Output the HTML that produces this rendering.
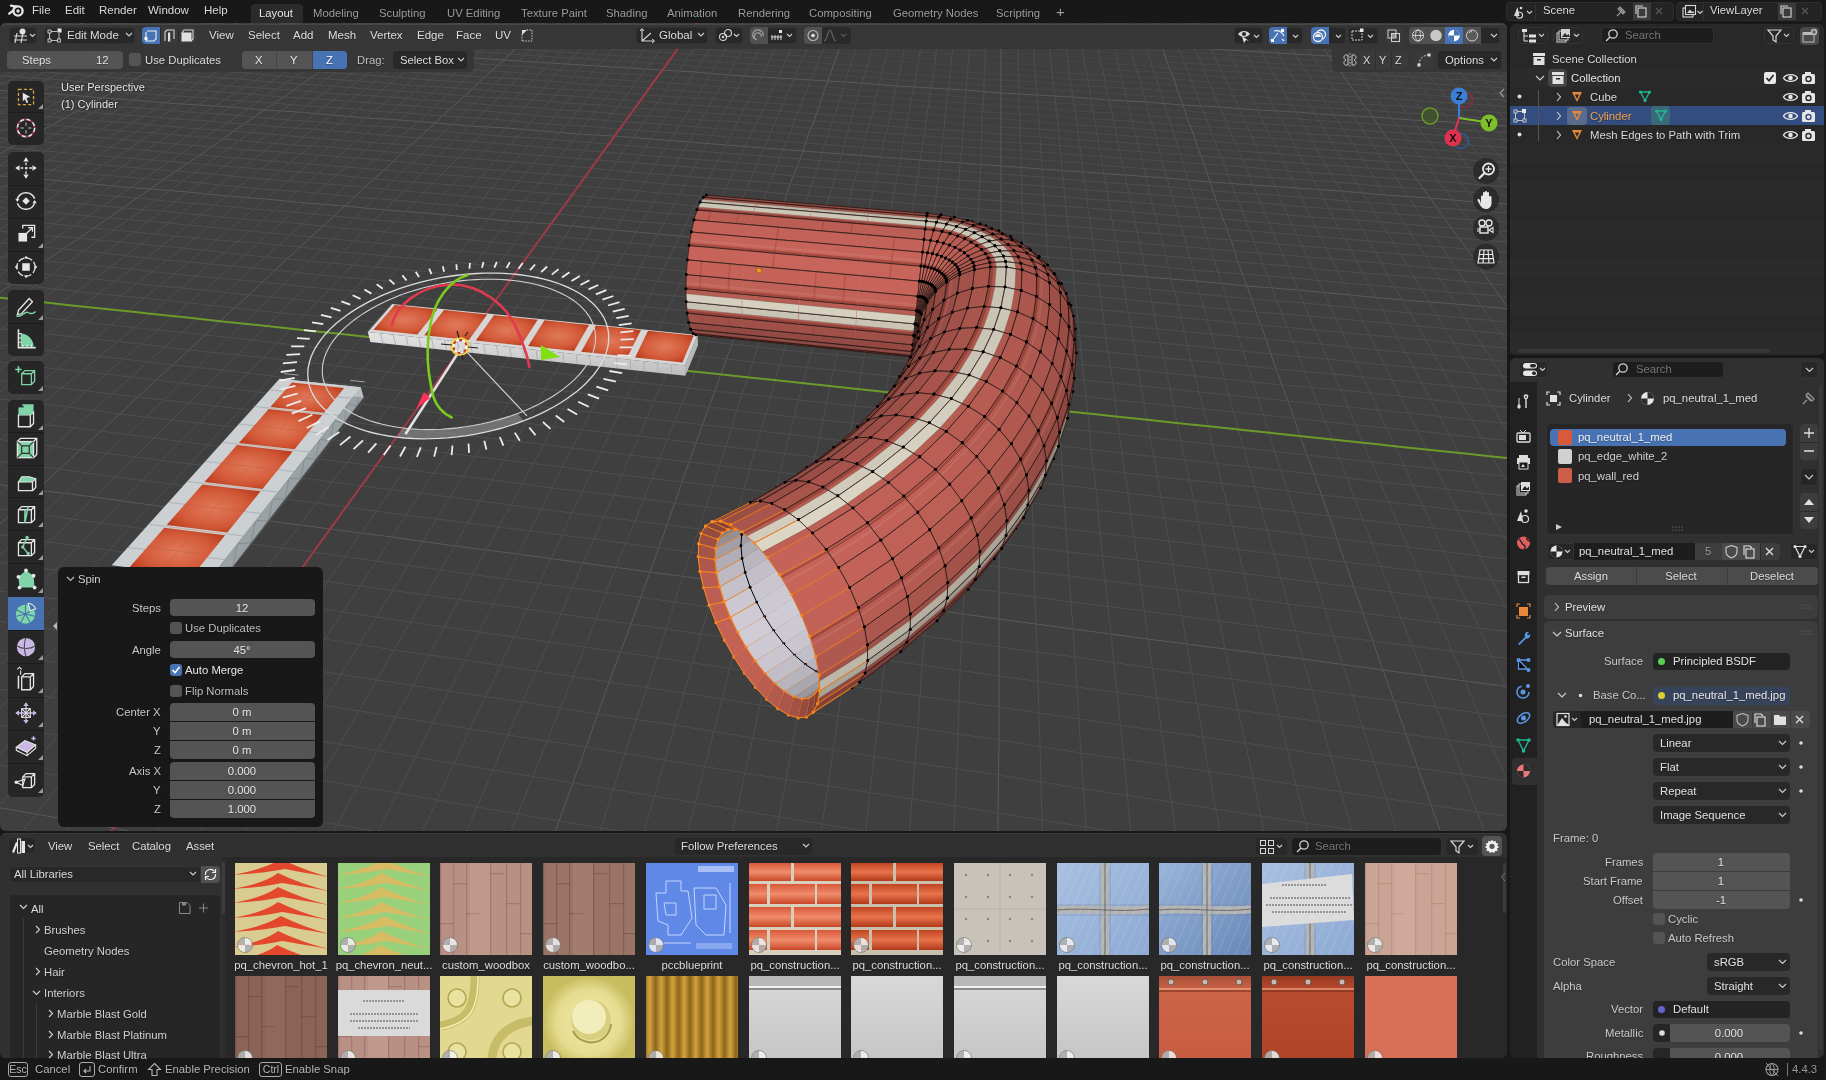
<!DOCTYPE html><html><head><meta charset="utf-8"><style>
html,body{margin:0;padding:0;overflow:hidden;}
body{width:1826px;height:1080px;position:relative;overflow:hidden;background:#181818;font-family:"Liberation Sans",sans-serif;font-size:11px;color:#d6d6d6;}
.r{position:absolute;box-sizing:border-box;}
.t{position:absolute;white-space:nowrap;line-height:14px;-webkit-font-smoothing:antialiased;will-change:transform;text-shadow:0 1px 1px rgba(0,0,0,.3);}
svg{position:absolute;}
.e{stroke:#141010;stroke-width:.8;stroke-opacity:.9;fill:none}
.eo{stroke:#e87a18;stroke-width:.9;fill:none}
.d{stroke:#000;stroke-width:2.9;stroke-linecap:round}
.do{stroke:#ff8a18;stroke-width:2.9;stroke-linecap:round}
</style></head><body>
<div class="r" style="left:0px;top:23px;width:1507px;height:808px;background:#3f3f3f;border-radius:6px;overflow:hidden;"></div>
<div class="r" style="left:0px;top:833px;width:1507px;height:225px;background:#2a2a2a;border-radius:6px;"></div>
<div class="r" style="left:1510px;top:24px;width:314px;height:331px;background:#282828;border-radius:6px;"></div>
<div class="r" style="left:1510px;top:358px;width:314px;height:700px;background:#2b2b2b;border-radius:6px;"></div>
<div class="r" style="left:1510px;top:358px;width:314px;height:24px;background:#303030;border-radius:6px 6px 0 0;"></div>
<div class="r" style="left:1519px;top:361px;width:29px;height:17px;background:#282828;border-radius:4px;border:1px solid #333;"></div>
<svg style="left:1521px;top:361px" width="27" height="17" viewBox="0 0 27 17"><rect x="2" y="2" width="14" height="5.5" rx="2.75" fill="#e6e6e6"/><rect x="9" y="3" width="6" height="3.5" rx="1.75" fill="#282828"/><rect x="2" y="9.5" width="14" height="5.5" rx="2.75" fill="#e6e6e6"/><rect x="11" y="10.5" width="4" height="3.5" rx="1.75" fill="#282828"/><path d="M19 7 l2.5 2.5 l2.5 -2.5" stroke="#cfcfcf" fill="none" stroke-width="1.1"/></svg>
<div class="r" style="left:1612px;top:361px;width:112px;height:17px;background:#1d1d1d;border-radius:4px;border:1px solid #303030;"></div>
<svg style="left:1614px;top:361px" width="16" height="17" viewBox="0 0 16 17"><circle cx="9" cy="7" r="4.2" fill="none" stroke="#cfcfcf" stroke-width="1.3"/><path d="M6 10 L2 14" stroke="#cfcfcf" stroke-width="1.5"/></svg>
<div class="t" style="left:1636px;top:362px;color:#777;font-size:11.3px;">Search</div>
<div class="r" style="left:1800px;top:361px;width:18px;height:17px;background:#282828;border-radius:4px;border:1px solid #333;"></div>
<svg style="left:1805px;top:367px" width="9" height="6"><path d="M1 1 l3.5 3.5 l3.5 -3.5" stroke="#cfcfcf" fill="none" stroke-width="1.1"/></svg>
<div class="r" style="left:1510px;top:382px;width:27px;height:676px;background:#212121;border-radius:0 0 0 6px;"></div>
<div class="r" style="left:1537px;top:382px;width:287px;height:676px;background:#303030;border-radius:0 0 6px 0;"></div>
<div class="r" style="left:1512px;top:758px;width:27px;height:27px;background:#303030;border-radius:4px 0 0 4px;"></div>
<svg style="left:1515px;top:392px" width="17" height="18" viewBox="0 0 17 18"><path d="M4 6 V13 M3 13 h2 v3 h-2 z" stroke="#ddd" fill="#ddd"/><path d="M11 3 C9 3 9 6 11 7 V16 M11 7 C13 6 13 3 11 3 M9.5 3 V5 M12.5 3 V5" stroke="#ddd" fill="none" stroke-width="1.4"/></svg>
<svg style="left:1515px;top:427px" width="17" height="18" viewBox="0 0 17 18"><rect x="2" y="6" width="13" height="9" rx="1" fill="none" stroke="#ddd" stroke-width="1.3"/><rect x="4" y="8" width="7" height="5" fill="#ddd"/><path d="M5 3 L8 6 L11 3" stroke="#ddd" fill="none"/></svg>
<svg style="left:1515px;top:453px" width="17" height="18" viewBox="0 0 17 18"><rect x="2" y="5" width="13" height="6" fill="#ddd"/><rect x="4" y="2" width="9" height="3" fill="#ddd"/><rect x="4" y="9" width="9" height="7" fill="#1d1d1d" stroke="#ddd"/><path d="M6 14 L8 11 L10 14" fill="#ddd"/></svg>
<svg style="left:1515px;top:480px" width="17" height="18" viewBox="0 0 17 18"><rect x="2" y="6" width="9" height="9" fill="none" stroke="#ddd"/><rect x="4" y="4" width="9" height="9" fill="#1d1d1d" stroke="#ddd"/><rect x="6" y="2" width="9" height="9" fill="#ddd"/><path d="M7 10 L10 6 L12 8.5 L14 6.5 V10 Z" fill="#1d1d1d"/></svg>
<svg style="left:1515px;top:507px" width="17" height="18" viewBox="0 0 17 18"><path d="M2 14 L6 4 L8 14 Z" fill="#ddd"/><circle cx="11" cy="4" r="1.8" fill="#ddd"/><circle cx="10" cy="12" r="3.5" fill="none" stroke="#ddd" stroke-width="1.2"/></svg>
<svg style="left:1515px;top:534px" width="17" height="18" viewBox="0 0 17 18"><circle cx="8.5" cy="9" r="6.5" fill="#e06060"/><path d="M4 5 C7 7 6 10 9 11 C11 12 10 14 9 15.5 M12 3.5 C11 5 13 7 15 7" stroke="#1d1d1d" fill="none" stroke-width="1.3"/></svg>
<svg style="left:1515px;top:568px" width="17" height="18" viewBox="0 0 17 18"><rect x="2.5" y="3" width="12" height="3.5" fill="#ddd"/><rect x="3.5" y="6.5" width="10" height="8" fill="none" stroke="#ddd" stroke-width="1.3"/><rect x="6.5" y="8.5" width="4" height="1.5" fill="#ddd"/></svg>
<svg style="left:1515px;top:602px" width="17" height="18" viewBox="0 0 17 18"><rect x="4" y="5" width="9" height="9" fill="#e8883a"/><path d="M2 5 V2 H5 M12 2 H15 V5 M15 13 V16 H12 M5 16 H2 V13" stroke="#e8883a" fill="none" stroke-width="1.2"/></svg>
<svg style="left:1515px;top:629px" width="17" height="18" viewBox="0 0 17 18"><path d="M3 15 L10 8 C9 5 11 2 14 3 L12 5 L13 6.5 L15 5 C16 8 13 10 11 9.5 L4.5 16 Z" fill="#5a98e6"/></svg>
<svg style="left:1515px;top:656px" width="17" height="18" viewBox="0 0 17 18"><circle cx="3.5" cy="4" r="2" fill="#5a98e6"/><circle cx="13.5" cy="4" r="2" fill="#5a98e6"/><circle cx="13.5" cy="14" r="2" fill="#5a98e6"/><path d="M3.5 4 V13 H13.5 M3.5 4 L13.5 14 M3.5 4 H12" stroke="#5a98e6" stroke-width="1.3"/></svg>
<svg style="left:1515px;top:682px" width="17" height="18" viewBox="0 0 17 18"><circle cx="8" cy="10" r="6" fill="none" stroke="#5a98e6" stroke-width="1.5" stroke-dasharray="26 12"/><circle cx="8" cy="10" r="2.5" fill="#5a98e6"/><circle cx="13" cy="4" r="2" fill="#5a98e6"/></svg>
<svg style="left:1515px;top:709px" width="17" height="18" viewBox="0 0 17 18"><ellipse cx="8.5" cy="9" rx="7" ry="4" transform="rotate(-35 8.5 9)" fill="none" stroke="#5a98e6" stroke-width="1.5"/><circle cx="8.5" cy="9" r="2.5" fill="#5a98e6"/></svg>
<svg style="left:1515px;top:736px" width="17" height="18" viewBox="0 0 17 18"><path d="M3 4 H14 L8.5 15 Z" fill="none" stroke="#21b792" stroke-width="1.4"/><circle cx="3" cy="4" r="1.8" fill="#21b792"/><circle cx="14" cy="4" r="1.8" fill="#21b792"/><circle cx="8.5" cy="15" r="1.8" fill="#21b792"/></svg>
<svg style="left:1515px;top:762px" width="17" height="18" viewBox="0 0 17 18"><circle cx="8.5" cy="9" r="6.5" fill="#e87878"/><path d="M8.5 9 V2.5 A6.5 6.5 0 0 1 15 9 Z M8.5 9 H2 A6.5 6.5 0 0 0 8.5 15.5 Z" fill="#2b2b2b"/></svg>
<svg style="left:1546px;top:391px" width="15" height="15" viewBox="0 0 15 15"><rect x="4" y="4" width="7" height="7" fill="#e0e0e0"/><path d="M1 4 V1 H4 M11 1 H14 V4 M14 11 V14 H11 M4 14 H1 V11" stroke="#e0e0e0" fill="none" stroke-width="1.2"/></svg>
<div class="t" style="left:1569px;top:391px;color:#dcdcdc;font-size:11.3px;">Cylinder</div>
<svg style="left:1626px;top:393px" width="8" height="10"><path d="M2 1 l3.5 4 l-3.5 4" stroke="#cfcfcf" fill="none" stroke-width="1.1"/></svg>
<svg style="left:1640px;top:391px" width="15" height="15" viewBox="0 0 15 15"><circle cx="7.5" cy="7.5" r="6.5" fill="#e8e8e8"/><path d="M7.5 7.5 V1 A6.5 6.5 0 0 1 14 7.5 Z M7.5 7.5 H1 A6.5 6.5 0 0 0 7.5 14 Z" fill="#2b2b2b"/></svg>
<div class="t" style="left:1663px;top:391px;color:#dcdcdc;font-size:11.3px;">pq_neutral_1_med</div>
<svg style="left:1801px;top:390px" width="16" height="16" viewBox="0 0 16 16"><path d="M2 14 L6 10 M5 6 L10 11 M7 3 L13 9 L11 11 L5 5 Z" stroke="#999" fill="none" stroke-width="1.2"/></svg>
<div class="r" style="left:1546px;top:423px;width:248px;height:112px;background:#262626;border-radius:5px;border:1px solid #333;"></div>
<div class="r" style="left:1550px;top:429px;width:236px;height:17px;background:#4772b3;border-radius:4px;"></div>
<div class="r" style="left:1558px;top:430px;width:14px;height:15px;background:#d85a3a;border-radius:2px;"></div>
<div class="t" style="left:1578px;top:430px;color:#f0f0f0;font-size:11.3px;">pq_neutral_1_med</div>
<div class="r" style="left:1558px;top:449px;width:14px;height:15px;background:#d0d0d0;border-radius:2px;"></div>
<div class="t" style="left:1578px;top:449px;color:#d0d0d0;font-size:11.3px;">pq_edge_white_2</div>
<div class="r" style="left:1558px;top:468px;width:14px;height:15px;background:#cc5e4a;border-radius:2px;"></div>
<div class="t" style="left:1578px;top:469px;color:#d0d0d0;font-size:11.3px;">pq_wall_red</div>
<svg style="left:1555px;top:523px" width="8" height="8"><path d="M1 1 L7 4 L1 7 Z" fill="#ccc"/></svg>
<svg style="left:1672px;top:526px" width="12" height="5"><path d="M1 1h0M4 1h0M7 1h0M10 1h0M1 4h0M4 4h0M7 4h0M10 4h0" stroke="#888" stroke-width="1.2" stroke-linecap="round"/></svg>
<div class="r" style="left:1800px;top:424px;width:18px;height:36px;background:#3d3d3d;border-radius:4px;"></div>
<div class="r" style="left:1800px;top:442px;width:18px;height:1px;background:#2b2b2b;"></div>
<svg style="left:1800px;top:424px" width="18" height="36"><path d="M9 4 V14 M4 9 H14 M4 27 H14" stroke="#e0e0e0" stroke-width="1.3"/></svg>
<div class="r" style="left:1800px;top:468px;width:18px;height:18px;background:#262626;border-radius:4px;border:1px solid #333;"></div>
<svg style="left:1804px;top:474px" width="10" height="7"><path d="M1 1 l4 4 l4 -4" stroke="#cfcfcf" fill="none" stroke-width="1.1"/></svg>
<div class="r" style="left:1800px;top:493px;width:18px;height:36px;background:#3d3d3d;border-radius:4px;"></div>
<svg style="left:1800px;top:493px" width="18" height="36"><path d="M4 12 L9 6 L14 12 Z M4 24 L9 30 L14 24 Z" fill="#e0e0e0"/></svg>
<div class="r" style="left:1800px;top:511px;width:18px;height:1px;background:#2b2b2b;"></div>
<div class="r" style="left:1547px;top:543px;width:27px;height:17px;background:#262626;border-radius:4px 0 0 4px;border:1px solid #333;"></div>
<svg style="left:1549px;top:544px" width="24" height="15" viewBox="0 0 24 15"><circle cx="7.5" cy="7.5" r="6" fill="#e8e8e8"/><path d="M7.5 7.5 V1.5 A6 6 0 0 1 13.5 7.5 Z M7.5 7.5 H1.5 A6 6 0 0 0 7.5 13.5 Z" fill="#262626"/><path d="M16 6 l2.5 2.5 l2.5 -2.5" stroke="#cfcfcf" fill="none" stroke-width="1.1"/></svg>
<div class="r" style="left:1574px;top:543px;width:121px;height:17px;background:#1d1d1d;"></div>
<div class="t" style="left:1579px;top:544px;color:#e0e0e0;font-size:11.3px;">pq_neutral_1_med</div>
<div class="r" style="left:1695px;top:543px;width:85px;height:17px;background:#3d3d3d;border-radius:0 4px 4px 0;"></div>
<div class="t" style="left:1705px;top:544px;color:#999;font-size:11.3px;">5</div>
<div class="r" style="left:1722px;top:543px;width:1px;height:17px;background:#2b2b2b;"></div>
<div class="r" style="left:1741px;top:543px;width:1px;height:17px;background:#2b2b2b;"></div>
<div class="r" style="left:1760px;top:543px;width:1px;height:17px;background:#2b2b2b;"></div>
<div class="r" style="left:1722px;top:543px;width:38px;height:17px;background:#4a4a4a;"></div>
<svg style="left:1722px;top:543px" width="58" height="17" viewBox="0 0 58 17"><path d="M9.5 2.5 L15 4.5 V9 C15 12 12 14 9.5 15 C7 14 4 12 4 9 V4.5 Z" fill="none" stroke="#cfcfcf" stroke-width="1.1"/><rect x="24" y="6" width="8" height="9" fill="none" stroke="#e0e0e0" stroke-width="1.1"/><path d="M22 12 V3 H28 L30 5" stroke="#e0e0e0" fill="none" stroke-width="1.1"/><path d="M44 5 l7 7 M51 5 l-7 7" stroke="#e0e0e0" stroke-width="1.3"/></svg>
<div class="r" style="left:1790px;top:543px;width:28px;height:17px;background:#262626;border-radius:4px;border:1px solid #333;"></div>
<svg style="left:1792px;top:543px" width="26" height="17" viewBox="0 0 26 17"><path d="M3 3.5 H13 L8 13.5 Z" fill="none" stroke="#e0e0e0" stroke-width="1.2"/><circle cx="3" cy="3.5" r="1.6" fill="#e0e0e0"/><circle cx="13" cy="3.5" r="1.6" fill="#e0e0e0"/><circle cx="8" cy="13.5" r="1.6" fill="#e0e0e0"/><path d="M17 7 l2.5 2.5 l2.5 -2.5" stroke="#cfcfcf" fill="none" stroke-width="1.1"/></svg>
<div class="r" style="left:1546px;top:567px;width:272px;height:18px;background:#4b4b4b;border-radius:4px;"></div>
<div class="r" style="left:1636px;top:567px;width:1px;height:18px;background:#3a3a3a;"></div>
<div class="r" style="left:1727px;top:567px;width:1px;height:18px;background:#3a3a3a;"></div>
<div class="t" style="left:1391px;width:400px;text-align:center;top:569px;color:#dcdcdc;font-size:11.3px;">Assign</div>
<div class="t" style="left:1481px;width:400px;text-align:center;top:569px;color:#dcdcdc;font-size:11.3px;">Select</div>
<div class="t" style="left:1572px;width:400px;text-align:center;top:569px;color:#dcdcdc;font-size:11.3px;">Deselect</div>
<div class="r" style="left:1544px;top:595px;width:274px;height:24px;background:#3d3d3d;border-radius:5px;"></div>
<svg style="left:1553px;top:602px" width="8" height="10"><path d="M2 1 l3.5 4 l-3.5 4" stroke="#cfcfcf" fill="none" stroke-width="1.1"/></svg>
<div class="t" style="left:1565px;top:600px;color:#e0e0e0;font-size:11.3px;">Preview</div>
<svg style="left:1801px;top:604px" width="12" height="6"><path d="M1 1h0M4 1h0M7 1h0M10 1h0M1 4h0M4 4h0M7 4h0M10 4h0" stroke="#777" stroke-width="1.1" stroke-linecap="round"/></svg>
<div class="r" style="left:1544px;top:621px;width:274px;height:437px;background:#3d3d3d;border-radius:5px 5px 0 0;"></div>
<svg style="left:1552px;top:630px" width="10" height="8"><path d="M1 2 l4 4 l4 -4" stroke="#cfcfcf" fill="none" stroke-width="1.1"/></svg>
<div class="t" style="left:1565px;top:626px;color:#e0e0e0;font-size:11.3px;">Surface</div>
<svg style="left:1801px;top:630px" width="12" height="6"><path d="M1 1h0M4 1h0M7 1h0M10 1h0M1 4h0M4 4h0M7 4h0M10 4h0" stroke="#777" stroke-width="1.1" stroke-linecap="round"/></svg>
<div class="t" style="right:183px;top:654px;color:#c8c8c8;font-size:11.3px;">Surface</div>
<div class="r" style="left:1653px;top:653px;width:137px;height:17px;background:#232323;border-radius:4px;"></div>
<svg style="left:1657px;top:657px" width="9" height="9"><circle cx="4.5" cy="4.5" r="3.5" fill="#5ad05a"/></svg>
<div class="t" style="left:1673px;top:654px;color:#e0e0e0;font-size:11.3px;">Principled BSDF</div>
<svg style="left:1557px;top:691px" width="10" height="8"><path d="M1 2 l4 4 l4 -4" stroke="#cfcfcf" fill="none" stroke-width="1.1"/></svg>
<svg style="left:1578px;top:693px" width="5" height="5"><circle cx="2.5" cy="2.5" r="1.8" fill="#ddd"/></svg>
<div class="t" style="left:1593px;top:688px;color:#c8c8c8;font-size:11.3px;">Base Co...</div>
<div class="r" style="left:1653px;top:687px;width:137px;height:18px;background:#37435a;border-radius:4px;"></div>
<svg style="left:1657px;top:691px" width="9" height="9"><circle cx="4.5" cy="4.5" r="3.5" fill="#d8d030"/></svg>
<div class="t" style="left:1673px;top:688px;color:#e6e6e6;font-size:11.3px;">pq_neutral_1_med.jpg</div>
<div class="r" style="left:1553px;top:711px;width:28px;height:17px;background:#262626;border-radius:4px 0 0 4px;"></div>
<svg style="left:1555px;top:711px" width="26" height="17" viewBox="0 0 26 17"><rect x="2" y="2.5" width="12" height="12" fill="none" stroke="#e0e0e0" stroke-width="1.2"/><path d="M2.5 14 L7 7 L10 11 L14 14 Z" fill="#e0e0e0"/><circle cx="10.5" cy="5.5" r="1.3" fill="#e0e0e0"/><path d="M17 7 l2.5 2.5 l2.5 -2.5" stroke="#cfcfcf" fill="none" stroke-width="1.1"/></svg>
<div class="r" style="left:1581px;top:711px;width:152px;height:17px;background:#1d1d1d;"></div>
<div class="t" style="left:1589px;top:712px;color:#e0e0e0;font-size:11.3px;">pq_neutral_1_med.jpg</div>
<div class="r" style="left:1733px;top:711px;width:77px;height:17px;background:#4a4a4a;border-radius:0 4px 4px 0;"></div>
<div class="r" style="left:1752px;top:711px;width:1px;height:17px;background:#3a3a3a;"></div>
<div class="r" style="left:1771px;top:711px;width:1px;height:17px;background:#3a3a3a;"></div>
<div class="r" style="left:1790px;top:711px;width:1px;height:17px;background:#3a3a3a;"></div>
<svg style="left:1733px;top:711px" width="77" height="17" viewBox="0 0 77 17"><path d="M9.5 2.5 L15 4.5 V9 C15 12 12 14 9.5 15 C7 14 4 12 4 9 V4.5 Z" fill="none" stroke="#bbb" stroke-width="1.1"/><rect x="24" y="6" width="8" height="9" fill="none" stroke="#e0e0e0" stroke-width="1.1"/><path d="M22 12 V3 H28 L30 5" stroke="#e0e0e0" fill="none" stroke-width="1.1"/><path d="M41 4 H46 L47 5.5 H53 V14 H41 Z" fill="#e0e0e0"/><path d="M63 5 l7 7 M70 5 l-7 7" stroke="#e0e0e0" stroke-width="1.3"/></svg>
<div class="r" style="left:1653px;top:734px;width:137px;height:18px;background:#282828;border-radius:4px;"></div>
<div class="t" style="left:1660px;top:736px;color:#e0e0e0;font-size:11.3px;">Linear</div>
<svg style="left:1778px;top:740px" width="9" height="6"><path d="M1 1 l3.5 3.5 l3.5 -3.5" stroke="#cfcfcf" fill="none" stroke-width="1.1"/></svg>
<svg style="left:1798px;top:740px" width="6" height="6"><circle cx="3" cy="3" r="1.8" fill="#ddd"/></svg>
<div class="r" style="left:1653px;top:758px;width:137px;height:18px;background:#282828;border-radius:4px;"></div>
<div class="t" style="left:1660px;top:760px;color:#e0e0e0;font-size:11.3px;">Flat</div>
<svg style="left:1778px;top:764px" width="9" height="6"><path d="M1 1 l3.5 3.5 l3.5 -3.5" stroke="#cfcfcf" fill="none" stroke-width="1.1"/></svg>
<svg style="left:1798px;top:764px" width="6" height="6"><circle cx="3" cy="3" r="1.8" fill="#ddd"/></svg>
<div class="r" style="left:1653px;top:782px;width:137px;height:18px;background:#282828;border-radius:4px;"></div>
<div class="t" style="left:1660px;top:784px;color:#e0e0e0;font-size:11.3px;">Repeat</div>
<svg style="left:1778px;top:788px" width="9" height="6"><path d="M1 1 l3.5 3.5 l3.5 -3.5" stroke="#cfcfcf" fill="none" stroke-width="1.1"/></svg>
<svg style="left:1798px;top:788px" width="6" height="6"><circle cx="3" cy="3" r="1.8" fill="#ddd"/></svg>
<div class="r" style="left:1653px;top:806px;width:137px;height:18px;background:#282828;border-radius:4px;"></div>
<div class="t" style="left:1660px;top:808px;color:#e0e0e0;font-size:11.3px;">Image Sequence</div>
<svg style="left:1778px;top:812px" width="9" height="6"><path d="M1 1 l3.5 3.5 l3.5 -3.5" stroke="#cfcfcf" fill="none" stroke-width="1.1"/></svg>
<div class="t" style="left:1553px;top:831px;color:#c8c8c8;font-size:11.3px;">Frame: 0</div>
<div class="t" style="right:183px;top:855px;color:#c8c8c8;font-size:11.3px;">Frames</div>
<div class="r" style="left:1653px;top:853px;width:137px;height:18px;background:#545454;border-radius:4px 4px 0 0;"></div>
<div class="t" style="left:1521px;width:400px;text-align:center;top:855px;color:#e0e0e0;font-size:11.3px;">1</div>
<div class="t" style="right:183px;top:874px;color:#c8c8c8;font-size:11.3px;">Start Frame</div>
<div class="r" style="left:1653px;top:872px;width:137px;height:18px;background:#545454;border-radius:0;"></div>
<div class="t" style="left:1521px;width:400px;text-align:center;top:874px;color:#e0e0e0;font-size:11.3px;">1</div>
<div class="t" style="right:183px;top:893px;color:#c8c8c8;font-size:11.3px;">Offset</div>
<div class="r" style="left:1653px;top:891px;width:137px;height:18px;background:#545454;border-radius:0 0 4px 4px;"></div>
<div class="t" style="left:1521px;width:400px;text-align:center;top:893px;color:#e0e0e0;font-size:11.3px;">-1</div>
<svg style="left:1798px;top:897px" width="6" height="6"><circle cx="3" cy="3" r="1.8" fill="#ddd"/></svg>
<div class="r" style="left:1653px;top:913px;width:12px;height:12px;background:#545454;border-radius:3px;"></div>
<div class="t" style="left:1668px;top:912px;color:#c8c8c8;font-size:11.3px;">Cyclic</div>
<div class="r" style="left:1653px;top:932px;width:12px;height:12px;background:#545454;border-radius:3px;"></div>
<div class="t" style="left:1668px;top:931px;color:#c8c8c8;font-size:11.3px;">Auto Refresh</div>
<div class="t" style="left:1553px;top:955px;color:#c8c8c8;font-size:11.3px;">Color Space</div>
<div class="r" style="left:1707px;top:953px;width:83px;height:18px;background:#282828;border-radius:4px;"></div>
<div class="t" style="left:1714px;top:955px;color:#e0e0e0;font-size:11.3px;">sRGB</div>
<svg style="left:1778px;top:959px" width="9" height="6"><path d="M1 1 l3.5 3.5 l3.5 -3.5" stroke="#cfcfcf" fill="none" stroke-width="1.1"/></svg>
<div class="t" style="left:1553px;top:979px;color:#c8c8c8;font-size:11.3px;">Alpha</div>
<div class="r" style="left:1707px;top:977px;width:83px;height:18px;background:#282828;border-radius:4px;"></div>
<div class="t" style="left:1714px;top:979px;color:#e0e0e0;font-size:11.3px;">Straight</div>
<svg style="left:1778px;top:983px" width="9" height="6"><path d="M1 1 l3.5 3.5 l3.5 -3.5" stroke="#cfcfcf" fill="none" stroke-width="1.1"/></svg>
<div class="t" style="right:183px;top:1002px;color:#c8c8c8;font-size:11.3px;">Vector</div>
<div class="r" style="left:1653px;top:1001px;width:137px;height:17px;background:#232323;border-radius:4px;"></div>
<svg style="left:1657px;top:1005px" width="9" height="9"><circle cx="4.5" cy="4.5" r="3.5" fill="#6464d0"/></svg>
<div class="t" style="left:1673px;top:1002px;color:#e0e0e0;font-size:11.3px;">Default</div>
<div class="t" style="right:183px;top:1026px;color:#c8c8c8;font-size:11.3px;">Metallic</div>
<div class="r" style="left:1653px;top:1024px;width:137px;height:18px;background:#545454;border-radius:4px;"></div>
<div class="r" style="left:1653px;top:1024px;width:17px;height:18px;background:#262626;border-radius:4px 0 0 4px;"></div>
<svg style="left:1658px;top:1029px" width="8" height="8"><circle cx="4" cy="4" r="2.8" fill="#ddd"/></svg>
<div class="t" style="left:1529px;width:400px;text-align:center;top:1026px;color:#e0e0e0;font-size:11.3px;">0.000</div>
<svg style="left:1798px;top:1030px" width="6" height="6"><circle cx="3" cy="3" r="1.8" fill="#ddd"/></svg>
<div class="t" style="right:183px;top:1049px;color:#c8c8c8;font-size:11.3px;">Roughness</div>
<div class="r" style="left:1653px;top:1048px;width:137px;height:10px;background:#545454;border-radius:4px 4px 0 0;"></div>
<div class="r" style="left:1653px;top:1048px;width:17px;height:10px;background:#262626;border-radius:4px 0 0 0;"></div>
<div class="t" style="left:1529px;width:400px;text-align:center;top:1050px;color:#e0e0e0;font-size:11.3px;">0.000</div>
<div class="r" style="left:1819px;top:385px;width:3px;height:665px;background:#3a3a3a;border-radius:2px;"></div>
<div class="r" style="left:0px;top:1058px;width:1826px;height:22px;background:#181818;"></div>
<div class="r" style="left:8px;top:1062px;width:20px;height:15px;background:transparent;border:1px solid #aaa;border-radius:3px;"></div>
<div class="t" style="left:-182.0px;width:400px;text-align:center;top:1062px;color:#b4b4b4;font-size:10.5px;">Esc</div>
<div class="t" style="left:35px;top:1062px;color:#b4b4b4;font-size:11.3px;">Cancel</div>
<div class="r" style="left:79px;top:1062px;width:16px;height:15px;background:transparent;border:1px solid #aaa;border-radius:3px;"></div>
<svg style="left:81px;top:1063px" width="12" height="13"><path d="M9 3 V8 H3 M5 6 L3 8 L5 10" stroke="#b4b4b4" fill="none" stroke-width="1.1"/></svg>
<div class="t" style="left:98px;top:1062px;color:#b4b4b4;font-size:11.3px;">Confirm</div>
<svg style="left:147px;top:1062px" width="15" height="15" viewBox="0 0 15 15"><path d="M7.5 1.5 L13.5 7.5 H10 V13.5 H5 V7.5 H1.5 Z" fill="none" stroke="#b4b4b4" stroke-width="1.1"/></svg>
<div class="t" style="left:165px;top:1062px;color:#b4b4b4;font-size:11.3px;">Enable Precision</div>
<div class="r" style="left:259px;top:1062px;width:23px;height:15px;background:transparent;border:1px solid #aaa;border-radius:3px;"></div>
<div class="t" style="left:70.5px;width:400px;text-align:center;top:1062px;color:#b4b4b4;font-size:10.5px;">Ctrl</div>
<div class="t" style="left:285px;top:1062px;color:#b4b4b4;font-size:11.3px;">Enable Snap</div>
<svg style="left:1764px;top:1062px" width="16" height="15" viewBox="0 0 16 15"><circle cx="8" cy="7.5" r="6" fill="none" stroke="#999" stroke-width="1.1"/><path d="M2 7.5 H14 M8 1.5 C5 4 5 11 8 13.5 M8 1.5 C11 4 11 11 8 13.5 M2 1 L14 14" stroke="#999" fill="none" stroke-width="1"/></svg>
<div class="r" style="left:1787px;top:1063px;width:1px;height:13px;background:#777;"></div>
<div class="t" style="left:1792px;top:1062px;color:#999;font-size:11.3px;">4.4.3</div>
<svg style="left:0px;top:0px" width="26" height="20" viewBox="0 0 26 20">
<path d="M9.2 13.6 L14.5 9.6 M11 5.6 L16.5 6.8" stroke="#e6e6e6" stroke-width="2.3" stroke-linecap="round"/>
<path d="M10.8 5.2 L17.5 5.4 L14.5 8.5 Z" fill="#e6e6e6"/>
<circle cx="18" cy="11" r="4.6" fill="#181818" stroke="#e6e6e6" stroke-width="2.4"/><circle cx="18" cy="11" r="1.7" fill="#e6e6e6"/>
</svg>
<div class="t" style="left:32px;top:3.3000000000000007px;color:#d9d9d9;font-size:11.5px;">File</div>
<div class="t" style="left:65px;top:3.3000000000000007px;color:#d9d9d9;font-size:11.5px;">Edit</div>
<div class="t" style="left:99px;top:3.3000000000000007px;color:#d9d9d9;font-size:11.5px;">Render</div>
<div class="t" style="left:148px;top:3.3000000000000007px;color:#d9d9d9;font-size:11.5px;">Window</div>
<div class="t" style="left:204px;top:3.3000000000000007px;color:#d9d9d9;font-size:11.5px;">Help</div>
<div class="r" style="left:251px;top:4px;width:52px;height:19px;background:#2b2b2b;border-radius:4px 4px 0 0;"></div>
<div class="t" style="left:259px;top:6px;color:#e6e6e6;font-size:11.3px;">Layout</div>
<div class="t" style="left:313px;top:6px;color:#9c9c9c;font-size:11.3px;">Modeling</div>
<div class="t" style="left:379px;top:6px;color:#9c9c9c;font-size:11.3px;">Sculpting</div>
<div class="t" style="left:447px;top:6px;color:#9c9c9c;font-size:11.3px;">UV Editing</div>
<div class="t" style="left:521px;top:6px;color:#9c9c9c;font-size:11.3px;">Texture Paint</div>
<div class="t" style="left:606px;top:6px;color:#9c9c9c;font-size:11.3px;">Shading</div>
<div class="t" style="left:667px;top:6px;color:#9c9c9c;font-size:11.3px;">Animation</div>
<div class="t" style="left:738px;top:6px;color:#9c9c9c;font-size:11.3px;">Rendering</div>
<div class="t" style="left:809px;top:6px;color:#9c9c9c;font-size:11.3px;">Compositing</div>
<div class="t" style="left:893px;top:6px;color:#9c9c9c;font-size:11.3px;">Geometry Nodes</div>
<div class="t" style="left:996px;top:6px;color:#9c9c9c;font-size:11.3px;">Scripting</div>
<div class="t" style="left:1056px;top:5px;color:#9c9c9c;font-size:15px;">+</div>
<div class="r" style="left:1506px;top:2px;width:168px;height:19px;background:#242424;border-radius:4px;border:1px solid #2e2e2e;"></div>
<div class="r" style="left:1535px;top:3px;width:1px;height:17px;background:#303030;"></div>
<svg style="left:1510px;top:3px" width="26" height="17" viewBox="0 0 26 17"><path d="M4 13 L7.5 4 L9.5 13 Z" fill="#d8d8d8"/><circle cx="11" cy="5" r="1.3" fill="#d8d8d8"/><circle cx="9.6" cy="12.2" r="3" fill="none" stroke="#d8d8d8" stroke-width="1.1"/><path d="M17 8 l2.5 2.5 l2.5 -2.5" stroke="#cfcfcf" fill="none" stroke-width="1.1"/></svg>
<div class="t" style="left:1543px;top:3px;color:#d9d9d9;font-size:11.3px;">Scene</div>
<svg style="left:1611px;top:3px" width="60" height="17" viewBox="0 0 60 17"><path d="M6 13 L9.5 9.5 M8 5 L13 10 M9 4 L14 9 L12 11 L7 6 Z" stroke="#9a9a9a" fill="none" stroke-width="1.1"/><rect x="22" y="0" width="18" height="17" fill="#3b3b3b"/><rect x="27" y="5" width="8" height="9" fill="none" stroke="#d8d8d8" stroke-width="1.1"/><path d="M25 11 V3 H32" stroke="#d8d8d8" fill="none" stroke-width="1.1"/><path d="M45 5 l6 6 M51 5 l-6 6" stroke="#5a5a5a" stroke-width="1.1"/></svg>
<div class="r" style="left:1676px;top:2px;width:146px;height:19px;background:#242424;border-radius:4px;border:1px solid #2e2e2e;"></div>
<div class="r" style="left:1703px;top:3px;width:1px;height:17px;background:#303030;"></div>
<svg style="left:1680px;top:3px" width="26" height="17" viewBox="0 0 26 17"><rect x="3" y="5" width="10" height="9" fill="none" stroke="#d8d8d8" stroke-width="1.1"/><rect x="5.5" y="2.5" width="10" height="9" fill="#242424" stroke="#d8d8d8" stroke-width="1.1"/><path d="M7 10 L10 6.5 L12 9 L13 8 L14.5 10 Z" fill="#d8d8d8"/><path d="M17.5 8 l2.5 2.5 l2.5 -2.5" stroke="#cfcfcf" fill="none" stroke-width="1.1"/></svg>
<div class="t" style="left:1710px;top:3px;color:#d9d9d9;font-size:11.3px;">ViewLayer</div>
<svg style="left:1772px;top:3px" width="50" height="17" viewBox="0 0 50 17"><rect x="6" y="0" width="18" height="17" fill="#3b3b3b"/><rect x="11" y="5" width="8" height="9" fill="none" stroke="#d8d8d8" stroke-width="1.1"/><path d="M9 11 V3 H16" stroke="#d8d8d8" fill="none" stroke-width="1.1"/><path d="M30 5 l6 6 M36 5 l-6 6" stroke="#5a5a5a" stroke-width="1.1"/></svg>
<svg style="left:0;top:0" width="1507" height="831" viewBox="0 0 1507 831"><defs><clipPath id="vpc"><rect x="0" y="23" width="1507" height="808" rx="6"/></clipPath></defs><g clip-path="url(#vpc)">
<path d="M1453 20L1485 22L1518 23M1363 19L1394 21L1426 23L1458 24L1491 26M1335 22L1367 24L1399 26L1431 27L1464 29L1496 31M1307 25L1339 27L1371 29L1403 30L1436 32L1469 34M1310 30L1343 32L1375 34L1408 35L1441 37L1474 39M1281 33L1314 35L1346 37L1379 39L1412 40L1446 42M1285 38L1317 40L1350 42L1384 44L1417 46L1451 47M1255 41L1288 43L1321 45L1354 47L1388 49L1422 51M1258 46L1291 48L1325 50L1359 52L1393 54L1427 56M638 20L667 21M1197 53L1230 55L1264 57L1298 59L1333 61L1367 63L1402 65M548 19L576 21L605 23L634 24L663 26L693 28M1199 58L1233 60L1267 63L1302 65L1337 67L1372 69M486 20L514 22L543 24L572 26L601 27L630 29L660 31L689 33L719 35M1167 62L1201 64L1236 66L1270 68L1305 70L1341 72M508 27L537 29L567 30L596 32L626 34L656 36L686 38L716 40L747 41M1135 65L1169 68L1204 70L1239 72L1274 74L1309 76L1345 78M532 33L562 35L591 37L621 39L652 41L682 43L713 45L744 47L775 49M1103 69L1137 71L1171 73L1206 76L1242 78L1277 80L1313 82M557 40L587 42L617 44L648 46L678 48L709 50L741 52L772 54L804 56M1069 73L1104 75L1139 77L1174 79L1209 82L1245 84L1281 86L1317 88M582 47L612 49L643 51L674 53L706 55L738 57L770 59L802 62L834 64L867 66M1001 74L1036 76L1070 79L1105 81L1140 83L1176 85L1212 88L1248 90L1284 92M577 53L608 55L639 57L671 59L702 61L734 63L767 65L799 67L832 69L866 71L899 74L933 76L967 78L1001 80L1036 82L1071 85L1106 87L1142 89L1178 92L1214 94L1251 96M603 60L635 62L666 64L699 67L731 69L764 71L797 73L830 75L864 77L898 80L932 82L966 84L1001 86L1036 89L1072 91L1108 93L1144 96L1180 98L1217 100L1254 103M658 76L691 78L724 81L758 83L792 85L826 87L860 90L895 92L930 94L965 97L1001 99L1037 102L1074 104L1110 106L1148 109L1185 111M687 84L721 87L755 89L789 91L823 94L858 96L894 98L929 101L965 103L1001 106L1038 108L1075 111L1112 113L1149 116M717 93L751 95L786 98L821 100L856 103L892 105L928 107L964 110L1001 113L1038 115L1076 118L1113 120M783 104L819 107L854 109L891 112L927 114L964 117L1001 119L1039 122L1077 125M852 116L889 119L926 121L963 124L1001 127" stroke="#4e4e4e" stroke-opacity="0.6" stroke-width="1" fill="none"/>
<path d="M1491 26L1523 28M1496 31L1529 33M1469 34L1502 36L1535 38M1474 39L1508 41L1541 43M1446 42L1480 44L1514 46M1451 47L1485 49L1520 51M1422 51L1456 53L1491 55L1526 57M1427 56L1462 58L1497 60L1532 62M1402 65L1437 67L1473 69L1509 72M1372 69L1407 71L1443 73L1479 75L1515 77M457 19L486 20M1341 72L1376 75L1412 77L1448 79L1485 81M395 20L423 22L451 23L480 25L508 27M1345 78L1381 81L1417 83L1454 85L1491 87M332 21L360 23L388 24L416 26L445 28L474 30L503 32L532 33M1313 82L1349 84L1386 87L1423 89L1460 91M353 27L381 29L410 31L439 33L468 35L497 37L527 38L557 40M1317 88L1354 91L1391 93L1428 95L1466 98M374 34L403 36L432 38L462 40L491 42L521 44L551 46L582 47M1284 92L1321 95L1358 97L1396 99L1434 102M396 41L426 43L455 45L485 47L515 49L546 51L577 53M1251 96L1288 99L1325 101L1363 104L1401 106M419 48L449 50L479 52L510 54L540 56L572 58L603 60M1254 103L1292 105L1329 108L1368 110L1406 113M466 63L498 65L529 67L561 70L593 72L625 74L658 76M1185 111L1223 114L1261 117L1299 119L1338 122L1378 124M491 71L523 73L555 75L588 78L621 80L654 82L687 84M1149 116L1187 118L1226 121L1264 124L1304 126L1343 129M517 79L550 81L583 84L616 86L649 88L683 91L717 93M1113 120L1151 123L1190 126L1229 128L1268 131L1308 134M544 88L577 90L611 92L645 95L679 97L713 99L748 102L783 104M1077 125L1115 127L1154 130L1193 133L1232 136L1272 138L1312 141M572 96L606 99L640 101L675 104L709 106L745 109L780 111L816 114L852 116M1001 127L1039 129L1078 132L1116 135L1156 138L1195 140L1235 143L1276 146M600 105L635 108L670 110L705 113L741 115L777 118L814 121L850 123L888 126L925 129L963 131L1001 134L1040 137L1079 140L1118 142L1158 145L1198 148L1239 151M630 115L666 117L701 120L738 122L774 125L811 128L848 131L886 133L924 136L962 139L1001 142L1040 144L1080 147L1120 150L1160 153L1201 156M661 124L697 127L734 130L771 132L808 135L846 138L884 141L923 144L962 147L1001 149L1041 152L1081 155L1121 158L1162 161M693 134L730 137L768 140L806 143L844 146L883 149L922 152L961 154L1001 157L1041 160L1082 163L1123 167M839 162L879 165L919 168L960 171L1001 174" stroke="#4e4e4e" stroke-opacity="0.8" stroke-width="1" fill="none"/>
<path d="M1272 19L1304 20L1335 22M1213 20L1244 22L1275 23L1307 25M1122 19L1153 21L1184 23L1215 25L1247 26L1278 28L1310 30M1032 19L1062 21L1093 22L1124 24L1155 26L1186 28L1218 29L1249 31L1281 33M941 18L971 20L1002 22L1032 24L1063 25L1094 27L1125 29L1156 31L1188 32L1220 34L1252 36L1285 38M881 20L911 21L941 23L971 25L1002 27L1032 28L1063 30L1095 32L1126 34L1158 36L1190 37L1222 39L1255 41M790 19L820 21L849 22L879 24L909 26L940 28L971 30L1001 31L1033 33L1064 35L1096 37L1128 39L1160 41L1192 42L1225 44L1258 46M667 21L696 23L726 25L755 27L785 28L815 30L846 32L876 34L907 36L938 38L970 39L1001 41L1033 43L1065 45L1098 47L1131 49L1164 51L1197 53M693 28L723 30L753 31L783 33L813 35L844 37L875 39L906 41L938 43L969 45L1001 46L1034 48L1066 50L1099 52L1132 54L1165 56L1199 58M719 35L750 36L780 38L811 40L842 42L874 44L905 46L937 48L969 50L1001 52L1034 54L1067 56L1100 58L1134 60L1167 62M747 41L778 43L809 45L840 47L872 49L904 51L936 53L969 55L1001 57L1034 59L1068 61L1101 63L1135 65M775 49L807 51L838 53L870 55L903 57L935 59L968 61L1001 63L1035 65L1069 67L1103 69M804 56L836 58L869 60L902 62L935 64L968 66L1001 68L1035 71L1069 73M867 66L900 68L934 70L967 72L1001 74" stroke="#4e4e4e" stroke-opacity="0.4" stroke-width="1" fill="none"/>
<path d="M700 18L729 20L758 22L788 24L818 25L848 27L878 29L908 31L939 33L970 34L1001 36L1033 38L1065 40L1097 42L1129 44L1162 46L1194 48L1228 50L1261 52L1295 54L1329 56L1363 58L1397 60L1432 62L1467 64L1503 66L1538 68M-15 25L12 27L39 29L66 31L94 32L121 34L149 36L178 38L206 40L235 42L264 44L293 46L322 48L352 50L382 52L412 54L442 56L473 58L504 60L535 62L566 64L598 66L630 68L662 70L695 72L728 75L761 77L794 79L828 81L862 83L896 86L931 88L966 90L1001 93L1037 95L1073 97L1109 100L1146 102L1183 105L1220 107L1258 110L1296 112L1334 115L1373 117L1412 120L1451 122L1491 125L1531 128M-23 88L7 91L39 93L70 95L102 98L134 100L166 103L198 105L231 107L264 110L298 112L332 115L366 118L400 120L435 123L470 126L506 128L542 131L578 134L614 136L651 139L689 142L726 145L764 148L803 151L842 154L881 157L920 160L960 163L1001 166L1042 169L1083 172L1125 175L1167 178L1210 182L1253 185L1297 188L1341 191L1385 195L1430 198L1476 202L1522 205M-34 173L2 176L38 179L75 182L112 186L150 189L188 192L227 196L266 199L305 203L345 206L385 210L426 213L467 217L508 221L551 224L593 228L636 232L680 236L724 240L769 244L814 248L860 252L906 256L953 260L1001 264L1049 268L1097 273L1147 277L1196 281L1247 286L1298 290L1350 295L1402 300L1456 304L1509 309L1564 314M-19 482L37 490L94 497L151 505L210 513L270 521L330 529L392 537L455 546L518 554L583 563L650 572L717 581L786 590L855 599L927 609L999 619L1073 629L1148 639L1225 649L1303 659L1383 670L1465 681L1548 692M-40 801L36 814L113 828L193 843M107 12L87 21L66 31L44 41L22 51L-2 62L-27 74M258 11L241 20L224 30L206 40L187 50L167 61L146 73L125 85L102 98L77 111L52 125L25 140L-4 156L-34 173M395 20L381 29L367 39L352 50L336 61L319 72L302 84L284 97L264 110L244 124L223 139L200 155L176 171L150 189L123 208L94 228L63 249L29 272L-6 297M548 19L537 29L527 38L515 49L504 60L491 71L478 83L465 96L450 109L435 123L419 138L402 153L384 170L365 187L345 206L323 226L300 247L275 270L249 295L220 321L189 350L156 380L120 414L80 450L37 490L-10 533M851 18L848 27L844 37L840 47L836 58L832 69L828 81L823 94L819 107L814 121L808 135L803 151L797 167L790 184L784 203L777 223L769 244L761 266L752 290L742 316L732 344L721 374L709 407L696 443L682 482L667 525L650 572L631 624L609 682L586 747L559 821L529 904M1002 17L1002 27L1001 36L1001 46L1001 57L1001 68L1001 80L1001 93L1001 106L1001 119L1001 134L1001 149L1001 166L1001 183L1001 201L1001 221L1001 242L1001 264L1000 288L1000 314L1000 342L1000 372L1000 404L1000 439L1000 478L1000 520L999 567L999 619L999 676L999 740L998 813L998 895M1151 17L1155 26L1158 36L1162 46L1165 56L1169 68L1174 79L1178 92L1183 105L1187 118L1193 133L1198 148L1204 164L1210 182L1216 200L1223 219L1231 240L1238 262L1247 286L1256 312L1266 339L1276 369L1288 401L1300 436L1314 474L1329 516L1345 562L1363 613L1383 670L1406 734L1431 805L1460 886M1300 16L1307 25L1314 35L1321 45L1329 56L1337 67L1345 78L1354 91L1363 104L1373 117L1383 132L1394 147L1405 163L1417 180L1430 198L1444 218L1459 238L1475 260L1491 284L1509 309L1529 336M1449 15L1458 24L1469 34L1480 44L1491 55L1503 66L1515 77" stroke="#5a5a5a" stroke-opacity="1.0" stroke-width="1" fill="none"/>
<path d="M1509 72L1545 74M1485 81L1522 84M1491 87L1528 90M304 19L332 21M1460 91L1497 94L1535 96M214 19L241 20L269 22L297 24L325 26L353 27M1466 98L1504 100L1542 103M151 20L178 22L205 23L233 25L261 27L289 29L317 31L345 32L374 34M1434 102L1472 104L1510 107L1549 109M60 19L87 21L114 23L141 25L169 26L196 28L224 30L252 32L280 34L309 35L338 37L367 39L396 41M1401 106L1439 109L1478 111L1517 114M-30 19L-4 21L23 22L50 24L77 26L104 28L131 29L159 31L187 33L215 35L244 37L272 39L301 41L330 42L359 44L389 46L419 48M1406 113L1445 115L1484 118L1524 121M-27 30L0 32L28 34L55 36L83 37L111 39L139 41L168 43L197 45L226 47L255 49L284 51L314 53L344 55L374 57L405 59L435 61L466 63M1378 124L1417 127L1457 130L1498 132L1539 135M-11 37L16 39L44 41L72 43L101 45L129 46L158 48L187 50L216 52L246 54L276 56L306 58L336 61L367 63L397 65L428 67L460 69L491 71M1343 129L1383 132L1423 134L1464 137L1505 140L1546 143M-23 42L5 44L33 46L61 48L90 50L119 52L148 54L177 56L207 58L237 60L267 62L297 64L328 66L359 68L390 70L421 73L453 75L485 77L517 79M1308 134L1348 136L1388 139L1429 142L1470 145L1512 148L1554 151M-7 49L22 51L50 53L79 55L108 57L138 59L167 61L197 63L227 66L258 68L288 70L319 72L351 74L382 76L414 79L446 81L478 83L511 85L544 88M1312 141L1353 144L1394 147L1435 150L1477 153L1519 156M-19 55L10 57L39 59L68 61L97 63L127 65L157 67L187 69L218 71L248 73L280 76L311 78L342 80L374 82L406 85L439 87L472 89L505 92L538 94L572 96M1276 146L1316 149L1358 152L1399 155L1441 158L1484 161L1527 164M-31 60L-2 62L27 64L56 66L86 69L116 71L146 73L177 75L208 77L239 79L270 82L302 84L334 86L366 89L399 91L432 93L465 96L498 98L532 100L566 103L600 105M1239 151L1280 154L1321 157L1363 160L1405 163L1448 166L1491 169L1535 172M-15 68L15 70L45 72L75 74L105 77L136 79L167 81L198 83L229 86L261 88L293 90L325 93L358 95L391 97L424 100L458 102L491 105L526 107L560 110L595 112L630 115M1201 156L1242 159L1284 162L1326 165L1368 168L1411 171L1455 175L1498 178L1543 181M-27 74L2 76L33 78L63 80L94 83L125 85L156 87L187 90L219 92L251 94L284 97L316 99L349 101L383 104L416 106L450 109L485 111L519 114L554 117L589 119L625 122L661 124M1162 161L1204 164L1246 167L1288 171L1331 174L1374 177L1417 180L1461 183L1506 187L1551 190M-10 82L20 84L51 87L82 89L113 91L145 94L177 96L209 98L241 101L274 103L307 106L341 108L374 111L408 113L443 116L478 118L513 121L548 124L584 126L620 129L656 132L693 134M1123 167L1165 170L1207 173L1249 176L1292 179L1336 182L1379 186L1424 189L1469 192L1514 196M-6 97L26 99L58 102L90 104L122 107L155 109L188 112L221 114L254 117L288 120L322 122L357 125L392 127L427 130L463 133L499 136L535 138L572 141L609 144L646 147L684 150L722 153L761 156L800 159L839 162M1001 174L1042 177L1084 181L1127 184L1170 187L1213 191L1257 194L1301 197L1346 201L1391 204L1437 208L1483 211L1530 215M-19 104L13 106L45 109L77 111L110 114L143 116L176 119L210 121L244 124L278 127L313 129L348 132L383 135L419 138L455 140L492 143L528 146L566 149L603 152L641 155L679 158L718 161L757 164L797 167L837 170L877 173L918 177L959 180L1001 183L1043 186L1086 190L1129 193L1172 196L1216 200L1261 203L1306 207L1351 210L1398 214L1444 218L1491 221L1539 225M-33 110L-1 113L32 115L65 118L98 121L131 123L165 126L199 129L233 131L268 134L303 137L339 140L375 143L411 145L447 148L484 151L521 154L559 157L597 160L636 163L675 166L714 169L754 172L794 176L834 179L875 182L917 185L958 189L1001 192L1044 195L1087 199L1131 202L1175 206L1220 209L1265 213L1311 217L1357 220L1404 224L1451 228L1499 231L1548 235M-14 120L19 123L52 125L85 128L119 131L153 133L188 136L223 139L258 142L293 145L329 147L365 150L402 153L439 156L477 159L514 162L553 165L591 168L630 172L670 175L709 178L750 181L790 184L832 188L873 191L915 195L958 198L1001 201L1044 205L1088 208L1133 212L1178 216L1223 219L1269 223L1316 227L1363 230L1411 234L1459 238L1508 242L1557 246M-28 127L5 130L38 133L72 135L107 138L141 141L176 144L211 147L247 150L283 152L319 155L356 158L393 161L431 165L469 168L507 171L546 174L585 177L624 180L664 184L705 187L746 190L787 194L829 197L871 200L914 204L957 207L1001 211L1045 215L1090 218L1135 222L1181 226L1227 229L1274 233L1321 237L1369 241L1417 245L1467 249L1516 253M-9 137L25 140L59 143L94 146L129 149L164 152L200 155L236 158L272 161L309 164L346 167L384 170L422 173L461 176L499 179L539 183L578 186L619 189L659 193L700 196L742 200L784 203L826 206L869 210L912 214L956 217L1001 221L1046 225L1091 228L1137 232L1184 236L1231 240L1278 244L1326 248L1375 252L1425 256L1475 260L1525 264M-24 145L11 148L45 151L80 154L116 157L152 160L188 163L224 166L261 169L299 172L337 175L375 179L413 182L452 185L492 188L532 192L572 195L613 199L654 202L695 206L738 209L780 213L823 216L867 220L911 224L956 227L1001 231L1046 235L1093 239L1139 243L1187 247L1234 251L1283 255L1332 259L1382 263L1432 268L1483 272L1534 276M-39 153L-4 156L31 159L67 162L103 165L139 168L176 171L213 174L250 178L288 181L326 184L365 187L404 191L444 194L484 198L524 201L565 205L606 208L648 212L690 215L733 219L777 223L820 226L865 230L909 234L955 238L1001 242L1047 246L1094 250L1142 254L1190 258L1238 262L1288 266L1338 271L1388 275L1440 279L1491 284L1544 288M-19 164L17 167L53 170L89 174L126 177L163 180L201 183L239 187L277 190L316 193L355 197L395 200L435 204L475 207L516 211L558 214L600 218L642 222L685 225L729 229L773 233L817 237L862 241L908 245L954 249L1001 253L1048 257L1096 261L1144 265L1193 270L1243 274L1293 278L1344 283L1395 287L1447 292L1500 296L1554 301M-14 185L23 188L61 191L98 195L137 198L175 202L214 205L254 209L294 212L334 216L375 220L416 223L458 227L500 231L543 235L586 239L630 243L675 247L719 251L765 255L811 259L857 263L904 267L952 272L1001 276L1049 280L1099 285L1149 289L1200 294L1251 299L1304 303L1356 308L1410 313L1464 318L1519 323M-30 194L8 197L46 201L84 204L123 208L162 211L201 215L242 219L282 222L323 226L364 230L406 234L449 238L492 242L535 246L579 250L624 254L669 258L715 262L761 266L807 270L855 275L903 279L951 284L1000 288L1050 293L1101 297L1152 302L1204 307L1256 312L1309 316L1363 321L1418 326L1473 331L1529 336M-8 207L30 210L69 214L108 218L148 221L188 225L229 229L270 233L312 237L354 241L396 245L439 249L483 253L527 257L572 261L617 265L663 269L709 274L756 278L804 282L852 287L901 292L950 296L1000 301L1051 305L1103 310L1155 315L1207 320L1261 325L1315 330L1370 335L1426 340L1482 346L1539 351M-24 217L15 220L54 224L94 228L134 232L175 236L216 240L258 243L300 247L343 252L386 256L430 260L474 264L519 268L564 273L610 277L657 281L704 286L752 290L800 295L849 300L899 304L949 309L1000 314L1052 319L1104 324L1157 329L1211 334L1266 339L1321 344L1377 350L1434 355L1492 360L1550 366M-41 227L-2 231L38 235L78 238L119 242L161 246L202 250L245 255L288 259L331 263L375 267L420 271L465 276L510 280L556 285L603 289L651 294L699 298L747 303L797 308L846 313L897 318L948 322L1000 327L1053 333L1106 338L1160 343L1215 348L1271 354L1327 359L1385 365L1443 370L1501 376L1561 382M-19 241L22 245L63 249L104 253L146 258L189 262L232 266L275 270L319 275L364 279L409 283L455 288L501 293L548 297L596 302L644 307L693 311L742 316L793 321L844 326L895 331L947 336L1000 342L1054 347L1108 352L1164 358L1220 363L1276 369L1334 374L1392 380L1452 386L1512 392L1573 398M-36 252L5 257L46 261L88 265L131 269L174 274L218 278L262 282L307 287L352 291L398 296L445 301L492 305L540 310L588 315L637 320L687 325L738 330L789 335L840 340L893 346L946 351L1000 356L1055 362L1110 367L1167 373L1224 379L1282 385L1341 390L1400 396L1461 403L1523 409M-13 268L29 272L72 277L115 281L159 286L204 290L249 295L294 299L340 304L387 309L434 314L482 319L531 324L580 329L630 334L681 339L732 344L784 350L837 355L891 360L945 366L1000 372L1056 377L1113 383L1170 389L1229 395L1288 401L1348 407L1409 413L1471 420L1534 426M-31 280L12 284L55 289L99 294L144 298L189 303L235 308L281 313L328 317L375 322L424 327L472 333L522 338L572 343L623 348L675 354L727 359L780 365L834 370L888 376L944 382L1000 388L1057 393L1115 400L1174 406L1233 412L1294 418L1355 425L1418 431L1481 438L1545 444M-25 310L20 315L65 320L111 325L158 330L205 335L253 340L301 346L351 351L401 356L451 362L503 367L555 373L607 379L661 385L715 391L771 397L827 403L884 409L941 415L1000 421L1059 428L1120 434L1181 441L1244 448L1307 455L1371 462L1437 469L1503 476L1570 483M-45 324L1 329L47 334L94 339L141 344L189 350L238 355L287 360L337 366L388 372L440 377L492 383L545 389L599 395L654 401L709 407L766 414L823 420L881 426L940 433L1000 439L1061 446L1122 453L1185 460L1249 467L1314 474L1380 482L1447 489L1515 497M-19 343L28 348L76 354L124 359L173 365L222 370L273 376L324 382L376 388L428 394L482 400L536 406L591 412L646 418L703 425L761 431L819 438L878 445L939 451L1000 458L1062 465L1125 473L1189 480L1255 487L1321 495L1389 502L1457 510L1527 518M-39 358L9 363L57 369L106 374L156 380L206 386L258 392L310 398L362 404L416 410L470 417L526 423L582 430L639 436L696 443L755 450L815 457L875 464L937 471L1000 478L1063 485L1128 493L1194 501L1261 508L1329 516L1398 524L1468 532L1540 541M-12 379L37 385L87 391L138 397L190 403L242 409L295 415L349 422L403 428L459 435L515 441L572 448L630 455L689 462L750 469L811 476L873 484L936 491L1000 499L1065 507L1131 514L1198 522L1267 530L1337 539L1408 547L1480 556L1553 564M-33 395L17 401L68 407L120 414L172 420L225 426L279 433L334 440L390 446L447 453L504 460L562 467L622 475L682 482L744 489L806 497L869 505L934 512L1000 520L1066 529L1134 537L1203 545L1274 554L1345 562L1418 571L1492 580L1568 589M-55 412L-4 418L48 425L100 431L154 438L208 445L263 452L319 459L376 466L434 473L493 480L552 488L613 495L675 503L737 511L801 519L866 527L932 535L999 543L1068 552L1137 560L1208 569L1280 578L1354 587L1429 597L1505 606L1583 616M-26 436L27 443L80 450L135 457L190 464L246 471L303 478L361 486L420 493L480 501L541 509L604 517L667 525L731 533L796 541L863 550L930 558L999 567L1069 576L1141 585L1214 594L1288 604L1363 613L1440 623L1518 633M-49 455L4 462L59 469L115 477L171 484L228 491L287 499L346 507L406 515L468 523L530 531L594 539L658 548L724 556L791 565L859 574L929 583L999 592L1071 602L1145 611L1219 621L1295 631L1373 641L1452 651L1533 662M-43 503L14 511L72 519L131 527L190 535L251 544L313 552L376 561L441 570L506 579L573 588L640 597L709 607L780 616L851 626L925 636L999 647L1075 657L1152 668L1231 679L1312 690L1394 701L1478 713L1564 724M-10 533L49 542L109 550L170 559L232 568L296 577L360 586L426 595L493 604L561 614L631 624L701 634L774 644L847 655L922 665L999 676L1077 687L1157 698L1238 710L1321 722L1406 734L1492 746L1581 758M-36 557L25 566L86 574L149 584L212 593L277 602L343 612L410 622L479 632L549 642L620 652L693 663L767 674L843 685L920 696L999 707L1079 719L1161 731L1245 743L1331 756L1418 768L1508 781L1599 795M-62 581L-1 591L62 600L126 610L191 619L257 629L325 639L394 650L465 660L536 671L609 682L684 693L760 705L838 716L918 728L999 740L1081 753L1166 765L1253 778L1341 792L1431 805L1524 819M-28 617L37 627L102 637L169 647L237 658L306 669L377 680L449 691L523 702L598 714L675 725L753 738L833 750L915 763L999 775L1084 789L1171 802L1260 816L1352 830L1445 844M-56 645L10 655L77 666L145 677L215 688L286 699L359 711L433 723L508 735L586 747L665 760L745 773L828 786L912 799L998 813L1086 827L1177 841M-19 686L50 697L120 708L192 720L265 732L339 744L416 757L493 770L573 783L654 796L737 810L822 824L909 838M-48 717L22 729L94 742L167 754L242 767L319 780L397 793L477 807L559 821L643 835L729 849M-8 764L66 777L141 790L218 804L297 817L378 832L460 846M7 16L-15 25M20 17L-2 26L-25 36M34 18L12 27L-11 37M47 19L25 28L3 38L-21 48M60 19L39 29L16 39L-7 49M94 11L73 20L52 30L30 40L7 50L-17 61M120 13L100 22L80 32L58 42L36 52L12 63L-13 75M133 14L114 23L94 32L72 43L50 53L27 64L2 76L-23 88M147 14L127 24L107 33L87 44L65 54L42 65L17 77L-8 89M160 15L141 25L121 34L101 45L79 55L56 66L33 78L7 91L-19 104M173 16L155 25L135 35L115 45L94 56L71 67L48 79L23 92L-3 105L-31 119M187 17L169 26L149 36L129 46L108 57L86 69L63 80L39 93L13 106L-14 120M200 18L182 27L163 37L144 47L123 58L101 70L78 82L54 94L29 107L2 121L-26 136M214 19L196 28L178 38L158 48L138 59L116 71L94 83L70 95L45 109L19 123L-9 137M228 20L210 29L192 39L173 49L152 60L131 72L109 84L86 96L61 110L35 124L8 139L-21 154M271 12L255 21L238 31L220 41L202 51L182 62L162 74L140 86L118 99L94 112L68 127L42 142L14 157L-16 174M285 13L269 22L252 32L235 42L216 52L197 63L177 75L156 87L134 100L110 114L85 128L59 143L31 159L2 176L-30 194M298 14L283 23L266 33L249 43L231 53L212 64L192 76L172 88L150 101L127 115L102 129L76 144L49 160L20 178L-11 196M312 15L297 24L280 34L264 44L246 54L227 66L208 77L187 90L166 103L143 116L119 131L94 146L67 162L38 179L8 197L-24 217M326 16L311 25L295 35L278 45L261 55L243 67L223 78L203 91L182 104L160 117L136 132L111 147L85 164L57 181L27 199L-5 219L-39 239M339 16L325 26L309 35L293 46L276 56L258 68L239 79L219 92L198 105L176 119L153 133L129 149L103 165L75 182L46 201L15 220L-19 241M353 17L339 27L323 36L307 47L291 57L273 69L255 81L235 93L215 106L193 120L170 135L146 150L121 167L94 184L65 203L34 222L1 243L-34 266M367 18L353 27L338 37L322 48L306 58L288 70L270 82L251 94L231 107L210 121L188 136L164 152L139 168L112 186L84 204L54 224L22 245L-13 268M381 19L367 28L352 38L337 49L321 59L304 71L286 83L267 95L248 109L227 123L205 137L182 153L157 170L131 187L103 206L74 226L42 247L8 270L-28 295M422 12L409 21L395 30L381 40L367 51L351 62L335 73L318 85L300 98L281 111L261 125L240 140L218 156L194 173L169 191L142 210L114 230L83 251L51 275L16 299L-22 326M436 12L423 22L410 31L396 41L382 52L367 63L351 74L334 86L316 99L298 112L278 127L258 142L236 158L213 174L188 192L162 211L134 232L104 253L72 277L38 302L1 329L-39 358M449 13L437 22L424 32L411 42L397 53L382 64L366 75L350 87L333 100L315 114L296 128L275 143L254 159L231 176L207 194L182 213L154 234L125 256L94 279L60 304L24 331L-15 360M463 14L451 23L439 33L426 43L412 54L397 65L382 76L366 89L349 101L332 115L313 129L293 145L272 161L250 178L227 196L201 215L175 236L146 258L115 281L82 306L47 334L9 363L-33 395M477 15L465 24L453 34L440 44L427 55L413 66L398 77L382 90L366 103L349 116L330 131L311 146L291 162L269 179L246 198L221 217L195 238L167 260L137 283L105 309L70 336L33 366L-8 398M491 16L480 25L468 35L455 45L442 56L428 67L414 79L399 91L383 104L366 118L348 132L329 147L309 164L288 181L266 199L242 219L216 240L189 262L159 286L128 311L94 339L57 369L17 401L-26 436M505 17L494 26L482 36L470 46L457 57L444 68L430 80L415 92L399 105L383 119L366 134L347 149L328 165L307 183L285 201L262 221L237 242L210 264L181 288L151 314L117 342L81 372L42 404L0 440L-46 479M519 17L508 27L497 37L485 47L473 58L460 69L446 81L432 93L416 106L400 120L383 135L365 150L346 167L326 184L305 203L282 222L258 243L232 266L204 290L174 316L141 344L106 374L68 407L27 443L-19 482M533 18L523 28L512 38L500 48L488 59L476 70L462 82L448 94L433 108L418 122L401 136L384 152L365 168L346 186L325 204L302 224L279 245L253 268L226 292L197 319L165 347L131 377L94 410L53 447L9 486L-39 529M562 20L552 29L542 39L531 50L519 61L507 72L495 84L481 97L467 110L453 124L437 139L421 155L403 171L385 189L365 208L344 228L321 250L297 272L271 297L243 324L213 352L181 383L146 417L107 453L65 493L19 537L-32 586M586 12L576 21L567 30L557 40L546 51L535 62L523 73L511 85L498 98L485 111L470 126L455 140L439 156L422 173L404 191L385 210L364 230L343 252L319 275L294 299L267 326L238 355L206 386L172 420L135 457L94 497L49 542L-1 591L-56 645M600 13L591 22L581 31L572 41L561 52L551 63L539 74L527 86L515 99L502 113L488 127L473 142L458 158L441 175L424 193L405 212L385 232L364 254L341 277L317 302L291 329L263 358L232 389L199 423L162 460L122 501L79 546L30 595L-23 650M614 13L605 23L596 32L587 42L577 53L566 64L555 75L544 88L532 100L519 114L506 128L492 143L477 159L461 176L444 194L426 213L406 234L386 256L364 279L340 304L315 331L287 360L258 392L225 426L190 464L151 505L109 550L62 600L10 655L-48 717M628 14L620 23L611 33L602 43L592 54L582 65L572 77L561 89L549 102L537 115L524 130L510 145L495 161L480 178L464 196L446 215L428 236L408 258L386 281L364 307L339 334L312 363L283 395L252 430L218 468L181 509L139 554L94 605L43 661L-13 723M642 15L634 24L626 34L617 44L608 55L598 66L588 78L577 90L566 103L554 117L542 131L528 146L514 162L499 179L484 198L467 217L449 238L430 260L409 283L387 309L363 336L337 366L310 398L279 433L246 471L210 513L170 559L126 610L77 666L22 729L-40 801M657 16L649 25L641 35L632 45L623 56L614 67L604 79L594 91L583 104L572 118L560 132L547 148L533 164L519 181L504 199L488 219L470 240L452 262L432 286L411 311L388 339L363 369L336 401L307 436L275 475L240 517L201 563L158 614L111 672L58 735L-2 807L-70 889M671 17L663 26L656 36L648 46L639 57L630 68L621 80L611 92L600 105L589 119L578 134L566 149L553 165L539 183L524 201L508 221L492 242L474 264L455 288L434 314L412 342L388 372L362 404L334 440L303 478L270 521L232 568L191 619L145 677L94 742L36 814L-30 897M685 18L678 27L671 37L663 47L655 58L646 69L637 81L628 93L618 107L607 120L596 135L584 151L572 167L559 184L544 203L530 223L514 244L496 266L478 290L458 316L437 344L414 374L389 407L362 443L332 482L300 525L264 572L224 624L180 683L130 748L74 821L11 905M714 19L708 29L701 39L694 49L686 60L679 71L670 83L662 96L653 109L643 123L633 138L622 153L611 170L598 188L586 206L572 226L557 248L542 270L525 295L507 321L487 350L466 380L443 414L418 450L391 490L361 533L328 581L291 634L250 694L204 760L153 836M735 11L729 20L723 30L716 40L709 50L702 61L695 72L687 84L679 97L670 110L661 124L651 139L641 155L630 172L619 189L606 208L593 228L579 250L564 273L548 297L531 324L512 352L492 383L470 417L447 453L420 493L392 537L360 586L325 639L286 699L242 767L193 843M749 12L744 21L738 31L732 41L725 51L718 62L711 73L704 86L696 98L688 112L679 126L670 141L660 156L650 173L639 191L627 210L615 230L601 252L587 275L572 300L556 326L538 355L519 386L498 420L475 457L450 497L423 541L393 590L359 645L322 705L280 773L233 850M764 13L758 22L753 31L747 41L741 52L734 63L728 75L721 87L713 99L705 113L697 127L689 142L679 158L670 175L659 193L648 212L636 232L624 254L610 277L596 302L580 329L564 358L545 389L526 423L504 460L480 501L455 546L426 595L394 650L359 711L319 780L274 858M778 14L773 23L768 32L762 42L757 53L751 64L744 76L738 88L731 101L723 114L716 128L707 143L699 159L689 176L680 194L669 214L658 234L646 256L634 279L620 304L605 331L589 360L572 392L554 426L533 464L511 505L486 550L459 600L429 655L396 717L358 786L315 865M792 14L788 24L783 33L778 43L772 54L767 65L761 77L755 89L748 102L741 115L734 130L726 145L718 161L709 178L700 196L690 215L680 236L669 258L657 281L644 307L630 334L615 363L599 395L582 430L562 467L541 509L518 554L493 604L465 660L433 723L397 793L357 873M807 15L803 25L798 34L793 44L788 55L783 66L778 78L772 90L766 103L759 117L752 131L745 146L738 162L730 180L721 198L712 217L702 238L692 260L680 284L668 309L656 336L642 366L626 398L610 433L592 471L572 513L551 559L527 609L500 666L470 729L437 800L399 880M822 16L818 25L813 35L809 45L804 56L799 67L794 79L789 91L783 104L777 118L771 132L764 148L757 164L750 181L742 200L733 219L724 240L715 262L704 286L693 311L681 339L668 369L654 401L639 436L622 475L604 517L583 563L561 614L536 671L508 735L477 807L442 888M836 17L833 26L829 36L825 46L820 57L816 68L811 80L806 92L801 106L795 119L790 134L783 149L777 166L770 183L763 201L755 221L746 242L738 264L728 288L718 314L707 342L695 372L682 404L667 440L652 478L635 521L616 567L596 619L573 677L547 741L518 814L485 896M866 19L863 28L860 38L856 48L853 59L849 70L845 82L841 95L837 108L832 122L827 137L822 152L817 169L811 186L805 205L798 225L791 246L784 268L776 293L767 319L758 347L748 377L737 410L726 446L713 486L699 529L683 576L666 629L647 688L625 753L601 828L573 912M881 20L878 29L875 39L872 49L869 60L866 71L862 83L858 96L854 109L850 123L846 138L842 154L837 170L832 188L826 206L820 226L814 248L807 270L800 295L793 321L784 350L775 380L766 414L755 450L744 489L731 533L717 581L701 634L684 693L665 760L643 835L618 920M898 11L896 20L893 30L891 40L888 50L885 61L882 73L879 85L876 97L873 111L869 125L865 139L861 155L857 172L852 189L848 208L842 228L837 250L831 273L825 297L818 324L811 352L803 383L794 417L785 453L775 493L763 537L751 585L737 639L722 699L705 766L685 842M913 12L911 21L908 31L906 41L904 51L902 62L899 74L896 86L894 98L891 112L888 126L884 141L881 157L877 173L873 191L869 210L865 230L860 252L855 275L849 300L844 326L837 355L830 386L823 420L815 457L806 497L796 541L786 590L774 644L760 705L745 773L729 849M927 13L926 22L924 32L922 42L920 52L918 63L916 75L914 87L911 100L909 113L906 127L903 142L901 158L897 175L894 193L891 212L887 232L883 254L879 277L874 302L869 329L864 358L858 389L852 423L845 460L838 501L829 545L820 595L810 649L799 710L786 779L772 857M942 14L941 23L939 33L938 43L936 53L935 64L933 76L931 88L929 101L927 114L925 129L923 144L920 160L918 177L915 195L912 214L909 234L906 256L903 279L899 304L895 331L891 360L886 392L881 426L875 464L869 505L863 550L855 599L847 655L838 716L828 786L816 864M957 15L956 24L955 34L954 44L952 54L951 65L950 77L948 89L947 102L945 116L944 130L942 145L940 161L938 178L936 196L934 215L932 236L930 258L927 281L924 307L921 334L918 363L914 395L910 430L906 467L902 509L896 554L891 604L885 660L878 722L870 792L861 872M972 15L971 25L970 34L969 45L969 55L968 66L967 78L966 90L965 103L964 117L963 131L962 147L960 163L959 180L958 198L956 217L955 238L953 260L951 284L949 309L947 336L945 366L943 398L940 433L937 471L934 512L930 558L927 609L922 665L918 728L912 799L906 879M987 16L986 26L986 35L985 46L985 56L985 67L984 79L984 91L983 104L982 118L982 133L981 148L981 164L980 181L979 200L978 219L978 240L977 262L976 286L975 311L974 339L972 369L971 401L970 436L968 474L967 516L965 563L963 614L960 671L958 734L955 806L952 887M1017 18L1017 27L1017 37L1018 47L1018 58L1018 70L1019 81L1019 94L1019 107L1020 121L1020 135L1021 151L1021 167L1022 185L1022 203L1023 223L1024 244L1025 266L1025 290L1026 316L1027 344L1028 374L1029 407L1030 443L1031 482L1033 524L1034 572L1036 624L1038 682L1040 747L1042 820L1045 903M1032 19L1032 28L1033 38L1034 48L1034 59L1035 71L1036 82L1037 95L1038 108L1039 122L1040 137L1041 152L1042 169L1043 186L1044 205L1046 225L1047 246L1049 268L1050 293L1052 319L1054 347L1056 377L1058 410L1061 446L1063 485L1066 529L1069 576L1073 629L1077 687L1081 753L1086 827L1092 911M1047 20L1048 29L1049 39L1050 49L1051 60L1052 72L1053 84L1055 96L1056 109L1058 123L1059 138L1061 154L1062 170L1064 188L1066 207L1068 227L1071 248L1073 271L1075 295L1078 321L1081 350L1084 380L1088 413L1091 450L1096 489L1100 533L1105 581L1111 634L1117 693L1124 759L1131 834L1140 919M1061 12L1062 21L1063 30L1065 40L1066 50L1068 61L1069 73L1071 85L1073 97L1075 111L1077 125L1079 140L1081 155L1083 172L1086 190L1088 208L1091 228L1094 250L1097 273L1101 297L1104 324L1108 352L1113 383L1117 417L1122 453L1128 493L1134 537L1141 585L1148 639L1157 698L1166 765L1177 841M1076 12L1077 21L1079 31L1081 41L1083 51L1084 62L1087 74L1089 86L1091 99L1093 112L1096 126L1098 141L1101 157L1104 174L1107 191L1110 210L1114 230L1118 252L1122 275L1126 300L1131 326L1136 355L1141 386L1147 420L1154 457L1161 497L1169 541L1177 590L1187 644L1197 704L1209 772L1223 848M1091 13L1093 22L1095 32L1097 42L1099 52L1101 63L1104 75L1106 87L1109 100L1112 113L1115 127L1118 142L1121 158L1125 175L1129 193L1133 212L1137 232L1142 254L1147 277L1152 302L1157 329L1164 358L1170 389L1177 423L1185 460L1194 501L1203 545L1214 594L1225 649L1238 710L1253 778L1269 856M1106 14L1108 23L1110 33L1113 43L1116 53L1118 64L1121 76L1124 88L1127 101L1131 115L1134 129L1138 144L1142 160L1146 177L1150 195L1155 214L1160 234L1166 256L1171 279L1178 304L1184 331L1191 360L1199 392L1208 426L1217 464L1227 504L1238 549L1250 599L1264 654L1279 716L1296 785L1316 863M1121 15L1124 24L1126 34L1129 44L1132 54L1135 65L1139 77L1142 89L1146 102L1149 116L1154 130L1158 145L1162 161L1167 178L1172 196L1178 216L1184 236L1190 258L1196 281L1204 307L1211 334L1220 363L1229 395L1238 429L1249 467L1261 508L1274 554L1288 604L1303 659L1321 722L1341 792L1363 871M1136 16L1139 25L1142 35L1145 45L1149 55L1152 67L1156 78L1160 90L1164 103L1168 117L1173 131L1178 147L1183 163L1188 180L1194 198L1200 217L1207 238L1214 260L1222 284L1230 309L1238 336L1248 366L1258 398L1269 433L1281 471L1295 512L1309 558L1325 609L1343 665L1363 728L1386 798L1411 878M1167 17L1170 27L1174 36L1178 47L1182 57L1187 69L1191 80L1196 93L1201 106L1207 120L1212 134L1218 150L1225 166L1231 183L1239 202L1246 221L1254 242L1263 264L1272 288L1282 314L1293 342L1305 372L1318 404L1332 439L1347 478L1363 520L1381 567L1401 618L1424 676L1449 740L1477 812L1509 894M1182 18L1186 28L1190 37L1194 48L1199 58L1204 70L1209 82L1214 94L1220 107L1226 121L1232 136L1239 151L1246 167L1253 185L1261 203L1269 223L1278 244L1288 266L1298 290L1309 316L1321 344L1334 374L1348 407L1363 443L1380 482L1398 524L1418 571L1440 623L1465 681L1492 746L1524 819M1197 19L1202 28L1206 38L1211 49L1216 59L1221 71L1227 83L1233 95L1239 108L1245 122L1252 137L1259 153L1267 169L1275 186L1283 205L1292 225L1302 246L1313 269L1324 293L1336 319L1349 347L1363 377L1378 410L1395 446L1413 485L1433 528L1455 576L1479 628L1506 687L1536 752M1213 20L1218 29L1222 39L1228 50L1233 60L1239 72L1245 84L1251 96L1258 110L1264 124L1272 138L1280 154L1288 171L1297 188L1306 207L1316 227L1326 248L1338 271L1350 295L1363 321L1377 350L1392 380L1409 413L1427 450L1447 489L1468 532L1492 580L1518 633M1223 12L1228 21L1233 30L1239 40L1244 51L1250 61L1256 73L1263 85L1269 98L1276 111L1284 125L1292 140L1300 155L1309 172L1319 190L1329 209L1339 229L1351 250L1363 273L1376 297L1390 324L1405 352L1422 383L1440 417L1459 453L1480 493L1504 537L1530 585M1239 13L1244 22L1249 31L1255 41L1261 52L1267 63L1274 74L1281 86L1288 99L1296 112L1304 126L1312 141L1321 157L1331 174L1341 191L1351 210L1363 230L1375 252L1388 275L1402 300L1418 326L1434 355L1452 386L1471 420L1492 456L1515 497M1254 13L1260 23L1265 32L1271 42L1278 53L1284 64L1291 75L1299 87L1306 100L1315 113L1323 128L1332 143L1342 158L1352 175L1363 193L1374 212L1387 232L1400 254L1414 277L1429 302L1445 329L1463 358L1482 389L1502 423L1525 460M1269 14L1275 23L1281 33L1288 43L1295 54L1302 65L1309 76L1317 88L1325 101L1334 115L1343 129L1353 144L1363 160L1374 177L1385 195L1398 214L1411 234L1425 256L1440 279L1456 304L1473 331L1492 360L1512 392L1534 426M1285 15L1291 24L1298 34L1304 44L1312 55L1319 66L1327 77L1335 90L1344 102L1353 116L1363 130L1373 145L1384 161L1396 178L1408 196L1421 216L1435 236L1449 258L1465 282L1482 307L1501 334L1521 363M1316 17L1323 26L1330 36L1338 46L1346 57L1354 68L1363 80L1372 92L1382 105L1392 119L1403 133L1414 148L1427 164L1439 182L1453 200L1468 219L1483 240L1500 262L1518 286M1331 18L1339 27L1346 37L1354 47L1363 58L1372 69L1381 81L1391 93L1401 106L1412 120L1423 134L1435 150L1448 166L1461 183L1476 202L1491 221L1508 242L1525 264M1347 18L1355 28L1363 38L1371 48L1380 59L1389 70L1399 82L1409 94L1420 107L1431 121L1443 136L1456 151L1469 168L1484 185L1499 203L1515 223M1363 19L1371 29L1379 39L1388 49L1397 60L1407 71L1417 83L1428 95L1439 109L1451 122L1464 137L1477 153L1491 169L1506 187L1522 205M1371 11L1379 20L1387 30L1396 39L1405 50L1415 61L1425 72L1436 84L1447 97L1459 110L1471 124L1484 139L1498 154L1513 171M1386 12L1394 21L1403 30L1412 40L1422 51L1432 62L1443 73L1454 85L1466 98L1478 111L1491 125L1505 140L1519 156M1402 13L1410 22L1420 31L1429 41L1439 52L1450 63L1461 74L1472 86L1485 99L1498 112L1511 126L1525 141M1417 14L1426 23L1436 32L1446 42L1456 53L1467 64L1479 75L1491 87L1504 100L1517 114M1433 14L1442 24L1452 33L1463 43L1474 54L1485 65L1497 76L1510 89L1523 101M1464 16L1475 25L1485 35L1497 45L1508 56L1521 67M1480 17L1491 26L1502 36L1514 46M1496 18L1507 27L1519 37" stroke="#4e4e4e" stroke-opacity="1.0" stroke-width="1" fill="none"/>
<polyline points="792.4,-109.4 791.4,-108.1 790.4,-106.7 789.4,-105.4 788.4,-104.0 787.4,-102.6 786.4,-101.2 785.4,-99.8 784.3,-98.3 783.3,-96.9 782.2,-95.4 781.1,-93.9 780.1,-92.4 779.0,-90.9 777.9,-89.4 776.8,-87.9 775.6,-86.3 774.5,-84.7 773.3,-83.2 772.2,-81.6 771.0,-79.9 769.8,-78.3 768.6,-76.7 767.4,-75.0 766.2,-73.3 765.0,-71.6 763.7,-69.9 762.5,-68.1 761.2,-66.4 759.9,-64.6 758.6,-62.8 757.3,-61.0 756.0,-59.2 754.6,-57.3 753.3,-55.4 751.9,-53.6 750.5,-51.6 749.1,-49.7 747.7,-47.7 746.3,-45.8 744.8,-43.8 743.4,-41.7 741.9,-39.7 740.4,-37.6 738.9,-35.5 737.3,-33.4 735.8,-31.3 734.2,-29.1 732.6,-26.9 731.0,-24.7 729.4,-22.4 727.7,-20.2 726.1,-17.9 724.4,-15.5 722.7,-13.2 720.9,-10.8 719.2,-8.4 717.4,-5.9 715.6,-3.4 713.8,-0.9 712.0,1.6 710.1,4.2 708.2,6.8 706.3,9.4 704.4,12.1 702.4,14.8 700.4,17.5 698.4,20.3 696.4,23.2 694.3,26.0 692.2,28.9 690.1,31.8 687.9,34.8 685.7,37.8 683.5,40.9 681.3,44.0 679.0,47.1 676.7,50.3 674.3,53.6 672.0,56.9 669.6,60.2 667.1,63.6 664.6,67.0 662.1,70.5 659.5,74.0 656.9,77.6 654.3,81.2 651.6,84.9 648.9,88.7 646.2,92.5 643.3,96.4 640.5,100.3 637.6,104.3 634.7,108.4 631.7,112.5 628.6,116.7 625.6,121.0 622.4,125.3 619.2,129.7 616.0,134.2 612.7,138.7 609.3,143.4 605.9,148.1 602.4,152.9 598.9,157.8 595.3,162.7 591.6,167.8 587.9,173.0 584.1,178.2 580.2,183.6 576.3,189.0 572.3,194.5 568.2,200.2 564.0,206.0 559.8,211.8 555.4,217.8 551.0,223.9 546.5,230.1 541.9,236.5 537.2,243.0 532.4,249.6 527.5,256.3 522.5,263.2 517.4,270.3 512.2,277.4 506.9,284.8 501.5,292.3 495.9,300.0 490.3,307.8 484.4,315.8 478.5,324.0 472.4,332.4 466.2,341.0 459.8,349.8 453.3,358.8 446.6,368.1 439.8,377.5 432.8,387.2 425.6,397.1 418.2,407.3 410.6,417.8 402.9,428.5 394.9,439.5 386.7,450.8 378.3,462.4 369.7,474.3 360.8,486.6 351.7,499.2 342.3,512.2 332.6,525.6 322.6,539.3 312.4,553.5 301.8,568.1 290.9,583.2 279.6,598.7 268.0,614.7 256.0,631.3 243.6,648.4 230.8,666.1 217.6,684.4 203.9,703.3 189.7,722.9 175.0,743.2 159.7,764.3 143.9,786.1 127.5,808.8 110.4,832.4 92.7,856.9 74.2,882.4 55.0,908.9 35.0,936.6 14.1,965.5 -7.8,995.6 -30.6,1027.1 -54.4,1060.1 -79.4,1094.6 -105.6,1130.8 -133.1,1168.7 -162.0,1208.6 -192.4,1250.6 -224.5,1294.9 -258.3,1341.6 -294.0,1390.9 -331.8,1443.1 -371.8,1498.4 -414.4,1557.2 -459.6,1619.7 -507.9,1686.3 -559.4,1757.5 -614.6,1833.7 -673.8,1915.5 -737.5,2003.5 -806.3,2098.4 -880.7,2201.2 -961.4,2312.7 -1049.5,2434.3 -1145.7,2567.2 -1251.5,2713.3 -1368.2,2874.4 -1497.6,3053.2" stroke="#9c3a48" stroke-width="2" fill="none"/>
<polyline points="-1106.2,180.0 -1094.6,181.2 -1083.0,182.5 -1071.3,183.7 -1059.5,185.0 -1047.7,186.2 -1035.9,187.5 -1024.0,188.7 -1012.1,190.0 -1000.1,191.3 -988.1,192.6 -976.0,193.9 -963.9,195.1 -951.7,196.4 -939.5,197.7 -927.2,199.1 -914.8,200.4 -902.4,201.7 -890.0,203.0 -877.5,204.3 -865.0,205.7 -852.3,207.0 -839.7,208.4 -827.0,209.7 -814.2,211.1 -801.4,212.4 -788.5,213.8 -775.6,215.2 -762.6,216.6 -749.6,218.0 -736.5,219.3 -723.3,220.7 -710.1,222.2 -696.8,223.6 -683.5,225.0 -670.1,226.4 -656.6,227.8 -643.1,229.3 -629.6,230.7 -615.9,232.2 -602.2,233.6 -588.5,235.1 -574.7,236.6 -560.8,238.0 -546.9,239.5 -532.9,241.0 -518.8,242.5 -504.7,244.0 -490.5,245.5 -476.2,247.0 -461.9,248.6 -447.5,250.1 -433.1,251.6 -418.5,253.2 -403.9,254.7 -389.3,256.3 -374.6,257.9 -359.8,259.4 -344.9,261.0 -330.0,262.6 -315.0,264.2 -299.9,265.8 -284.8,267.4 -269.6,269.0 -254.3,270.6 -239.0,272.3 -223.5,273.9 -208.0,275.6 -192.5,277.2 -176.8,278.9 -161.1,280.6 -145.3,282.2 -129.4,283.9 -113.5,285.6 -97.5,287.3 -81.4,289.1 -65.2,290.8 -48.9,292.5 -32.6,294.2 -16.2,296.0 0.3,297.7 16.9,299.5 33.5,301.3 50.3,303.1 67.1,304.9 84.0,306.7 101.0,308.5 118.1,310.3 135.2,312.1 152.5,313.9 169.8,315.8 187.2,317.6 204.7,319.5 222.3,321.4 240.0,323.3 257.8,325.1 275.7,327.0 293.6,329.0 311.7,330.9 329.8,332.8 348.1,334.7 366.4,336.7 384.8,338.7 403.3,340.6 421.9,342.6 440.6,344.6 459.5,346.6 478.4,348.6 497.4,350.6 516.5,352.7 535.7,354.7 555.0,356.8 574.4,358.8 593.9,360.9 613.5,363.0 633.3,365.1 653.1,367.2 673.0,369.3 693.1,371.5 713.2,373.6 733.5,375.8 753.9,377.9 774.4,380.1 794.9,382.3 815.7,384.5 836.5,386.7 857.4,388.9 878.5,391.2 899.6,393.4 920.9,395.7 942.3,398.0 963.9,400.3 985.5,402.6 1007.3,404.9 1029.2,407.2 1051.2,409.6 1073.3,411.9 1095.6,414.3 1118.0,416.7 1140.5,419.1 1163.1,421.5 1185.9,423.9 1208.8,426.3 1231.9,428.8 1255.0,431.3 1278.3,433.7 1301.8,436.2 1325.4,438.7 1349.1,441.3 1373.0,443.8 1397.0,446.4 1421.1,448.9 1445.4,451.5 1469.8,454.1 1494.4,456.7 1519.1,459.4 1544.0,462.0 1569.0,464.7 1594.2,467.3 1619.5,470.0 1645.0,472.8 1670.6,475.5 1696.4,478.2 1722.4,481.0 1748.5,483.8 1774.8,486.6 1801.2,489.4 1827.8,492.2 1854.6,495.1 1881.5,497.9 1908.6,500.8 1935.9,503.7 1963.3,506.6 1990.9,509.6 2018.7,512.5 2046.7,515.5 2074.8,518.5 2103.2,521.5 2131.7,524.5 2160.4,527.6 2189.3,530.7 2218.3,533.8 2247.6,536.9 2277.0,540.0 2306.7,543.2 2336.5,546.3 2366.6,549.5 2396.8,552.8 2427.2,556.0 2457.9,559.2 2488.7,562.5 2519.7,565.8 2551.0,569.2 2582.5,572.5 2614.2,575.9 2646.1,579.3 2678.2,582.7 2710.5,586.1 2743.1,589.6 2775.9,593.1" stroke="#6c9a2a" stroke-width="2" fill="none"/>
<defs>
<radialGradient id="tile" cx="50%" cy="50%" r="60%"><stop offset="0" stop-color="#e07a5c"/><stop offset="0.6" stop-color="#d35a38"/><stop offset="1" stop-color="#b83a1c"/></radialGradient>
<linearGradient id="front" x1="0" y1="0" x2="0" y2="1"><stop offset="0" stop-color="#e4e4e4"/><stop offset="1" stop-color="#bdbdbd"/></linearGradient>
</defs>
<path d="M360.7 387.2L210.4 578.0L215.3 589.2L363.6 397.5Z" fill="#9aa2a6"/>
<path d="M360.7 387.2L357.1 405.8M347.5 403.8L357.1 405.8M347.5 403.8L343.9 422.9M333.9 421.2L343.9 422.9M333.9 421.2L330.1 440.8M319.6 439.3L330.1 440.8M319.6 439.3L315.7 459.4M304.6 458.3L315.7 459.4M304.6 458.3L300.6 478.9M289.0 478.1L300.6 478.9M289.0 478.1L284.8 499.3M272.7 498.9L284.8 499.3M272.7 498.9L268.3 520.6M255.5 520.7L268.3 520.6M255.5 520.7L251.0 543.0M237.5 543.6L251.0 543.0M237.5 543.6L232.8 566.5M218.6 567.6L232.8 566.5" stroke="#7d868a" stroke-width="0.8" fill="none"/>
<path d="M363.6 397.5L215.3 589.2" stroke="#6f777a" stroke-width="1" fill="none"/>
<path d="M279.5 378.8L360.7 387.2L363.6 397.5L283.0 389.1Z" fill="#b8bec0"/>
<path d="M279.5 378.8L360.7 387.2L210.4 578.0L111.7 565.3Z" fill="#ccd0d2"/>
<path d="M284.2 373.7L298.6 375.1M350.2 380.4L364.8 381.9M269.7 389.8L284.3 391.3M337.0 396.8L351.9 398.3M254.6 406.5L269.5 408.1M323.2 413.8L338.4 415.5M238.8 424.0L254.1 425.7M308.8 431.7L324.3 433.3M222.4 442.3L237.9 444.1M293.7 450.3L309.6 452.0M205.2 461.4L221.1 463.2M278.0 469.7L294.2 471.6M187.2 481.4L203.4 483.3M261.6 490.1L278.1 492.1M168.4 502.4L184.9 504.3M244.3 511.5L261.2 513.5M148.6 524.3L165.5 526.4M226.2 533.9L243.5 536.0M127.8 547.4L145.1 549.6M207.2 557.4L224.8 559.7" stroke="#a9afb2" stroke-width="0.9" fill="none"/>
<path d="M292.0 382.6L344.1 387.9L324.0 412.8L270.4 407.1Z" fill="url(#tile)"/>
<path d="M281.4 394.7L334.2 400.2M318.0 385.2L297.1 410.0" stroke="#c46048" stroke-width="0.8" opacity="0.7"/>
<path d="M268.7 409.1L322.3 414.9L294.6 449.2L238.9 443.0Z" fill="url(#tile)"/>
<path d="M254.1 425.7L308.8 431.7M295.4 412.0L266.7 446.1" stroke="#c46048" stroke-width="0.8" opacity="0.7"/>
<path d="M237.0 445.1L292.8 451.4L262.5 488.9L204.4 482.1Z" fill="url(#tile)"/>
<path d="M221.1 463.2L278.0 469.7M264.8 448.3L233.4 485.5" stroke="#c46048" stroke-width="0.8" opacity="0.7"/>
<path d="M202.3 484.5L260.6 491.3L227.3 532.6L166.6 525.1Z" fill="url(#tile)"/>
<path d="M184.9 504.3L244.3 511.5M231.3 487.9L196.8 528.8" stroke="#c46048" stroke-width="0.8" opacity="0.7"/>
<path d="M164.3 527.7L225.1 535.2L192.4 575.7L129.3 567.6Z" fill="url(#tile)"/>
<path d="M147.2 547.2L209.1 555.0M194.6 531.5L160.7 571.6" stroke="#c46048" stroke-width="0.8" opacity="0.7"/>
<path d="M269.5 408.1L323.2 413.8M237.9 444.1L293.7 450.3M203.4 483.3L261.6 490.1M165.5 526.4L226.2 533.9" stroke="#c9b4ae" stroke-width="1.2" fill="none"/>
<path d="M367.8 332.1L684.9 365.6L685.4 375.8L370.4 342.1Z" fill="url(#front)"/>
<path d="M380.4 333.4L383.0 343.4M393.1 334.8L395.6 344.8M405.9 336.1L408.3 346.2M418.7 337.5L421.0 347.5M431.6 338.8L433.8 348.9M444.5 340.2L446.6 350.3M457.4 341.6L459.5 351.6M470.4 342.9L472.4 353.0M483.5 344.3L485.4 354.4M496.5 345.7L498.4 355.8M509.7 347.1L511.4 357.2M522.9 348.5L524.5 358.6M536.1 349.9L537.6 360.0M549.4 351.3L550.8 361.4M562.7 352.7L564.1 362.8M576.1 354.1L577.4 364.3M589.5 355.5L590.7 365.7M603.0 357.0L604.1 367.1M616.5 358.4L617.5 368.6M630.1 359.8L631.0 370.0M643.7 361.3L644.5 371.5M657.4 362.7L658.1 372.9M671.1 364.2L671.7 374.4" stroke="#a8a8a8" stroke-width="0.8" fill="none"/>
<path d="M684.9 365.6L697.6 334.9L698.1 344.9L685.4 375.8Z" fill="#b4b8ba"/>
<path d="M392.2 303.9L697.6 334.9L684.9 365.6L367.8 332.1Z" fill="#d6d6d6"/>
<path d="M394.7 305.1L437.3 309.5L417.4 334.5L373.4 329.8Z" fill="url(#tile)"/>
<path d="M444.0 310.1L487.2 314.5L468.9 339.9L424.2 335.2Z" fill="url(#tile)"/>
<path d="M493.9 315.2L537.7 319.7L521.1 345.4L475.8 340.6Z" fill="url(#tile)"/>
<path d="M544.5 320.3L589.0 324.9L574.1 351.0L528.1 346.1Z" fill="url(#tile)"/>
<path d="M595.9 325.6L641.0 330.1L627.8 356.6L581.2 351.7Z" fill="url(#tile)"/>
<path d="M648.0 330.8L693.7 335.5L682.4 362.4L635.1 357.4Z" fill="url(#tile)"/>
<path d="M396.6 437.1L400.8 437.6L405.0 438.0L409.3 438.3L413.6 438.5L418.0 438.7L422.4 438.8L426.8 438.8L431.3 438.7L435.8 438.6L440.3 438.4L444.8 438.1L449.3 437.7L453.8 437.3L458.4 436.7L462.9 436.1L467.4 435.5L472.0 434.8L476.5 434.0L480.9 433.1L485.4 432.1L489.8 431.1L494.2 430.1L498.6 428.9L502.9 427.7L507.1 426.5L511.3 425.1L515.5 423.7L519.6 422.3L523.6 420.8L517.5 413.5L513.9 414.8L510.2 416.1L506.4 417.3L502.6 418.5L498.8 419.7L494.9 420.7L491.0 421.7L487.0 422.7L483.0 423.6L479.0 424.4L475.0 425.2L471.0 425.9L466.9 426.6L462.8 427.2L458.7 427.7L454.7 428.1L450.6 428.5L446.5 428.9L442.5 429.1L438.4 429.3L434.4 429.4L430.4 429.5L426.4 429.5L422.4 429.4L418.5 429.3L414.6 429.1L410.8 428.8L407.0 428.4L403.2 428.0Z" fill="#9a9a9a" fill-opacity="0.55"/>
<path d="M396.6 437.1L404.8 438.0L413.2 438.5L421.7 438.8L430.4 438.7L439.1 438.4L447.9 437.8L456.8 436.9L465.6 435.8L474.4 434.3L483.1 432.6L491.8 430.7L500.3 428.5L508.6 426.0L516.7 423.3L524.6 420.4L532.3 417.3L539.6 414.1L546.7 410.6L553.5 407.0L559.9 403.2L566.0 399.3L571.7 395.3L577.1 391.2L582.0 386.9L586.5 382.7L590.6 378.3L594.3 374.0L597.6 369.5L600.5 365.1L602.9 360.7L604.9 356.3L606.5 351.9L607.7 347.6L608.4 343.3L608.7 339.0L608.7 334.8L608.2 330.7L607.3 326.7L606.1 322.8L604.5 319.0L602.5 315.3L600.1 311.8L597.5 308.3L594.4 305.0L591.1 301.9L587.5 298.8L583.5 296.0L579.3 293.3L574.8 290.7L570.1 288.3L565.1 286.1L559.9 284.0L554.4 282.1L548.8 280.4L542.9 278.9L536.9 277.5L530.7 276.3L524.4 275.3L517.9 274.5L511.3 273.9L504.6 273.4L497.7 273.2L490.8 273.1L483.9 273.2L476.8 273.5L469.7 274.0L462.6 274.6L455.5 275.5L448.3 276.5L441.2 277.7L434.1 279.1L427.0 280.7L420.0 282.4L413.0 284.3L406.2 286.4L399.4 288.7L392.8 291.1L386.3 293.7L379.9 296.4L373.7 299.3L367.7 302.4L361.8 305.6L356.2 308.9L350.8 312.4L345.7 316.0L340.8 319.7L336.1 323.5L331.8 327.4L327.8 331.5L324.1 335.6L320.8 339.8L317.8 344.0L315.1 348.3L312.9 352.7L311.0 357.1L309.6 361.5L308.5 366.0L307.9 370.4L307.8 374.8L308.1 379.2L308.8 383.5L310.0 387.8L311.7 392.0L313.8 396.1L316.4 400.1L319.4 403.9L323.0 407.7L326.9 411.3L331.3 414.7L336.2 418.0L341.4 421.0L347.1 423.9L353.2 426.5L359.6 428.9L366.4 431.1L373.5 433.0L381.0 434.6L388.7 436.0L396.6 437.1Z" stroke="#dcdcdc" stroke-width="1.3" fill="none"/>
<path d="M403.2 428.0L410.6 428.8L418.1 429.3L425.8 429.5L433.6 429.5L441.4 429.2L449.4 428.6L457.3 427.9L465.3 426.8L473.2 425.5L481.0 424.0L488.8 422.3L496.4 420.3L503.9 418.1L511.3 415.7L518.4 413.2L525.3 410.4L532.0 407.5L538.4 404.4L544.6 401.1L550.4 397.7L556.0 394.2L561.2 390.6L566.0 386.9L570.6 383.1L574.7 379.3L578.5 375.4L581.9 371.4L585.0 367.4L587.6 363.4L589.9 359.4L591.8 355.4L593.3 351.4L594.4 347.5L595.2 343.6L595.5 339.7L595.5 335.9L595.2 332.2L594.4 328.5L593.4 325.0L591.9 321.5L590.2 318.1L588.1 314.8L585.7 311.7L583.0 308.6L580.0 305.7L576.7 302.9L573.2 300.3L569.4 297.8L565.3 295.4L561.0 293.2L556.4 291.2L551.7 289.3L546.7 287.5L541.5 285.9L536.2 284.5L530.7 283.3L525.0 282.2L519.2 281.3L513.3 280.5L507.2 279.9L501.0 279.5L494.8 279.3L488.4 279.2L482.0 279.3L475.6 279.6L469.1 280.0L462.5 280.6L456.0 281.4L449.4 282.3L442.9 283.5L436.4 284.8L429.9 286.2L423.5 287.8L417.2 289.6L410.9 291.5L404.7 293.6L398.6 295.8L392.7 298.2L386.9 300.7L381.2 303.4L375.8 306.2L370.5 309.2L365.4 312.2L360.5 315.4L355.8 318.7L351.4 322.1L347.3 325.6L343.4 329.2L339.8 332.8L336.5 336.6L333.5 340.4L330.8 344.3L328.5 348.2L326.5 352.2L324.9 356.2L323.7 360.2L322.8 364.2L322.4 368.2L322.3 372.2L322.6 376.1L323.4 380.0L324.5 383.9L326.1 387.6L328.1 391.3L330.5 394.9L333.3 398.4L336.5 401.8L340.1 405.0L344.2 408.0L348.6 411.0L353.4 413.7L358.5 416.2L364.0 418.6L369.8 420.7L376.0 422.6L382.4 424.3L389.1 425.8L396.0 427.0L403.2 428.0Z" stroke="#d0d0d0" stroke-width="1.1" fill="none"/>
<path d="M462.0 346.9L405.4 434.2" stroke="#e2e2e2" stroke-width="2.6"/>
<path d="M462.0 346.9L526.9 415.8" stroke="#cfcfcf" stroke-width="1.2"/>
<path d="M390.6 445.5L383.7 455.0M405.4 446.8L400.0 456.5M420.8 447.3L416.9 457.0M436.6 446.9L434.2 456.6M452.5 445.7L451.6 455.2M468.5 443.6L469.1 452.9M484.3 440.7L486.4 449.6M499.8 437.0L503.4 445.6M514.8 432.6L519.8 440.7M529.2 427.5L535.5 435.1M542.9 421.8L550.4 428.8M555.7 415.6L564.3 421.9M567.5 408.9L577.1 414.6M578.2 401.8L588.8 406.8M587.8 394.4L599.1 398.6M596.3 386.7L608.2 390.3M603.5 378.9L615.9 381.7M609.4 371.0L622.2 373.1M614.1 363.1L627.2 364.4M617.5 355.2L630.7 355.9M619.6 347.4L632.9 347.4M620.6 339.7L633.7 339.1M620.3 332.3L633.3 331.1M618.8 325.1L631.6 323.3M616.3 318.2L628.7 315.9M612.7 311.6L624.7 308.8M608.0 305.5L619.5 302.2M602.4 299.7L613.4 296.0M595.9 294.3L606.3 290.2M588.5 289.4L598.3 285.0M580.4 285.0L589.4 280.2M571.5 281.0L579.8 276.0M562.0 277.5L569.5 272.3M551.8 274.6L558.6 269.1M541.2 272.1L547.1 266.5M530.0 270.2L535.1 264.5M518.5 268.8L522.7 263.0M506.6 268.0L509.9 262.1M494.4 267.7L496.8 261.8M482.0 267.9L483.5 262.0M469.4 268.7L470.0 262.9M456.8 270.0L456.4 264.3M444.1 271.8L442.8 266.2M431.5 274.2L429.2 268.7M419.0 277.1L415.7 271.8M406.6 280.5L402.4 275.4M394.5 284.4L389.4 279.6M382.8 288.8L376.7 284.3M371.4 293.6L364.4 289.5M360.5 298.9L352.6 295.2M350.2 304.7L341.4 301.3M340.5 310.8L330.8 307.9M331.5 317.3L321.0 314.9M323.3 324.2L312.1 322.3M316.0 331.3L304.0 330.1M309.7 338.8L297.0 338.1M304.3 346.4L291.1 346.3M300.1 354.2L286.3 354.8M297.0 362.1L282.9 363.4M295.2 370.0L280.7 372.0M294.7 378.0L280.0 380.7M295.4 385.8L280.6 389.3M297.6 393.5L282.8 397.7M301.1 400.9L286.5 405.8M306.0 408.1L291.8 413.7M312.3 414.8L298.5 421.1M320.0 421.1L306.8 428.0M328.9 426.9L316.5 434.4M339.2 432.0L327.5 440.1M350.5 436.5L339.9 445.1M363.0 440.3L353.5 449.2M376.4 443.3L368.1 452.6" stroke="#ececec" stroke-width="1.8" fill="none"/>
<path d="M391.7 325.8 C396 305 420 286 450 284.5 C480 284 508 305 518 332 C524 346 528 356 529.2 366.7" stroke="#e3394f" stroke-width="2.6" fill="none" stroke-linecap="round"/>
<path d="M467.5 275 C450 280 434 300 430 326.7 C426 350 427 370 433.3 396.7 C437 408 444 414 451.7 417.5" stroke="#7ccc1e" stroke-width="2.6" fill="none" stroke-linecap="round"/>
<path d="M424 392 L430 398 L416 409 Z" fill="#ff3355"/>
<path d="M541 345 L560 357 L541 360 Z" fill="#80e010"/>
<circle cx="460" cy="346.5" r="8.5" fill="none" stroke="#e8d040" stroke-width="2.2"/>
<circle cx="460" cy="346.5" r="6.5" fill="none" stroke="#ffffff" stroke-width="1.8" stroke-dasharray="3.5 3"/>
<circle cx="460" cy="346.5" r="6.5" fill="none" stroke="#d02828" stroke-width="1.8" stroke-dasharray="3 3.5" stroke-dashoffset="3.5"/>
<path d="M441 344 L452 345 M468 347 L478 348 M457 331 L459 338 M462 355 L463 360 M465 336 L468 332" stroke="#202020" stroke-width="1.2"/>
<g><path d="M715.0 258.7L765.5 263.3L764.5 274.6L714.2 270.0Z" fill="#cdc9d3" stroke="#cdc9d3" stroke-width="0.5"/><path d="M714.2 270.0L764.5 274.6L763.2 285.8L712.9 281.1Z" fill="#d0ccd6" stroke="#d0ccd6" stroke-width="0.5"/><path d="M715.5 247.6L766.1 252.2L765.5 263.3L715.0 258.7Z" fill="#c8c4ce" stroke="#c8c4ce" stroke-width="0.5"/><path d="M712.9 281.1L763.2 285.8L761.7 296.5L711.2 291.7Z" fill="#cfcbd5" stroke="#cfcbd5" stroke-width="0.5"/><path d="M715.4 237.1L766.3 241.6L766.1 252.2L715.5 247.6Z" fill="#c0bdc6" stroke="#c0bdc6" stroke-width="0.5"/><path d="M765.5 263.3L816.6 268.0L815.5 279.4L764.5 274.6Z" fill="#cecad4" stroke="#cecad4" stroke-width="0.5"/><path d="M711.2 291.7L761.7 296.5L759.9 306.3L709.2 301.4Z" fill="#ccc8d2" stroke="#ccc8d2" stroke-width="0.5"/><path d="M764.5 274.6L815.5 279.4L814.3 290.6L763.2 285.8Z" fill="#d0ccd6" stroke="#d0ccd6" stroke-width="0.5"/><path d="M766.1 252.2L817.4 256.7L816.6 268.0L765.5 263.3Z" fill="#c8c5ce" stroke="#c8c5ce" stroke-width="0.5"/><path d="M714.9 227.5L766.1 231.9L766.3 241.6L715.4 237.1Z" fill="#b6b2bb" stroke="#b6b2bb" stroke-width="0.5"/><path d="M763.2 285.8L814.3 290.6L812.8 301.4L761.7 296.5Z" fill="#d0ccd6" stroke="#d0ccd6" stroke-width="0.5"/><path d="M766.3 241.6L817.9 246.1L817.4 256.7L766.1 252.2Z" fill="#c1bdc6" stroke="#c1bdc6" stroke-width="0.5"/><path d="M816.6 268.0L868.4 272.7L867.2 284.2L815.5 279.4Z" fill="#cecad4" stroke="#cecad4" stroke-width="0.5"/><path d="M815.5 279.4L867.2 284.2L866.0 295.5L814.3 290.6Z" fill="#d0ccd6" stroke="#d0ccd6" stroke-width="0.5"/><path d="M709.2 301.4L759.9 306.3L757.9 314.8L706.9 309.8Z" fill="#c5c2cb" stroke="#c5c2cb" stroke-width="0.5"/><path d="M817.4 256.7L869.4 261.4L868.4 272.7L816.6 268.0Z" fill="#c9c5cf" stroke="#c9c5cf" stroke-width="0.5"/><path d="M761.7 296.5L812.8 301.4L811.2 311.2L759.9 306.3Z" fill="#ccc8d2" stroke="#ccc8d2" stroke-width="0.5"/><path d="M868.4 272.7L920.9 277.4L919.7 289.0L867.2 284.2Z" fill="#cecad4" stroke="#cecad4" stroke-width="0.5"/><path d="M814.3 290.6L866.0 295.5L864.7 306.3L812.8 301.4Z" fill="#d0ccd6" stroke="#d0ccd6" stroke-width="0.5"/><path d="M867.2 284.2L919.7 289.0L918.4 300.4L866.0 295.5Z" fill="#d0ccd7" stroke="#d0ccd7" stroke-width="0.5"/><path d="M920.9 277.4L937.4 279.5L935.4 291.0L919.7 289.0Z" fill="#cecad4" stroke="#cecad4" stroke-width="0.5"/><path d="M713.9 219.2L765.6 223.6L766.1 231.9L714.9 227.5Z" fill="#aaa6af" stroke="#aaa6af" stroke-width="0.5"/><path d="M869.4 261.4L922.1 266.1L920.9 277.4L868.4 272.7Z" fill="#c9c5cf" stroke="#c9c5cf" stroke-width="0.5"/><path d="M919.7 289.0L935.4 291.0L933.2 302.3L918.4 300.4Z" fill="#d0ccd6" stroke="#d0ccd6" stroke-width="0.5"/><path d="M817.9 246.1L870.2 250.7L869.4 261.4L817.4 256.7Z" fill="#c1bdc7" stroke="#c1bdc7" stroke-width="0.5"/><path d="M766.1 231.9L818.1 236.5L817.9 246.1L766.3 241.6Z" fill="#b6b3bc" stroke="#b6b3bc" stroke-width="0.5"/><path d="M922.1 266.1L939.1 268.2L937.4 279.5L920.9 277.4Z" fill="#c9c5ce" stroke="#c9c5ce" stroke-width="0.5"/><path d="M937.4 279.5L953.7 282.6L950.9 294.0L935.4 291.0Z" fill="#ccc9d2" stroke="#ccc9d2" stroke-width="0.5"/><path d="M935.4 291.0L950.9 294.0L947.8 305.2L933.2 302.3Z" fill="#cfcbd5" stroke="#cfcbd5" stroke-width="0.5"/><path d="M866.0 295.5L918.4 300.4L917.2 311.3L864.7 306.3Z" fill="#d0ccd6" stroke="#d0ccd6" stroke-width="0.5"/><path d="M918.4 300.4L933.2 302.3L930.9 313.1L917.2 311.3Z" fill="#d0ccd6" stroke="#d0ccd6" stroke-width="0.5"/><path d="M939.1 268.2L955.9 271.4L953.7 282.6L937.4 279.5Z" fill="#c7c3cd" stroke="#c7c3cd" stroke-width="0.5"/><path d="M870.2 250.7L923.2 255.4L922.1 266.1L869.4 261.4Z" fill="#c1bdc7" stroke="#c1bdc7" stroke-width="0.5"/><path d="M812.8 301.4L864.7 306.3L863.3 316.3L811.2 311.2Z" fill="#ccc9d2" stroke="#ccc9d2" stroke-width="0.5"/><path d="M933.2 302.3L947.8 305.2L944.3 315.8L930.9 313.1Z" fill="#cfcbd5" stroke="#cfcbd5" stroke-width="0.5"/><path d="M953.7 282.6L969.4 286.8L966.0 298.1L950.9 294.0Z" fill="#cbc7d0" stroke="#cbc7d0" stroke-width="0.5"/><path d="M923.2 255.4L940.5 257.5L939.1 268.2L922.1 266.1Z" fill="#c1bdc6" stroke="#c1bdc6" stroke-width="0.5"/><path d="M759.9 306.3L811.2 311.2L809.6 319.9L757.9 314.8Z" fill="#c6c2cc" stroke="#c6c2cc" stroke-width="0.5"/><path d="M706.9 309.8L757.9 314.8L755.8 321.9L704.5 316.8Z" fill="#bcb8c1" stroke="#bcb8c1" stroke-width="0.5"/><path d="M950.9 294.0L966.0 298.1L961.9 309.1L947.8 305.2Z" fill="#cdc9d3" stroke="#cdc9d3" stroke-width="0.5"/><path d="M955.9 271.4L972.1 275.6L969.4 286.8L953.7 282.6Z" fill="#c5c1cb" stroke="#c5c1cb" stroke-width="0.5"/><path d="M818.1 236.5L870.8 241.0L870.2 250.7L817.9 246.1Z" fill="#b7b3bc" stroke="#b7b3bc" stroke-width="0.5"/><path d="M940.5 257.5L957.5 260.6L955.9 271.4L939.1 268.2Z" fill="#bfbcc5" stroke="#bfbcc5" stroke-width="0.5"/><path d="M864.7 306.3L917.2 311.3L916.1 321.4L863.3 316.3Z" fill="#cdc9d3" stroke="#cdc9d3" stroke-width="0.5"/><path d="M947.8 305.2L961.9 309.1L957.3 319.4L944.3 315.8Z" fill="#cecad4" stroke="#cecad4" stroke-width="0.5"/><path d="M917.2 311.3L930.9 313.1L928.5 323.0L916.1 321.4Z" fill="#ccc9d2" stroke="#ccc9d2" stroke-width="0.5"/><path d="M765.6 223.6L818.0 228.1L818.1 236.5L766.1 231.9Z" fill="#aaa7af" stroke="#aaa7af" stroke-width="0.5"/><path d="M712.4 212.4L764.6 216.9L765.6 223.6L713.9 219.2Z" fill="#a09ca4" stroke="#a09ca4" stroke-width="0.5"/><path d="M930.9 313.1L944.3 315.8L940.6 325.5L928.5 323.0Z" fill="#ccc8d2" stroke="#ccc8d2" stroke-width="0.5"/><path d="M870.8 241.0L924.2 245.7L923.2 255.4L870.2 250.7Z" fill="#b7b3bc" stroke="#b7b3bc" stroke-width="0.5"/><path d="M969.4 286.8L984.5 292.0L980.3 303.1L966.0 298.1Z" fill="#c8c4ce" stroke="#c8c4ce" stroke-width="0.5"/><path d="M966.0 298.1L980.3 303.1L975.3 313.9L961.9 309.1Z" fill="#cbc7d1" stroke="#cbc7d1" stroke-width="0.5"/><path d="M957.5 260.6L974.0 264.9L972.1 275.6L955.9 271.4Z" fill="#bdb9c2" stroke="#bdb9c2" stroke-width="0.5"/><path d="M924.2 245.7L941.5 247.7L940.5 257.5L923.2 255.4Z" fill="#b6b3bc" stroke="#b6b3bc" stroke-width="0.5"/><path d="M811.2 311.2L863.3 316.3L862.0 325.0L809.6 319.9Z" fill="#c6c2cc" stroke="#c6c2cc" stroke-width="0.5"/><path d="M972.1 275.6L987.7 280.9L984.5 292.0L969.4 286.8Z" fill="#c2bec8" stroke="#c2bec8" stroke-width="0.5"/><path d="M961.9 309.1L975.3 313.9L969.6 323.9L957.3 319.4Z" fill="#ccc8d2" stroke="#ccc8d2" stroke-width="0.5"/><path d="M944.3 315.8L957.3 319.4L952.3 328.8L940.6 325.5Z" fill="#cbc7d1" stroke="#cbc7d1" stroke-width="0.5"/><path d="M941.5 247.7L958.5 250.8L957.5 260.6L940.5 257.5Z" fill="#b5b1ba" stroke="#b5b1ba" stroke-width="0.5"/><path d="M757.9 314.8L809.6 319.9L807.9 327.0L755.8 321.9Z" fill="#bcb9c2" stroke="#bcb9c2" stroke-width="0.5"/><path d="M863.3 316.3L916.1 321.4L915.1 330.2L862.0 325.0Z" fill="#c6c2cc" stroke="#c6c2cc" stroke-width="0.5"/><path d="M818.0 228.1L871.2 232.6L870.8 241.0L818.1 236.5Z" fill="#aaa7af" stroke="#aaa7af" stroke-width="0.5"/><path d="M916.1 321.4L928.5 323.0L926.1 331.7L915.1 330.2Z" fill="#c6c2cc" stroke="#c6c2cc" stroke-width="0.5"/><path d="M704.5 316.8L755.8 321.9L753.7 327.1L701.9 321.9Z" fill="#afacb4" stroke="#afacb4" stroke-width="0.5"/><path d="M974.0 264.9L989.8 270.1L987.7 280.9L972.1 275.6Z" fill="#bab6bf" stroke="#bab6bf" stroke-width="0.5"/><path d="M980.3 303.1L993.8 309.1L987.9 319.5L975.3 313.9Z" fill="#c8c4ce" stroke="#c8c4ce" stroke-width="0.5"/><path d="M928.5 323.0L940.6 325.5L936.8 333.9L926.1 331.7Z" fill="#c6c2cc" stroke="#c6c2cc" stroke-width="0.5"/><path d="M957.3 319.4L969.6 323.9L963.5 332.9L952.3 328.8Z" fill="#c9c6cf" stroke="#c9c6cf" stroke-width="0.5"/><path d="M984.5 292.0L998.7 298.1L993.8 309.1L980.3 303.1Z" fill="#c5c1ca" stroke="#c5c1ca" stroke-width="0.5"/><path d="M958.5 250.8L974.9 255.0L974.0 264.9L957.5 260.6Z" fill="#b3afb8" stroke="#b3afb8" stroke-width="0.5"/><path d="M871.2 232.6L925.1 237.3L924.2 245.7L870.8 241.0Z" fill="#aaa7af" stroke="#aaa7af" stroke-width="0.5"/><path d="M764.6 216.9L817.6 221.3L818.0 228.1L765.6 223.6Z" fill="#a09da5" stroke="#a09da5" stroke-width="0.5"/><path d="M975.3 313.9L987.9 319.5L981.2 329.2L969.6 323.9Z" fill="#c9c5cf" stroke="#c9c5cf" stroke-width="0.5"/><path d="M925.1 237.3L942.0 239.2L941.5 247.7L924.2 245.7Z" fill="#aaa7af" stroke="#aaa7af" stroke-width="0.5"/><path d="M987.7 280.9L1002.3 287.1L998.7 298.1L984.5 292.0Z" fill="#bebbc4" stroke="#bebbc4" stroke-width="0.5"/><path d="M940.6 325.5L952.3 328.8L947.2 336.9L936.8 333.9Z" fill="#c5c1cb" stroke="#c5c1cb" stroke-width="0.5"/><path d="M809.6 319.9L862.0 325.0L860.7 332.2L807.9 327.0Z" fill="#bcb9c2" stroke="#bcb9c2" stroke-width="0.5"/><path d="M710.6 207.6L763.3 212.0L764.6 216.9L712.4 212.4Z" fill="#939097" stroke="#939097" stroke-width="0.5"/><path d="M942.0 239.2L958.7 242.3L958.5 250.8L941.5 247.7Z" fill="#a9a6ae" stroke="#a9a6ae" stroke-width="0.5"/><path d="M969.6 323.9L981.2 329.2L973.9 337.8L963.5 332.9Z" fill="#c8c4ce" stroke="#c8c4ce" stroke-width="0.5"/><path d="M974.9 255.0L990.7 260.1L989.8 270.1L974.0 264.9Z" fill="#afacb4" stroke="#afacb4" stroke-width="0.5"/><path d="M952.3 328.8L963.5 332.9L957.1 340.6L947.2 336.9Z" fill="#c4c0ca" stroke="#c4c0ca" stroke-width="0.5"/><path d="M862.0 325.0L915.1 330.2L914.2 337.5L860.7 332.2Z" fill="#bdb9c2" stroke="#bdb9c2" stroke-width="0.5"/><path d="M989.8 270.1L1004.7 276.3L1002.3 287.1L987.7 280.9Z" fill="#b6b2bb" stroke="#b6b2bb" stroke-width="0.5"/><path d="M915.1 330.2L926.1 331.7L923.7 338.8L914.2 337.5Z" fill="#bdb9c2" stroke="#bdb9c2" stroke-width="0.5"/><path d="M817.6 221.3L871.3 225.9L871.2 232.6L818.0 228.1Z" fill="#a09da5" stroke="#a09da5" stroke-width="0.5"/><path d="M993.8 309.1L1006.2 315.9L999.5 326.0L987.9 319.5Z" fill="#c5c1cb" stroke="#c5c1cb" stroke-width="0.5"/><path d="M755.8 321.9L807.9 327.0L806.2 332.3L753.7 327.1Z" fill="#afacb4" stroke="#afacb4" stroke-width="0.5"/><path d="M958.7 242.3L974.9 246.3L974.9 255.0L958.5 250.8Z" fill="#a8a4ad" stroke="#a8a4ad" stroke-width="0.5"/><path d="M998.7 298.1L1011.7 305.2L1006.2 315.9L993.8 309.1Z" fill="#c1bdc6" stroke="#c1bdc6" stroke-width="0.5"/><path d="M926.1 331.7L936.8 333.9L933.1 340.8L923.7 338.8Z" fill="#bdb9c2" stroke="#bdb9c2" stroke-width="0.5"/><path d="M987.9 319.5L999.5 326.0L991.8 335.3L981.2 329.2Z" fill="#c7c3cc" stroke="#c7c3cc" stroke-width="0.5"/><path d="M701.9 321.9L753.7 327.1L751.6 330.3L699.3 325.1Z" fill="#9f9ba3" stroke="#9f9ba3" stroke-width="0.5"/><path d="M871.3 225.9L925.7 230.5L925.1 237.3L871.2 232.6Z" fill="#a09da5" stroke="#a09da5" stroke-width="0.5"/><path d="M1002.3 287.1L1015.8 294.2L1011.7 305.2L998.7 298.1Z" fill="#bab6c0" stroke="#bab6c0" stroke-width="0.5"/><path d="M936.8 333.9L947.2 336.9L942.1 343.4L933.1 340.8Z" fill="#bcb9c2" stroke="#bcb9c2" stroke-width="0.5"/><path d="M963.5 332.9L973.9 337.8L966.3 344.9L957.1 340.6Z" fill="#c3bfc9" stroke="#c3bfc9" stroke-width="0.5"/><path d="M925.7 230.5L942.1 232.4L942.0 239.2L925.1 237.3Z" fill="#a09da5" stroke="#a09da5" stroke-width="0.5"/><path d="M981.2 329.2L991.8 335.3L983.4 343.3L973.9 337.8Z" fill="#c6c2cb" stroke="#c6c2cb" stroke-width="0.5"/><path d="M763.3 212.0L816.8 216.5L817.6 221.3L764.6 216.9Z" fill="#939098" stroke="#939098" stroke-width="0.5"/><path d="M990.7 260.1L1005.6 266.3L1004.7 276.3L989.8 270.1Z" fill="#aba8b0" stroke="#aba8b0" stroke-width="0.5"/><path d="M974.9 246.3L990.4 251.3L990.7 260.1L974.9 255.0Z" fill="#a5a2aa" stroke="#a5a2aa" stroke-width="0.5"/><path d="M807.9 327.0L860.7 332.2L859.5 337.6L806.2 332.3Z" fill="#b0acb5" stroke="#b0acb5" stroke-width="0.5"/><path d="M942.1 232.4L958.2 235.3L958.7 242.3L942.0 239.2Z" fill="#9f9ca4" stroke="#9f9ca4" stroke-width="0.5"/><path d="M947.2 336.9L957.1 340.6L950.6 346.6L942.1 343.4Z" fill="#bcb9c2" stroke="#bcb9c2" stroke-width="0.5"/><path d="M708.3 204.9L761.7 209.3L763.3 212.0L710.6 207.6Z" fill="#838187" stroke="#838187" stroke-width="0.5"/><path d="M1004.7 276.3L1018.4 283.5L1015.8 294.2L1002.3 287.1Z" fill="#b1aeb6" stroke="#b1aeb6" stroke-width="0.5"/><path d="M1006.2 315.9L1017.3 323.5L1009.8 333.3L999.5 326.0Z" fill="#c1bdc7" stroke="#c1bdc7" stroke-width="0.5"/><path d="M860.7 332.2L914.2 337.5L913.5 343.0L859.5 337.6Z" fill="#b0acb5" stroke="#b0acb5" stroke-width="0.5"/><path d="M973.9 337.8L983.4 343.3L974.6 349.9L966.3 344.9Z" fill="#c2bec8" stroke="#c2bec8" stroke-width="0.5"/><path d="M999.5 326.0L1009.8 333.3L1001.2 342.0L991.8 335.3Z" fill="#c3c0c9" stroke="#c3c0c9" stroke-width="0.5"/><path d="M958.2 235.3L973.9 239.1L974.9 246.3L958.7 242.3Z" fill="#9e9aa2" stroke="#9e9aa2" stroke-width="0.5"/><path d="M1011.7 305.2L1023.4 313.1L1017.3 323.5L1006.2 315.9Z" fill="#bcb8c2" stroke="#bcb8c2" stroke-width="0.5"/><path d="M914.2 337.5L923.7 338.8L921.6 344.1L913.5 343.0Z" fill="#b0acb5" stroke="#b0acb5" stroke-width="0.5"/><path d="M816.8 216.5L871.1 221.1L871.3 225.9L817.6 221.3Z" fill="#939198" stroke="#939198" stroke-width="0.5"/><path d="M957.1 340.6L966.3 344.9L958.5 350.4L950.6 346.6Z" fill="#bcb8c1" stroke="#bcb8c1" stroke-width="0.5"/><path d="M923.7 338.8L933.1 340.8L929.5 345.8L921.6 344.1Z" fill="#b0adb5" stroke="#b0adb5" stroke-width="0.5"/><path d="M753.7 327.1L806.2 332.3L804.7 335.6L751.6 330.3Z" fill="#9f9ca3" stroke="#9f9ca3" stroke-width="0.5"/><path d="M991.8 335.3L1001.2 342.0L991.9 349.5L983.4 343.3Z" fill="#c3c0c9" stroke="#c3c0c9" stroke-width="0.5"/><path d="M990.4 251.3L1005.0 257.2L1005.6 266.3L990.7 260.1Z" fill="#a29fa7" stroke="#a29fa7" stroke-width="0.5"/><path d="M1015.8 294.2L1028.0 302.3L1023.4 313.1L1011.7 305.2Z" fill="#b5b1ba" stroke="#b5b1ba" stroke-width="0.5"/><path d="M933.1 340.8L942.1 343.4L937.1 348.0L929.5 345.8Z" fill="#b0adb6" stroke="#b0adb6" stroke-width="0.5"/><path d="M1005.6 266.3L1019.3 273.3L1018.4 283.5L1004.7 276.3Z" fill="#a6a3ab" stroke="#a6a3ab" stroke-width="0.5"/><path d="M871.1 221.1L926.1 225.7L925.7 230.5L871.3 225.9Z" fill="#939198" stroke="#939198" stroke-width="0.5"/><path d="M699.3 325.1L751.6 330.3L749.6 331.3L696.7 326.0Z" fill="#89868d" stroke="#89868d" stroke-width="0.5"/><path d="M973.9 239.1L988.8 243.9L990.4 251.3L974.9 246.3Z" fill="#9b98a0" stroke="#9b98a0" stroke-width="0.5"/><path d="M926.1 225.7L941.7 227.5L942.1 232.4L925.7 230.5Z" fill="#939098" stroke="#939098" stroke-width="0.5"/><path d="M942.1 343.4L950.6 346.6L944.3 350.7L937.1 348.0Z" fill="#b1aeb6" stroke="#b1aeb6" stroke-width="0.5"/><path d="M966.3 344.9L974.6 349.9L965.7 354.7L958.5 350.4Z" fill="#bcb8c1" stroke="#bcb8c1" stroke-width="0.5"/><path d="M983.4 343.3L991.9 349.5L982.0 355.4L974.6 349.9Z" fill="#c1bdc6" stroke="#c1bdc6" stroke-width="0.5"/><path d="M761.7 209.3L815.8 213.9L816.8 216.5L763.3 212.0Z" fill="#838187" stroke="#838187" stroke-width="0.5"/><path d="M941.7 227.5L957.0 230.2L958.2 235.3L942.1 232.4Z" fill="#929097" stroke="#929097" stroke-width="0.5"/><path d="M806.2 332.3L859.5 337.6L858.5 341.0L804.7 335.6Z" fill="#9f9ca3" stroke="#9f9ca3" stroke-width="0.5"/><path d="M1018.4 283.5L1030.8 291.5L1028.0 302.3L1015.8 294.2Z" fill="#aca8b1" stroke="#aca8b1" stroke-width="0.5"/><path d="M1009.8 333.3L1018.7 341.2L1009.3 349.4L1001.2 342.0Z" fill="#c0bcc5" stroke="#c0bcc5" stroke-width="0.5"/><path d="M1017.3 323.5L1026.9 331.8L1018.7 341.2L1009.8 333.3Z" fill="#bdb9c2" stroke="#bdb9c2" stroke-width="0.5"/><path d="M705.9 204.5L759.8 209.0L761.7 209.3L708.3 204.9Z" fill="#6b696e" stroke="#6b696e" stroke-width="0.5"/><path d="M950.6 346.6L958.5 350.4L951.0 354.0L944.3 350.7Z" fill="#b2aeb7" stroke="#b2aeb7" stroke-width="0.5"/><path d="M957.0 230.2L971.8 233.9L973.9 239.1L958.2 235.3Z" fill="#918e95" stroke="#918e95" stroke-width="0.5"/><path d="M1001.2 342.0L1009.3 349.4L999.1 356.2L991.9 349.5Z" fill="#c1bdc6" stroke="#c1bdc6" stroke-width="0.5"/><path d="M859.5 337.6L913.5 343.0L913.1 346.5L858.5 341.0Z" fill="#9f9ca4" stroke="#9f9ca4" stroke-width="0.5"/><path d="M1023.4 313.1L1033.5 321.7L1026.9 331.8L1017.3 323.5Z" fill="#b7b3bc" stroke="#b7b3bc" stroke-width="0.5"/><path d="M1005.0 257.2L1018.5 264.1L1019.3 273.3L1005.6 266.3Z" fill="#9e9ba3" stroke="#9e9ba3" stroke-width="0.5"/><path d="M913.5 343.0L921.6 344.1L919.7 347.4L913.1 346.5Z" fill="#9f9ca4" stroke="#9f9ca4" stroke-width="0.5"/><path d="M988.8 243.9L1002.9 249.6L1005.0 257.2L990.4 251.3Z" fill="#98959c" stroke="#98959c" stroke-width="0.5"/><path d="M974.6 349.9L982.0 355.4L972.1 359.5L965.7 354.7Z" fill="#bbb8c1" stroke="#bbb8c1" stroke-width="0.5"/><path d="M921.6 344.1L929.5 345.8L926.2 348.7L919.7 347.4Z" fill="#a09da5" stroke="#a09da5" stroke-width="0.5"/><path d="M815.8 213.9L870.6 218.5L871.1 221.1L816.8 216.5Z" fill="#838187" stroke="#838187" stroke-width="0.5"/><path d="M751.6 330.3L804.7 335.6L803.2 336.6L749.6 331.3Z" fill="#89868d" stroke="#89868d" stroke-width="0.5"/><path d="M1019.3 273.3L1031.7 281.2L1030.8 291.5L1018.4 283.5Z" fill="#a29fa6" stroke="#a29fa6" stroke-width="0.5"/><path d="M991.9 349.5L999.1 356.2L988.3 361.3L982.0 355.4Z" fill="#bfbbc5" stroke="#bfbbc5" stroke-width="0.5"/><path d="M958.5 350.4L965.7 354.7L957.0 357.6L951.0 354.0Z" fill="#b2afb8" stroke="#b2afb8" stroke-width="0.5"/><path d="M929.5 345.8L937.1 348.0L932.5 350.6L926.2 348.7Z" fill="#a19ea6" stroke="#a19ea6" stroke-width="0.5"/><path d="M1028.0 302.3L1038.5 311.0L1033.5 321.7L1023.4 313.1Z" fill="#afacb4" stroke="#afacb4" stroke-width="0.5"/><path d="M971.8 233.9L986.0 238.4L988.8 243.9L973.9 239.1Z" fill="#8e8b92" stroke="#8e8b92" stroke-width="0.5"/><path d="M870.6 218.5L926.3 223.1L926.1 225.7L871.1 221.1Z" fill="#838187" stroke="#838187" stroke-width="0.5"/><path d="M937.1 348.0L944.3 350.7L938.4 352.8L932.5 350.6Z" fill="#a29fa7" stroke="#a29fa7" stroke-width="0.5"/><path d="M926.3 223.1L940.8 224.8L941.7 227.5L926.1 225.7Z" fill="#838187" stroke="#838187" stroke-width="0.5"/><path d="M695.9 334.9L748.7 340.3L746.6 338.9L693.1 333.4Z" fill="#723933" stroke="#723933" stroke-width=".5"/><path d="M695.9 334.9L748.7 340.3M693.1 333.4L746.6 338.9M695.9 334.9L693.1 333.4" class="e"/><path d="M695.9 334.9h0M693.1 333.4h0" class="d"/><path d="M759.8 209.0L814.5 213.6L815.8 213.9L761.7 209.3Z" fill="#6b696e" stroke="#6b696e" stroke-width="0.5"/><path d="M940.8 224.8L955.0 227.3L957.0 230.2L941.7 227.5Z" fill="#828086" stroke="#828086" stroke-width="0.5"/><path d="M982.0 355.4L988.3 361.3L977.4 364.7L972.1 359.5Z" fill="#bbb7c0" stroke="#bbb7c0" stroke-width="0.5"/><path d="M1030.8 291.5L1041.5 300.3L1038.5 311.0L1028.0 302.3Z" fill="#a6a2aa" stroke="#a6a2aa" stroke-width="0.5"/><path d="M965.7 354.7L972.1 359.5L962.3 361.7L957.0 357.6Z" fill="#b3b0b8" stroke="#b3b0b8" stroke-width="0.5"/><path d="M944.3 350.7L951.0 354.0L943.8 355.5L938.4 352.8Z" fill="#a4a1a9" stroke="#a4a1a9" stroke-width="0.5"/><path d="M1018.7 341.2L1026.0 349.7L1015.9 357.3L1009.3 349.4Z" fill="#bcb8c1" stroke="#bcb8c1" stroke-width="0.5"/><path d="M804.7 335.6L858.5 341.0L857.7 342.1L803.2 336.6Z" fill="#89868d" stroke="#89868d" stroke-width="0.5"/><path d="M1002.9 249.6L1015.9 256.1L1018.5 264.1L1005.0 257.2Z" fill="#949198" stroke="#949198" stroke-width="0.5"/><path d="M1009.3 349.4L1015.9 357.3L1004.9 363.3L999.1 356.2Z" fill="#bebac3" stroke="#bebac3" stroke-width="0.5"/><path d="M1026.9 331.8L1034.7 340.8L1026.0 349.7L1018.7 341.2Z" fill="#b8b4bd" stroke="#b8b4bd" stroke-width="0.5"/><path d="M1018.5 264.1L1030.6 271.7L1031.7 281.2L1019.3 273.3Z" fill="#99969e" stroke="#99969e" stroke-width="0.5"/><path d="M955.0 227.3L968.8 230.7L971.8 233.9L957.0 230.2Z" fill="#817e84" stroke="#817e84" stroke-width="0.5"/><path d="M986.0 238.4L999.3 243.7L1002.9 249.6L988.8 243.9Z" fill="#8b888f" stroke="#8b888f" stroke-width="0.5"/><path d="M999.1 356.2L1004.9 363.3L993.4 367.7L988.3 361.3Z" fill="#bdbac3" stroke="#bdbac3" stroke-width="0.5"/><path d="M1033.5 321.7L1041.9 331.0L1034.7 340.8L1026.9 331.8Z" fill="#b1aeb6" stroke="#b1aeb6" stroke-width="0.5"/><path d="M858.5 341.0L913.1 346.5L912.8 347.6L857.7 342.1Z" fill="#89868d" stroke="#89868d" stroke-width="0.5"/><path d="M951.0 354.0L957.0 357.6L948.8 358.5L943.8 355.5Z" fill="#a6a3ab" stroke="#a6a3ab" stroke-width="0.5"/><path d="M703.3 197.4L758.0 201.9L760.4 199.6L706.4 195.2Z" fill="#8e4740" stroke="#8e4740" stroke-width=".5"/><path d="M703.3 197.4L758.0 201.9M706.4 195.2L760.4 199.6M703.3 197.4L706.4 195.2" class="e"/><path d="M703.3 197.4h0M706.4 195.2h0" class="d"/><path d="M913.1 346.5L919.7 347.4L918.2 348.4L912.8 347.6Z" fill="#89878d" stroke="#89878d" stroke-width="0.5"/><path d="M919.7 347.4L926.2 348.7L923.4 349.5L918.2 348.4Z" fill="#8a888f" stroke="#8a888f" stroke-width="0.5"/><path d="M814.5 213.6L869.9 218.2L870.6 218.5L815.8 213.9Z" fill="#6b696e" stroke="#6b696e" stroke-width="0.5"/><path d="M972.1 359.5L977.4 364.7L966.8 366.0L962.3 361.7Z" fill="#b4b1b9" stroke="#b4b1b9" stroke-width="0.5"/><path d="M1031.7 281.2L1042.4 289.8L1041.5 300.3L1030.8 291.5Z" fill="#9c99a1" stroke="#9c99a1" stroke-width="0.5"/><path d="M926.2 348.7L932.5 350.6L928.4 350.9L923.4 349.5Z" fill="#8c8a91" stroke="#8c8a91" stroke-width="0.5"/><path d="M988.3 361.3L993.4 367.7L981.7 370.2L977.4 364.7Z" fill="#bbb7c0" stroke="#bbb7c0" stroke-width="0.5"/><path d="M748.7 340.3L802.3 345.7L800.9 344.3L746.6 338.9Z" fill="#723933" stroke="#723933" stroke-width=".5"/><path d="M775.5 343.0L773.8 341.6" stroke="#9a4030" stroke-width="1.6" stroke-opacity=".4"/><path d="M748.7 340.3L802.3 345.7M746.6 338.9L800.9 344.3" class="e"/><path d="M968.8 230.7L982.0 234.8L986.0 238.4L971.8 233.9Z" fill="#7e7b82" stroke="#7e7b82" stroke-width="0.5"/><path d="M1038.5 311.0L1047.2 320.5L1041.9 331.0L1033.5 321.7Z" fill="#a9a5ae" stroke="#a9a5ae" stroke-width="0.5"/><path d="M957.0 357.6L962.3 361.7L953.1 361.8L948.8 358.5Z" fill="#a8a5ad" stroke="#a8a5ad" stroke-width="0.5"/><path d="M932.5 350.6L938.4 352.8L933.1 352.7L928.4 350.9Z" fill="#8f8c93" stroke="#8f8c93" stroke-width="0.5"/><path d="M869.9 218.2L926.2 222.9L926.3 223.1L870.6 218.5Z" fill="#6b696e" stroke="#6b696e" stroke-width="0.5"/><path d="M926.2 222.9L939.5 224.5L940.8 224.8L926.3 223.1Z" fill="#6b696e" stroke="#6b696e" stroke-width="0.5"/><path d="M999.3 243.7L1011.6 249.8L1015.9 256.1L1002.9 249.6Z" fill="#87848b" stroke="#87848b" stroke-width="0.5"/><path d="M1015.9 256.1L1027.5 263.4L1030.6 271.7L1018.5 264.1Z" fill="#8f8c93" stroke="#8f8c93" stroke-width="0.5"/><path d="M938.4 352.8L943.8 355.5L937.4 354.8L933.1 352.7Z" fill="#928f97" stroke="#928f97" stroke-width="0.5"/><path d="M1015.9 357.3L1020.8 365.5L1009.3 370.8L1004.9 363.3Z" fill="#bbb7c0" stroke="#bbb7c0" stroke-width="0.5"/><path d="M1026.0 349.7L1031.5 358.6L1020.8 365.5L1015.9 357.3Z" fill="#b8b4bd" stroke="#b8b4bd" stroke-width="0.5"/><path d="M939.5 224.5L952.4 226.7L955.0 227.3L940.8 224.8Z" fill="#69676c" stroke="#69676c" stroke-width="0.5"/><path d="M693.1 333.4L746.6 338.9L744.9 334.7L690.7 329.2Z" fill="#85433c" stroke="#85433c" stroke-width=".5"/><path d="M692.8 332.9L746.4 338.3" stroke="#7a2a1e" stroke-width="2.2" stroke-opacity=".45"/><path d="M692.2 331.7L745.9 337.2" stroke="#fff" stroke-width="2" stroke-opacity=".08"/><path d="M693.1 333.4L746.6 338.9M690.7 329.2L744.9 334.7M693.1 333.4L690.7 329.2" class="e"/><path d="M693.1 333.4h0M690.7 329.2h0" class="d"/><path d="M977.4 364.7L981.7 370.2L970.3 370.7L966.8 366.0Z" fill="#b5b2ba" stroke="#b5b2ba" stroke-width="0.5"/><path d="M1004.9 363.3L1009.3 370.8L997.1 374.3L993.4 367.7Z" fill="#bcb8c1" stroke="#bcb8c1" stroke-width="0.5"/><path d="M1041.5 300.3L1050.4 309.7L1047.2 320.5L1038.5 311.0Z" fill="#9e9ba3" stroke="#9e9ba3" stroke-width="0.5"/><path d="M962.3 361.7L966.8 366.0L956.7 365.4L953.1 361.8Z" fill="#aba7b0" stroke="#aba7b0" stroke-width="0.5"/><path d="M1034.7 340.8L1040.7 350.2L1031.5 358.6L1026.0 349.7Z" fill="#b2afb7" stroke="#b2afb7" stroke-width="0.5"/><path d="M758.0 201.9L813.4 206.5L815.2 204.2L760.4 199.6Z" fill="#8e4740" stroke="#8e4740" stroke-width=".5"/><path d="M785.7 204.2L787.8 201.9" stroke="#9a4030" stroke-width="1.6" stroke-opacity=".4"/><path d="M758.0 201.9L813.4 206.5M760.4 199.6L815.2 204.2" class="e"/><path d="M982.0 234.8L994.4 239.8L999.3 243.7L986.0 238.4Z" fill="#7a787e" stroke="#7a787e" stroke-width="0.5"/><path d="M1030.6 271.7L1041.1 280.1L1042.4 289.8L1031.7 281.2Z" fill="#939098" stroke="#939098" stroke-width="0.5"/><path d="M802.3 345.7L856.7 351.3L856.0 349.9L800.9 344.3Z" fill="#723933" stroke="#723933" stroke-width=".5"/><path d="M802.3 345.7L856.7 351.3M800.9 344.3L856.0 349.9" class="e"/><path d="M943.8 355.5L948.8 358.5L941.3 357.2L937.4 354.8Z" fill="#96939a" stroke="#96939a" stroke-width="0.5"/><path d="M993.4 367.7L997.1 374.3L984.8 375.9L981.7 370.2Z" fill="#bab6c0" stroke="#bab6c0" stroke-width="0.5"/><path d="M1041.9 331.0L1048.3 340.7L1040.7 350.2L1034.7 340.8Z" fill="#aba7b0" stroke="#aba7b0" stroke-width="0.5"/><path d="M856.7 351.3L911.8 356.9L911.9 355.6L856.0 349.9Z" fill="#723933" stroke="#723933" stroke-width=".5"/><path d="M884.3 354.1L883.9 352.8" stroke="#9a4030" stroke-width="1.6" stroke-opacity=".4"/><path d="M856.7 351.3L911.8 356.9M856.0 349.9L911.9 355.6M911.8 356.9L911.9 355.6" class="e"/><path d="M911.8 356.9h0M911.9 355.6h0" class="d"/><path d="M948.8 358.5L953.1 361.8L944.7 359.9L941.3 357.2Z" fill="#9a979e" stroke="#9a979e" stroke-width="0.5"/><path d="M700.1 202.3L755.4 207.0L758.0 201.9L703.3 197.4Z" fill="#a15149" stroke="#a15149" stroke-width=".5"/><path d="M700.1 202.3L755.4 207.0L757.0 203.8L702.1 199.2Z" fill="#bbb6a7"/><path d="M702.1 199.2L757.0 203.8" stroke="#7a4a3a" stroke-width=".8" stroke-opacity=".6"/><path d="M700.1 202.3L755.4 207.0M703.3 197.4L758.0 201.9M700.1 202.3L703.3 197.4" class="e"/><path d="M700.1 202.3h0M703.3 197.4h0" class="d"/><path d="M911.8 356.9L916.5 357.5L915.1 356.0L911.9 355.6Z" fill="#723933" stroke="#723933" stroke-width=".5"/><path d="M911.8 356.9L916.5 357.5M911.9 355.6L915.1 356.0M911.8 356.9L911.9 355.6M916.5 357.5L915.1 356.0" class="e"/><path d="M911.8 356.9h0M911.9 355.6h0M916.5 357.5h0M915.1 356.0h0" class="d"/><path d="M916.5 357.5L921.0 358.5L918.3 356.7L915.1 356.0Z" fill="#703833" stroke="#703833" stroke-width=".5"/><path d="M916.5 357.5L921.0 358.5M915.1 356.0L918.3 356.7M916.5 357.5L915.1 356.0M921.0 358.5L918.3 356.7" class="e"/><path d="M916.5 357.5h0M915.1 356.0h0M921.0 358.5h0M918.3 356.7h0" class="d"/><path d="M966.8 366.0L970.3 370.7L959.5 369.2L956.7 365.4Z" fill="#adaab2" stroke="#adaab2" stroke-width="0.5"/><path d="M1042.4 289.8L1051.3 299.1L1050.4 309.7L1041.5 300.3Z" fill="#96939a" stroke="#96939a" stroke-width="0.5"/><path d="M981.7 370.2L984.8 375.9L972.9 375.5L970.3 370.7Z" fill="#b6b3bc" stroke="#b6b3bc" stroke-width="0.5"/><path d="M921.0 358.5L925.4 359.8L921.4 357.6L918.3 356.7Z" fill="#6e3732" stroke="#6e3732" stroke-width=".5"/><path d="M921.0 358.5L925.4 359.8M918.3 356.7L921.4 357.6M921.0 358.5L918.3 356.7M925.4 359.8L921.4 357.6" class="e"/><path d="M921.0 358.5h0M918.3 356.7h0M925.4 359.8h0M921.4 357.6h0" class="d"/><path d="M967.5 220.4L980.0 224.3L985.8 225.9L971.9 221.6Z" fill="#7a3d37" stroke="#7a3d37" stroke-width=".5"/><path d="M968.1 220.6L980.7 224.5" stroke="#7a2a1e" stroke-width="2.2" stroke-opacity=".45"/><path d="M969.3 220.9L982.3 224.9" stroke="#fff" stroke-width="2" stroke-opacity=".08"/><path d="M967.5 220.4L980.0 224.3M971.9 221.6L985.8 225.9M967.5 220.4L971.9 221.6M980.0 224.3L985.8 225.9" class="e"/><path d="M967.5 220.4h0M971.9 221.6h0M980.0 224.3h0M985.8 225.9h0" class="d"/><path d="M813.4 206.5L869.7 211.2L870.8 208.8L815.2 204.2Z" fill="#8e4840" stroke="#8e4840" stroke-width=".5"/><path d="M813.4 206.5L869.7 211.2M815.2 204.2L870.8 208.8" class="e"/><path d="M1011.6 249.8L1022.6 256.6L1027.5 263.4L1015.9 256.1Z" fill="#817f85" stroke="#817f85" stroke-width="0.5"/><path d="M925.4 359.8L929.5 361.4L924.3 358.8L921.4 357.6Z" fill="#6a3530" stroke="#6a3530" stroke-width=".5"/><path d="M925.4 359.8L929.5 361.4M921.4 357.6L924.3 358.8M925.4 359.8L921.4 357.6M929.5 361.4L924.3 358.8" class="e"/><path d="M925.4 359.8h0M921.4 357.6h0M929.5 361.4h0M924.3 358.8h0" class="d"/><path d="M1047.2 320.5L1053.9 330.5L1048.3 340.7L1041.9 331.0Z" fill="#a29ea6" stroke="#a29ea6" stroke-width="0.5"/><path d="M994.4 239.8L1005.7 245.4L1011.6 249.8L999.3 243.7Z" fill="#757379" stroke="#757379" stroke-width="0.5"/><path d="M746.6 338.9L800.9 344.3L799.8 340.2L744.9 334.7Z" fill="#85433c" stroke="#85433c" stroke-width=".5"/><path d="M746.4 338.3L800.8 343.9" stroke="#7a2a1e" stroke-width="2.2" stroke-opacity=".45"/><path d="M745.9 337.2L800.5 342.7" stroke="#fff" stroke-width="2" stroke-opacity=".08"/><path d="M773.8 341.6L772.3 337.4" stroke="#9a4030" stroke-width="1.6" stroke-opacity=".4"/><path d="M746.6 338.9L800.9 344.3M744.9 334.7L799.8 340.2" class="e"/><path d="M953.1 361.8L956.7 365.4L947.6 362.7L944.7 359.9Z" fill="#9e9ba3" stroke="#9e9ba3" stroke-width="0.5"/><path d="M1027.5 263.4L1037.6 271.3L1041.1 280.1L1030.6 271.7Z" fill="#88868c" stroke="#88868c" stroke-width="0.5"/><path d="M1020.8 365.5L1024.0 374.1L1012.0 378.6L1009.3 370.8Z" fill="#b7b4bd" stroke="#b7b4bd" stroke-width="0.5"/><path d="M1009.3 370.8L1012.0 378.6L999.4 381.2L997.1 374.3Z" fill="#bab6bf" stroke="#bab6bf" stroke-width="0.5"/><path d="M869.7 211.2L926.9 215.9L927.3 213.4L870.8 208.8Z" fill="#8e4840" stroke="#8e4840" stroke-width=".5"/><path d="M898.3 213.5L899.0 211.1" stroke="#9a4030" stroke-width="1.6" stroke-opacity=".4"/><path d="M869.7 211.2L926.9 215.9M870.8 208.8L927.3 213.4M926.9 215.9L927.3 213.4" class="e"/><path d="M926.9 215.9h0M927.3 213.4h0" class="d"/><path d="M1031.5 358.6L1035.0 367.8L1024.0 374.1L1020.8 365.5Z" fill="#b3afb8" stroke="#b3afb8" stroke-width="0.5"/><path d="M997.1 374.3L999.4 381.2L986.7 381.8L984.8 375.9Z" fill="#bab6bf" stroke="#bab6bf" stroke-width="0.5"/><path d="M926.9 215.9L938.9 217.3L941.0 215.0L927.3 213.4Z" fill="#8e4840" stroke="#8e4840" stroke-width=".5"/><path d="M926.9 215.9L938.9 217.3M927.3 213.4L941.0 215.0M926.9 215.9L927.3 213.4M938.9 217.3L941.0 215.0" class="e"/><path d="M926.9 215.9h0M927.3 213.4h0M938.9 217.3h0M941.0 215.0h0" class="d"/><path d="M970.3 370.7L972.9 375.5L961.6 373.1L959.5 369.2Z" fill="#b0acb5" stroke="#b0acb5" stroke-width="0.5"/><path d="M937.4 354.8L941.3 357.2L935.0 353.9L931.9 352.0Z" fill="#7f7d83" stroke="#7f7d83" stroke-width="0.5"/><path d="M690.7 329.2L744.9 334.7L743.5 327.9L688.7 322.4Z" fill="#934a43" stroke="#934a43" stroke-width=".5"/><path d="M690.7 329.2L744.9 334.7M688.7 322.4L743.5 327.9M690.7 329.2L688.7 322.4" class="e"/><path d="M690.7 329.2h0M688.7 322.4h0" class="d"/><path d="M980.0 224.3L991.7 228.9L998.8 231.0L985.8 225.9Z" fill="#7e4039" stroke="#7e4039" stroke-width=".5"/><path d="M980.7 224.5L992.5 229.1" stroke="#7a2a1e" stroke-width="2.2" stroke-opacity=".45"/><path d="M982.3 224.9L994.5 229.7" stroke="#fff" stroke-width="2" stroke-opacity=".08"/><path d="M980.0 224.3L991.7 228.9M985.8 225.9L998.8 231.0M980.0 224.3L985.8 225.9M991.7 228.9L998.8 231.0" class="e"/><path d="M980.0 224.3h0M985.8 225.9h0M991.7 228.9h0M998.8 231.0h0" class="d"/><path d="M938.9 217.3L950.8 219.3L954.5 217.3L941.0 215.0Z" fill="#8f4841" stroke="#8f4841" stroke-width=".5"/><path d="M938.9 217.3L950.8 219.3M941.0 215.0L954.5 217.3M938.9 217.3L941.0 215.0M950.8 219.3L954.5 217.3" class="e"/><path d="M938.9 217.3h0M941.0 215.0h0M950.8 219.3h0M954.5 217.3h0" class="d"/><path d="M956.7 365.4L959.5 369.2L949.8 365.7L947.6 362.7Z" fill="#a39fa7" stroke="#a39fa7" stroke-width="0.5"/><path d="M1040.7 350.2L1044.7 360.0L1035.0 367.8L1031.5 358.6Z" fill="#aca9b1" stroke="#aca9b1" stroke-width="0.5"/><path d="M1050.4 309.7L1057.2 319.7L1053.9 330.5L1047.2 320.5Z" fill="#96949b" stroke="#96949b" stroke-width="0.5"/><path d="M1041.1 280.1L1049.8 289.0L1051.3 299.1L1042.4 289.8Z" fill="#8c8a91" stroke="#8c8a91" stroke-width="0.5"/><path d="M984.8 375.9L986.7 381.8L974.3 380.5L972.9 375.5Z" fill="#b7b4bd" stroke="#b7b4bd" stroke-width="0.5"/><path d="M755.4 207.0L811.5 211.6L813.4 206.5L758.0 201.9Z" fill="#a15149" stroke="#a15149" stroke-width=".5"/><path d="M755.4 207.0L811.5 211.6L812.7 208.4L757.0 203.8Z" fill="#bbb6a7"/><path d="M757.0 203.8L812.7 208.4" stroke="#7a4a3a" stroke-width=".8" stroke-opacity=".6"/><path d="M755.4 207.0L811.5 211.6M758.0 201.9L813.4 206.5" class="e"/><path d="M941.3 357.2L944.7 359.9L937.6 355.9L935.0 353.9Z" fill="#87848b" stroke="#87848b" stroke-width="0.5"/><path d="M800.9 344.3L856.0 349.9L855.6 345.8L799.8 340.2Z" fill="#85433c" stroke="#85433c" stroke-width=".5"/><path d="M800.8 343.9L855.9 349.4" stroke="#7a2a1e" stroke-width="2.2" stroke-opacity=".45"/><path d="M800.5 342.7L855.8 348.3" stroke="#fff" stroke-width="2" stroke-opacity=".08"/><path d="M800.9 344.3L856.0 349.9M799.8 340.2L855.6 345.8" class="e"/><path d="M950.8 219.3L962.3 222.1L967.5 220.4L954.5 217.3Z" fill="#904941" stroke="#904941" stroke-width=".5"/><path d="M950.8 219.3L962.3 222.1M954.5 217.3L967.5 220.4M950.8 219.3L954.5 217.3M962.3 222.1L967.5 220.4" class="e"/><path d="M950.8 219.3h0M954.5 217.3h0M962.3 222.1h0M967.5 220.4h0" class="d"/><path d="M1048.3 340.7L1052.5 350.9L1044.7 360.0L1040.7 350.2Z" fill="#a4a1a9" stroke="#a4a1a9" stroke-width="0.5"/><path d="M1005.7 245.4L1015.9 251.7L1022.6 256.6L1011.6 249.8Z" fill="#6f6c72" stroke="#6f6c72" stroke-width="0.5"/><path d="M697.0 210.0L752.8 214.7L755.4 207.0L700.1 202.3Z" fill="#af584f" stroke="#af584f" stroke-width=".5"/><path d="M700.1 202.3L755.4 207.0L753.8 211.7L698.2 207.1Z" fill="#cbc6b6"/><path d="M698.2 207.1L753.8 211.7" stroke="#7a4a3a" stroke-width=".8" stroke-opacity=".6"/><path d="M697.4 209.0L753.1 213.8" stroke="#7a2a1e" stroke-width="2.2" stroke-opacity=".45"/><path d="M698.2 206.9L753.8 211.6" stroke="#fff" stroke-width="2" stroke-opacity=".08"/><path d="M697.0 210.0L752.8 214.7M700.1 202.3L755.4 207.0M697.0 210.0L700.1 202.3" class="e"/><path d="M697.0 210.0h0M700.1 202.3h0" class="d"/><path d="M972.9 375.5L974.3 380.5L962.7 377.2L961.6 373.1Z" fill="#b3afb8" stroke="#b3afb8" stroke-width="0.5"/><path d="M944.7 359.9L947.6 362.7L939.8 358.1L937.6 355.9Z" fill="#8e8b92" stroke="#8e8b92" stroke-width="0.5"/><path d="M959.5 369.2L961.6 373.1L951.4 368.9L949.8 365.7Z" fill="#a7a4ac" stroke="#a7a4ac" stroke-width="0.5"/><path d="M1022.6 256.6L1032.1 264.1L1037.6 271.3L1027.5 263.4Z" fill="#7a787e" stroke="#7a787e" stroke-width="0.5"/><path d="M856.0 349.9L911.9 355.6L912.2 351.5L855.6 345.8Z" fill="#85433c" stroke="#85433c" stroke-width=".5"/><path d="M855.9 349.4L911.9 355.1" stroke="#7a2a1e" stroke-width="2.2" stroke-opacity=".45"/><path d="M855.8 348.3L912.0 354.0" stroke="#fff" stroke-width="2" stroke-opacity=".08"/><path d="M883.9 352.8L883.9 348.7" stroke="#9a4030" stroke-width="1.6" stroke-opacity=".4"/><path d="M856.0 349.9L911.9 355.6M855.6 345.8L912.2 351.5M911.9 355.6L912.2 351.5" class="e"/><path d="M911.9 355.6h0M912.2 351.5h0" class="d"/><path d="M911.9 355.6L915.1 356.0L914.3 351.8L912.2 351.5Z" fill="#85433c" stroke="#85433c" stroke-width=".5"/><path d="M911.9 355.1L915.0 355.5" stroke="#7a2a1e" stroke-width="2.2" stroke-opacity=".45"/><path d="M912.0 354.0L914.8 354.4" stroke="#fff" stroke-width="2" stroke-opacity=".08"/><path d="M911.9 355.6L915.1 356.0M912.2 351.5L914.3 351.8M911.9 355.6L912.2 351.5M915.1 356.0L914.3 351.8" class="e"/><path d="M911.9 355.6h0M912.2 351.5h0M915.1 356.0h0M914.3 351.8h0" class="d"/><path d="M915.1 356.0L918.3 356.7L916.4 352.3L914.3 351.8Z" fill="#84423c" stroke="#84423c" stroke-width=".5"/><path d="M915.0 355.5L918.1 356.2" stroke="#7a2a1e" stroke-width="2.2" stroke-opacity=".45"/><path d="M914.8 354.4L917.6 354.9" stroke="#fff" stroke-width="2" stroke-opacity=".08"/><path d="M915.1 356.0L918.3 356.7M914.3 351.8L916.4 352.3M915.1 356.0L914.3 351.8M918.3 356.7L916.4 352.3" class="e"/><path d="M915.1 356.0h0M914.3 351.8h0M918.3 356.7h0M916.4 352.3h0" class="d"/><path d="M1012.0 378.6L1012.9 386.4L1000.1 388.1L999.4 381.2Z" fill="#b8b4bd" stroke="#b8b4bd" stroke-width="0.5"/><path d="M999.4 381.2L1000.1 388.1L987.3 387.8L986.7 381.8Z" fill="#b9b6bf" stroke="#b9b6bf" stroke-width="0.5"/><path d="M991.7 228.9L1002.4 234.1L1010.7 236.8L998.8 231.0Z" fill="#83423b" stroke="#83423b" stroke-width=".5"/><path d="M992.5 229.1L1003.4 234.5" stroke="#7a2a1e" stroke-width="2.2" stroke-opacity=".45"/><path d="M994.5 229.7L1005.7 235.2" stroke="#fff" stroke-width="2" stroke-opacity=".08"/><path d="M991.7 228.9L1002.4 234.1M998.8 231.0L1010.7 236.8M991.7 228.9L998.8 231.0M1002.4 234.1L1010.7 236.8" class="e"/><path d="M991.7 228.9h0M998.8 231.0h0M1002.4 234.1h0M1010.7 236.8h0" class="d"/><path d="M962.3 222.1L973.2 225.5L980.0 224.3L967.5 220.4Z" fill="#924942" stroke="#924942" stroke-width=".5"/><path d="M962.3 222.1L973.2 225.5M967.5 220.4L980.0 224.3M962.3 222.1L967.5 220.4M973.2 225.5L980.0 224.3" class="e"/><path d="M962.3 222.1h0M967.5 220.4h0M973.2 225.5h0M980.0 224.3h0" class="d"/><path d="M1051.3 299.1L1058.1 308.9L1057.2 319.7L1050.4 309.7Z" fill="#8e8b92" stroke="#8e8b92" stroke-width="0.5"/><path d="M918.3 356.7L921.4 357.6L918.4 352.9L916.4 352.3Z" fill="#82413b" stroke="#82413b" stroke-width=".5"/><path d="M918.1 356.2L921.0 357.1" stroke="#7a2a1e" stroke-width="2.2" stroke-opacity=".45"/><path d="M917.6 354.9L920.2 355.7" stroke="#fff" stroke-width="2" stroke-opacity=".08"/><path d="M918.3 356.7L921.4 357.6M916.4 352.3L918.4 352.9M918.3 356.7L916.4 352.3M921.4 357.6L918.4 352.9" class="e"/><path d="M918.3 356.7h0M916.4 352.3h0M921.4 357.6h0M918.4 352.9h0" class="d"/><path d="M811.5 211.6L868.4 216.4L869.7 211.2L813.4 206.5Z" fill="#a15149" stroke="#a15149" stroke-width=".5"/><path d="M811.5 211.6L868.4 216.4L869.2 213.2L812.7 208.4Z" fill="#bbb6a7"/><path d="M812.7 208.4L869.2 213.2" stroke="#7a4a3a" stroke-width=".8" stroke-opacity=".6"/><path d="M811.5 211.6L868.4 216.4M813.4 206.5L869.7 211.2" class="e"/><path d="M1024.0 374.1L1025.2 382.8L1012.9 386.4L1012.0 378.6Z" fill="#b4b0b9" stroke="#b4b0b9" stroke-width="0.5"/><path d="M921.4 357.6L924.3 358.8L920.3 353.6L918.4 352.9Z" fill="#7f4039" stroke="#7f4039" stroke-width=".5"/><path d="M921.0 357.1L923.8 358.1" stroke="#7a2a1e" stroke-width="2.2" stroke-opacity=".45"/><path d="M920.2 355.7L922.7 356.7" stroke="#fff" stroke-width="2" stroke-opacity=".08"/><path d="M921.4 357.6L924.3 358.8M918.4 352.9L920.3 353.6M921.4 357.6L918.4 352.9M924.3 358.8L920.3 353.6" class="e"/><path d="M921.4 357.6h0M918.4 352.9h0M924.3 358.8h0M920.3 353.6h0" class="d"/><path d="M947.6 362.7L949.8 365.7L941.5 360.4L939.8 358.1Z" fill="#959299" stroke="#959299" stroke-width="0.5"/><path d="M986.7 381.8L987.3 387.8L974.7 385.4L974.3 380.5Z" fill="#b8b5be" stroke="#b8b5be" stroke-width="0.5"/><path d="M1037.6 271.3L1046.0 279.9L1049.8 289.0L1041.1 280.1Z" fill="#817e85" stroke="#817e85" stroke-width="0.5"/><path d="M744.9 334.7L799.8 340.2L799.1 333.4L743.5 327.9Z" fill="#934a43" stroke="#934a43" stroke-width=".5"/><path d="M772.3 337.4L771.3 330.6" stroke="#9a4030" stroke-width="1.6" stroke-opacity=".4"/><path d="M744.9 334.7L799.8 340.2M743.5 327.9L799.1 333.4" class="e"/><path d="M924.3 358.8L926.9 360.1L922.0 354.4L920.3 353.6Z" fill="#7b3e38" stroke="#7b3e38" stroke-width=".5"/><path d="M923.8 358.1L926.3 359.4" stroke="#7a2a1e" stroke-width="2.2" stroke-opacity=".45"/><path d="M922.7 356.7L924.9 357.8" stroke="#fff" stroke-width="2" stroke-opacity=".08"/><path d="M924.3 358.8L926.9 360.1M920.3 353.6L922.0 354.4M924.3 358.8L920.3 353.6M926.9 360.1L922.0 354.4" class="e"/><path d="M924.3 358.8h0M920.3 353.6h0M926.9 360.1h0M922.0 354.4h0" class="d"/><path d="M1053.9 330.5L1058.3 340.8L1052.5 350.9L1048.3 340.7Z" fill="#9a979e" stroke="#9a979e" stroke-width="0.5"/><path d="M961.6 373.1L962.7 377.2L952.3 372.1L951.4 368.9Z" fill="#aca8b1" stroke="#aca8b1" stroke-width="0.5"/><path d="M1035.0 367.8L1036.5 377.2L1025.2 382.8L1024.0 374.1Z" fill="#aeabb3" stroke="#aeabb3" stroke-width="0.5"/><path d="M926.9 360.1L929.3 361.5L923.5 355.4L922.0 354.4Z" fill="#763b35" stroke="#763b35" stroke-width=".5"/><path d="M926.3 359.4L928.6 360.8" stroke="#7a2a1e" stroke-width="2.2" stroke-opacity=".45"/><path d="M924.9 357.8L927.0 359.1" stroke="#fff" stroke-width="2" stroke-opacity=".08"/><path d="M926.9 360.1L929.3 361.5M922.0 354.4L923.5 355.4M926.9 360.1L922.0 354.4M929.3 361.5L923.5 355.4" class="e"/><path d="M926.9 360.1h0M922.0 354.4h0M929.3 361.5h0M923.5 355.4h0" class="d"/><path d="M974.3 380.5L974.7 385.4L963.0 381.2L962.7 377.2Z" fill="#b5b2bb" stroke="#b5b2bb" stroke-width="0.5"/><path d="M688.7 322.4L743.5 327.9L742.5 318.6L687.2 313.1Z" fill="#9f5048" stroke="#9f5048" stroke-width=".5"/><path d="M702.4 323.7L701.0 314.5" stroke="#9a4030" stroke-width="1.6" stroke-opacity=".4"/><path d="M729.8 326.5L728.7 317.2" stroke="#9a4030" stroke-width="1.6" stroke-opacity=".4"/><path d="M688.7 322.4L743.5 327.9M687.2 313.1L742.5 318.6M688.7 322.4L687.2 313.1" class="e"/><path d="M688.7 322.4h0M687.2 313.1h0" class="d"/><path d="M868.4 216.4L926.2 221.2L926.9 215.9L869.7 211.2Z" fill="#a15149" stroke="#a15149" stroke-width=".5"/><path d="M868.4 216.4L926.2 221.2L926.6 217.9L869.2 213.2Z" fill="#bbb6a8"/><path d="M869.2 213.2L926.6 217.9" stroke="#7a4a3a" stroke-width=".8" stroke-opacity=".6"/><path d="M868.4 216.4L926.2 221.2M869.7 211.2L926.9 215.9M926.2 221.2L926.9 215.9" class="e"/><path d="M926.2 221.2h0M926.9 215.9h0" class="d"/><path d="M949.8 365.7L951.4 368.9L942.7 362.8L941.5 360.4Z" fill="#9c99a0" stroke="#9c99a0" stroke-width="0.5"/><path d="M929.3 361.5L931.4 363.2L924.8 356.4L923.5 355.4Z" fill="#6f3832" stroke="#6f3832" stroke-width=".5"/><path d="M928.6 360.8L930.6 362.4" stroke="#7a2a1e" stroke-width="2.2" stroke-opacity=".45"/><path d="M927.0 359.1L928.8 360.5" stroke="#fff" stroke-width="2" stroke-opacity=".08"/><path d="M929.3 361.5L931.4 363.2M923.5 355.4L924.8 356.4M929.3 361.5L923.5 355.4M931.4 363.2L924.8 356.4" class="e"/><path d="M929.3 361.5h0M923.5 355.4h0M931.4 363.2h0M924.8 356.4h0" class="d"/><path d="M973.2 225.5L983.4 229.5L991.7 228.9L980.0 224.3Z" fill="#944a43" stroke="#944a43" stroke-width=".5"/><path d="M973.2 225.5L983.4 229.5M980.0 224.3L991.7 228.9M973.2 225.5L980.0 224.3M983.4 229.5L991.7 228.9" class="e"/><path d="M973.2 225.5h0M980.0 224.3h0M983.4 229.5h0M991.7 228.9h0" class="d"/><path d="M926.2 221.2L936.5 222.4L938.9 217.3L926.9 215.9Z" fill="#a15149" stroke="#a15149" stroke-width=".5"/><path d="M926.2 221.2L936.5 222.4L938.0 219.2L926.6 217.9Z" fill="#bbb6a8"/><path d="M926.6 217.9L938.0 219.2" stroke="#7a4a3a" stroke-width=".8" stroke-opacity=".6"/><path d="M926.2 221.2L936.5 222.4M926.9 215.9L938.9 217.3M926.2 221.2L926.9 215.9M936.5 222.4L938.9 217.3" class="e"/><path d="M926.2 221.2h0M926.9 215.9h0M936.5 222.4h0M938.9 217.3h0" class="d"/><path d="M936.5 222.4L946.6 224.2L950.8 219.3L938.9 217.3Z" fill="#a15149" stroke="#a15149" stroke-width=".5"/><path d="M936.5 222.4L946.6 224.2L949.2 221.2L938.0 219.2Z" fill="#bcb7a8"/><path d="M938.0 219.2L949.2 221.2" stroke="#7a4a3a" stroke-width=".8" stroke-opacity=".6"/><path d="M936.5 222.4L946.6 224.2M938.9 217.3L950.8 219.3M936.5 222.4L938.9 217.3M946.6 224.2L950.8 219.3" class="e"/><path d="M936.5 222.4h0M938.9 217.3h0M946.6 224.2h0M950.8 219.3h0" class="d"/><path d="M1044.7 360.0L1046.4 370.0L1036.5 377.2L1035.0 367.8Z" fill="#a6a3ab" stroke="#a6a3ab" stroke-width="0.5"/><path d="M752.8 214.7L809.4 219.5L811.5 211.6L755.4 207.0Z" fill="#af584f" stroke="#af584f" stroke-width=".5"/><path d="M755.4 207.0L811.5 211.6L810.2 216.5L753.8 211.7Z" fill="#ccc6b6"/><path d="M753.8 211.7L810.2 216.5" stroke="#7a4a3a" stroke-width=".8" stroke-opacity=".6"/><path d="M753.1 213.8L809.6 218.5" stroke="#7a2a1e" stroke-width="2.2" stroke-opacity=".45"/><path d="M753.8 211.6L810.2 216.3" stroke="#fff" stroke-width="2" stroke-opacity=".08"/><path d="M752.8 214.7L809.4 219.5M755.4 207.0L811.5 211.6" class="e"/><path d="M1049.8 289.0L1056.5 298.5L1058.1 308.9L1051.3 299.1Z" fill="#848288" stroke="#848288" stroke-width="0.5"/><path d="M1021.4 243.3L1030.6 250.4L1039.2 256.8L1029.1 249.0Z" fill="#783c36" stroke="#783c36" stroke-width=".5"/><path d="M1021.4 243.3L1030.6 250.4M1029.1 249.0L1039.2 256.8M1021.4 243.3L1029.1 249.0M1030.6 250.4L1039.2 256.8" class="e"/><path d="M1021.4 243.3h0M1029.1 249.0h0M1030.6 250.4h0M1039.2 256.8h0" class="d"/><path d="M962.7 377.2L963.0 381.2L952.4 375.2L952.3 372.1Z" fill="#b0adb5" stroke="#b0adb5" stroke-width="0.5"/><path d="M1057.2 319.7L1061.8 330.1L1058.3 340.8L1053.9 330.5Z" fill="#8e8c93" stroke="#8e8c93" stroke-width="0.5"/><path d="M1002.4 234.1L1011.9 240.0L1021.4 243.3L1010.7 236.8Z" fill="#88443d" stroke="#88443d" stroke-width=".5"/><path d="M1003.4 234.5L1013.1 240.4" stroke="#7a2a1e" stroke-width="2.2" stroke-opacity=".45"/><path d="M1005.7 235.2L1015.7 241.3" stroke="#fff" stroke-width="2" stroke-opacity=".08"/><path d="M1002.4 234.1L1011.9 240.0M1010.7 236.8L1021.4 243.3M1002.4 234.1L1010.7 236.8M1011.9 240.0L1021.4 243.3" class="e"/><path d="M1002.4 234.1h0M1010.7 236.8h0M1011.9 240.0h0M1021.4 243.3h0" class="d"/><path d="M799.8 340.2L855.6 345.8L855.5 339.0L799.1 333.4Z" fill="#934a43" stroke="#934a43" stroke-width=".5"/><path d="M799.8 340.2L855.6 345.8M799.1 333.4L855.5 339.0" class="e"/><path d="M694.0 220.0L750.2 224.8L752.8 214.7L697.0 210.0Z" fill="#ba5e54" stroke="#ba5e54" stroke-width=".5"/><path d="M708.1 221.2L710.9 211.1" stroke="#9a4030" stroke-width="1.6" stroke-opacity=".4"/><path d="M736.2 223.6L738.8 213.5" stroke="#9a4030" stroke-width="1.6" stroke-opacity=".4"/><path d="M694.0 220.0L750.2 224.8M697.0 210.0L752.8 214.7M694.0 220.0L697.0 210.0" class="e"/><path d="M694.0 220.0h0M697.0 210.0h0" class="d"/><path d="M951.4 368.9L952.3 372.1L943.3 365.3L942.7 362.8Z" fill="#a29fa7" stroke="#a29fa7" stroke-width="0.5"/><path d="M946.6 224.2L956.4 226.6L962.3 222.1L950.8 219.3Z" fill="#a25249" stroke="#a25249" stroke-width=".5"/><path d="M946.6 224.2L956.4 226.6L960.0 223.8L949.2 221.2Z" fill="#bcb7a8"/><path d="M949.2 221.2L960.0 223.8" stroke="#7a4a3a" stroke-width=".8" stroke-opacity=".6"/><path d="M946.6 224.2L956.4 226.6M950.8 219.3L962.3 222.1M946.6 224.2L950.8 219.3M956.4 226.6L962.3 222.1" class="e"/><path d="M946.6 224.2h0M950.8 219.3h0M956.4 226.6h0M962.3 222.1h0" class="d"/><path d="M939.8 358.1L941.5 360.4L934.9 353.4L933.6 351.6Z" fill="#838087" stroke="#838087" stroke-width="0.5"/><path d="M1032.1 264.1L1039.9 272.1L1046.0 279.9L1037.6 271.3Z" fill="#716f75" stroke="#716f75" stroke-width="0.5"/><path d="M1052.5 350.9L1054.5 361.3L1046.4 370.0L1044.7 360.0Z" fill="#9c99a1" stroke="#9c99a1" stroke-width="0.5"/><path d="M983.4 229.5L992.7 234.2L1002.4 234.1L991.7 228.9Z" fill="#964b44" stroke="#964b44" stroke-width=".5"/><path d="M983.4 229.5L992.7 234.2M991.7 228.9L1002.4 234.1M983.4 229.5L991.7 228.9M992.7 234.2L1002.4 234.1" class="e"/><path d="M983.4 229.5h0M991.7 228.9h0M992.7 234.2h0M1002.4 234.1h0" class="d"/><path d="M855.6 345.8L912.2 351.5L912.8 344.8L855.5 339.0Z" fill="#944a43" stroke="#944a43" stroke-width=".5"/><path d="M883.9 348.7L884.2 341.9" stroke="#9a4030" stroke-width="1.6" stroke-opacity=".4"/><path d="M855.6 345.8L912.2 351.5M855.5 339.0L912.8 344.8M912.2 351.5L912.8 344.8" class="e"/><path d="M912.2 351.5h0M912.8 344.8h0" class="d"/><path d="M941.5 360.4L942.7 362.8L935.8 355.2L934.9 353.4Z" fill="#8d8a91" stroke="#8d8a91" stroke-width="0.5"/><path d="M956.4 226.6L965.6 229.5L973.2 225.5L962.3 222.1Z" fill="#a2524a" stroke="#a2524a" stroke-width=".5"/><path d="M956.4 226.6L965.6 229.5L970.3 227.0L960.0 223.8Z" fill="#bdb8a9"/><path d="M960.0 223.8L970.3 227.0" stroke="#7a4a3a" stroke-width=".8" stroke-opacity=".6"/><path d="M956.4 226.6L965.6 229.5M962.3 222.1L973.2 225.5M956.4 226.6L962.3 222.1M965.6 229.5L973.2 225.5" class="e"/><path d="M956.4 226.6h0M962.3 222.1h0M965.6 229.5h0M973.2 225.5h0" class="d"/><path d="M912.2 351.5L914.3 351.8L914.1 344.9L912.8 344.8Z" fill="#934a43" stroke="#934a43" stroke-width=".5"/><path d="M912.2 351.5L914.3 351.8M912.8 344.8L914.1 344.9M912.2 351.5L912.8 344.8M914.3 351.8L914.1 344.9" class="e"/><path d="M912.2 351.5h0M912.8 344.8h0M914.3 351.8h0M914.1 344.9h0" class="d"/><path d="M952.3 372.1L952.4 375.2L943.4 367.7L943.3 365.3Z" fill="#a8a5ad" stroke="#a8a5ad" stroke-width="0.5"/><path d="M914.3 351.8L916.4 352.3L915.3 345.2L914.1 344.9Z" fill="#924a42" stroke="#924a42" stroke-width=".5"/><path d="M914.3 351.8L916.4 352.3M914.1 344.9L915.3 345.2M914.3 351.8L914.1 344.9M916.4 352.3L915.3 345.2" class="e"/><path d="M914.3 351.8h0M914.1 344.9h0M916.4 352.3h0M915.3 345.2h0" class="d"/><path d="M916.4 352.3L918.4 352.9L916.5 345.5L915.3 345.2Z" fill="#904941" stroke="#904941" stroke-width=".5"/><path d="M916.4 352.3L918.4 352.9M915.3 345.2L916.5 345.5M916.4 352.3L915.3 345.2M918.4 352.9L916.5 345.5" class="e"/><path d="M916.4 352.3h0M915.3 345.2h0M918.4 352.9h0M916.5 345.5h0" class="d"/><path d="M809.4 219.5L866.9 224.4L868.4 216.4L811.5 211.6Z" fill="#b05850" stroke="#b05850" stroke-width=".5"/><path d="M811.5 211.6L868.4 216.4L867.4 221.3L810.2 216.5Z" fill="#ccc7b7"/><path d="M810.2 216.5L867.4 221.3" stroke="#7a4a3a" stroke-width=".8" stroke-opacity=".6"/><path d="M809.6 218.5L867.0 223.4" stroke="#7a2a1e" stroke-width="2.2" stroke-opacity=".45"/><path d="M810.2 216.3L867.5 221.2" stroke="#fff" stroke-width="2" stroke-opacity=".08"/><path d="M809.4 219.5L866.9 224.4M811.5 211.6L868.4 216.4" class="e"/><path d="M918.4 352.9L920.3 353.6L917.6 346.0L916.5 345.5Z" fill="#8e4740" stroke="#8e4740" stroke-width=".5"/><path d="M918.4 352.9L920.3 353.6M916.5 345.5L917.6 346.0M918.4 352.9L916.5 345.5M920.3 353.6L917.6 346.0" class="e"/><path d="M918.4 352.9h0M916.5 345.5h0M920.3 353.6h0M917.6 346.0h0" class="d"/><path d="M743.5 327.9L799.1 333.4L798.7 324.1L742.5 318.6Z" fill="#9f5048" stroke="#9f5048" stroke-width=".5"/><path d="M743.5 327.9L799.1 333.4M742.5 318.6L798.7 324.1" class="e"/><path d="M687.2 313.1L742.5 318.6L742.1 307.2L686.2 301.7Z" fill="#ac574e" stroke="#ac574e" stroke-width=".5"/><path d="M686.2 301.7L742.1 307.2L742.4 314.2L686.8 308.8Z" fill="#c8c3b3"/><path d="M686.8 308.8L742.4 314.2" stroke="#7a4a3a" stroke-width=".8" stroke-opacity=".6"/><path d="M687.0 311.7L742.5 317.2" stroke="#7a2a1e" stroke-width="2.2" stroke-opacity=".45"/><path d="M686.8 308.6L742.4 314.0" stroke="#fff" stroke-width="2" stroke-opacity=".08"/><path d="M687.2 313.1L742.5 318.6M686.2 301.7L742.1 307.2M687.2 313.1L686.2 301.7" class="e"/><path d="M687.2 313.1h0M686.2 301.7h0" class="d"/><path d="M920.3 353.6L922.0 354.4L918.6 346.5L917.6 346.0Z" fill="#8a453e" stroke="#8a453e" stroke-width=".5"/><path d="M920.3 353.6L922.0 354.4M917.6 346.0L918.6 346.5M920.3 353.6L917.6 346.0M922.0 354.4L918.6 346.5" class="e"/><path d="M920.3 353.6h0M917.6 346.0h0M922.0 354.4h0M918.6 346.5h0" class="d"/><path d="M1058.1 308.9L1062.7 319.1L1061.8 330.1L1057.2 319.7Z" fill="#858389" stroke="#858389" stroke-width="0.5"/><path d="M1046.0 279.9L1052.4 288.9L1056.5 298.5L1049.8 289.0Z" fill="#77757b" stroke="#77757b" stroke-width="0.5"/><path d="M922.0 354.4L923.5 355.4L919.5 347.0L918.6 346.5Z" fill="#85433c" stroke="#85433c" stroke-width=".5"/><path d="M922.0 354.4L923.5 355.4M918.6 346.5L919.5 347.0M922.0 354.4L918.6 346.5M923.5 355.4L919.5 347.0" class="e"/><path d="M922.0 354.4h0M918.6 346.5h0M923.5 355.4h0M919.5 347.0h0" class="d"/><path d="M942.7 362.8L943.3 365.3L936.2 357.0L935.8 355.2Z" fill="#96939a" stroke="#96939a" stroke-width="0.5"/><path d="M923.5 355.4L924.8 356.4L920.3 347.6L919.5 347.0Z" fill="#7f4039" stroke="#7f4039" stroke-width=".5"/><path d="M923.5 355.4L924.8 356.4M919.5 347.0L920.3 347.6M923.5 355.4L919.5 347.0M924.8 356.4L920.3 347.6" class="e"/><path d="M923.5 355.4h0M919.5 347.0h0M924.8 356.4h0M920.3 347.6h0" class="d"/><path d="M1058.3 340.8L1060.4 351.4L1054.5 361.3L1052.5 350.9Z" fill="#918e95" stroke="#918e95" stroke-width="0.5"/><path d="M866.9 224.4L925.2 229.3L926.2 221.2L868.4 216.4Z" fill="#b05850" stroke="#b05850" stroke-width=".5"/><path d="M868.4 216.4L926.2 221.2L925.6 226.2L867.4 221.3Z" fill="#ccc7b7"/><path d="M867.4 221.3L925.6 226.2" stroke="#7a4a3a" stroke-width=".8" stroke-opacity=".6"/><path d="M867.0 223.4L925.3 228.3" stroke="#7a2a1e" stroke-width="2.2" stroke-opacity=".45"/><path d="M867.5 221.2L925.6 226.1" stroke="#fff" stroke-width="2" stroke-opacity=".08"/><path d="M866.9 224.4L925.2 229.3M868.4 216.4L926.2 221.2M925.2 229.3L926.2 221.2" class="e"/><path d="M925.2 229.3h0M926.2 221.2h0" class="d"/><path d="M965.6 229.5L974.3 232.9L983.4 229.5L973.2 225.5Z" fill="#a3524a" stroke="#a3524a" stroke-width=".5"/><path d="M965.6 229.5L974.3 232.9L979.9 230.8L970.3 227.0Z" fill="#beb9aa"/><path d="M970.3 227.0L979.9 230.8" stroke="#7a4a3a" stroke-width=".8" stroke-opacity=".6"/><path d="M965.6 229.5L974.3 232.9M973.2 225.5L983.4 229.5M965.6 229.5L973.2 225.5M974.3 232.9L983.4 229.5" class="e"/><path d="M965.6 229.5h0M973.2 225.5h0M974.3 232.9h0M983.4 229.5h0" class="d"/><path d="M924.8 356.4L925.9 357.6L920.9 348.3L920.3 347.6Z" fill="#783c36" stroke="#783c36" stroke-width=".5"/><path d="M924.8 356.4L925.9 357.6M920.3 347.6L920.9 348.3M924.8 356.4L920.3 347.6M925.9 357.6L920.9 348.3" class="e"/><path d="M924.8 356.4h0M920.3 347.6h0M925.9 357.6h0M920.9 348.3h0" class="d"/><path d="M691.3 232.0L747.8 237.0L750.2 224.8L694.0 220.0Z" fill="#c26258" stroke="#c26258" stroke-width=".5"/><path d="M691.3 232.0L747.8 237.0M694.0 220.0L750.2 224.8M691.3 232.0L694.0 220.0" class="e"/><path d="M691.3 232.0h0M694.0 220.0h0" class="d"/><path d="M1011.9 240.0L1020.1 246.4L1030.6 250.4L1021.4 243.3Z" fill="#8d4740" stroke="#8d4740" stroke-width=".5"/><path d="M1013.1 240.4L1021.4 246.8" stroke="#7a2a1e" stroke-width="2.2" stroke-opacity=".45"/><path d="M1015.7 241.3L1024.3 248.0" stroke="#fff" stroke-width="2" stroke-opacity=".08"/><path d="M1011.9 240.0L1020.1 246.4M1021.4 243.3L1030.6 250.4M1011.9 240.0L1021.4 243.3M1020.1 246.4L1030.6 250.4" class="e"/><path d="M1011.9 240.0h0M1021.4 243.3h0M1020.1 246.4h0M1030.6 250.4h0" class="d"/><path d="M925.2 229.3L933.7 230.3L936.5 222.4L926.2 221.2Z" fill="#b05850" stroke="#b05850" stroke-width=".5"/><path d="M926.2 221.2L936.5 222.4L934.8 227.3L925.6 226.2Z" fill="#ccc7b7"/><path d="M925.6 226.2L934.8 227.3" stroke="#7a4a3a" stroke-width=".8" stroke-opacity=".6"/><path d="M925.3 228.3L934.0 229.3" stroke="#7a2a1e" stroke-width="2.2" stroke-opacity=".45"/><path d="M925.6 226.1L934.8 227.1" stroke="#fff" stroke-width="2" stroke-opacity=".08"/><path d="M925.2 229.3L933.7 230.3M926.2 221.2L936.5 222.4M925.2 229.3L926.2 221.2M933.7 230.3L936.5 222.4" class="e"/><path d="M925.2 229.3h0M926.2 221.2h0M933.7 230.3h0M936.5 222.4h0" class="d"/><path d="M750.2 224.8L807.3 229.7L809.4 219.5L752.8 214.7Z" fill="#ba5e54" stroke="#ba5e54" stroke-width=".5"/><path d="M750.2 224.8L807.3 229.7M752.8 214.7L809.4 219.5" class="e"/><path d="M943.3 365.3L943.4 367.7L936.3 358.8L936.2 357.0Z" fill="#9e9ba3" stroke="#9e9ba3" stroke-width="0.5"/><path d="M925.9 357.6L926.8 358.7L921.4 349.0L920.9 348.3Z" fill="#6e3732" stroke="#6e3732" stroke-width=".5"/><path d="M925.9 357.6L926.8 358.7M920.9 348.3L921.4 349.0M925.9 357.6L920.9 348.3M926.8 358.7L921.4 349.0" class="e"/><path d="M925.9 357.6h0M920.9 348.3h0M926.8 358.7h0M921.4 349.0h0" class="d"/><path d="M933.7 230.3L942.0 231.8L946.6 224.2L936.5 222.4Z" fill="#b05850" stroke="#b05850" stroke-width=".5"/><path d="M936.5 222.4L946.6 224.2L943.7 228.9L934.8 227.3Z" fill="#ccc7b7"/><path d="M934.8 227.3L943.7 228.9" stroke="#7a4a3a" stroke-width=".8" stroke-opacity=".6"/><path d="M934.0 229.3L942.5 230.9" stroke="#7a2a1e" stroke-width="2.2" stroke-opacity=".45"/><path d="M934.8 227.1L943.8 228.7" stroke="#fff" stroke-width="2" stroke-opacity=".08"/><path d="M933.7 230.3L942.0 231.8M936.5 222.4L946.6 224.2M933.7 230.3L936.5 222.4M942.0 231.8L946.6 224.2" class="e"/><path d="M933.7 230.3h0M936.5 222.4h0M942.0 231.8h0M946.6 224.2h0" class="d"/><path d="M1030.6 250.4L1038.2 258.1L1047.6 265.2L1039.2 256.8Z" fill="#82413b" stroke="#82413b" stroke-width=".5"/><path d="M1030.6 250.4L1038.2 258.1M1039.2 256.8L1047.6 265.2M1030.6 250.4L1039.2 256.8M1038.2 258.1L1047.6 265.2" class="e"/><path d="M1030.6 250.4h0M1039.2 256.8h0M1038.2 258.1h0M1047.6 265.2h0" class="d"/><path d="M1000.1 388.1L998.8 410.3L985.6 409.4L987.3 387.8Z" fill="#b9b5be" stroke="#b9b5be" stroke-width="0.5"/><path d="M992.7 234.2L1001.0 239.3L1011.9 240.0L1002.4 234.1Z" fill="#984d45" stroke="#984d45" stroke-width=".5"/><path d="M992.7 234.2L1001.0 239.3M1002.4 234.1L1011.9 240.0M992.7 234.2L1002.4 234.1M1001.0 239.3L1011.9 240.0" class="e"/><path d="M992.7 234.2h0M1002.4 234.1h0M1001.0 239.3h0M1011.9 240.0h0" class="d"/><path d="M987.3 387.8L985.6 409.4L972.8 406.5L974.7 385.4Z" fill="#bab6bf" stroke="#bab6bf" stroke-width="0.5"/><path d="M1012.9 386.4L1011.9 409.2L998.8 410.3L1000.1 388.1Z" fill="#b6b3bc" stroke="#b6b3bc" stroke-width="0.5"/><path d="M934.9 353.4L935.8 355.2L931.0 346.2L930.3 344.9Z" fill="#79777d" stroke="#79777d" stroke-width="0.5"/><path d="M799.1 333.4L855.5 339.0L855.8 329.7L798.7 324.1Z" fill="#9f5048" stroke="#9f5048" stroke-width=".5"/><path d="M813.2 334.8L813.0 325.5" stroke="#9a4030" stroke-width="1.6" stroke-opacity=".4"/><path d="M841.4 337.6L841.5 328.3" stroke="#9a4030" stroke-width="1.6" stroke-opacity=".4"/><path d="M799.1 333.4L855.5 339.0M798.7 324.1L855.8 329.7" class="e"/><path d="M942.0 231.8L950.0 233.7L956.4 226.6L946.6 224.2Z" fill="#af584f" stroke="#af584f" stroke-width=".5"/><path d="M946.6 224.2L956.4 226.6L952.4 231.0L943.7 228.9Z" fill="#ccc7b7"/><path d="M943.7 228.9L952.4 231.0" stroke="#7a4a3a" stroke-width=".8" stroke-opacity=".6"/><path d="M942.5 230.9L950.8 232.9" stroke="#7a2a1e" stroke-width="2.2" stroke-opacity=".45"/><path d="M943.8 228.7L952.5 230.9" stroke="#fff" stroke-width="2" stroke-opacity=".08"/><path d="M942.0 231.8L950.0 233.7M946.6 224.2L956.4 226.6M942.0 231.8L946.6 224.2M950.0 233.7L956.4 226.6" class="e"/><path d="M942.0 231.8h0M946.6 224.2h0M950.0 233.7h0M956.4 226.6h0" class="d"/><path d="M974.7 385.4L972.8 406.5L960.7 401.7L963.0 381.2Z" fill="#b8b4bd" stroke="#b8b4bd" stroke-width="0.5"/><path d="M686.2 301.7L742.1 307.2L742.2 294.1L685.9 288.7Z" fill="#b75c53" stroke="#b75c53" stroke-width=".5"/><path d="M686.2 301.7L742.1 307.2L742.2 299.0L686.1 293.6Z" fill="#d5cfbf"/><path d="M686.1 293.6L742.2 299.0" stroke="#7a4a3a" stroke-width=".8" stroke-opacity=".6"/><path d="M686.2 301.7L742.1 307.2M685.9 288.7L742.2 294.1M686.2 301.7L685.9 288.7" class="e"/><path d="M686.2 301.7h0M685.9 288.7h0" class="d"/><path d="M1056.5 298.5L1061.0 308.4L1062.7 319.1L1058.1 308.9Z" fill="#7a787e" stroke="#7a787e" stroke-width="0.5"/><path d="M1025.2 382.8L1024.5 406.0L1011.9 409.2L1012.9 386.4Z" fill="#b1aeb7" stroke="#b1aeb7" stroke-width="0.5"/><path d="M935.8 355.2L936.2 357.0L931.3 347.6L931.0 346.2Z" fill="#87858b" stroke="#87858b" stroke-width="0.5"/><path d="M974.3 232.9L982.1 236.9L992.7 234.2L983.4 229.5Z" fill="#a4534a" stroke="#a4534a" stroke-width=".5"/><path d="M974.3 232.9L982.1 236.9L988.7 235.2L979.9 230.8Z" fill="#bfbaab"/><path d="M979.9 230.8L988.7 235.2" stroke="#7a4a3a" stroke-width=".8" stroke-opacity=".6"/><path d="M974.3 232.9L982.1 236.9M983.4 229.5L992.7 234.2M974.3 232.9L983.4 229.5M982.1 236.9L992.7 234.2" class="e"/><path d="M974.3 232.9h0M983.4 229.5h0M982.1 236.9h0M992.7 234.2h0" class="d"/><path d="M1047.6 265.2L1054.0 274.0L1061.4 283.8L1054.5 274.3Z" fill="#773c36" stroke="#773c36" stroke-width=".5"/><path d="M1047.6 265.2L1054.0 274.0M1054.5 274.3L1061.4 283.8M1047.6 265.2L1054.5 274.3M1054.0 274.0L1061.4 283.8" class="e"/><path d="M1047.6 265.2h0M1054.5 274.3h0M1054.0 274.0h0M1061.4 283.8h0" class="d"/><path d="M1061.8 330.1L1063.9 340.7L1060.4 351.4L1058.3 340.8Z" fill="#858389" stroke="#858389" stroke-width="0.5"/><path d="M742.5 318.6L798.7 324.1L798.8 312.7L742.1 307.2Z" fill="#ad574e" stroke="#ad574e" stroke-width=".5"/><path d="M742.1 307.2L798.8 312.7L798.8 319.8L742.4 314.2Z" fill="#c9c3b4"/><path d="M742.4 314.2L798.8 319.8" stroke="#7a4a3a" stroke-width=".8" stroke-opacity=".6"/><path d="M742.5 317.2L798.7 322.7" stroke="#7a2a1e" stroke-width="2.2" stroke-opacity=".45"/><path d="M742.4 314.0L798.8 319.5" stroke="#fff" stroke-width="2" stroke-opacity=".08"/><path d="M742.5 318.6L798.7 324.1M742.1 307.2L798.8 312.7" class="e"/><path d="M855.5 339.0L912.8 344.8L913.7 335.5L855.8 329.7Z" fill="#9f5048" stroke="#9f5048" stroke-width=".5"/><path d="M855.5 339.0L912.8 344.8M855.8 329.7L913.7 335.5M912.8 344.8L913.7 335.5" class="e"/><path d="M912.8 344.8h0M913.7 335.5h0" class="d"/><path d="M689.1 245.6L745.8 250.6L747.8 237.0L691.3 232.0Z" fill="#c6645a" stroke="#c6645a" stroke-width=".5"/><path d="M689.4 243.9L746.0 249.0" stroke="#7a2a1e" stroke-width="2.2" stroke-opacity=".45"/><path d="M690.0 240.1L746.6 245.2" stroke="#fff" stroke-width="2" stroke-opacity=".08"/><path d="M689.1 245.6L745.8 250.6M691.3 232.0L747.8 237.0M689.1 245.6L691.3 232.0" class="e"/><path d="M689.1 245.6h0M691.3 232.0h0" class="d"/><path d="M950.0 233.7L957.6 236.2L965.6 229.5L956.4 226.6Z" fill="#af584f" stroke="#af584f" stroke-width=".5"/><path d="M956.4 226.6L965.6 229.5L960.7 233.6L952.4 231.0Z" fill="#ccc6b6"/><path d="M952.4 231.0L960.7 233.6" stroke="#7a4a3a" stroke-width=".8" stroke-opacity=".6"/><path d="M950.8 232.9L958.6 235.4" stroke="#7a2a1e" stroke-width="2.2" stroke-opacity=".45"/><path d="M952.5 230.9L960.8 233.5" stroke="#fff" stroke-width="2" stroke-opacity=".08"/><path d="M950.0 233.7L957.6 236.2M956.4 226.6L965.6 229.5M950.0 233.7L956.4 226.6M957.6 236.2L965.6 229.5" class="e"/><path d="M950.0 233.7h0M956.4 226.6h0M957.6 236.2h0M965.6 229.5h0" class="d"/><path d="M963.0 381.2L960.7 401.7L949.9 395.2L952.4 375.2Z" fill="#b3b0b9" stroke="#b3b0b9" stroke-width="0.5"/><path d="M912.8 344.8L914.1 344.9L914.4 335.6L913.7 335.5Z" fill="#9f5048" stroke="#9f5048" stroke-width=".5"/><path d="M912.8 344.8L914.1 344.9M913.7 335.5L914.4 335.6M912.8 344.8L913.7 335.5M914.1 344.9L914.4 335.6" class="e"/><path d="M912.8 344.8h0M913.7 335.5h0M914.1 344.9h0M914.4 335.6h0" class="d"/><path d="M914.1 344.9L915.3 345.2L915.1 335.7L914.4 335.6Z" fill="#9e5048" stroke="#9e5048" stroke-width=".5"/><path d="M914.1 344.9L915.3 345.2M914.4 335.6L915.1 335.7M914.1 344.9L914.4 335.6M915.3 345.2L915.1 335.7" class="e"/><path d="M914.1 344.9h0M914.4 335.6h0M915.3 345.2h0M915.1 335.7h0" class="d"/><path d="M936.2 357.0L936.3 358.8L931.3 349.0L931.3 347.6Z" fill="#928f96" stroke="#928f96" stroke-width="0.5"/><path d="M807.3 229.7L865.2 234.7L866.9 224.4L809.4 219.5Z" fill="#bb5e55" stroke="#bb5e55" stroke-width=".5"/><path d="M821.7 231.0L823.7 220.7" stroke="#9a4030" stroke-width="1.6" stroke-opacity=".4"/><path d="M850.7 233.5L852.5 223.1" stroke="#9a4030" stroke-width="1.6" stroke-opacity=".4"/><path d="M807.3 229.7L865.2 234.7M809.4 219.5L866.9 224.4" class="e"/><path d="M915.3 345.2L916.5 345.5L915.8 335.9L915.1 335.7Z" fill="#9c4f47" stroke="#9c4f47" stroke-width=".5"/><path d="M915.3 345.2L916.5 345.5M915.1 335.7L915.8 335.9M915.3 345.2L915.1 335.7M916.5 345.5L915.8 335.9" class="e"/><path d="M915.3 345.2h0M915.1 335.7h0M916.5 345.5h0M915.8 335.9h0" class="d"/><path d="M916.5 345.5L917.6 346.0L916.4 336.1L915.8 335.9Z" fill="#994d45" stroke="#994d45" stroke-width=".5"/><path d="M916.5 345.5L917.6 346.0M915.8 335.9L916.4 336.1M916.5 345.5L915.8 335.9M917.6 346.0L916.4 336.1" class="e"/><path d="M916.5 345.5h0M915.8 335.9h0M917.6 346.0h0M916.4 336.1h0" class="d"/><path d="M1036.5 377.2L1036.1 400.8L1024.5 406.0L1025.2 382.8Z" fill="#aaa7af" stroke="#aaa7af" stroke-width="0.5"/><path d="M917.6 346.0L918.6 346.5L917.0 336.4L916.4 336.1Z" fill="#964b44" stroke="#964b44" stroke-width=".5"/><path d="M917.6 346.0L918.6 346.5M916.4 336.1L917.0 336.4M917.6 346.0L916.4 336.1M918.6 346.5L917.0 336.4" class="e"/><path d="M917.6 346.0h0M916.4 336.1h0M918.6 346.5h0M917.0 336.4h0" class="d"/><path d="M918.6 346.5L919.5 347.0L917.5 336.7L917.0 336.4Z" fill="#914942" stroke="#914942" stroke-width=".5"/><path d="M918.6 346.5L919.5 347.0M917.0 336.4L917.5 336.7M918.6 346.5L917.0 336.4M919.5 347.0L917.5 336.7" class="e"/><path d="M918.6 346.5h0M917.0 336.4h0M919.5 347.0h0M917.5 336.7h0" class="d"/><path d="M685.9 288.7L742.2 294.1L742.9 279.8L686.3 274.5Z" fill="#c06157" stroke="#c06157" stroke-width=".5"/><path d="M686.0 287.0L742.3 292.3" stroke="#7a2a1e" stroke-width="2.2" stroke-opacity=".45"/><path d="M686.1 283.0L742.5 288.4" stroke="#fff" stroke-width="2" stroke-opacity=".08"/><path d="M700.0 290.0L700.5 275.9" stroke="#9a4030" stroke-width="1.6" stroke-opacity=".4"/><path d="M728.2 292.7L728.8 278.5" stroke="#9a4030" stroke-width="1.6" stroke-opacity=".4"/><path d="M685.9 288.7L742.2 294.1M686.3 274.5L742.9 279.8M685.9 288.7L686.3 274.5" class="e"/><path d="M685.9 288.7h0M686.3 274.5h0" class="d"/><path d="M919.5 347.0L920.3 347.6L918.0 337.1L917.5 336.7Z" fill="#8b463f" stroke="#8b463f" stroke-width=".5"/><path d="M919.5 347.0L920.3 347.6M917.5 336.7L918.0 337.1M919.5 347.0L917.5 336.7M920.3 347.6L918.0 337.1" class="e"/><path d="M919.5 347.0h0M917.5 336.7h0M920.3 347.6h0M918.0 337.1h0" class="d"/><path d="M747.8 237.0L805.2 242.0L807.3 229.7L750.2 224.8Z" fill="#c26258" stroke="#c26258" stroke-width=".5"/><path d="M776.5 239.5L778.7 227.3" stroke="#9a4030" stroke-width="1.6" stroke-opacity=".4"/><path d="M747.8 237.0L805.2 242.0M750.2 224.8L807.3 229.7" class="e"/><path d="M920.3 347.6L920.9 348.3L918.4 337.4L918.0 337.1Z" fill="#85433c" stroke="#85433c" stroke-width=".5"/><path d="M920.3 347.6L920.9 348.3M918.0 337.1L918.4 337.4M920.3 347.6L918.0 337.1M920.9 348.3L918.4 337.4" class="e"/><path d="M920.3 347.6h0M918.0 337.1h0M920.9 348.3h0M918.4 337.4h0" class="d"/><path d="M687.4 259.9L744.1 265.1L745.8 250.6L689.1 245.6Z" fill="#c7645a" stroke="#c7645a" stroke-width=".5"/><path d="M687.4 259.9L744.1 265.1M689.1 245.6L745.8 250.6M687.4 259.9L689.1 245.6" class="e"/><path d="M687.4 259.9h0M689.1 245.6h0" class="d"/><path d="M1001.0 239.3L1008.1 244.8L1020.1 246.4L1011.9 240.0Z" fill="#9b4e46" stroke="#9b4e46" stroke-width=".5"/><path d="M1001.0 239.3L1008.1 244.8M1011.9 240.0L1020.1 246.4M1001.0 239.3L1011.9 240.0M1008.1 244.8L1020.1 246.4" class="e"/><path d="M1001.0 239.3h0M1011.9 240.0h0M1008.1 244.8h0M1020.1 246.4h0" class="d"/><path d="M957.6 236.2L964.7 239.0L974.3 232.9L965.6 229.5Z" fill="#af584f" stroke="#af584f" stroke-width=".5"/><path d="M965.6 229.5L974.3 232.9L968.3 236.7L960.7 233.6Z" fill="#cbc6b6"/><path d="M960.7 233.6L968.3 236.7" stroke="#7a4a3a" stroke-width=".8" stroke-opacity=".6"/><path d="M958.6 235.4L965.8 238.3" stroke="#7a2a1e" stroke-width="2.2" stroke-opacity=".45"/><path d="M960.8 233.5L968.5 236.6" stroke="#fff" stroke-width="2" stroke-opacity=".08"/><path d="M957.6 236.2L964.7 239.0M965.6 229.5L974.3 232.9M957.6 236.2L965.6 229.5M964.7 239.0L974.3 232.9" class="e"/><path d="M957.6 236.2h0M965.6 229.5h0M964.7 239.0h0M974.3 232.9h0" class="d"/><path d="M920.9 348.3L921.4 349.0L918.6 337.8L918.4 337.4Z" fill="#7c3f38" stroke="#7c3f38" stroke-width=".5"/><path d="M920.9 348.3L921.4 349.0M918.4 337.4L918.6 337.8M920.9 348.3L918.4 337.4M921.4 349.0L918.6 337.8" class="e"/><path d="M920.9 348.3h0M918.4 337.4h0M921.4 349.0h0M918.6 337.8h0" class="d"/><path d="M865.2 234.7L924.0 239.8L925.2 229.3L866.9 224.4Z" fill="#bb5e55" stroke="#bb5e55" stroke-width=".5"/><path d="M865.2 234.7L924.0 239.8M866.9 224.4L925.2 229.3M924.0 239.8L925.2 229.3" class="e"/><path d="M924.0 239.8h0M925.2 229.3h0" class="d"/><path d="M952.4 375.2L949.9 395.2L940.8 387.2L943.4 367.7Z" fill="#adaab2" stroke="#adaab2" stroke-width="0.5"/><path d="M1020.1 246.4L1026.9 253.2L1038.2 258.1L1030.6 250.4Z" fill="#924942" stroke="#924942" stroke-width=".5"/><path d="M1021.4 246.8L1028.2 253.8" stroke="#7a2a1e" stroke-width="2.2" stroke-opacity=".45"/><path d="M1024.3 248.0L1031.4 255.1" stroke="#fff" stroke-width="2" stroke-opacity=".08"/><path d="M1020.1 246.4L1026.9 253.2M1030.6 250.4L1038.2 258.1M1020.1 246.4L1030.6 250.4M1026.9 253.2L1038.2 258.1" class="e"/><path d="M1020.1 246.4h0M1030.6 250.4h0M1026.9 253.2h0M1038.2 258.1h0" class="d"/><path d="M686.3 274.5L742.9 279.8L744.1 265.1L687.4 259.9Z" fill="#c56359" stroke="#c56359" stroke-width=".5"/><path d="M700.5 275.9L701.6 261.2" stroke="#9a4030" stroke-width="1.6" stroke-opacity=".4"/><path d="M728.8 278.5L729.9 263.8" stroke="#9a4030" stroke-width="1.6" stroke-opacity=".4"/><path d="M686.3 274.5L742.9 279.8M687.4 259.9L744.1 265.1M686.3 274.5L687.4 259.9" class="e"/><path d="M686.3 274.5h0M687.4 259.9h0" class="d"/><path d="M921.4 349.0L921.8 349.7L918.8 338.2L918.6 337.8Z" fill="#723934" stroke="#723934" stroke-width=".5"/><path d="M921.4 349.0L921.8 349.7M918.6 337.8L918.8 338.2M921.4 349.0L918.6 337.8M921.8 349.7L918.8 338.2" class="e"/><path d="M921.4 349.0h0M918.6 337.8h0M921.8 349.7h0M918.8 338.2h0" class="d"/><path d="M1052.4 288.9L1056.6 298.3L1061.0 308.4L1056.5 298.5Z" fill="#69676c" stroke="#69676c" stroke-width="0.5"/><path d="M924.0 239.8L930.7 240.6L933.7 230.3L925.2 229.3Z" fill="#bb5e55" stroke="#bb5e55" stroke-width=".5"/><path d="M924.0 239.8L930.7 240.6M925.2 229.3L933.7 230.3M924.0 239.8L925.2 229.3M930.7 240.6L933.7 230.3" class="e"/><path d="M924.0 239.8h0M925.2 229.3h0M930.7 240.6h0M933.7 230.3h0" class="d"/><path d="M982.1 236.9L989.1 241.2L1001.0 239.3L992.7 234.2Z" fill="#a5534b" stroke="#a5534b" stroke-width=".5"/><path d="M982.1 236.9L989.1 241.2L996.5 240.0L988.7 235.2Z" fill="#c0bbac"/><path d="M988.7 235.2L996.5 240.0" stroke="#7a4a3a" stroke-width=".8" stroke-opacity=".6"/><path d="M982.1 236.9L989.1 241.2M992.7 234.2L1001.0 239.3M982.1 236.9L992.7 234.2M989.1 241.2L1001.0 239.3" class="e"/><path d="M982.1 236.9h0M992.7 234.2h0M989.1 241.2h0M1001.0 239.3h0" class="d"/><path d="M1046.4 370.0L1046.3 393.8L1036.1 400.8L1036.5 377.2Z" fill="#a19ea6" stroke="#a19ea6" stroke-width="0.5"/><path d="M1062.7 319.1L1064.8 329.6L1063.9 340.7L1061.8 330.1Z" fill="#7b787e" stroke="#7b787e" stroke-width="0.5"/><path d="M930.7 240.6L937.2 241.8L942.0 231.8L933.7 230.3Z" fill="#ba5e54" stroke="#ba5e54" stroke-width=".5"/><path d="M930.7 240.6L937.2 241.8M933.7 230.3L942.0 231.8M930.7 240.6L933.7 230.3M937.2 241.8L942.0 231.8" class="e"/><path d="M930.7 240.6h0M933.7 230.3h0M937.2 241.8h0M942.0 231.8h0" class="d"/><path d="M798.7 324.1L855.8 329.7L856.4 318.3L798.8 312.7Z" fill="#ad574e" stroke="#ad574e" stroke-width=".5"/><path d="M798.8 312.7L856.4 318.3L856.0 325.4L798.8 319.8Z" fill="#c9c4b4"/><path d="M798.8 319.8L856.0 325.4" stroke="#7a4a3a" stroke-width=".8" stroke-opacity=".6"/><path d="M798.7 322.7L855.9 328.4" stroke="#7a2a1e" stroke-width="2.2" stroke-opacity=".45"/><path d="M798.8 319.5L856.0 325.2" stroke="#fff" stroke-width="2" stroke-opacity=".08"/><path d="M798.7 324.1L855.8 329.7M798.8 312.7L856.4 318.3" class="e"/><path d="M742.1 307.2L798.8 312.7L799.4 299.5L742.2 294.1Z" fill="#b85d53" stroke="#b85d53" stroke-width=".5"/><path d="M742.1 307.2L798.8 312.7L799.2 304.5L742.2 299.0Z" fill="#d6d0bf"/><path d="M742.2 299.0L799.2 304.5" stroke="#7a4a3a" stroke-width=".8" stroke-opacity=".6"/><path d="M742.1 307.2L798.8 312.7M742.2 294.1L799.4 299.5" class="e"/><path d="M931.3 347.6L931.3 349.0L928.8 338.4L928.7 337.3Z" fill="#838087" stroke="#838087" stroke-width="0.5"/><path d="M1038.2 258.1L1044.0 266.1L1054.0 274.0L1047.6 265.2Z" fill="#8a453e" stroke="#8a453e" stroke-width=".5"/><path d="M1038.2 258.1L1044.0 266.1M1047.6 265.2L1054.0 274.0M1038.2 258.1L1047.6 265.2M1044.0 266.1L1054.0 274.0" class="e"/><path d="M1038.2 258.1h0M1047.6 265.2h0M1044.0 266.1h0M1054.0 274.0h0" class="d"/><path d="M937.2 241.8L943.5 243.3L950.0 233.7L942.0 231.8Z" fill="#ba5e54" stroke="#ba5e54" stroke-width=".5"/><path d="M937.2 241.8L943.5 243.3M942.0 231.8L950.0 233.7M937.2 241.8L942.0 231.8M943.5 243.3L950.0 233.7" class="e"/><path d="M937.2 241.8h0M942.0 231.8h0M943.5 243.3h0M950.0 233.7h0" class="d"/><path d="M964.7 239.0L971.1 242.3L982.1 236.9L974.3 232.9Z" fill="#af584f" stroke="#af584f" stroke-width=".5"/><path d="M974.3 232.9L982.1 236.9L975.3 240.2L968.3 236.7Z" fill="#cbc6b6"/><path d="M968.3 236.7L975.3 240.2" stroke="#7a4a3a" stroke-width=".8" stroke-opacity=".6"/><path d="M965.8 238.3L972.4 241.6" stroke="#7a2a1e" stroke-width="2.2" stroke-opacity=".45"/><path d="M968.5 236.6L975.5 240.1" stroke="#fff" stroke-width="2" stroke-opacity=".08"/><path d="M964.7 239.0L971.1 242.3M974.3 232.9L982.1 236.9M964.7 239.0L974.3 232.9M971.1 242.3L982.1 236.9" class="e"/><path d="M964.7 239.0h0M974.3 232.9h0M971.1 242.3h0M982.1 236.9h0" class="d"/><path d="M943.4 367.7L940.8 387.2L933.5 377.9L936.3 358.8Z" fill="#a4a1a9" stroke="#a4a1a9" stroke-width="0.5"/><path d="M745.8 250.6L803.3 255.8L805.2 242.0L747.8 237.0Z" fill="#c7645a" stroke="#c7645a" stroke-width=".5"/><path d="M746.0 249.0L803.5 254.1" stroke="#7a2a1e" stroke-width="2.2" stroke-opacity=".45"/><path d="M746.6 245.2L804.0 250.3" stroke="#fff" stroke-width="2" stroke-opacity=".08"/><path d="M774.5 253.2L776.5 239.5" stroke="#9a4030" stroke-width="1.6" stroke-opacity=".4"/><path d="M745.8 250.6L803.3 255.8M747.8 237.0L805.2 242.0" class="e"/><path d="M805.2 242.0L863.4 247.1L865.2 234.7L807.3 229.7Z" fill="#c26258" stroke="#c26258" stroke-width=".5"/><path d="M805.2 242.0L863.4 247.1M807.3 229.7L865.2 234.7" class="e"/><path d="M855.8 329.7L913.7 335.5L914.9 323.9L856.4 318.3Z" fill="#ad574e" stroke="#ad574e" stroke-width=".5"/><path d="M856.4 318.3L914.9 323.9L914.2 331.1L856.0 325.4Z" fill="#c9c4b4"/><path d="M856.0 325.4L914.2 331.1" stroke="#7a4a3a" stroke-width=".8" stroke-opacity=".6"/><path d="M855.9 328.4L913.9 334.1" stroke="#7a2a1e" stroke-width="2.2" stroke-opacity=".45"/><path d="M856.0 325.2L914.2 330.9" stroke="#fff" stroke-width="2" stroke-opacity=".08"/><path d="M855.8 329.7L913.7 335.5M856.4 318.3L914.9 323.9M913.7 335.5L914.9 323.9" class="e"/><path d="M913.7 335.5h0M914.9 323.9h0" class="d"/><path d="M943.5 243.3L949.5 245.3L957.6 236.2L950.0 233.7Z" fill="#b95d54" stroke="#b95d54" stroke-width=".5"/><path d="M943.5 243.3L949.5 245.3M950.0 233.7L957.6 236.2M943.5 243.3L950.0 233.7M949.5 245.3L957.6 236.2" class="e"/><path d="M943.5 243.3h0M950.0 233.7h0M949.5 245.3h0M957.6 236.2h0" class="d"/><path d="M913.7 335.5L914.4 335.6L915.4 324.0L914.9 323.9Z" fill="#ad574e" stroke="#ad574e" stroke-width=".5"/><path d="M914.9 323.9L915.4 324.0L914.8 331.2L914.2 331.1Z" fill="#c9c3b4"/><path d="M914.2 331.1L914.8 331.2" stroke="#7a4a3a" stroke-width=".8" stroke-opacity=".6"/><path d="M913.9 334.1L914.6 334.2" stroke="#7a2a1e" stroke-width="2.2" stroke-opacity=".45"/><path d="M914.2 330.9L914.8 330.9" stroke="#fff" stroke-width="2" stroke-opacity=".08"/><path d="M913.7 335.5L914.4 335.6M914.9 323.9L915.4 324.0M913.7 335.5L914.9 323.9M914.4 335.6L915.4 324.0" class="e"/><path d="M913.7 335.5h0M914.9 323.9h0M914.4 335.6h0M915.4 324.0h0" class="d"/><path d="M914.4 335.6L915.1 335.7L915.9 324.1L915.4 324.0Z" fill="#ab564d" stroke="#ab564d" stroke-width=".5"/><path d="M915.4 324.0L915.9 324.1L915.5 331.3L914.8 331.2Z" fill="#c7c1b2"/><path d="M914.8 331.2L915.5 331.3" stroke="#7a4a3a" stroke-width=".8" stroke-opacity=".6"/><path d="M914.6 334.2L915.2 334.3" stroke="#7a2a1e" stroke-width="2.2" stroke-opacity=".45"/><path d="M914.8 330.9L915.5 331.1" stroke="#fff" stroke-width="2" stroke-opacity=".08"/><path d="M914.4 335.6L915.1 335.7M915.4 324.0L915.9 324.1M914.4 335.6L915.4 324.0M915.1 335.7L915.9 324.1" class="e"/><path d="M914.4 335.6h0M915.4 324.0h0M915.1 335.7h0M915.9 324.1h0" class="d"/><path d="M915.1 335.7L915.8 335.9L916.5 324.3L915.9 324.1Z" fill="#a8554c" stroke="#a8554c" stroke-width=".5"/><path d="M915.9 324.1L916.5 324.3L916.1 331.5L915.5 331.3Z" fill="#c4beaf"/><path d="M915.5 331.3L916.1 331.5" stroke="#7a4a3a" stroke-width=".8" stroke-opacity=".6"/><path d="M915.2 334.3L915.9 334.5" stroke="#7a2a1e" stroke-width="2.2" stroke-opacity=".45"/><path d="M915.5 331.1L916.1 331.2" stroke="#fff" stroke-width="2" stroke-opacity=".08"/><path d="M915.1 335.7L915.8 335.9M915.9 324.1L916.5 324.3M915.1 335.7L915.9 324.1M915.8 335.9L916.5 324.3" class="e"/><path d="M915.1 335.7h0M915.9 324.1h0M915.8 335.9h0M916.5 324.3h0" class="d"/><path d="M915.8 335.9L916.4 336.1L916.9 324.4L916.5 324.3Z" fill="#a5534b" stroke="#a5534b" stroke-width=".5"/><path d="M916.5 324.3L916.9 324.4L916.6 331.7L916.1 331.5Z" fill="#bfbaab"/><path d="M916.1 331.5L916.6 331.7" stroke="#7a4a3a" stroke-width=".8" stroke-opacity=".6"/><path d="M915.9 334.5L916.5 334.7" stroke="#7a2a1e" stroke-width="2.2" stroke-opacity=".45"/><path d="M916.1 331.2L916.6 331.5" stroke="#fff" stroke-width="2" stroke-opacity=".08"/><path d="M915.8 335.9L916.4 336.1M916.5 324.3L916.9 324.4M915.8 335.9L916.5 324.3M916.4 336.1L916.9 324.4" class="e"/><path d="M915.8 335.9h0M916.5 324.3h0M916.4 336.1h0M916.9 324.4h0" class="d"/><path d="M1054.5 361.3L1054.7 385.3L1046.3 393.8L1046.4 370.0Z" fill="#96949b" stroke="#96949b" stroke-width="0.5"/><path d="M916.4 336.1L917.0 336.4L917.4 324.6L916.9 324.4Z" fill="#a05148" stroke="#a05148" stroke-width=".5"/><path d="M916.9 324.4L917.4 324.6L917.2 331.9L916.6 331.7Z" fill="#bab5a7"/><path d="M916.6 331.7L917.2 331.9" stroke="#7a4a3a" stroke-width=".8" stroke-opacity=".6"/><path d="M916.5 334.7L917.1 335.0" stroke="#7a2a1e" stroke-width="2.2" stroke-opacity=".45"/><path d="M916.6 331.5L917.2 331.7" stroke="#fff" stroke-width="2" stroke-opacity=".08"/><path d="M916.4 336.1L917.0 336.4M916.9 324.4L917.4 324.6M916.4 336.1L916.9 324.4M917.0 336.4L917.4 324.6" class="e"/><path d="M916.4 336.1h0M916.9 324.4h0M917.0 336.4h0M917.4 324.6h0" class="d"/><path d="M917.0 336.4L917.5 336.7L917.7 324.9L917.4 324.6Z" fill="#9b4e46" stroke="#9b4e46" stroke-width=".5"/><path d="M917.4 324.6L917.7 324.9L917.6 332.2L917.2 331.9Z" fill="#b4afa1"/><path d="M917.2 331.9L917.6 332.2" stroke="#7a4a3a" stroke-width=".8" stroke-opacity=".6"/><path d="M917.1 335.0L917.6 335.3" stroke="#7a2a1e" stroke-width="2.2" stroke-opacity=".45"/><path d="M917.2 331.7L917.6 332.0" stroke="#fff" stroke-width="2" stroke-opacity=".08"/><path d="M917.0 336.4L917.5 336.7M917.4 324.6L917.7 324.9M917.0 336.4L917.4 324.6M917.5 336.7L917.7 324.9" class="e"/><path d="M917.0 336.4h0M917.4 324.6h0M917.5 336.7h0M917.7 324.9h0" class="d"/><path d="M917.5 336.7L918.0 337.1L918.1 325.1L917.7 324.9Z" fill="#954b44" stroke="#954b44" stroke-width=".5"/><path d="M917.7 324.9L918.1 325.1L918.0 332.5L917.6 332.2Z" fill="#ada99b"/><path d="M917.6 332.2L918.0 332.5" stroke="#7a4a3a" stroke-width=".8" stroke-opacity=".6"/><path d="M917.6 335.3L918.0 335.6" stroke="#7a2a1e" stroke-width="2.2" stroke-opacity=".45"/><path d="M917.6 332.0L918.0 332.3" stroke="#fff" stroke-width="2" stroke-opacity=".08"/><path d="M917.5 336.7L918.0 337.1M917.7 324.9L918.1 325.1M917.5 336.7L917.7 324.9M918.0 337.1L918.1 325.1" class="e"/><path d="M917.5 336.7h0M917.7 324.9h0M918.0 337.1h0M918.1 325.1h0" class="d"/><path d="M742.2 294.1L799.4 299.5L800.3 285.2L742.9 279.8Z" fill="#c06157" stroke="#c06157" stroke-width=".5"/><path d="M742.3 292.3L799.5 297.8" stroke="#7a2a1e" stroke-width="2.2" stroke-opacity=".45"/><path d="M742.5 288.4L799.7 293.8" stroke="#fff" stroke-width="2" stroke-opacity=".08"/><path d="M742.2 294.1L799.4 299.5M742.9 279.8L800.3 285.2" class="e"/><path d="M918.0 337.1L918.4 337.4L918.3 325.4L918.1 325.1Z" fill="#8f4841" stroke="#8f4841" stroke-width=".5"/><path d="M918.1 325.1L918.3 325.4L918.4 332.9L918.0 332.5Z" fill="#a6a295"/><path d="M918.0 332.5L918.4 332.9" stroke="#7a4a3a" stroke-width=".8" stroke-opacity=".6"/><path d="M918.0 335.6L918.4 336.0" stroke="#7a2a1e" stroke-width="2.2" stroke-opacity=".45"/><path d="M918.0 332.3L918.4 332.6" stroke="#fff" stroke-width="2" stroke-opacity=".08"/><path d="M918.0 337.1L918.4 337.4M918.1 325.1L918.3 325.4M918.0 337.1L918.1 325.1M918.4 337.4L918.3 325.4" class="e"/><path d="M918.0 337.1h0M918.1 325.1h0M918.4 337.4h0M918.3 325.4h0" class="d"/><path d="M1061.0 308.4L1063.0 318.5L1064.8 329.6L1062.7 319.1Z" fill="#6c696f" stroke="#6c696f" stroke-width="0.5"/><path d="M918.4 337.4L918.6 337.8L918.6 325.7L918.3 325.4Z" fill="#87443d" stroke="#87443d" stroke-width=".5"/><path d="M918.3 325.4L918.6 325.7L918.6 333.2L918.4 332.9Z" fill="#9d998d"/><path d="M918.4 332.9L918.6 333.2" stroke="#7a4a3a" stroke-width=".8" stroke-opacity=".6"/><path d="M918.4 336.0L918.6 336.4" stroke="#7a2a1e" stroke-width="2.2" stroke-opacity=".45"/><path d="M918.4 332.6L918.6 333.0" stroke="#fff" stroke-width="2" stroke-opacity=".08"/><path d="M918.4 337.4L918.6 337.8M918.3 325.4L918.6 325.7M918.4 337.4L918.3 325.4M918.6 337.8L918.6 325.7" class="e"/><path d="M918.4 337.4h0M918.3 325.4h0M918.6 337.8h0M918.6 325.7h0" class="d"/><path d="M989.1 241.2L995.0 246.0L1008.1 244.8L1001.0 239.3Z" fill="#a6544b" stroke="#a6544b" stroke-width=".5"/><path d="M989.1 241.2L995.0 246.0L1003.1 245.3L996.5 240.0Z" fill="#c1bcad"/><path d="M996.5 240.0L1003.1 245.3" stroke="#7a4a3a" stroke-width=".8" stroke-opacity=".6"/><path d="M989.1 241.2L995.0 246.0M1001.0 239.3L1008.1 244.8M989.1 241.2L1001.0 239.3M995.0 246.0L1008.1 244.8" class="e"/><path d="M989.1 241.2h0M1001.0 239.3h0M995.0 246.0h0M1008.1 244.8h0" class="d"/><path d="M1054.0 274.0L1058.3 283.2L1066.1 293.7L1061.4 283.8Z" fill="#83423b" stroke="#83423b" stroke-width=".5"/><path d="M1054.0 274.0L1058.3 283.2M1061.4 283.8L1066.1 293.7M1054.0 274.0L1061.4 283.8M1058.3 283.2L1066.1 293.7" class="e"/><path d="M1054.0 274.0h0M1061.4 283.8h0M1058.3 283.2h0M1066.1 293.7h0" class="d"/><path d="M1008.1 244.8L1013.9 250.8L1026.9 253.2L1020.1 246.4Z" fill="#9e4f47" stroke="#9e4f47" stroke-width=".5"/><path d="M1008.1 244.8L1013.9 250.8M1020.1 246.4L1026.9 253.2M1008.1 244.8L1020.1 246.4M1013.9 250.8L1026.9 253.2" class="e"/><path d="M1008.1 244.8h0M1020.1 246.4h0M1013.9 250.8h0M1026.9 253.2h0" class="d"/><path d="M949.5 245.3L955.0 247.6L964.7 239.0L957.6 236.2Z" fill="#b85c53" stroke="#b85c53" stroke-width=".5"/><path d="M949.5 245.3L955.0 247.6M957.6 236.2L964.7 239.0M949.5 245.3L957.6 236.2M955.0 247.6L964.7 239.0" class="e"/><path d="M949.5 245.3h0M957.6 236.2h0M955.0 247.6h0M964.7 239.0h0" class="d"/><path d="M918.6 337.8L918.8 338.2L918.7 326.0L918.6 325.7Z" fill="#7e4039" stroke="#7e4039" stroke-width=".5"/><path d="M918.6 325.7L918.7 326.0L918.8 333.6L918.6 333.2Z" fill="#938f84"/><path d="M918.6 333.2L918.8 333.6" stroke="#7a4a3a" stroke-width=".8" stroke-opacity=".6"/><path d="M918.6 336.4L918.8 336.8" stroke="#7a2a1e" stroke-width="2.2" stroke-opacity=".45"/><path d="M918.6 333.0L918.8 333.3" stroke="#fff" stroke-width="2" stroke-opacity=".08"/><path d="M918.6 337.8L918.8 338.2M918.6 325.7L918.7 326.0M918.6 337.8L918.6 325.7M918.8 338.2L918.7 326.0" class="e"/><path d="M918.6 337.8h0M918.6 325.7h0M918.8 338.2h0M918.7 326.0h0" class="d"/><path d="M863.4 247.1L922.6 252.3L924.0 239.8L865.2 234.7Z" fill="#c36258" stroke="#c36258" stroke-width=".5"/><path d="M893.0 249.7L894.6 237.3" stroke="#9a4030" stroke-width="1.6" stroke-opacity=".4"/><path d="M863.4 247.1L922.6 252.3M865.2 234.7L924.0 239.8M922.6 252.3L924.0 239.8" class="e"/><path d="M922.6 252.3h0M924.0 239.8h0" class="d"/><path d="M744.1 265.1L801.6 270.4L803.3 255.8L745.8 250.6Z" fill="#c8655a" stroke="#c8655a" stroke-width=".5"/><path d="M772.9 267.8L774.5 253.2" stroke="#9a4030" stroke-width="1.6" stroke-opacity=".4"/><path d="M744.1 265.1L801.6 270.4M745.8 250.6L803.3 255.8" class="e"/><path d="M918.8 338.2L918.9 338.6L918.8 326.3L918.7 326.0Z" fill="#743a34" stroke="#743a34" stroke-width=".5"/><path d="M918.7 326.0L918.8 326.3L918.9 333.9L918.8 333.6Z" fill="#868378"/><path d="M918.8 333.6L918.9 333.9" stroke="#7a4a3a" stroke-width=".8" stroke-opacity=".6"/><path d="M918.8 336.8L918.9 337.1" stroke="#7a2a1e" stroke-width="2.2" stroke-opacity=".45"/><path d="M918.8 333.3L918.9 333.7" stroke="#fff" stroke-width="2" stroke-opacity=".08"/><path d="M918.8 338.2L918.9 338.6M918.7 326.0L918.8 326.3M918.8 338.2L918.7 326.0M918.9 338.6L918.8 326.3" class="e"/><path d="M918.8 338.2h0M918.7 326.0h0M918.9 338.6h0M918.8 326.3h0" class="d"/><path d="M798.8 312.7L856.4 318.3L857.4 305.0L799.4 299.5Z" fill="#b85d53" stroke="#b85d53" stroke-width=".5"/><path d="M798.8 312.7L856.4 318.3L857.0 310.1L799.2 304.5Z" fill="#d6d0c0"/><path d="M799.2 304.5L857.0 310.1" stroke="#7a4a3a" stroke-width=".8" stroke-opacity=".6"/><path d="M798.8 312.7L856.4 318.3M799.4 299.5L857.4 305.0" class="e"/><path d="M971.1 242.3L976.7 245.9L989.1 241.2L982.1 236.9Z" fill="#ae584f" stroke="#ae584f" stroke-width=".5"/><path d="M982.1 236.9L989.1 241.2L981.4 244.1L975.3 240.2Z" fill="#cac5b5"/><path d="M975.3 240.2L981.4 244.1" stroke="#7a4a3a" stroke-width=".8" stroke-opacity=".6"/><path d="M972.4 241.6L978.2 245.3" stroke="#7a2a1e" stroke-width="2.2" stroke-opacity=".45"/><path d="M975.5 240.1L981.7 244.0" stroke="#fff" stroke-width="2" stroke-opacity=".08"/><path d="M971.1 242.3L976.7 245.9M982.1 236.9L989.1 241.2M971.1 242.3L982.1 236.9M976.7 245.9L989.1 241.2" class="e"/><path d="M971.1 242.3h0M982.1 236.9h0M976.7 245.9h0M989.1 241.2h0" class="d"/><path d="M922.6 252.3L927.6 252.9L930.7 240.6L924.0 239.8Z" fill="#c26258" stroke="#c26258" stroke-width=".5"/><path d="M922.6 252.3L927.6 252.9M924.0 239.8L930.7 240.6M922.6 252.3L924.0 239.8M927.6 252.9L930.7 240.6" class="e"/><path d="M922.6 252.3h0M924.0 239.8h0M927.6 252.9h0M930.7 240.6h0" class="d"/><path d="M742.9 279.8L800.3 285.2L801.6 270.4L744.1 265.1Z" fill="#c56359" stroke="#c56359" stroke-width=".5"/><path d="M742.9 279.8L800.3 285.2M744.1 265.1L801.6 270.4" class="e"/><path d="M927.6 252.9L932.4 253.8L937.2 241.8L930.7 240.6Z" fill="#c26258" stroke="#c26258" stroke-width=".5"/><path d="M927.6 252.9L932.4 253.8M930.7 240.6L937.2 241.8M927.6 252.9L930.7 240.6M932.4 253.8L937.2 241.8" class="e"/><path d="M927.6 252.9h0M930.7 240.6h0M932.4 253.8h0M937.2 241.8h0" class="d"/><path d="M936.3 358.8L933.5 377.9L928.4 367.6L931.3 349.0Z" fill="#99969e" stroke="#99969e" stroke-width="0.5"/><path d="M1026.9 253.2L1031.9 260.3L1044.0 266.1L1038.2 258.1Z" fill="#974c44" stroke="#974c44" stroke-width=".5"/><path d="M1028.2 253.8L1033.4 261.0" stroke="#7a2a1e" stroke-width="2.2" stroke-opacity=".45"/><path d="M1031.4 255.1L1036.8 262.6" stroke="#fff" stroke-width="2" stroke-opacity=".08"/><path d="M1026.9 253.2L1031.9 260.3M1038.2 258.1L1044.0 266.1M1026.9 253.2L1038.2 258.1M1031.9 260.3L1044.0 266.1" class="e"/><path d="M1026.9 253.2h0M1038.2 258.1h0M1031.9 260.3h0M1044.0 266.1h0" class="d"/><path d="M932.4 253.8L937.1 255.0L943.5 243.3L937.2 241.8Z" fill="#c16157" stroke="#c16157" stroke-width=".5"/><path d="M932.4 253.8L937.1 255.0M937.2 241.8L943.5 243.3M932.4 253.8L937.2 241.8M937.1 255.0L943.5 243.3" class="e"/><path d="M932.4 253.8h0M937.2 241.8h0M937.1 255.0h0M943.5 243.3h0" class="d"/><path d="M803.3 255.8L861.7 261.0L863.4 247.1L805.2 242.0Z" fill="#c7645a" stroke="#c7645a" stroke-width=".5"/><path d="M803.5 254.1L861.9 259.3" stroke="#7a2a1e" stroke-width="2.2" stroke-opacity=".45"/><path d="M804.0 250.3L862.4 255.5" stroke="#fff" stroke-width="2" stroke-opacity=".08"/><path d="M803.3 255.8L861.7 261.0M805.2 242.0L863.4 247.1" class="e"/><path d="M955.0 247.6L960.0 250.2L971.1 242.3L964.7 239.0Z" fill="#b65c53" stroke="#b65c53" stroke-width=".5"/><path d="M955.0 247.6L960.0 250.2M964.7 239.0L971.1 242.3M955.0 247.6L964.7 239.0M960.0 250.2L971.1 242.3" class="e"/><path d="M955.0 247.6h0M964.7 239.0h0M960.0 250.2h0M971.1 242.3h0" class="d"/><path d="M1060.4 351.4L1060.8 375.4L1054.7 385.3L1054.5 361.3Z" fill="#8a878e" stroke="#8a878e" stroke-width="0.5"/><path d="M856.4 318.3L914.9 323.9L916.3 310.7L857.4 305.0Z" fill="#b85d53" stroke="#b85d53" stroke-width=".5"/><path d="M856.4 318.3L914.9 323.9L915.7 315.7L857.0 310.1Z" fill="#d6d1c0"/><path d="M857.0 310.1L915.7 315.7" stroke="#7a4a3a" stroke-width=".8" stroke-opacity=".6"/><path d="M856.4 318.3L914.9 323.9M857.4 305.0L916.3 310.7M914.9 323.9L916.3 310.7" class="e"/><path d="M914.9 323.9h0M916.3 310.7h0" class="d"/><path d="M937.1 255.0L941.5 256.5L949.5 245.3L943.5 243.3Z" fill="#bf6057" stroke="#bf6057" stroke-width=".5"/><path d="M937.1 255.0L941.5 256.5M943.5 243.3L949.5 245.3M937.1 255.0L943.5 243.3M941.5 256.5L949.5 245.3" class="e"/><path d="M937.1 255.0h0M943.5 243.3h0M941.5 256.5h0M949.5 245.3h0" class="d"/><path d="M914.9 323.9L915.4 324.0L917.0 310.8L916.3 310.7Z" fill="#b85d53" stroke="#b85d53" stroke-width=".5"/><path d="M914.9 323.9L915.4 324.0L916.4 315.8L915.7 315.7Z" fill="#d6d0bf"/><path d="M915.7 315.7L916.4 315.8" stroke="#7a4a3a" stroke-width=".8" stroke-opacity=".6"/><path d="M914.9 323.9L915.4 324.0M916.3 310.7L917.0 310.8M914.9 323.9L916.3 310.7M915.4 324.0L917.0 310.8" class="e"/><path d="M914.9 323.9h0M916.3 310.7h0M915.4 324.0h0M917.0 310.8h0" class="d"/><path d="M915.4 324.0L915.9 324.1L917.7 310.9L917.0 310.8Z" fill="#b65c53" stroke="#b65c53" stroke-width=".5"/><path d="M915.4 324.0L915.9 324.1L917.0 315.9L916.4 315.8Z" fill="#d4cebe"/><path d="M916.4 315.8L917.0 315.9" stroke="#7a4a3a" stroke-width=".8" stroke-opacity=".6"/><path d="M915.4 324.0L915.9 324.1M917.0 310.8L917.7 310.9M915.4 324.0L917.0 310.8M915.9 324.1L917.7 310.9" class="e"/><path d="M915.4 324.0h0M917.0 310.8h0M915.9 324.1h0M917.7 310.9h0" class="d"/><path d="M915.9 324.1L916.5 324.3L918.4 311.1L917.7 310.9Z" fill="#b45a51" stroke="#b45a51" stroke-width=".5"/><path d="M915.9 324.1L916.5 324.3L917.7 316.1L917.0 315.9Z" fill="#d1cbbb"/><path d="M917.0 315.9L917.7 316.1" stroke="#7a4a3a" stroke-width=".8" stroke-opacity=".6"/><path d="M915.9 324.1L916.5 324.3M917.7 310.9L918.4 311.1M915.9 324.1L917.7 310.9M916.5 324.3L918.4 311.1" class="e"/><path d="M915.9 324.1h0M917.7 310.9h0M916.5 324.3h0M918.4 311.1h0" class="d"/><path d="M916.5 324.3L916.9 324.4L919.0 311.3L918.4 311.1Z" fill="#b05950" stroke="#b05950" stroke-width=".5"/><path d="M916.5 324.3L916.9 324.4L918.2 316.3L917.7 316.1Z" fill="#cdc7b7"/><path d="M917.7 316.1L918.2 316.3" stroke="#7a4a3a" stroke-width=".8" stroke-opacity=".6"/><path d="M916.5 324.3L916.9 324.4M918.4 311.1L919.0 311.3M916.5 324.3L918.4 311.1M916.9 324.4L919.0 311.3" class="e"/><path d="M916.5 324.3h0M918.4 311.1h0M916.9 324.4h0M919.0 311.3h0" class="d"/><path d="M916.9 324.4L917.4 324.6L919.6 311.6L919.0 311.3Z" fill="#ac564e" stroke="#ac564e" stroke-width=".5"/><path d="M916.9 324.4L917.4 324.6L918.8 316.6L918.2 316.3Z" fill="#c8c2b3"/><path d="M918.2 316.3L918.8 316.6" stroke="#7a4a3a" stroke-width=".8" stroke-opacity=".6"/><path d="M916.9 324.4L917.4 324.6M919.0 311.3L919.6 311.6M916.9 324.4L919.0 311.3M917.4 324.6L919.6 311.6" class="e"/><path d="M916.9 324.4h0M919.0 311.3h0M917.4 324.6h0M919.6 311.6h0" class="d"/><path d="M799.4 299.5L857.4 305.0L858.6 290.7L800.3 285.2Z" fill="#c06157" stroke="#c06157" stroke-width=".5"/><path d="M799.5 297.8L857.5 303.3" stroke="#7a2a1e" stroke-width="2.2" stroke-opacity=".45"/><path d="M799.7 293.8L857.9 299.3" stroke="#fff" stroke-width="2" stroke-opacity=".08"/><path d="M813.9 300.9L814.9 286.6" stroke="#9a4030" stroke-width="1.6" stroke-opacity=".4"/><path d="M842.9 303.7L844.0 289.3" stroke="#9a4030" stroke-width="1.6" stroke-opacity=".4"/><path d="M799.4 299.5L857.4 305.0M800.3 285.2L858.6 290.7" class="e"/><path d="M917.4 324.6L917.7 324.9L920.2 311.9L919.6 311.6Z" fill="#a6544b" stroke="#a6544b" stroke-width=".5"/><path d="M917.4 324.6L917.7 324.9L919.2 316.8L918.8 316.6Z" fill="#c1bcad"/><path d="M918.8 316.6L919.2 316.8" stroke="#7a4a3a" stroke-width=".8" stroke-opacity=".6"/><path d="M917.4 324.6L917.7 324.9M919.6 311.6L920.2 311.9M917.4 324.6L919.6 311.6M917.7 324.9L920.2 311.9" class="e"/><path d="M917.4 324.6h0M919.6 311.6h0M917.7 324.9h0M920.2 311.9h0" class="d"/><path d="M917.7 324.9L918.1 325.1L920.6 312.2L920.2 311.9Z" fill="#a05149" stroke="#a05149" stroke-width=".5"/><path d="M917.7 324.9L918.1 325.1L919.6 317.1L919.2 316.8Z" fill="#bab5a7"/><path d="M919.2 316.8L919.6 317.1" stroke="#7a4a3a" stroke-width=".8" stroke-opacity=".6"/><path d="M917.7 324.9L918.1 325.1M920.2 311.9L920.6 312.2M917.7 324.9L920.2 311.9M918.1 325.1L920.6 312.2" class="e"/><path d="M917.7 324.9h0M920.2 311.9h0M918.1 325.1h0M920.6 312.2h0" class="d"/><path d="M918.1 325.1L918.3 325.4L921.0 312.6L920.6 312.2Z" fill="#994d45" stroke="#994d45" stroke-width=".5"/><path d="M918.1 325.1L918.3 325.4L920.0 317.5L919.6 317.1Z" fill="#b2ad9f"/><path d="M919.6 317.1L920.0 317.5" stroke="#7a4a3a" stroke-width=".8" stroke-opacity=".6"/><path d="M918.1 325.1L918.3 325.4M920.6 312.2L921.0 312.6M918.1 325.1L920.6 312.2M918.3 325.4L921.0 312.6" class="e"/><path d="M918.1 325.1h0M920.6 312.2h0M918.3 325.4h0M921.0 312.6h0" class="d"/><path d="M861.7 261.0L921.0 266.3L922.6 252.3L863.4 247.1Z" fill="#c7645a" stroke="#c7645a" stroke-width=".5"/><path d="M861.9 259.3L921.2 264.6" stroke="#7a2a1e" stroke-width="2.2" stroke-opacity=".45"/><path d="M862.4 255.5L921.6 260.7" stroke="#fff" stroke-width="2" stroke-opacity=".08"/><path d="M891.4 263.7L893.0 249.7" stroke="#9a4030" stroke-width="1.6" stroke-opacity=".4"/><path d="M861.7 261.0L921.0 266.3M863.4 247.1L922.6 252.3M921.0 266.3L922.6 252.3" class="e"/><path d="M921.0 266.3h0M922.6 252.3h0" class="d"/><path d="M1066.1 293.7L1068.3 303.8L1073.4 316.1L1071.0 305.4Z" fill="#7f4039" stroke="#7f4039" stroke-width=".5"/><path d="M1066.7 295.1L1068.9 305.3" stroke="#7a2a1e" stroke-width="2.2" stroke-opacity=".45"/><path d="M1068.0 298.4L1070.3 308.7" stroke="#fff" stroke-width="2" stroke-opacity=".08"/><path d="M1066.1 293.7L1068.3 303.8M1071.0 305.4L1073.4 316.1M1066.1 293.7L1071.0 305.4M1068.3 303.8L1073.4 316.1" class="e"/><path d="M1066.1 293.7h0M1071.0 305.4h0M1068.3 303.8h0M1073.4 316.1h0" class="d"/><path d="M801.6 270.4L860.1 275.7L861.7 261.0L803.3 255.8Z" fill="#c8655b" stroke="#c8655b" stroke-width=".5"/><path d="M801.6 270.4L860.1 275.7M803.3 255.8L861.7 261.0" class="e"/><path d="M976.7 245.9L981.5 249.8L995.0 246.0L989.1 241.2Z" fill="#ae584f" stroke="#ae584f" stroke-width=".5"/><path d="M989.1 241.2L995.0 246.0L986.6 248.3L981.4 244.1Z" fill="#cac5b5"/><path d="M981.4 244.1L986.6 248.3" stroke="#7a4a3a" stroke-width=".8" stroke-opacity=".6"/><path d="M978.2 245.3L983.1 249.3" stroke="#7a2a1e" stroke-width="2.2" stroke-opacity=".45"/><path d="M981.7 244.0L986.9 248.3" stroke="#fff" stroke-width="2" stroke-opacity=".08"/><path d="M976.7 245.9L981.5 249.8M989.1 241.2L995.0 246.0M976.7 245.9L989.1 241.2M981.5 249.8L995.0 246.0" class="e"/><path d="M976.7 245.9h0M989.1 241.2h0M981.5 249.8h0M995.0 246.0h0" class="d"/><path d="M941.5 256.5L945.6 258.2L955.0 247.6L949.5 245.3Z" fill="#bd5f56" stroke="#bd5f56" stroke-width=".5"/><path d="M941.5 256.5L945.6 258.2M949.5 245.3L955.0 247.6M941.5 256.5L949.5 245.3M945.6 258.2L955.0 247.6" class="e"/><path d="M941.5 256.5h0M949.5 245.3h0M945.6 258.2h0M955.0 247.6h0" class="d"/><path d="M918.3 325.4L918.6 325.7L921.3 313.0L921.0 312.6Z" fill="#914942" stroke="#914942" stroke-width=".5"/><path d="M918.3 325.4L918.6 325.7L920.2 317.8L920.0 317.5Z" fill="#a9a497"/><path d="M920.0 317.5L920.2 317.8" stroke="#7a4a3a" stroke-width=".8" stroke-opacity=".6"/><path d="M918.3 325.4L918.6 325.7M921.0 312.6L921.3 313.0M918.3 325.4L921.0 312.6M918.6 325.7L921.3 313.0" class="e"/><path d="M918.3 325.4h0M921.0 312.6h0M918.6 325.7h0M921.3 313.0h0" class="d"/><path d="M1044.0 266.1L1047.8 274.4L1058.3 283.2L1054.0 274.0Z" fill="#914942" stroke="#914942" stroke-width=".5"/><path d="M1044.0 266.1L1047.8 274.4M1054.0 274.0L1058.3 283.2M1044.0 266.1L1054.0 274.0M1047.8 274.4L1058.3 283.2" class="e"/><path d="M1044.0 266.1h0M1054.0 274.0h0M1047.8 274.4h0M1058.3 283.2h0" class="d"/><path d="M921.0 266.3L924.5 266.7L927.6 252.9L922.6 252.3Z" fill="#c7645a" stroke="#c7645a" stroke-width=".5"/><path d="M921.2 264.6L924.9 265.1" stroke="#7a2a1e" stroke-width="2.2" stroke-opacity=".45"/><path d="M921.6 260.7L925.7 261.2" stroke="#fff" stroke-width="2" stroke-opacity=".08"/><path d="M921.0 266.3L924.5 266.7M922.6 252.3L927.6 252.9M921.0 266.3L922.6 252.3M924.5 266.7L927.6 252.9" class="e"/><path d="M921.0 266.3h0M922.6 252.3h0M924.5 266.7h0M927.6 252.9h0" class="d"/><path d="M995.0 246.0L999.8 251.0L1013.9 250.8L1008.1 244.8Z" fill="#a7544c" stroke="#a7544c" stroke-width=".5"/><path d="M995.0 246.0L999.8 251.0L1008.5 250.9L1003.1 245.3Z" fill="#c2bdae"/><path d="M1003.1 245.3L1008.5 250.9" stroke="#7a4a3a" stroke-width=".8" stroke-opacity=".6"/><path d="M995.0 246.0L999.8 251.0M1008.1 244.8L1013.9 250.8M995.0 246.0L1008.1 244.8M999.8 251.0L1013.9 250.8" class="e"/><path d="M995.0 246.0h0M1008.1 244.8h0M999.8 251.0h0M1013.9 250.8h0" class="d"/><path d="M918.6 325.7L918.7 326.0L921.5 313.4L921.3 313.0Z" fill="#88443e" stroke="#88443e" stroke-width=".5"/><path d="M918.6 325.7L918.7 326.0L920.4 318.2L920.2 317.8Z" fill="#9e9a8e"/><path d="M920.2 317.8L920.4 318.2" stroke="#7a4a3a" stroke-width=".8" stroke-opacity=".6"/><path d="M918.6 325.7L918.7 326.0M921.3 313.0L921.5 313.4M918.6 325.7L921.3 313.0M918.7 326.0L921.5 313.4" class="e"/><path d="M918.6 325.7h0M921.3 313.0h0M918.7 326.0h0M921.5 313.4h0" class="d"/><path d="M800.3 285.2L858.6 290.7L860.1 275.7L801.6 270.4Z" fill="#c6645a" stroke="#c6645a" stroke-width=".5"/><path d="M814.9 286.6L816.2 271.7" stroke="#9a4030" stroke-width="1.6" stroke-opacity=".4"/><path d="M844.0 289.3L845.5 274.4" stroke="#9a4030" stroke-width="1.6" stroke-opacity=".4"/><path d="M800.3 285.2L858.6 290.7M801.6 270.4L860.1 275.7" class="e"/><path d="M924.5 266.7L927.9 267.4L932.4 253.8L927.6 252.9Z" fill="#c6645a" stroke="#c6645a" stroke-width=".5"/><path d="M924.9 265.1L928.4 265.8" stroke="#7a2a1e" stroke-width="2.2" stroke-opacity=".45"/><path d="M925.7 261.2L929.7 262.0" stroke="#fff" stroke-width="2" stroke-opacity=".08"/><path d="M924.5 266.7L927.9 267.4M927.6 252.9L932.4 253.8M924.5 266.7L927.6 252.9M927.9 267.4L932.4 253.8" class="e"/><path d="M924.5 266.7h0M927.6 252.9h0M927.9 267.4h0M932.4 253.8h0" class="d"/><path d="M960.0 250.2L964.3 253.0L976.7 245.9L971.1 242.3Z" fill="#b55b52" stroke="#b55b52" stroke-width=".5"/><path d="M960.0 250.2L964.3 253.0M971.1 242.3L976.7 245.9M960.0 250.2L971.1 242.3M964.3 253.0L976.7 245.9" class="e"/><path d="M960.0 250.2h0M971.1 242.3h0M964.3 253.0h0M976.7 245.9h0" class="d"/><path d="M918.7 326.0L918.8 326.3L921.6 313.8L921.5 313.4Z" fill="#7f4039" stroke="#7f4039" stroke-width=".5"/><path d="M918.7 326.0L918.8 326.3L920.5 318.5L920.4 318.2Z" fill="#938f84"/><path d="M920.4 318.2L920.5 318.5" stroke="#7a4a3a" stroke-width=".8" stroke-opacity=".6"/><path d="M918.7 326.0L918.8 326.3M921.5 313.4L921.6 313.8M918.7 326.0L921.5 313.4M918.8 326.3L921.6 313.8" class="e"/><path d="M918.7 326.0h0M921.5 313.4h0M918.8 326.3h0M921.6 313.8h0" class="d"/><path d="M931.3 349.0L928.4 367.6L925.8 356.8L928.8 338.4Z" fill="#8c8990" stroke="#8c8990" stroke-width="0.5"/><path d="M918.8 326.3L918.8 326.6L921.6 314.2L921.6 313.8Z" fill="#743a34" stroke="#743a34" stroke-width=".5"/><path d="M918.8 326.3L918.8 326.6L920.5 318.9L920.5 318.5Z" fill="#868378"/><path d="M920.5 318.5L920.5 318.9" stroke="#7a4a3a" stroke-width=".8" stroke-opacity=".6"/><path d="M918.8 326.3L918.8 326.6M921.6 313.8L921.6 314.2M918.8 326.3L921.6 313.8M918.8 326.6L921.6 314.2" class="e"/><path d="M918.8 326.3h0M921.6 313.8h0M918.8 326.6h0M921.6 314.2h0" class="d"/><path d="M927.9 267.4L931.2 268.2L937.1 255.0L932.4 253.8Z" fill="#c46359" stroke="#c46359" stroke-width=".5"/><path d="M928.4 265.8L931.9 266.7" stroke="#7a2a1e" stroke-width="2.2" stroke-opacity=".45"/><path d="M929.7 262.0L933.5 263.0" stroke="#fff" stroke-width="2" stroke-opacity=".08"/><path d="M927.9 267.4L931.2 268.2M932.4 253.8L937.1 255.0M927.9 267.4L932.4 253.8M931.2 268.2L937.1 255.0" class="e"/><path d="M927.9 267.4h0M932.4 253.8h0M931.2 268.2h0M937.1 255.0h0" class="d"/><path d="M857.4 305.0L916.3 310.7L917.8 296.2L858.6 290.7Z" fill="#c16157" stroke="#c16157" stroke-width=".5"/><path d="M857.5 303.3L916.4 308.9" stroke="#7a2a1e" stroke-width="2.2" stroke-opacity=".45"/><path d="M857.9 299.3L916.9 304.9" stroke="#fff" stroke-width="2" stroke-opacity=".08"/><path d="M857.4 305.0L916.3 310.7M858.6 290.7L917.8 296.2M916.3 310.7L917.8 296.2" class="e"/><path d="M916.3 310.7h0M917.8 296.2h0" class="d"/><path d="M1013.9 250.8L1018.2 257.0L1031.9 260.3L1026.9 253.2Z" fill="#a15149" stroke="#a15149" stroke-width=".5"/><path d="M1013.9 250.8L1018.2 257.0M1026.9 253.2L1031.9 260.3M1013.9 250.8L1026.9 253.2M1018.2 257.0L1031.9 260.3" class="e"/><path d="M1013.9 250.8h0M1026.9 253.2h0M1018.2 257.0h0M1031.9 260.3h0" class="d"/><path d="M916.3 310.7L917.0 310.8L919.1 296.4L917.8 296.2Z" fill="#c06157" stroke="#c06157" stroke-width=".5"/><path d="M916.4 308.9L917.2 309.0" stroke="#7a2a1e" stroke-width="2.2" stroke-opacity=".45"/><path d="M916.9 304.9L917.8 305.0" stroke="#fff" stroke-width="2" stroke-opacity=".08"/><path d="M916.3 310.7L917.0 310.8M917.8 296.2L919.1 296.4M916.3 310.7L917.8 296.2M917.0 310.8L919.1 296.4" class="e"/><path d="M916.3 310.7h0M917.8 296.2h0M917.0 310.8h0M919.1 296.4h0" class="d"/><path d="M945.6 258.2L949.3 260.2L960.0 250.2L955.0 247.6Z" fill="#bb5e55" stroke="#bb5e55" stroke-width=".5"/><path d="M945.6 258.2L949.3 260.2M955.0 247.6L960.0 250.2M945.6 258.2L955.0 247.6M949.3 260.2L960.0 250.2" class="e"/><path d="M945.6 258.2h0M955.0 247.6h0M949.3 260.2h0M960.0 250.2h0" class="d"/><path d="M917.0 310.8L917.7 310.9L920.4 296.6L919.1 296.4Z" fill="#bf6056" stroke="#bf6056" stroke-width=".5"/><path d="M917.2 309.0L918.0 309.2" stroke="#7a2a1e" stroke-width="2.2" stroke-opacity=".45"/><path d="M917.8 305.0L918.8 305.2" stroke="#fff" stroke-width="2" stroke-opacity=".08"/><path d="M917.0 310.8L917.7 310.9M919.1 296.4L920.4 296.6M917.0 310.8L919.1 296.4M917.7 310.9L920.4 296.6" class="e"/><path d="M917.0 310.8h0M919.1 296.4h0M917.7 310.9h0M920.4 296.6h0" class="d"/><path d="M931.2 268.2L934.2 269.3L941.5 256.5L937.1 255.0Z" fill="#c26258" stroke="#c26258" stroke-width=".5"/><path d="M931.9 266.7L935.1 267.8" stroke="#7a2a1e" stroke-width="2.2" stroke-opacity=".45"/><path d="M933.5 263.0L937.2 264.2" stroke="#fff" stroke-width="2" stroke-opacity=".08"/><path d="M931.2 268.2L934.2 269.3M937.1 255.0L941.5 256.5M931.2 268.2L937.1 255.0M934.2 269.3L941.5 256.5" class="e"/><path d="M931.2 268.2h0M937.1 255.0h0M934.2 269.3h0M941.5 256.5h0" class="d"/><path d="M917.7 310.9L918.4 311.1L921.6 296.9L920.4 296.6Z" fill="#bc5f55" stroke="#bc5f55" stroke-width=".5"/><path d="M918.0 309.2L918.8 309.4" stroke="#7a2a1e" stroke-width="2.2" stroke-opacity=".45"/><path d="M918.8 305.2L919.7 305.4" stroke="#fff" stroke-width="2" stroke-opacity=".08"/><path d="M917.7 310.9L918.4 311.1M920.4 296.6L921.6 296.9M917.7 310.9L920.4 296.6M918.4 311.1L921.6 296.9" class="e"/><path d="M917.7 310.9h0M920.4 296.6h0M918.4 311.1h0M921.6 296.9h0" class="d"/><path d="M1063.9 340.7L1064.4 364.6L1060.8 375.4L1060.4 351.4Z" fill="#7e7b81" stroke="#7e7b81" stroke-width="0.5"/><path d="M860.1 275.7L919.4 281.2L921.0 266.3L861.7 261.0Z" fill="#c8655b" stroke="#c8655b" stroke-width=".5"/><path d="M889.7 278.5L891.4 263.7" stroke="#9a4030" stroke-width="1.6" stroke-opacity=".4"/><path d="M860.1 275.7L919.4 281.2M861.7 261.0L921.0 266.3M919.4 281.2L921.0 266.3" class="e"/><path d="M919.4 281.2h0M921.0 266.3h0" class="d"/><path d="M918.4 311.1L919.0 311.3L922.7 297.3L921.6 296.9Z" fill="#b95d54" stroke="#b95d54" stroke-width=".5"/><path d="M918.8 309.4L919.5 309.6" stroke="#7a2a1e" stroke-width="2.2" stroke-opacity=".45"/><path d="M919.7 305.4L920.5 305.7" stroke="#fff" stroke-width="2" stroke-opacity=".08"/><path d="M918.4 311.1L919.0 311.3M921.6 296.9L922.7 297.3M918.4 311.1L921.6 296.9M919.0 311.3L922.7 297.3" class="e"/><path d="M918.4 311.1h0M921.6 296.9h0M919.0 311.3h0M922.7 297.3h0" class="d"/><path d="M919.0 311.3L919.6 311.6L923.8 297.8L922.7 297.3Z" fill="#b55b52" stroke="#b55b52" stroke-width=".5"/><path d="M919.5 309.6L920.1 309.9" stroke="#7a2a1e" stroke-width="2.2" stroke-opacity=".45"/><path d="M920.5 305.7L921.3 306.1" stroke="#fff" stroke-width="2" stroke-opacity=".08"/><path d="M919.0 311.3L919.6 311.6M922.7 297.3L923.8 297.8M919.0 311.3L922.7 297.3M919.6 311.6L923.8 297.8" class="e"/><path d="M919.0 311.3h0M922.7 297.3h0M919.6 311.6h0M923.8 297.8h0" class="d"/><path d="M985.6 409.4L981.3 432.0L968.2 428.4L972.8 406.5Z" fill="#bbb7c1" stroke="#bbb7c1" stroke-width="0.5"/><path d="M919.4 281.2L921.6 281.5L924.5 266.7L921.0 266.3Z" fill="#c8655b" stroke="#c8655b" stroke-width=".5"/><path d="M919.4 281.2L921.6 281.5M921.0 266.3L924.5 266.7M919.4 281.2L921.0 266.3M921.6 281.5L924.5 266.7" class="e"/><path d="M919.4 281.2h0M921.0 266.3h0M921.6 281.5h0M924.5 266.7h0" class="d"/><path d="M998.8 410.3L994.7 433.5L981.3 432.0L985.6 409.4Z" fill="#bab6bf" stroke="#bab6bf" stroke-width="0.5"/><path d="M858.6 290.7L917.8 296.2L919.4 281.2L860.1 275.7Z" fill="#c6645a" stroke="#c6645a" stroke-width=".5"/><path d="M858.6 290.7L917.8 296.2M860.1 275.7L919.4 281.2M917.8 296.2L919.4 281.2" class="e"/><path d="M917.8 296.2h0M919.4 281.2h0" class="d"/><path d="M919.6 311.6L920.2 311.9L924.7 298.4L923.8 297.8Z" fill="#b05950" stroke="#b05950" stroke-width=".5"/><path d="M920.1 309.9L920.7 310.3" stroke="#7a2a1e" stroke-width="2.2" stroke-opacity=".45"/><path d="M921.3 306.1L922.0 306.5" stroke="#fff" stroke-width="2" stroke-opacity=".08"/><path d="M919.6 311.6L920.2 311.9M923.8 297.8L924.7 298.4M919.6 311.6L923.8 297.8M920.2 311.9L924.7 298.4" class="e"/><path d="M919.6 311.6h0M923.8 297.8h0M920.2 311.9h0M924.7 298.4h0" class="d"/><path d="M921.6 281.5L923.8 281.9L927.9 267.4L924.5 266.7Z" fill="#c7645a" stroke="#c7645a" stroke-width=".5"/><path d="M921.6 281.5L923.8 281.9M924.5 266.7L927.9 267.4M921.6 281.5L924.5 266.7M923.8 281.9L927.9 267.4" class="e"/><path d="M921.6 281.5h0M924.5 266.7h0M923.8 281.9h0M927.9 267.4h0" class="d"/><path d="M934.2 269.3L937.1 270.5L945.6 258.2L941.5 256.5Z" fill="#c06157" stroke="#c06157" stroke-width=".5"/><path d="M935.1 267.8L938.1 269.0" stroke="#7a2a1e" stroke-width="2.2" stroke-opacity=".45"/><path d="M937.2 264.2L940.5 265.6" stroke="#fff" stroke-width="2" stroke-opacity=".08"/><path d="M934.2 269.3L937.1 270.5M941.5 256.5L945.6 258.2M934.2 269.3L941.5 256.5M937.1 270.5L945.6 258.2" class="e"/><path d="M934.2 269.3h0M941.5 256.5h0M937.1 270.5h0M945.6 258.2h0" class="d"/><path d="M917.8 296.2L919.1 296.4L921.6 281.5L919.4 281.2Z" fill="#c6645a" stroke="#c6645a" stroke-width=".5"/><path d="M917.8 296.2L919.1 296.4M919.4 281.2L921.6 281.5M917.8 296.2L919.4 281.2M919.1 296.4L921.6 281.5" class="e"/><path d="M917.8 296.2h0M919.4 281.2h0M919.1 296.4h0M921.6 281.5h0" class="d"/><path d="M920.2 311.9L920.6 312.2L925.5 299.0L924.7 298.4Z" fill="#aa564d" stroke="#aa564d" stroke-width=".5"/><path d="M920.7 310.3L921.2 310.6" stroke="#7a2a1e" stroke-width="2.2" stroke-opacity=".45"/><path d="M922.0 306.5L922.6 306.9" stroke="#fff" stroke-width="2" stroke-opacity=".08"/><path d="M920.2 311.9L920.6 312.2M924.7 298.4L925.5 299.0M920.2 311.9L924.7 298.4M920.6 312.2L925.5 299.0" class="e"/><path d="M920.2 311.9h0M924.7 298.4h0M920.6 312.2h0M925.5 299.0h0" class="d"/><path d="M923.8 281.9L925.9 282.4L931.2 268.2L927.9 267.4Z" fill="#c56359" stroke="#c56359" stroke-width=".5"/><path d="M923.8 281.9L925.9 282.4M927.9 267.4L931.2 268.2M923.8 281.9L927.9 267.4M925.9 282.4L931.2 268.2" class="e"/><path d="M923.8 281.9h0M927.9 267.4h0M925.9 282.4h0M931.2 268.2h0" class="d"/><path d="M919.1 296.4L920.4 296.6L923.8 281.9L921.6 281.5Z" fill="#c46359" stroke="#c46359" stroke-width=".5"/><path d="M919.1 296.4L920.4 296.6M921.6 281.5L923.8 281.9M919.1 296.4L921.6 281.5M920.4 296.6L923.8 281.9" class="e"/><path d="M919.1 296.4h0M921.6 281.5h0M920.4 296.6h0M923.8 281.9h0" class="d"/><path d="M972.8 406.5L968.2 428.4L956.0 423.0L960.7 401.7Z" fill="#bab6bf" stroke="#bab6bf" stroke-width="0.5"/><path d="M920.4 296.6L921.6 296.9L925.9 282.4L923.8 281.9Z" fill="#c26258" stroke="#c26258" stroke-width=".5"/><path d="M920.4 296.6L921.6 296.9M923.8 281.9L925.9 282.4M920.4 296.6L923.8 281.9M921.6 296.9L925.9 282.4" class="e"/><path d="M920.4 296.6h0M923.8 281.9h0M921.6 296.9h0M925.9 282.4h0" class="d"/><path d="M920.6 312.2L921.0 312.6L926.2 299.6L925.5 299.0Z" fill="#a3524a" stroke="#a3524a" stroke-width=".5"/><path d="M921.2 310.6L921.6 311.0" stroke="#7a2a1e" stroke-width="2.2" stroke-opacity=".45"/><path d="M922.6 306.9L923.1 307.4" stroke="#fff" stroke-width="2" stroke-opacity=".08"/><path d="M920.6 312.2L921.0 312.6M925.5 299.0L926.2 299.6M920.6 312.2L925.5 299.0M921.0 312.6L926.2 299.6" class="e"/><path d="M920.6 312.2h0M925.5 299.0h0M921.0 312.6h0M926.2 299.6h0" class="d"/><path d="M1011.9 409.2L1008.2 432.9L994.7 433.5L998.8 410.3Z" fill="#b6b3bc" stroke="#b6b3bc" stroke-width="0.5"/><path d="M964.3 253.0L968.0 256.1L981.5 249.8L976.7 245.9Z" fill="#b35a51" stroke="#b35a51" stroke-width=".5"/><path d="M964.3 253.0L968.0 256.1M976.7 245.9L981.5 249.8M964.3 253.0L976.7 245.9M968.0 256.1L981.5 249.8" class="e"/><path d="M964.3 253.0h0M976.7 245.9h0M968.0 256.1h0M981.5 249.8h0" class="d"/><path d="M925.9 282.4L927.9 283.1L934.2 269.3L931.2 268.2Z" fill="#c26258" stroke="#c26258" stroke-width=".5"/><path d="M925.9 282.4L927.9 283.1M931.2 268.2L934.2 269.3M925.9 282.4L931.2 268.2M927.9 283.1L934.2 269.3" class="e"/><path d="M925.9 282.4h0M931.2 268.2h0M927.9 283.1h0M934.2 269.3h0" class="d"/><path d="M921.6 296.9L922.7 297.3L927.9 283.1L925.9 282.4Z" fill="#bf6057" stroke="#bf6057" stroke-width=".5"/><path d="M921.6 296.9L922.7 297.3M925.9 282.4L927.9 283.1M921.6 296.9L925.9 282.4M922.7 297.3L927.9 283.1" class="e"/><path d="M921.6 296.9h0M925.9 282.4h0M922.7 297.3h0M927.9 283.1h0" class="d"/><path d="M949.3 260.2L952.5 262.3L964.3 253.0L960.0 250.2Z" fill="#b85d53" stroke="#b85d53" stroke-width=".5"/><path d="M949.3 260.2L952.5 262.3M960.0 250.2L964.3 253.0M949.3 260.2L960.0 250.2M952.5 262.3L964.3 253.0" class="e"/><path d="M949.3 260.2h0M960.0 250.2h0M952.5 262.3h0M964.3 253.0h0" class="d"/><path d="M921.0 312.6L921.3 313.0L926.7 300.3L926.2 299.6Z" fill="#9c4f47" stroke="#9c4f47" stroke-width=".5"/><path d="M921.6 311.0L921.9 311.5" stroke="#7a2a1e" stroke-width="2.2" stroke-opacity=".45"/><path d="M923.1 307.4L923.5 307.9" stroke="#fff" stroke-width="2" stroke-opacity=".08"/><path d="M921.0 312.6L921.3 313.0M926.2 299.6L926.7 300.3M921.0 312.6L926.2 299.6M921.3 313.0L926.7 300.3" class="e"/><path d="M921.0 312.6h0M926.2 299.6h0M921.3 313.0h0M926.7 300.3h0" class="d"/><path d="M981.5 249.8L985.3 253.9L999.8 251.0L995.0 246.0Z" fill="#ad574e" stroke="#ad574e" stroke-width=".5"/><path d="M995.0 246.0L999.8 251.0L990.8 252.8L986.6 248.3Z" fill="#c9c4b4"/><path d="M986.6 248.3L990.8 252.8" stroke="#7a4a3a" stroke-width=".8" stroke-opacity=".6"/><path d="M983.1 249.3L987.0 253.6" stroke="#7a2a1e" stroke-width="2.2" stroke-opacity=".45"/><path d="M986.9 248.3L991.1 252.8" stroke="#fff" stroke-width="2" stroke-opacity=".08"/><path d="M981.5 249.8L985.3 253.9M995.0 246.0L999.8 251.0M981.5 249.8L995.0 246.0M985.3 253.9L999.8 251.0" class="e"/><path d="M981.5 249.8h0M995.0 246.0h0M985.3 253.9h0M999.8 251.0h0" class="d"/><path d="M922.7 297.3L923.8 297.8L929.7 283.9L927.9 283.1Z" fill="#bb5e55" stroke="#bb5e55" stroke-width=".5"/><path d="M922.7 297.3L923.8 297.8M927.9 283.1L929.7 283.9M922.7 297.3L927.9 283.1M923.8 297.8L929.7 283.9" class="e"/><path d="M922.7 297.3h0M927.9 283.1h0M923.8 297.8h0M929.7 283.9h0" class="d"/><path d="M937.1 270.5L939.6 271.9L949.3 260.2L945.6 258.2Z" fill="#bc5f55" stroke="#bc5f55" stroke-width=".5"/><path d="M938.1 269.0L940.8 270.5" stroke="#7a2a1e" stroke-width="2.2" stroke-opacity=".45"/><path d="M940.5 265.6L943.5 267.2" stroke="#fff" stroke-width="2" stroke-opacity=".08"/><path d="M937.1 270.5L939.6 271.9M945.6 258.2L949.3 260.2M937.1 270.5L945.6 258.2M939.6 271.9L949.3 260.2" class="e"/><path d="M937.1 270.5h0M945.6 258.2h0M939.6 271.9h0M949.3 260.2h0" class="d"/><path d="M927.9 283.1L929.7 283.9L937.1 270.5L934.2 269.3Z" fill="#bf6057" stroke="#bf6057" stroke-width=".5"/><path d="M927.9 283.1L929.7 283.9M934.2 269.3L937.1 270.5M927.9 283.1L934.2 269.3M929.7 283.9L937.1 270.5" class="e"/><path d="M927.9 283.1h0M934.2 269.3h0M929.7 283.9h0M937.1 270.5h0" class="d"/><path d="M1058.3 283.2L1060.2 292.6L1068.3 303.8L1066.1 293.7Z" fill="#8d4740" stroke="#8d4740" stroke-width=".5"/><path d="M1058.3 283.2L1060.2 292.6M1066.1 293.7L1068.3 303.8M1058.3 283.2L1066.1 293.7M1060.2 292.6L1068.3 303.8" class="e"/><path d="M1058.3 283.2h0M1066.1 293.7h0M1060.2 292.6h0M1068.3 303.8h0" class="d"/><path d="M921.3 313.0L921.5 313.4L927.1 300.9L926.7 300.3Z" fill="#944a43" stroke="#944a43" stroke-width=".5"/><path d="M921.9 311.5L922.1 311.9" stroke="#7a2a1e" stroke-width="2.2" stroke-opacity=".45"/><path d="M923.5 307.9L923.7 308.4" stroke="#fff" stroke-width="2" stroke-opacity=".08"/><path d="M921.3 313.0L921.5 313.4M926.7 300.3L927.1 300.9M921.3 313.0L926.7 300.3M921.5 313.4L927.1 300.9" class="e"/><path d="M921.3 313.0h0M926.7 300.3h0M921.5 313.4h0M927.1 300.9h0" class="d"/><path d="M1031.9 260.3L1035.2 267.7L1047.8 274.4L1044.0 266.1Z" fill="#9c4f47" stroke="#9c4f47" stroke-width=".5"/><path d="M1033.4 261.0L1036.7 268.5" stroke="#7a2a1e" stroke-width="2.2" stroke-opacity=".45"/><path d="M1036.8 262.6L1040.3 270.4" stroke="#fff" stroke-width="2" stroke-opacity=".08"/><path d="M1031.9 260.3L1035.2 267.7M1044.0 266.1L1047.8 274.4M1031.9 260.3L1044.0 266.1M1035.2 267.7L1047.8 274.4" class="e"/><path d="M1031.9 260.3h0M1044.0 266.1h0M1035.2 267.7h0M1047.8 274.4h0" class="d"/><path d="M960.7 401.7L956.0 423.0L945.0 415.9L949.9 395.2Z" fill="#b7b3bc" stroke="#b7b3bc" stroke-width="0.5"/><path d="M923.8 297.8L924.7 298.4L931.3 284.8L929.7 283.9Z" fill="#b75c53" stroke="#b75c53" stroke-width=".5"/><path d="M923.8 297.8L924.7 298.4M929.7 283.9L931.3 284.8M923.8 297.8L929.7 283.9M924.7 298.4L931.3 284.8" class="e"/><path d="M923.8 297.8h0M929.7 283.9h0M924.7 298.4h0M931.3 284.8h0" class="d"/><path d="M921.5 313.4L921.6 313.8L927.3 301.6L927.1 300.9Z" fill="#8b463f" stroke="#8b463f" stroke-width=".5"/><path d="M922.1 311.9L922.3 312.3" stroke="#7a2a1e" stroke-width="2.2" stroke-opacity=".45"/><path d="M923.7 308.4L923.8 308.9" stroke="#fff" stroke-width="2" stroke-opacity=".08"/><path d="M921.5 313.4L921.6 313.8M927.1 300.9L927.3 301.6M921.5 313.4L927.1 300.9M921.6 313.8L927.3 301.6" class="e"/><path d="M921.5 313.4h0M927.1 300.9h0M921.6 313.8h0M927.3 301.6h0" class="d"/><path d="M928.8 338.4L925.8 356.8L925.7 345.7L928.7 327.5Z" fill="#7c7a80" stroke="#7c7a80" stroke-width="0.5"/><path d="M1024.5 406.0L1021.0 430.2L1008.2 432.9L1011.9 409.2Z" fill="#b1adb6" stroke="#b1adb6" stroke-width="0.5"/><path d="M929.7 283.9L931.3 284.8L939.6 271.9L937.1 270.5Z" fill="#bb5e55" stroke="#bb5e55" stroke-width=".5"/><path d="M929.7 283.9L931.3 284.8M937.1 270.5L939.6 271.9M929.7 283.9L937.1 270.5M931.3 284.8L939.6 271.9" class="e"/><path d="M929.7 283.9h0M937.1 270.5h0M931.3 284.8h0M939.6 271.9h0" class="d"/><path d="M924.7 298.4L925.5 299.0L932.7 285.8L931.3 284.8Z" fill="#b25950" stroke="#b25950" stroke-width=".5"/><path d="M924.7 298.4L925.5 299.0M931.3 284.8L932.7 285.8M924.7 298.4L931.3 284.8M925.5 299.0L932.7 285.8" class="e"/><path d="M924.7 298.4h0M931.3 284.8h0M925.5 299.0h0M932.7 285.8h0" class="d"/><path d="M921.6 313.8L921.6 314.2L927.3 302.3L927.3 301.6Z" fill="#81413a" stroke="#81413a" stroke-width=".5"/><path d="M922.3 312.3L922.3 312.7" stroke="#7a2a1e" stroke-width="2.2" stroke-opacity=".45"/><path d="M923.8 308.9L923.9 309.4" stroke="#fff" stroke-width="2" stroke-opacity=".08"/><path d="M921.6 313.8L921.6 314.2M927.3 301.6L927.3 302.3M921.6 313.8L927.3 301.6M921.6 314.2L927.3 302.3" class="e"/><path d="M921.6 313.8h0M927.3 301.6h0M921.6 314.2h0M927.3 302.3h0" class="d"/><path d="M999.8 251.0L1003.3 256.3L1018.2 257.0L1013.9 250.8Z" fill="#a8554c" stroke="#a8554c" stroke-width=".5"/><path d="M999.8 251.0L1003.3 256.3L1012.5 256.7L1008.5 250.9Z" fill="#c3beaf"/><path d="M1008.5 250.9L1012.5 256.7" stroke="#7a4a3a" stroke-width=".8" stroke-opacity=".6"/><path d="M999.8 251.0L1003.3 256.3M1013.9 250.8L1018.2 257.0M999.8 251.0L1013.9 250.8M1003.3 256.3L1018.2 257.0" class="e"/><path d="M999.8 251.0h0M1013.9 250.8h0M1003.3 256.3h0M1018.2 257.0h0" class="d"/><path d="M939.6 271.9L941.8 273.4L952.5 262.3L949.3 260.2Z" fill="#b95d54" stroke="#b95d54" stroke-width=".5"/><path d="M940.8 270.5L943.1 272.1" stroke="#7a2a1e" stroke-width="2.2" stroke-opacity=".45"/><path d="M943.5 267.2L946.1 269.0" stroke="#fff" stroke-width="2" stroke-opacity=".08"/><path d="M939.6 271.9L941.8 273.4M949.3 260.2L952.5 262.3M939.6 271.9L949.3 260.2M941.8 273.4L952.5 262.3" class="e"/><path d="M939.6 271.9h0M949.3 260.2h0M941.8 273.4h0M952.5 262.3h0" class="d"/><path d="M925.5 299.0L926.2 299.6L933.9 286.9L932.7 285.8Z" fill="#ac564e" stroke="#ac564e" stroke-width=".5"/><path d="M925.5 299.0L926.2 299.6M932.7 285.8L933.9 286.9M925.5 299.0L932.7 285.8M926.2 299.6L933.9 286.9" class="e"/><path d="M925.5 299.0h0M932.7 285.8h0M926.2 299.6h0M933.9 286.9h0" class="d"/><path d="M1064.8 329.6L1065.4 353.2L1064.4 364.6L1063.9 340.7Z" fill="#716e74" stroke="#716e74" stroke-width="0.5"/><path d="M952.5 262.3L955.2 264.7L968.0 256.1L964.3 253.0Z" fill="#b55b52" stroke="#b55b52" stroke-width=".5"/><path d="M952.5 262.3L955.2 264.7M964.3 253.0L968.0 256.1M952.5 262.3L964.3 253.0M955.2 264.7L968.0 256.1" class="e"/><path d="M952.5 262.3h0M964.3 253.0h0M955.2 264.7h0M968.0 256.1h0" class="d"/><path d="M931.3 284.8L932.7 285.8L941.8 273.4L939.6 271.9Z" fill="#b75c53" stroke="#b75c53" stroke-width=".5"/><path d="M931.3 284.8L932.7 285.8M939.6 271.9L941.8 273.4M931.3 284.8L939.6 271.9M932.7 285.8L941.8 273.4" class="e"/><path d="M931.3 284.8h0M939.6 271.9h0M932.7 285.8h0M941.8 273.4h0" class="d"/><path d="M926.2 299.6L926.7 300.3L934.8 288.0L933.9 286.9Z" fill="#a5534b" stroke="#a5534b" stroke-width=".5"/><path d="M926.2 299.6L926.7 300.3M933.9 286.9L934.8 288.0M926.2 299.6L933.9 286.9M926.7 300.3L934.8 288.0" class="e"/><path d="M926.2 299.6h0M933.9 286.9h0M926.7 300.3h0M934.8 288.0h0" class="d"/><path d="M949.9 395.2L945.0 415.9L935.7 407.3L940.8 387.2Z" fill="#b1adb6" stroke="#b1adb6" stroke-width="0.5"/><path d="M968.0 256.1L970.9 259.4L985.3 253.9L981.5 249.8Z" fill="#b15950" stroke="#b15950" stroke-width=".5"/><path d="M968.0 256.1L970.9 259.4M981.5 249.8L985.3 253.9M968.0 256.1L981.5 249.8M970.9 259.4L985.3 253.9" class="e"/><path d="M968.0 256.1h0M981.5 249.8h0M970.9 259.4h0M985.3 253.9h0" class="d"/><path d="M932.7 285.8L933.9 286.9L943.7 275.1L941.8 273.4Z" fill="#b15950" stroke="#b15950" stroke-width=".5"/><path d="M932.7 285.8L933.9 286.9M941.8 273.4L943.7 275.1M932.7 285.8L941.8 273.4M933.9 286.9L943.7 275.1" class="e"/><path d="M932.7 285.8h0M941.8 273.4h0M933.9 286.9h0M943.7 275.1h0" class="d"/><path d="M941.8 273.4L943.7 275.1L955.2 264.7L952.5 262.3Z" fill="#b55b52" stroke="#b55b52" stroke-width=".5"/><path d="M943.1 272.1L945.1 273.8" stroke="#7a2a1e" stroke-width="2.2" stroke-opacity=".45"/><path d="M946.1 269.0L948.3 270.9" stroke="#fff" stroke-width="2" stroke-opacity=".08"/><path d="M941.8 273.4L943.7 275.1M952.5 262.3L955.2 264.7M941.8 273.4L952.5 262.3M943.7 275.1L955.2 264.7" class="e"/><path d="M941.8 273.4h0M952.5 262.3h0M943.7 275.1h0M955.2 264.7h0" class="d"/><path d="M1036.1 400.8L1032.9 425.4L1021.0 430.2L1024.5 406.0Z" fill="#a9a5ae" stroke="#a9a5ae" stroke-width="0.5"/><path d="M926.7 300.3L927.1 300.9L935.4 289.2L934.8 288.0Z" fill="#9e4f47" stroke="#9e4f47" stroke-width=".5"/><path d="M926.7 300.3L927.1 300.9M934.8 288.0L935.4 289.2M926.7 300.3L934.8 288.0M927.1 300.9L935.4 289.2" class="e"/><path d="M926.7 300.3h0M934.8 288.0h0M927.1 300.9h0M935.4 289.2h0" class="d"/><path d="M1018.2 257.0L1020.9 263.4L1035.2 267.7L1031.9 260.3Z" fill="#a4534a" stroke="#a4534a" stroke-width=".5"/><path d="M1018.2 257.0L1020.9 263.4M1031.9 260.3L1035.2 267.7M1018.2 257.0L1031.9 260.3M1020.9 263.4L1035.2 267.7" class="e"/><path d="M1018.2 257.0h0M1031.9 260.3h0M1020.9 263.4h0M1035.2 267.7h0" class="d"/><path d="M1047.8 274.4L1049.5 282.9L1060.2 292.6L1058.3 283.2Z" fill="#984d45" stroke="#984d45" stroke-width=".5"/><path d="M1047.8 274.4L1049.5 282.9M1058.3 283.2L1060.2 292.6M1047.8 274.4L1058.3 283.2M1049.5 282.9L1060.2 292.6" class="e"/><path d="M1047.8 274.4h0M1058.3 283.2h0M1049.5 282.9h0M1060.2 292.6h0" class="d"/><path d="M927.1 300.9L927.3 301.6L935.7 290.4L935.4 289.2Z" fill="#964b44" stroke="#964b44" stroke-width=".5"/><path d="M927.1 300.9L927.3 301.6M935.4 289.2L935.7 290.4M927.1 300.9L935.4 289.2M927.3 301.6L935.7 290.4" class="e"/><path d="M927.1 300.9h0M935.4 289.2h0M927.3 301.6h0M935.7 290.4h0" class="d"/><path d="M985.3 253.9L988.1 258.2L1003.3 256.3L999.8 251.0Z" fill="#ad574e" stroke="#ad574e" stroke-width=".5"/><path d="M999.8 251.0L1003.3 256.3L993.9 257.5L990.8 252.8Z" fill="#c9c3b4"/><path d="M990.8 252.8L993.9 257.5" stroke="#7a4a3a" stroke-width=".8" stroke-opacity=".6"/><path d="M987.0 253.6L989.9 258.0" stroke="#7a2a1e" stroke-width="2.2" stroke-opacity=".45"/><path d="M991.1 252.8L994.2 257.4" stroke="#fff" stroke-width="2" stroke-opacity=".08"/><path d="M985.3 253.9L988.1 258.2M999.8 251.0L1003.3 256.3M985.3 253.9L999.8 251.0M988.1 258.2L1003.3 256.3" class="e"/><path d="M985.3 253.9h0M999.8 251.0h0M988.1 258.2h0M1003.3 256.3h0" class="d"/><path d="M933.9 286.9L934.8 288.0L945.1 276.8L943.7 275.1Z" fill="#ac564e" stroke="#ac564e" stroke-width=".5"/><path d="M933.9 286.9L934.8 288.0M943.7 275.1L945.1 276.8M933.9 286.9L943.7 275.1M934.8 288.0L945.1 276.8" class="e"/><path d="M933.9 286.9h0M943.7 275.1h0M934.8 288.0h0M945.1 276.8h0" class="d"/><path d="M955.2 264.7L957.3 267.1L970.9 259.4L968.0 256.1Z" fill="#b25a51" stroke="#b25a51" stroke-width=".5"/><path d="M955.2 264.7L957.3 267.1M968.0 256.1L970.9 259.4M955.2 264.7L968.0 256.1M957.3 267.1L970.9 259.4" class="e"/><path d="M955.2 264.7h0M968.0 256.1h0M957.3 267.1h0M970.9 259.4h0" class="d"/><path d="M918.8 326.6L915.6 344.3L918.4 331.8L921.6 314.2Z" fill="#68342f" stroke="#68342f" stroke-width=".5"/><path d="M918.8 326.6L915.6 344.3L917.4 336.6L920.5 318.9Z" fill="#79766c"/><path d="M920.5 318.9L917.4 336.6" stroke="#7a4a3a" stroke-width=".8" stroke-opacity=".6"/><path d="M918.8 326.6L915.6 344.3M921.6 314.2L918.4 331.8M918.8 326.6L921.6 314.2M915.6 344.3L918.4 331.8" class="e"/><path d="M918.8 326.6h0M921.6 314.2h0M915.6 344.3h0M918.4 331.8h0" class="d"/><path d="M943.7 275.1L945.1 276.8L957.3 267.1L955.2 264.7Z" fill="#b05950" stroke="#b05950" stroke-width=".5"/><path d="M945.1 273.8L946.6 275.6" stroke="#7a2a1e" stroke-width="2.2" stroke-opacity=".45"/><path d="M948.3 270.9L950.0 272.9" stroke="#fff" stroke-width="2" stroke-opacity=".08"/><path d="M943.7 275.1L945.1 276.8M955.2 264.7L957.3 267.1M943.7 275.1L955.2 264.7M945.1 276.8L957.3 267.1" class="e"/><path d="M943.7 275.1h0M955.2 264.7h0M945.1 276.8h0M957.3 267.1h0" class="d"/><path d="M927.3 301.6L927.3 302.3L935.8 291.5L935.7 290.4Z" fill="#8d4740" stroke="#8d4740" stroke-width=".5"/><path d="M927.3 301.6L927.3 302.3M935.7 290.4L935.8 291.5M927.3 301.6L935.7 290.4M927.3 302.3L935.8 291.5" class="e"/><path d="M927.3 301.6h0M935.7 290.4h0M927.3 302.3h0M935.8 291.5h0" class="d"/><path d="M940.8 387.2L935.7 407.3L928.3 397.5L933.5 377.9Z" fill="#a9a5ae" stroke="#a9a5ae" stroke-width="0.5"/><path d="M934.8 288.0L935.4 289.2L946.1 278.6L945.1 276.8Z" fill="#a6534b" stroke="#a6534b" stroke-width=".5"/><path d="M934.8 288.0L935.4 289.2M945.1 276.8L946.1 278.6M934.8 288.0L945.1 276.8M935.4 289.2L946.1 278.6" class="e"/><path d="M934.8 288.0h0M945.1 276.8h0M935.4 289.2h0M946.1 278.6h0" class="d"/><path d="M970.9 259.4L973.0 262.7L988.1 258.2L985.3 253.9Z" fill="#af584f" stroke="#af584f" stroke-width=".5"/><path d="M970.9 259.4L973.0 262.7M985.3 253.9L988.1 258.2M970.9 259.4L985.3 253.9M973.0 262.7L988.1 258.2" class="e"/><path d="M970.9 259.4h0M985.3 253.9h0M973.0 262.7h0M988.1 258.2h0" class="d"/><path d="M1073.4 316.1L1074.2 339.8L1076.3 353.0L1075.4 328.9Z" fill="#783c36" stroke="#783c36" stroke-width=".5"/><path d="M1073.4 316.1L1074.2 339.8M1075.4 328.9L1076.3 353.0M1073.4 316.1L1075.4 328.9M1074.2 339.8L1076.3 353.0" class="e"/><path d="M1073.4 316.1h0M1075.4 328.9h0M1074.2 339.8h0M1076.3 353.0h0" class="d"/><path d="M1046.3 393.8L1043.4 418.8L1032.9 425.4L1036.1 400.8Z" fill="#9f9ca3" stroke="#9f9ca3" stroke-width="0.5"/><path d="M1003.3 256.3L1005.5 261.7L1020.9 263.4L1018.2 257.0Z" fill="#a9554d" stroke="#a9554d" stroke-width=".5"/><path d="M1003.3 256.3L1005.5 261.7L1015.0 262.8L1012.5 256.7Z" fill="#c5c0b0"/><path d="M1012.5 256.7L1015.0 262.8" stroke="#7a4a3a" stroke-width=".8" stroke-opacity=".6"/><path d="M1003.3 256.3L1005.5 261.7M1018.2 257.0L1020.9 263.4M1003.3 256.3L1018.2 257.0M1005.5 261.7L1020.9 263.4" class="e"/><path d="M1003.3 256.3h0M1018.2 257.0h0M1005.5 261.7h0M1020.9 263.4h0" class="d"/><path d="M945.1 276.8L946.1 278.6L958.8 269.6L957.3 267.1Z" fill="#ab564d" stroke="#ab564d" stroke-width=".5"/><path d="M946.6 275.6L947.6 277.5" stroke="#7a2a1e" stroke-width="2.2" stroke-opacity=".45"/><path d="M950.0 272.9L951.2 275.0" stroke="#fff" stroke-width="2" stroke-opacity=".08"/><path d="M945.1 276.8L946.1 278.6M957.3 267.1L958.8 269.6M945.1 276.8L957.3 267.1M946.1 278.6L958.8 269.6" class="e"/><path d="M945.1 276.8h0M957.3 267.1h0M946.1 278.6h0M958.8 269.6h0" class="d"/><path d="M935.4 289.2L935.7 290.4L946.7 280.4L946.1 278.6Z" fill="#9f5048" stroke="#9f5048" stroke-width=".5"/><path d="M935.4 289.2L935.7 290.4M946.1 278.6L946.7 280.4M935.4 289.2L946.1 278.6M935.7 290.4L946.7 280.4" class="e"/><path d="M935.4 289.2h0M946.1 278.6h0M935.7 290.4h0M946.7 280.4h0" class="d"/><path d="M957.3 267.1L958.8 269.6L973.0 262.7L970.9 259.4Z" fill="#ae584f" stroke="#ae584f" stroke-width=".5"/><path d="M957.3 267.1L958.8 269.6M970.9 259.4L973.0 262.7M957.3 267.1L970.9 259.4M958.8 269.6L973.0 262.7" class="e"/><path d="M957.3 267.1h0M970.9 259.4h0M958.8 269.6h0M973.0 262.7h0" class="d"/><path d="M1035.2 267.7L1036.6 275.2L1049.5 282.9L1047.8 274.4Z" fill="#a15149" stroke="#a15149" stroke-width=".5"/><path d="M1036.7 268.5L1038.1 276.2" stroke="#7a2a1e" stroke-width="2.2" stroke-opacity=".45"/><path d="M1040.3 270.4L1041.7 278.3" stroke="#fff" stroke-width="2" stroke-opacity=".08"/><path d="M1035.2 267.7L1036.6 275.2M1047.8 274.4L1049.5 282.9M1035.2 267.7L1047.8 274.4M1036.6 275.2L1049.5 282.9" class="e"/><path d="M1035.2 267.7h0M1047.8 274.4h0M1036.6 275.2h0M1049.5 282.9h0" class="d"/><path d="M935.7 290.4L935.8 291.5L946.8 282.2L946.7 280.4Z" fill="#984c45" stroke="#984c45" stroke-width=".5"/><path d="M935.7 290.4L935.8 291.5M946.7 280.4L946.8 282.2M935.7 290.4L946.7 280.4M935.8 291.5L946.8 282.2" class="e"/><path d="M935.7 290.4h0M946.7 280.4h0M935.8 291.5h0M946.8 282.2h0" class="d"/><path d="M933.5 377.9L928.3 397.5L923.1 386.9L928.4 367.6Z" fill="#9f9ba3" stroke="#9f9ba3" stroke-width="0.5"/><path d="M988.1 258.2L989.7 262.6L1005.5 261.7L1003.3 256.3Z" fill="#ac574e" stroke="#ac574e" stroke-width=".5"/><path d="M1003.3 256.3L1005.5 261.7L995.7 262.3L993.9 257.5Z" fill="#c8c3b3"/><path d="M993.9 257.5L995.7 262.3" stroke="#7a4a3a" stroke-width=".8" stroke-opacity=".6"/><path d="M989.9 258.0L991.6 262.5" stroke="#7a2a1e" stroke-width="2.2" stroke-opacity=".45"/><path d="M994.2 257.4L996.0 262.3" stroke="#fff" stroke-width="2" stroke-opacity=".08"/><path d="M988.1 258.2L989.7 262.6M1003.3 256.3L1005.5 261.7M988.1 258.2L1003.3 256.3M989.7 262.6L1005.5 261.7" class="e"/><path d="M988.1 258.2h0M1003.3 256.3h0M989.7 262.6h0M1005.5 261.7h0" class="d"/><path d="M946.1 278.6L946.7 280.4L959.7 272.2L958.8 269.6Z" fill="#a6534b" stroke="#a6534b" stroke-width=".5"/><path d="M947.6 277.5L948.2 279.4" stroke="#7a2a1e" stroke-width="2.2" stroke-opacity=".45"/><path d="M951.2 275.0L951.9 277.1" stroke="#fff" stroke-width="2" stroke-opacity=".08"/><path d="M946.1 278.6L946.7 280.4M958.8 269.6L959.7 272.2M946.1 278.6L958.8 269.6M946.7 280.4L959.7 272.2" class="e"/><path d="M946.1 278.6h0M958.8 269.6h0M946.7 280.4h0M959.7 272.2h0" class="d"/><path d="M921.6 314.2L918.4 331.8L924.2 320.0L927.3 302.3Z" fill="#783c36" stroke="#783c36" stroke-width=".5"/><path d="M922.3 312.7L919.1 330.4" stroke="#7a2a1e" stroke-width="2.2" stroke-opacity=".45"/><path d="M923.9 309.4L920.8 327.1" stroke="#fff" stroke-width="2" stroke-opacity=".08"/><path d="M921.6 314.2L918.4 331.8M927.3 302.3L924.2 320.0M921.6 314.2L927.3 302.3M918.4 331.8L924.2 320.0" class="e"/><path d="M921.6 314.2h0M927.3 302.3h0M918.4 331.8h0M924.2 320.0h0" class="d"/><path d="M1054.7 385.3L1051.9 410.4L1043.4 418.8L1046.3 393.8Z" fill="#939097" stroke="#939097" stroke-width="0.5"/><path d="M973.0 262.7L974.2 266.2L989.7 262.6L988.1 258.2Z" fill="#ac574e" stroke="#ac574e" stroke-width=".5"/><path d="M973.0 262.7L974.2 266.2M988.1 258.2L989.7 262.6M973.0 262.7L988.1 258.2M974.2 266.2L989.7 262.6" class="e"/><path d="M973.0 262.7h0M988.1 258.2h0M974.2 266.2h0M989.7 262.6h0" class="d"/><path d="M958.8 269.6L959.7 272.2L974.2 266.2L973.0 262.7Z" fill="#aa564d" stroke="#aa564d" stroke-width=".5"/><path d="M958.8 269.6L959.7 272.2M973.0 262.7L974.2 266.2M958.8 269.6L973.0 262.7M959.7 272.2L974.2 266.2" class="e"/><path d="M958.8 269.6h0M973.0 262.7h0M959.7 272.2h0M974.2 266.2h0" class="d"/><path d="M1020.9 263.4L1021.9 269.9L1036.6 275.2L1035.2 267.7Z" fill="#a7544c" stroke="#a7544c" stroke-width=".5"/><path d="M1020.9 263.4L1021.9 269.9M1035.2 267.7L1036.6 275.2M1020.9 263.4L1035.2 267.7M1021.9 269.9L1036.6 275.2" class="e"/><path d="M1020.9 263.4h0M1035.2 267.7h0M1021.9 269.9h0M1036.6 275.2h0" class="d"/><path d="M1068.3 303.8L1068.9 327.0L1074.2 339.8L1073.4 316.1Z" fill="#88443d" stroke="#88443d" stroke-width=".5"/><path d="M1068.9 305.3L1069.6 328.5" stroke="#7a2a1e" stroke-width="2.2" stroke-opacity=".45"/><path d="M1070.3 308.7L1071.0 332.1" stroke="#fff" stroke-width="2" stroke-opacity=".08"/><path d="M1068.3 303.8L1068.9 327.0M1073.4 316.1L1074.2 339.8M1068.3 303.8L1073.4 316.1M1068.9 327.0L1074.2 339.8" class="e"/><path d="M1068.3 303.8h0M1073.4 316.1h0M1068.9 327.0h0M1074.2 339.8h0" class="d"/><path d="M946.7 280.4L946.8 282.2L959.8 274.8L959.7 272.2Z" fill="#a05148" stroke="#a05148" stroke-width=".5"/><path d="M948.2 279.4L948.3 281.3" stroke="#7a2a1e" stroke-width="2.2" stroke-opacity=".45"/><path d="M951.9 277.1L952.0 279.3" stroke="#fff" stroke-width="2" stroke-opacity=".08"/><path d="M946.7 280.4L946.8 282.2M959.7 272.2L959.8 274.8M946.7 280.4L959.7 272.2M946.8 282.2L959.8 274.8" class="e"/><path d="M946.7 280.4h0M959.7 272.2h0M946.8 282.2h0M959.8 274.8h0" class="d"/><path d="M1005.5 261.7L1006.3 267.1L1021.9 269.9L1020.9 263.4Z" fill="#aa564d" stroke="#aa564d" stroke-width=".5"/><path d="M1005.5 261.7L1006.3 267.1L1016.0 268.9L1015.0 262.8Z" fill="#c6c1b1"/><path d="M1015.0 262.8L1016.0 268.9" stroke="#7a4a3a" stroke-width=".8" stroke-opacity=".6"/><path d="M1005.5 261.7L1006.3 267.1M1020.9 263.4L1021.9 269.9M1005.5 261.7L1020.9 263.4M1006.3 267.1L1021.9 269.9" class="e"/><path d="M1005.5 261.7h0M1020.9 263.4h0M1006.3 267.1h0M1021.9 269.9h0" class="d"/><path d="M928.4 367.6L923.1 386.9L920.4 375.8L925.8 356.8Z" fill="#928f96" stroke="#928f96" stroke-width="0.5"/><path d="M959.7 272.2L959.8 274.8L974.5 269.7L974.2 266.2Z" fill="#a6544b" stroke="#a6544b" stroke-width=".5"/><path d="M959.7 272.2L959.8 274.8M974.2 266.2L974.5 269.7M959.7 272.2L974.2 266.2M959.8 274.8L974.5 269.7" class="e"/><path d="M959.7 272.2h0M974.2 266.2h0M959.8 274.8h0M974.5 269.7h0" class="d"/><path d="M989.7 262.6L990.2 267.1L1006.3 267.1L1005.5 261.7Z" fill="#ac564e" stroke="#ac564e" stroke-width=".5"/><path d="M1005.5 261.7L1006.3 267.1L996.3 267.1L995.7 262.3Z" fill="#c7c2b2"/><path d="M995.7 262.3L996.3 267.1" stroke="#7a4a3a" stroke-width=".8" stroke-opacity=".6"/><path d="M991.6 262.5L992.2 267.1" stroke="#7a2a1e" stroke-width="2.2" stroke-opacity=".45"/><path d="M996.0 262.3L996.6 267.1" stroke="#fff" stroke-width="2" stroke-opacity=".08"/><path d="M989.7 262.6L990.2 267.1M1005.5 261.7L1006.3 267.1M989.7 262.6L1005.5 261.7M990.2 267.1L1006.3 267.1" class="e"/><path d="M989.7 262.6h0M1005.5 261.7h0M990.2 267.1h0M1006.3 267.1h0" class="d"/><path d="M974.2 266.2L974.5 269.7L990.2 267.1L989.7 262.6Z" fill="#aa564d" stroke="#aa564d" stroke-width=".5"/><path d="M974.2 266.2L974.5 269.7M989.7 262.6L990.2 267.1M974.2 266.2L989.7 262.6M974.5 269.7L990.2 267.1" class="e"/><path d="M974.2 266.2h0M989.7 262.6h0M974.5 269.7h0M990.2 267.1h0" class="d"/><path d="M1060.8 375.4L1058.2 400.6L1051.9 410.4L1054.7 385.3Z" fill="#858389" stroke="#858389" stroke-width="0.5"/><path d="M927.3 302.3L924.2 320.0L932.9 309.4L935.8 291.5Z" fill="#86443d" stroke="#86443d" stroke-width=".5"/><path d="M927.3 302.3L924.2 320.0M935.8 291.5L932.9 309.4M927.3 302.3L935.8 291.5M924.2 320.0L932.9 309.4" class="e"/><path d="M927.3 302.3h0M935.8 291.5h0M924.2 320.0h0M932.9 309.4h0" class="d"/><path d="M1060.2 292.6L1060.6 315.2L1068.9 327.0L1068.3 303.8Z" fill="#944b43" stroke="#944b43" stroke-width=".5"/><path d="M1060.2 292.6L1060.6 315.2M1068.3 303.8L1068.9 327.0M1060.2 292.6L1068.3 303.8M1060.6 315.2L1068.9 327.0" class="e"/><path d="M1060.2 292.6h0M1068.3 303.8h0M1060.6 315.2h0M1068.9 327.0h0" class="d"/><path d="M981.3 432.0L974.1 455.3L960.9 451.1L968.2 428.4Z" fill="#bdb9c2" stroke="#bdb9c2" stroke-width="0.5"/><path d="M968.2 428.4L960.9 451.1L948.5 445.0L956.0 423.0Z" fill="#bcb9c2" stroke="#bcb9c2" stroke-width="0.5"/><path d="M994.7 433.5L987.8 457.5L974.1 455.3L981.3 432.0Z" fill="#bbb7c0" stroke="#bbb7c0" stroke-width="0.5"/><path d="M925.8 356.8L920.4 375.8L920.3 364.5L925.7 345.7Z" fill="#838187" stroke="#838187" stroke-width="0.5"/><path d="M956.0 423.0L948.5 445.0L937.4 437.2L945.0 415.9Z" fill="#bab6bf" stroke="#bab6bf" stroke-width="0.5"/><path d="M1008.2 432.9L1001.4 457.5L987.8 457.5L994.7 433.5Z" fill="#b6b3bc" stroke="#b6b3bc" stroke-width="0.5"/><path d="M935.8 291.5L932.9 309.4L944.1 300.3L946.8 282.2Z" fill="#924a42" stroke="#924a42" stroke-width=".5"/><path d="M935.8 291.5L932.9 309.4M946.8 282.2L944.1 300.3M935.8 291.5L946.8 282.2M932.9 309.4L944.1 300.3" class="e"/><path d="M935.8 291.5h0M946.8 282.2h0M932.9 309.4h0M944.1 300.3h0" class="d"/><path d="M1064.4 364.6L1061.9 389.7L1058.2 400.6L1060.8 375.4Z" fill="#78767c" stroke="#78767c" stroke-width="0.5"/><path d="M1049.5 282.9L1049.5 304.8L1060.6 315.2L1060.2 292.6Z" fill="#9e4f47" stroke="#9e4f47" stroke-width=".5"/><path d="M1049.5 282.9L1049.5 304.8M1060.2 292.6L1060.6 315.2M1049.5 282.9L1060.2 292.6M1049.5 304.8L1060.6 315.2" class="e"/><path d="M1049.5 282.9h0M1060.2 292.6h0M1049.5 304.8h0M1060.6 315.2h0" class="d"/><path d="M945.0 415.9L937.4 437.2L927.9 428.0L935.7 407.3Z" fill="#b4b1ba" stroke="#b4b1ba" stroke-width="0.5"/><path d="M1021.0 430.2L1014.5 455.4L1001.4 457.5L1008.2 432.9Z" fill="#b0acb5" stroke="#b0acb5" stroke-width="0.5"/><path d="M946.8 282.2L944.1 300.3L957.4 293.2L959.8 274.8Z" fill="#9c4e47" stroke="#9c4e47" stroke-width=".5"/><path d="M948.3 281.3L945.7 299.4" stroke="#7a2a1e" stroke-width="2.2" stroke-opacity=".45"/><path d="M952.0 279.3L949.4 297.5" stroke="#fff" stroke-width="2" stroke-opacity=".08"/><path d="M946.8 282.2L944.1 300.3M959.8 274.8L957.4 293.2M946.8 282.2L959.8 274.8M944.1 300.3L957.4 293.2" class="e"/><path d="M946.8 282.2h0M959.8 274.8h0M944.1 300.3h0M957.4 293.2h0" class="d"/><path d="M925.7 345.7L920.3 364.5L922.8 353.6L928.2 334.8Z" fill="#706e73" stroke="#706e73" stroke-width="0.5"/><path d="M935.7 407.3L927.9 428.0L920.5 417.8L928.3 397.5Z" fill="#adaab2" stroke="#adaab2" stroke-width="0.5"/><path d="M1036.6 275.2L1036.2 296.5L1049.5 304.8L1049.5 282.9Z" fill="#a5534b" stroke="#a5534b" stroke-width=".5"/><path d="M1038.1 276.2L1037.8 297.5" stroke="#7a2a1e" stroke-width="2.2" stroke-opacity=".45"/><path d="M1041.7 278.3L1041.5 299.8" stroke="#fff" stroke-width="2" stroke-opacity=".08"/><path d="M1036.6 275.2L1036.2 296.5M1049.5 282.9L1049.5 304.8M1036.6 275.2L1049.5 282.9M1036.2 296.5L1049.5 304.8" class="e"/><path d="M1036.6 275.2h0M1049.5 282.9h0M1036.2 296.5h0M1049.5 304.8h0" class="d"/><path d="M1032.9 425.4L1026.6 451.1L1014.5 455.4L1021.0 430.2Z" fill="#a7a4ac" stroke="#a7a4ac" stroke-width="0.5"/><path d="M959.8 274.8L957.4 293.2L972.5 288.5L974.5 269.7Z" fill="#a3524a" stroke="#a3524a" stroke-width=".5"/><path d="M959.8 274.8L957.4 293.2M974.5 269.7L972.5 288.5M959.8 274.8L974.5 269.7M957.4 293.2L972.5 288.5" class="e"/><path d="M959.8 274.8h0M974.5 269.7h0M957.4 293.2h0M972.5 288.5h0" class="d"/><path d="M1021.9 269.9L1021.1 290.5L1036.2 296.5L1036.6 275.2Z" fill="#a9554d" stroke="#a9554d" stroke-width=".5"/><path d="M1021.9 269.9L1021.1 290.5M1036.6 275.2L1036.2 296.5M1021.9 269.9L1036.6 275.2M1021.1 290.5L1036.2 296.5" class="e"/><path d="M1021.9 269.9h0M1036.6 275.2h0M1021.1 290.5h0M1036.2 296.5h0" class="d"/><path d="M928.3 397.5L920.5 417.8L915.2 406.7L923.1 386.9Z" fill="#a3a0a8" stroke="#a3a0a8" stroke-width="0.5"/><path d="M974.5 269.7L972.5 288.5L988.5 286.4L990.2 267.1Z" fill="#a9554c" stroke="#a9554c" stroke-width=".5"/><path d="M974.5 269.7L972.5 288.5M990.2 267.1L988.5 286.4M974.5 269.7L990.2 267.1M972.5 288.5L988.5 286.4" class="e"/><path d="M974.5 269.7h0M990.2 267.1h0M972.5 288.5h0M988.5 286.4h0" class="d"/><path d="M1006.3 267.1L1005.0 287.1L1021.1 290.5L1021.9 269.9Z" fill="#ac564e" stroke="#ac564e" stroke-width=".5"/><path d="M1006.3 267.1L1005.0 287.1L1015.0 289.2L1016.0 268.9Z" fill="#c7c2b3"/><path d="M1016.0 268.9L1015.0 289.2" stroke="#7a4a3a" stroke-width=".8" stroke-opacity=".6"/><path d="M1006.3 267.1L1005.0 287.1M1021.9 269.9L1021.1 290.5M1006.3 267.1L1021.9 269.9M1005.0 287.1L1021.1 290.5" class="e"/><path d="M1006.3 267.1h0M1021.9 269.9h0M1005.0 287.1h0M1021.1 290.5h0" class="d"/><path d="M1043.4 418.8L1037.3 444.8L1026.6 451.1L1032.9 425.4Z" fill="#9c99a1" stroke="#9c99a1" stroke-width="0.5"/><path d="M990.2 267.1L988.5 286.4L1005.0 287.1L1006.3 267.1Z" fill="#ab564e" stroke="#ab564e" stroke-width=".5"/><path d="M1006.3 267.1L1005.0 287.1L994.8 286.7L996.3 267.1Z" fill="#c7c2b2"/><path d="M996.3 267.1L994.8 286.7" stroke="#7a4a3a" stroke-width=".8" stroke-opacity=".6"/><path d="M992.2 267.1L990.5 286.5" stroke="#7a2a1e" stroke-width="2.2" stroke-opacity=".45"/><path d="M996.6 267.1L995.1 286.7" stroke="#fff" stroke-width="2" stroke-opacity=".08"/><path d="M990.2 267.1L988.5 286.4M1006.3 267.1L1005.0 287.1M990.2 267.1L1006.3 267.1M988.5 286.4L1005.0 287.1" class="e"/><path d="M990.2 267.1h0M1006.3 267.1h0M988.5 286.4h0M1005.0 287.1h0" class="d"/><path d="M918.4 331.8L912.9 350.1L918.7 338.3L924.2 320.0Z" fill="#723934" stroke="#723934" stroke-width=".5"/><path d="M919.1 330.4L913.6 348.7" stroke="#7a2a1e" stroke-width="2.2" stroke-opacity=".45"/><path d="M920.8 327.1L915.2 345.4" stroke="#fff" stroke-width="2" stroke-opacity=".08"/><path d="M918.4 331.8L912.9 350.1M924.2 320.0L918.7 338.3M918.4 331.8L924.2 320.0M912.9 350.1L918.7 338.3" class="e"/><path d="M918.4 331.8h0M924.2 320.0h0M912.9 350.1h0M918.7 338.3h0" class="d"/><path d="M1074.2 339.8L1072.0 364.6L1074.1 378.3L1076.3 353.0Z" fill="#7f403a" stroke="#7f403a" stroke-width=".5"/><path d="M1074.2 339.8L1072.0 364.6M1076.3 353.0L1074.1 378.3M1074.2 339.8L1076.3 353.0M1072.0 364.6L1074.1 378.3" class="e"/><path d="M1074.2 339.8h0M1076.3 353.0h0M1072.0 364.6h0M1074.1 378.3h0" class="d"/><path d="M923.1 386.9L915.2 406.7L912.5 395.3L920.4 375.8Z" fill="#98959c" stroke="#98959c" stroke-width="0.5"/><path d="M1051.9 410.4L1046.0 436.6L1037.3 444.8L1043.4 418.8Z" fill="#8f8d94" stroke="#8f8d94" stroke-width="0.5"/><path d="M924.2 320.0L918.7 338.3L927.5 327.8L932.9 309.4Z" fill="#82413b" stroke="#82413b" stroke-width=".5"/><path d="M924.2 320.0L918.7 338.3M932.9 309.4L927.5 327.8M924.2 320.0L932.9 309.4M918.7 338.3L927.5 327.8" class="e"/><path d="M924.2 320.0h0M932.9 309.4h0M918.7 338.3h0M927.5 327.8h0" class="d"/><path d="M1068.9 327.0L1066.5 351.3L1072.0 364.6L1074.2 339.8Z" fill="#8e4740" stroke="#8e4740" stroke-width=".5"/><path d="M1069.6 328.5L1067.2 352.9" stroke="#7a2a1e" stroke-width="2.2" stroke-opacity=".45"/><path d="M1071.0 332.1L1068.7 356.6" stroke="#fff" stroke-width="2" stroke-opacity=".08"/><path d="M1068.9 327.0L1066.5 351.3M1074.2 339.8L1072.0 364.6M1068.9 327.0L1074.2 339.8M1066.5 351.3L1072.0 364.6" class="e"/><path d="M1068.9 327.0h0M1074.2 339.8h0M1066.5 351.3h0M1072.0 364.6h0" class="d"/><path d="M960.9 451.1L950.6 474.3L938.2 467.5L948.5 445.0Z" fill="#bfbbc4" stroke="#bfbbc4" stroke-width="0.5"/><path d="M974.1 455.3L964.0 479.3L950.6 474.3L960.9 451.1Z" fill="#bebbc4" stroke="#bebbc4" stroke-width="0.5"/><path d="M920.4 375.8L912.5 395.3L912.3 383.9L920.3 364.5Z" fill="#8a878e" stroke="#8a878e" stroke-width="0.5"/><path d="M948.5 445.0L938.2 467.5L927.0 459.1L937.4 437.2Z" fill="#bdb9c2" stroke="#bdb9c2" stroke-width="0.5"/><path d="M987.8 457.5L977.8 482.2L964.0 479.3L974.1 455.3Z" fill="#bbb8c1" stroke="#bbb8c1" stroke-width="0.5"/><path d="M1058.2 400.6L1052.4 426.8L1046.0 436.6L1051.9 410.4Z" fill="#807e84" stroke="#807e84" stroke-width="0.5"/><path d="M932.9 309.4L927.5 327.8L938.8 319.0L944.1 300.3Z" fill="#8f4841" stroke="#8f4841" stroke-width=".5"/><path d="M932.9 309.4L927.5 327.8M944.1 300.3L938.8 319.0M932.9 309.4L944.1 300.3M927.5 327.8L938.8 319.0" class="e"/><path d="M932.9 309.4h0M944.1 300.3h0M927.5 327.8h0M938.8 319.0h0" class="d"/><path d="M937.4 437.2L927.0 459.1L917.5 449.3L927.9 428.0Z" fill="#b8b4bd" stroke="#b8b4bd" stroke-width="0.5"/><path d="M1001.4 457.5L991.5 482.9L977.8 482.2L987.8 457.5Z" fill="#b6b3bc" stroke="#b6b3bc" stroke-width="0.5"/><path d="M1060.6 315.2L1058.0 338.8L1066.5 351.3L1068.9 327.0Z" fill="#994d45" stroke="#994d45" stroke-width=".5"/><path d="M1060.6 315.2L1058.0 338.8M1068.9 327.0L1066.5 351.3M1060.6 315.2L1068.9 327.0M1058.0 338.8L1066.5 351.3" class="e"/><path d="M1060.6 315.2h0M1068.9 327.0h0M1058.0 338.8h0M1066.5 351.3h0" class="d"/><path d="M920.3 364.5L912.3 383.9L914.8 372.8L922.8 353.6Z" fill="#78767c" stroke="#78767c" stroke-width="0.5"/><path d="M927.9 428.0L917.5 449.3L909.9 438.5L920.5 417.8Z" fill="#b1aeb6" stroke="#b1aeb6" stroke-width="0.5"/><path d="M1014.5 455.4L1004.7 481.4L991.5 482.9L1001.4 457.5Z" fill="#afacb4" stroke="#afacb4" stroke-width="0.5"/><path d="M1061.9 389.7L1056.2 415.9L1052.4 426.8L1058.2 400.6Z" fill="#726f75" stroke="#726f75" stroke-width="0.5"/><path d="M944.1 300.3L938.8 319.0L952.4 312.3L957.4 293.2Z" fill="#9a4d46" stroke="#9a4d46" stroke-width=".5"/><path d="M945.7 299.4L940.4 318.2" stroke="#7a2a1e" stroke-width="2.2" stroke-opacity=".45"/><path d="M949.4 297.5L944.2 316.3" stroke="#fff" stroke-width="2" stroke-opacity=".08"/><path d="M944.1 300.3L938.8 319.0M957.4 293.2L952.4 312.3M944.1 300.3L957.4 293.2M938.8 319.0L952.4 312.3" class="e"/><path d="M944.1 300.3h0M957.4 293.2h0M938.8 319.0h0M952.4 312.3h0" class="d"/><path d="M1049.5 304.8L1046.6 327.8L1058.0 338.8L1060.6 315.2Z" fill="#a25149" stroke="#a25149" stroke-width=".5"/><path d="M1049.5 304.8L1046.6 327.8M1060.6 315.2L1058.0 338.8M1049.5 304.8L1060.6 315.2M1046.6 327.8L1058.0 338.8" class="e"/><path d="M1049.5 304.8h0M1060.6 315.2h0M1046.6 327.8h0M1058.0 338.8h0" class="d"/><path d="M920.5 417.8L909.9 438.5L904.6 427.0L915.2 406.7Z" fill="#a8a5ad" stroke="#a8a5ad" stroke-width="0.5"/><path d="M1026.6 451.1L1017.0 477.7L1004.7 481.4L1014.5 455.4Z" fill="#a5a2aa" stroke="#a5a2aa" stroke-width="0.5"/><path d="M957.4 293.2L952.4 312.3L967.7 308.1L972.5 288.5Z" fill="#a25249" stroke="#a25249" stroke-width=".5"/><path d="M957.4 293.2L952.4 312.3M972.5 288.5L967.7 308.1M957.4 293.2L972.5 288.5M952.4 312.3L967.7 308.1" class="e"/><path d="M957.4 293.2h0M972.5 288.5h0M952.4 312.3h0M967.7 308.1h0" class="d"/><path d="M912.9 350.1L904.8 368.9L910.7 357.2L918.7 338.3Z" fill="#6a3530" stroke="#6a3530" stroke-width=".5"/><path d="M913.6 348.7L905.5 367.5" stroke="#7a2a1e" stroke-width="2.2" stroke-opacity=".45"/><path d="M915.2 345.4L907.1 364.2" stroke="#fff" stroke-width="2" stroke-opacity=".08"/><path d="M912.9 350.1L904.8 368.9M918.7 338.3L910.7 357.2M912.9 350.1L918.7 338.3M904.8 368.9L910.7 357.2" class="e"/><path d="M912.9 350.1h0M918.7 338.3h0M904.8 368.9h0M910.7 357.2h0" class="d"/><path d="M1036.2 296.5L1032.9 318.8L1046.6 327.8L1049.5 304.8Z" fill="#a8554c" stroke="#a8554c" stroke-width=".5"/><path d="M1037.8 297.5L1034.5 319.8" stroke="#7a2a1e" stroke-width="2.2" stroke-opacity=".45"/><path d="M1041.5 299.8L1038.4 322.4" stroke="#fff" stroke-width="2" stroke-opacity=".08"/><path d="M1036.2 296.5L1032.9 318.8M1049.5 304.8L1046.6 327.8M1036.2 296.5L1049.5 304.8M1032.9 318.8L1046.6 327.8" class="e"/><path d="M1036.2 296.5h0M1049.5 304.8h0M1032.9 318.8h0M1046.6 327.8h0" class="d"/><path d="M1074.1 378.3L1068.6 404.7L1067.4 418.3L1072.9 391.6Z" fill="#753b35" stroke="#753b35" stroke-width=".5"/><path d="M1072.9 391.6L1067.4 418.3L1068.1 409.9L1073.6 383.3Z" fill="#888479"/><path d="M1073.6 383.3L1068.1 409.9" stroke="#7a4a3a" stroke-width=".8" stroke-opacity=".6"/><path d="M1074.1 378.3L1068.6 404.7M1072.9 391.6L1067.4 418.3M1074.1 378.3L1072.9 391.6M1068.6 404.7L1067.4 418.3" class="e"/><path d="M1074.1 378.3h0M1072.9 391.6h0M1068.6 404.7h0M1067.4 418.3h0" class="d"/><path d="M972.5 288.5L967.7 308.1L984.1 306.6L988.5 286.4Z" fill="#a8554c" stroke="#a8554c" stroke-width=".5"/><path d="M972.5 288.5L967.7 308.1M988.5 286.4L984.1 306.6M972.5 288.5L988.5 286.4M967.7 308.1L984.1 306.6" class="e"/><path d="M972.5 288.5h0M988.5 286.4h0M967.7 308.1h0M984.1 306.6h0" class="d"/><path d="M1021.1 290.5L1017.4 312.0L1032.9 318.8L1036.2 296.5Z" fill="#ac574e" stroke="#ac574e" stroke-width=".5"/><path d="M1021.1 290.5L1017.4 312.0M1036.2 296.5L1032.9 318.8M1021.1 290.5L1036.2 296.5M1017.4 312.0L1032.9 318.8" class="e"/><path d="M1021.1 290.5h0M1036.2 296.5h0M1017.4 312.0h0M1032.9 318.8h0" class="d"/><path d="M915.2 406.7L904.6 427.0L901.8 415.3L912.5 395.3Z" fill="#9d9aa2" stroke="#9d9aa2" stroke-width="0.5"/><path d="M1037.3 444.8L1027.7 471.8L1017.0 477.7L1026.6 451.1Z" fill="#9a979e" stroke="#9a979e" stroke-width="0.5"/><path d="M988.5 286.4L984.1 306.6L1000.9 307.9L1005.0 287.1Z" fill="#ac574e" stroke="#ac574e" stroke-width=".5"/><path d="M1005.0 287.1L1000.9 307.9L990.5 307.1L994.8 286.7Z" fill="#c8c3b3"/><path d="M994.8 286.7L990.5 307.1" stroke="#7a4a3a" stroke-width=".8" stroke-opacity=".6"/><path d="M990.5 286.5L986.1 306.8" stroke="#7a2a1e" stroke-width="2.2" stroke-opacity=".45"/><path d="M995.1 286.7L990.8 307.1" stroke="#fff" stroke-width="2" stroke-opacity=".08"/><path d="M988.5 286.4L984.1 306.6M1005.0 287.1L1000.9 307.9M988.5 286.4L1005.0 287.1M984.1 306.6L1000.9 307.9" class="e"/><path d="M988.5 286.4h0M1005.0 287.1h0M984.1 306.6h0M1000.9 307.9h0" class="d"/><path d="M1005.0 287.1L1000.9 307.9L1017.4 312.0L1021.1 290.5Z" fill="#ad574e" stroke="#ad574e" stroke-width=".5"/><path d="M1005.0 287.1L1000.9 307.9L1011.1 310.5L1015.0 289.2Z" fill="#c9c4b4"/><path d="M1015.0 289.2L1011.1 310.5" stroke="#7a4a3a" stroke-width=".8" stroke-opacity=".6"/><path d="M1005.0 287.1L1000.9 307.9M1021.1 290.5L1017.4 312.0M1005.0 287.1L1021.1 290.5M1000.9 307.9L1017.4 312.0" class="e"/><path d="M1005.0 287.1h0M1021.1 290.5h0M1000.9 307.9h0M1017.4 312.0h0" class="d"/><path d="M918.7 338.3L910.7 357.2L919.4 346.8L927.5 327.8Z" fill="#7d3f39" stroke="#7d3f39" stroke-width=".5"/><path d="M918.7 338.3L910.7 357.2M927.5 327.8L919.4 346.8M918.7 338.3L927.5 327.8M910.7 357.2L919.4 346.8" class="e"/><path d="M918.7 338.3h0M927.5 327.8h0M910.7 357.2h0M919.4 346.8h0" class="d"/><path d="M1072.0 364.6L1066.4 390.7L1068.6 404.7L1074.1 378.3Z" fill="#86433c" stroke="#86433c" stroke-width=".5"/><path d="M1072.0 364.6L1066.4 390.7M1074.1 378.3L1068.6 404.7M1072.0 364.6L1074.1 378.3M1066.4 390.7L1068.6 404.7" class="e"/><path d="M1072.0 364.6h0M1074.1 378.3h0M1066.4 390.7h0M1068.6 404.7h0" class="d"/><path d="M950.6 474.3L937.3 498.1L924.8 490.6L938.2 467.5Z" fill="#c1bdc6" stroke="#c1bdc6" stroke-width="0.5"/><path d="M912.5 395.3L901.8 415.3L901.6 403.7L912.3 383.9Z" fill="#8f8d94" stroke="#8f8d94" stroke-width="0.5"/><path d="M964.0 479.3L950.6 503.9L937.3 498.1L950.6 474.3Z" fill="#c0bcc5" stroke="#c0bcc5" stroke-width="0.5"/><path d="M938.2 467.5L924.8 490.6L913.6 481.4L927.0 459.1Z" fill="#bfbcc5" stroke="#bfbcc5" stroke-width="0.5"/><path d="M1046.0 436.6L1036.5 463.8L1027.7 471.8L1037.3 444.8Z" fill="#8c8990" stroke="#8c8990" stroke-width="0.5"/><path d="M977.8 482.2L964.4 507.6L950.6 503.9L964.0 479.3Z" fill="#bcb9c2" stroke="#bcb9c2" stroke-width="0.5"/><path d="M927.0 459.1L913.6 481.4L904.1 471.0L917.5 449.3Z" fill="#bcb8c1" stroke="#bcb8c1" stroke-width="0.5"/><path d="M927.5 327.8L919.4 346.8L930.8 338.4L938.8 319.0Z" fill="#8c463f" stroke="#8c463f" stroke-width=".5"/><path d="M927.5 327.8L919.4 346.8M938.8 319.0L930.8 338.4M927.5 327.8L938.8 319.0M919.4 346.8L930.8 338.4" class="e"/><path d="M927.5 327.8h0M938.8 319.0h0M919.4 346.8h0M930.8 338.4h0" class="d"/><path d="M991.5 482.9L978.2 509.1L964.4 507.6L977.8 482.2Z" fill="#b6b3bc" stroke="#b6b3bc" stroke-width="0.5"/><path d="M1066.5 351.3L1060.8 376.8L1066.4 390.7L1072.0 364.6Z" fill="#934a43" stroke="#934a43" stroke-width=".5"/><path d="M1067.2 352.9L1061.5 378.4" stroke="#7a2a1e" stroke-width="2.2" stroke-opacity=".45"/><path d="M1068.7 356.6L1063.1 382.3" stroke="#fff" stroke-width="2" stroke-opacity=".08"/><path d="M1066.5 351.3L1060.8 376.8M1072.0 364.6L1066.4 390.7M1066.5 351.3L1072.0 364.6M1060.8 376.8L1066.4 390.7" class="e"/><path d="M1066.5 351.3h0M1072.0 364.6h0M1060.8 376.8h0M1066.4 390.7h0" class="d"/><path d="M917.5 449.3L904.1 471.0L896.5 459.7L909.9 438.5Z" fill="#b5b2bb" stroke="#b5b2bb" stroke-width="0.5"/><path d="M912.3 383.9L901.6 403.7L904.1 392.6L914.8 372.8Z" fill="#7f7d83" stroke="#7f7d83" stroke-width="0.5"/><path d="M1052.4 426.8L1043.0 454.2L1036.5 463.8L1046.0 436.6Z" fill="#7b797f" stroke="#7b797f" stroke-width="0.5"/><path d="M1004.7 481.4L991.4 508.3L978.2 509.1L991.5 482.9Z" fill="#aeabb3" stroke="#aeabb3" stroke-width="0.5"/><path d="M909.9 438.5L896.5 459.7L891.2 447.8L904.6 427.0Z" fill="#ada9b2" stroke="#ada9b2" stroke-width="0.5"/><path d="M938.8 319.0L930.8 338.4L944.5 332.1L952.4 312.3Z" fill="#974c45" stroke="#974c45" stroke-width=".5"/><path d="M940.4 318.2L932.5 337.6" stroke="#7a2a1e" stroke-width="2.2" stroke-opacity=".45"/><path d="M944.2 316.3L936.3 335.9" stroke="#fff" stroke-width="2" stroke-opacity=".08"/><path d="M938.8 319.0L930.8 338.4M952.4 312.3L944.5 332.1M938.8 319.0L952.4 312.3M930.8 338.4L944.5 332.1" class="e"/><path d="M938.8 319.0h0M952.4 312.3h0M930.8 338.4h0M944.5 332.1h0" class="d"/><path d="M1058.0 338.8L1052.0 363.6L1060.8 376.8L1066.5 351.3Z" fill="#9e4f47" stroke="#9e4f47" stroke-width=".5"/><path d="M1058.0 338.8L1052.0 363.6M1066.5 351.3L1060.8 376.8M1058.0 338.8L1066.5 351.3M1052.0 363.6L1060.8 376.8" class="e"/><path d="M1058.0 338.8h0M1066.5 351.3h0M1052.0 363.6h0M1060.8 376.8h0" class="d"/><path d="M914.8 372.8L904.1 392.6L909.2 382.5L920.0 362.7Z" fill="#6b696e" stroke="#6b696e" stroke-width="0.5"/><path d="M1056.2 415.9L1046.8 443.1L1043.0 454.2L1052.4 426.8Z" fill="#67656a" stroke="#67656a" stroke-width="0.5"/><path d="M1017.0 477.7L1003.7 505.1L991.4 508.3L1004.7 481.4Z" fill="#a4a0a8" stroke="#a4a0a8" stroke-width="0.5"/><path d="M952.4 312.3L944.5 332.1L960.0 328.4L967.7 308.1Z" fill="#a15149" stroke="#a15149" stroke-width=".5"/><path d="M952.4 312.3L944.5 332.1M967.7 308.1L960.0 328.4M952.4 312.3L967.7 308.1M944.5 332.1L960.0 328.4" class="e"/><path d="M952.4 312.3h0M967.7 308.1h0M944.5 332.1h0M960.0 328.4h0" class="d"/><path d="M904.6 427.0L891.2 447.8L888.3 435.7L901.8 415.3Z" fill="#a29fa7" stroke="#a29fa7" stroke-width="0.5"/><path d="M1046.6 327.8L1040.3 351.9L1052.0 363.6L1058.0 338.8Z" fill="#a6534b" stroke="#a6534b" stroke-width=".5"/><path d="M1046.6 327.8L1040.3 351.9M1058.0 338.8L1052.0 363.6M1046.6 327.8L1058.0 338.8M1040.3 351.9L1052.0 363.6" class="e"/><path d="M1046.6 327.8h0M1058.0 338.8h0M1040.3 351.9h0M1052.0 363.6h0" class="d"/><path d="M967.7 308.1L960.0 328.4L976.6 327.6L984.1 306.6Z" fill="#a8554c" stroke="#a8554c" stroke-width=".5"/><path d="M967.7 308.1L960.0 328.4M984.1 306.6L976.6 327.6M967.7 308.1L984.1 306.6M960.0 328.4L976.6 327.6" class="e"/><path d="M967.7 308.1h0M984.1 306.6h0M960.0 328.4h0M976.6 327.6h0" class="d"/><path d="M1032.9 318.8L1026.3 342.0L1040.3 351.9L1046.6 327.8Z" fill="#ab564e" stroke="#ab564e" stroke-width=".5"/><path d="M1034.5 319.8L1028.0 343.2" stroke="#7a2a1e" stroke-width="2.2" stroke-opacity=".45"/><path d="M1038.4 322.4L1031.9 345.9" stroke="#fff" stroke-width="2" stroke-opacity=".08"/><path d="M1032.9 318.8L1026.3 342.0M1046.6 327.8L1040.3 351.9M1032.9 318.8L1046.6 327.8M1026.3 342.0L1040.3 351.9" class="e"/><path d="M1032.9 318.8h0M1046.6 327.8h0M1026.3 342.0h0M1040.3 351.9h0" class="d"/><path d="M910.7 357.2L899.8 376.5L908.5 366.4L919.4 346.8Z" fill="#783c36" stroke="#783c36" stroke-width=".5"/><path d="M910.7 357.2L899.8 376.5M919.4 346.8L908.5 366.4M910.7 357.2L919.4 346.8M899.8 376.5L908.5 366.4" class="e"/><path d="M910.7 357.2h0M919.4 346.8h0M899.8 376.5h0M908.5 366.4h0" class="d"/><path d="M1027.7 471.8L1014.5 499.6L1003.7 505.1L1017.0 477.7Z" fill="#97949b" stroke="#97949b" stroke-width="0.5"/><path d="M1068.6 404.7L1059.4 432.3L1058.3 446.2L1067.4 418.3Z" fill="#7c3e38" stroke="#7c3e38" stroke-width=".5"/><path d="M1067.4 418.3L1058.3 446.2L1059.0 437.6L1068.1 409.9Z" fill="#908c81"/><path d="M1068.1 409.9L1059.0 437.6" stroke="#7a4a3a" stroke-width=".8" stroke-opacity=".6"/><path d="M1068.6 404.7L1059.4 432.3M1067.4 418.3L1058.3 446.2M1068.6 404.7L1067.4 418.3M1059.4 432.3L1058.3 446.2" class="e"/><path d="M1068.6 404.7h0M1067.4 418.3h0M1059.4 432.3h0M1058.3 446.2h0" class="d"/><path d="M984.1 306.6L976.6 327.6L993.7 329.6L1000.9 307.9Z" fill="#ad574e" stroke="#ad574e" stroke-width=".5"/><path d="M1000.9 307.9L993.7 329.6L983.1 328.3L990.5 307.1Z" fill="#c9c3b4"/><path d="M990.5 307.1L983.1 328.3" stroke="#7a4a3a" stroke-width=".8" stroke-opacity=".6"/><path d="M986.1 306.8L978.7 327.8" stroke="#7a2a1e" stroke-width="2.2" stroke-opacity=".45"/><path d="M990.8 307.1L983.5 328.4" stroke="#fff" stroke-width="2" stroke-opacity=".08"/><path d="M984.1 306.6L976.6 327.6M1000.9 307.9L993.7 329.6M984.1 306.6L1000.9 307.9M976.6 327.6L993.7 329.6" class="e"/><path d="M984.1 306.6h0M1000.9 307.9h0M976.6 327.6h0M993.7 329.6h0" class="d"/><path d="M901.8 415.3L888.3 435.7L888.0 423.9L901.6 403.7Z" fill="#959299" stroke="#959299" stroke-width="0.5"/><path d="M1017.4 312.0L1010.5 334.5L1026.3 342.0L1032.9 318.8Z" fill="#ae584f" stroke="#ae584f" stroke-width=".5"/><path d="M1017.4 312.0L1010.5 334.5M1032.9 318.8L1026.3 342.0M1017.4 312.0L1032.9 318.8M1010.5 334.5L1026.3 342.0" class="e"/><path d="M1017.4 312.0h0M1032.9 318.8h0M1010.5 334.5h0M1026.3 342.0h0" class="d"/><path d="M937.3 498.1L920.6 522.4L908.2 514.0L924.8 490.6Z" fill="#c3bfc9" stroke="#c3bfc9" stroke-width="0.5"/><path d="M924.8 490.6L908.2 514.0L897.1 504.1L913.6 481.4Z" fill="#c2bfc8" stroke="#c2bfc8" stroke-width="0.5"/><path d="M1000.9 307.9L993.7 329.6L1010.5 334.5L1017.4 312.0Z" fill="#af584f" stroke="#af584f" stroke-width=".5"/><path d="M1000.9 307.9L993.7 329.6L1004.1 332.6L1011.1 310.5Z" fill="#cbc6b6"/><path d="M1011.1 310.5L1004.1 332.6" stroke="#7a4a3a" stroke-width=".8" stroke-opacity=".6"/><path d="M1000.9 307.9L993.7 329.6M1017.4 312.0L1010.5 334.5M1000.9 307.9L1017.4 312.0M993.7 329.6L1010.5 334.5" class="e"/><path d="M1000.9 307.9h0M1017.4 312.0h0M993.7 329.6h0M1010.5 334.5h0" class="d"/><path d="M950.6 503.9L933.8 529.0L920.6 522.4L937.3 498.1Z" fill="#c1bec7" stroke="#c1bec7" stroke-width="0.5"/><path d="M913.6 481.4L897.1 504.1L887.6 493.0L904.1 471.0Z" fill="#bfbbc5" stroke="#bfbbc5" stroke-width="0.5"/><path d="M964.4 507.6L947.5 533.5L933.8 529.0L950.6 503.9Z" fill="#bdbac3" stroke="#bdbac3" stroke-width="0.5"/><path d="M904.1 471.0L887.6 493.0L880.1 481.1L896.5 459.7Z" fill="#b9b6bf" stroke="#b9b6bf" stroke-width="0.5"/><path d="M1036.5 463.8L1023.3 492.0L1014.5 499.6L1027.7 471.8Z" fill="#88858c" stroke="#88858c" stroke-width="0.5"/><path d="M919.4 346.8L908.5 366.4L919.9 358.2L930.8 338.4Z" fill="#88443e" stroke="#88443e" stroke-width=".5"/><path d="M919.4 346.8L908.5 366.4M930.8 338.4L919.9 358.2M919.4 346.8L930.8 338.4M908.5 366.4L919.9 358.2" class="e"/><path d="M919.4 346.8h0M930.8 338.4h0M908.5 366.4h0M919.9 358.2h0" class="d"/><path d="M901.6 403.7L888.0 423.9L890.4 412.8L904.1 392.6Z" fill="#858389" stroke="#858389" stroke-width="0.5"/><path d="M1066.4 390.7L1057.2 417.8L1059.4 432.3L1068.6 404.7Z" fill="#8c463f" stroke="#8c463f" stroke-width=".5"/><path d="M1066.4 390.7L1057.2 417.8M1068.6 404.7L1059.4 432.3M1066.4 390.7L1068.6 404.7M1057.2 417.8L1059.4 432.3" class="e"/><path d="M1066.4 390.7h0M1068.6 404.7h0M1057.2 417.8h0M1059.4 432.3h0" class="d"/><path d="M978.2 509.1L961.2 535.8L947.5 533.5L964.4 507.6Z" fill="#b7b3bc" stroke="#b7b3bc" stroke-width="0.5"/><path d="M896.5 459.7L880.1 481.1L874.7 468.8L891.2 447.8Z" fill="#b1aeb6" stroke="#b1aeb6" stroke-width="0.5"/><path d="M991.4 508.3L974.4 535.7L961.2 535.8L978.2 509.1Z" fill="#adaab3" stroke="#adaab3" stroke-width="0.5"/><path d="M930.8 338.4L919.9 358.2L933.6 352.5L944.5 332.1Z" fill="#954b44" stroke="#954b44" stroke-width=".5"/><path d="M932.5 337.6L921.6 357.5" stroke="#7a2a1e" stroke-width="2.2" stroke-opacity=".45"/><path d="M936.3 335.9L925.4 355.9" stroke="#fff" stroke-width="2" stroke-opacity=".08"/><path d="M930.8 338.4L919.9 358.2M944.5 332.1L933.6 352.5M930.8 338.4L944.5 332.1M919.9 358.2L933.6 352.5" class="e"/><path d="M930.8 338.4h0M944.5 332.1h0M919.9 358.2h0M933.6 352.5h0" class="d"/><path d="M1043.0 454.2L1029.8 482.5L1023.3 492.0L1036.5 463.8Z" fill="#757379" stroke="#757379" stroke-width="0.5"/><path d="M1060.8 376.8L1051.4 403.3L1057.2 417.8L1066.4 390.7Z" fill="#984d45" stroke="#984d45" stroke-width=".5"/><path d="M1061.5 378.4L1052.1 405.0" stroke="#7a2a1e" stroke-width="2.2" stroke-opacity=".45"/><path d="M1063.1 382.3L1053.7 409.1" stroke="#fff" stroke-width="2" stroke-opacity=".08"/><path d="M1060.8 376.8L1051.4 403.3M1066.4 390.7L1057.2 417.8M1060.8 376.8L1066.4 390.7M1051.4 403.3L1057.2 417.8" class="e"/><path d="M1060.8 376.8h0M1066.4 390.7h0M1051.4 403.3h0M1057.2 417.8h0" class="d"/><path d="M904.1 392.6L890.4 412.8L895.4 402.7L909.2 382.5Z" fill="#737176" stroke="#737176" stroke-width="0.5"/><path d="M891.2 447.8L874.7 468.8L871.8 456.4L888.3 435.7Z" fill="#a7a3ab" stroke="#a7a3ab" stroke-width="0.5"/><path d="M1003.7 505.1L986.6 533.2L974.4 535.7L991.4 508.3Z" fill="#a29fa7" stroke="#a29fa7" stroke-width="0.5"/><path d="M944.5 332.1L933.6 352.5L949.2 349.4L960.0 328.4Z" fill="#a05048" stroke="#a05048" stroke-width=".5"/><path d="M944.5 332.1L933.6 352.5M960.0 328.4L949.2 349.4M944.5 332.1L960.0 328.4M933.6 352.5L949.2 349.4" class="e"/><path d="M944.5 332.1h0M960.0 328.4h0M933.6 352.5h0M949.2 349.4h0" class="d"/><path d="M1052.0 363.6L1042.4 389.4L1051.4 403.3L1060.8 376.8Z" fill="#a25249" stroke="#a25249" stroke-width=".5"/><path d="M1052.0 363.6L1042.4 389.4M1060.8 376.8L1051.4 403.3M1052.0 363.6L1060.8 376.8M1042.4 389.4L1051.4 403.3" class="e"/><path d="M1052.0 363.6h0M1060.8 376.8h0M1042.4 389.4h0M1051.4 403.3h0" class="d"/><path d="M1058.3 446.2L1045.2 475.1L1040.7 487.9L1053.7 458.9Z" fill="#6f3832" stroke="#6f3832" stroke-width=".5"/><path d="M1058.3 446.2L1045.2 475.1L1042.4 483.0L1055.4 454.1Z" fill="#817e74"/><path d="M1055.4 454.1L1042.4 483.0" stroke="#7a4a3a" stroke-width=".8" stroke-opacity=".6"/><path d="M1058.3 446.2L1045.2 475.1M1053.7 458.9L1040.7 487.9M1058.3 446.2L1053.7 458.9M1045.2 475.1L1040.7 487.9" class="e"/><path d="M1058.3 446.2h0M1053.7 458.9h0M1045.2 475.1h0M1040.7 487.9h0" class="d"/><path d="M888.3 435.7L871.8 456.4L871.4 444.4L888.0 423.9Z" fill="#9a979e" stroke="#9a979e" stroke-width="0.5"/><path d="M899.8 376.5L886.1 396.2L894.6 386.3L908.5 366.4Z" fill="#723934" stroke="#723934" stroke-width=".5"/><path d="M899.8 376.5L886.1 396.2M908.5 366.4L894.6 386.3M899.8 376.5L908.5 366.4M886.1 396.2L894.6 386.3" class="e"/><path d="M899.8 376.5h0M908.5 366.4h0M886.1 396.2h0M894.6 386.3h0" class="d"/><path d="M908.2 514.0L888.3 537.7L877.4 527.0L897.1 504.1Z" fill="#c5c1cb" stroke="#c5c1cb" stroke-width="0.5"/><path d="M920.6 522.4L900.5 546.9L888.3 537.7L908.2 514.0Z" fill="#c5c1cb" stroke="#c5c1cb" stroke-width="0.5"/><path d="M897.1 504.1L877.4 527.0L868.0 515.2L887.6 493.0Z" fill="#c2bec8" stroke="#c2bec8" stroke-width="0.5"/><path d="M960.0 328.4L949.2 349.4L965.9 349.2L976.6 327.6Z" fill="#a8554c" stroke="#a8554c" stroke-width=".5"/><path d="M960.0 328.4L949.2 349.4M976.6 327.6L965.9 349.2M960.0 328.4L976.6 327.6M949.2 349.4L965.9 349.2" class="e"/><path d="M960.0 328.4h0M976.6 327.6h0M949.2 349.4h0M965.9 349.2h0" class="d"/><path d="M933.8 529.0L913.5 554.4L900.5 546.9L920.6 522.4Z" fill="#c3bfc9" stroke="#c3bfc9" stroke-width="0.5"/><path d="M1040.3 351.9L1030.5 376.8L1042.4 389.4L1052.0 363.6Z" fill="#aa554d" stroke="#aa554d" stroke-width=".5"/><path d="M1040.3 351.9L1030.5 376.8M1052.0 363.6L1042.4 389.4M1040.3 351.9L1052.0 363.6M1030.5 376.8L1042.4 389.4" class="e"/><path d="M1040.3 351.9h0M1052.0 363.6h0M1030.5 376.8h0M1042.4 389.4h0" class="d"/><path d="M1014.5 499.6L997.3 528.2L986.6 533.2L1003.7 505.1Z" fill="#949199" stroke="#949199" stroke-width="0.5"/><path d="M887.6 493.0L868.0 515.2L860.5 502.7L880.1 481.1Z" fill="#bdb9c2" stroke="#bdb9c2" stroke-width="0.5"/><path d="M947.5 533.5L927.0 559.8L913.5 554.4L933.8 529.0Z" fill="#bebac4" stroke="#bebac4" stroke-width="0.5"/><path d="M976.6 327.6L965.9 349.2L983.2 352.0L993.7 329.6Z" fill="#ae574f" stroke="#ae574f" stroke-width=".5"/><path d="M993.7 329.6L983.2 352.0L972.5 350.3L983.1 328.3Z" fill="#cac4b5"/><path d="M983.1 328.3L972.5 350.3" stroke="#7a4a3a" stroke-width=".8" stroke-opacity=".6"/><path d="M978.7 327.8L968.0 349.6" stroke="#7a2a1e" stroke-width="2.2" stroke-opacity=".45"/><path d="M983.5 328.4L972.8 350.3" stroke="#fff" stroke-width="2" stroke-opacity=".08"/><path d="M976.6 327.6L965.9 349.2M993.7 329.6L983.2 352.0M976.6 327.6L993.7 329.6M965.9 349.2L983.2 352.0" class="e"/><path d="M976.6 327.6h0M993.7 329.6h0M965.9 349.2h0M983.2 352.0h0" class="d"/><path d="M1026.3 342.0L1016.2 366.1L1030.5 376.8L1040.3 351.9Z" fill="#af584f" stroke="#af584f" stroke-width=".5"/><path d="M1028.0 343.2L1018.0 367.4" stroke="#7a2a1e" stroke-width="2.2" stroke-opacity=".45"/><path d="M1031.9 345.9L1022.0 370.4" stroke="#fff" stroke-width="2" stroke-opacity=".08"/><path d="M1026.3 342.0L1016.2 366.1M1040.3 351.9L1030.5 376.8M1026.3 342.0L1040.3 351.9M1016.2 366.1L1030.5 376.8" class="e"/><path d="M1026.3 342.0h0M1040.3 351.9h0M1016.2 366.1h0M1030.5 376.8h0" class="d"/><path d="M888.0 423.9L871.4 444.4L873.7 433.2L890.4 412.8Z" fill="#8b888f" stroke="#8b888f" stroke-width="0.5"/><path d="M993.7 329.6L983.2 352.0L1000.2 357.7L1010.5 334.5Z" fill="#b15950" stroke="#b15950" stroke-width=".5"/><path d="M993.7 329.6L983.2 352.0L993.8 355.5L1004.1 332.6Z" fill="#cdc8b8"/><path d="M1004.1 332.6L993.8 355.5" stroke="#7a4a3a" stroke-width=".8" stroke-opacity=".6"/><path d="M993.7 329.6L983.2 352.0M1010.5 334.5L1000.2 357.7M993.7 329.6L1010.5 334.5M983.2 352.0L1000.2 357.7" class="e"/><path d="M993.7 329.6h0M1010.5 334.5h0M983.2 352.0h0M1000.2 357.7h0" class="d"/><path d="M1010.5 334.5L1000.2 357.7L1016.2 366.1L1026.3 342.0Z" fill="#b15950" stroke="#b15950" stroke-width=".5"/><path d="M1010.5 334.5L1000.2 357.7M1026.3 342.0L1016.2 366.1M1010.5 334.5L1026.3 342.0M1000.2 357.7L1016.2 366.1" class="e"/><path d="M1010.5 334.5h0M1026.3 342.0h0M1000.2 357.7h0M1016.2 366.1h0" class="d"/><path d="M1059.4 432.3L1046.3 460.9L1045.2 475.1L1058.3 446.2Z" fill="#82423b" stroke="#82423b" stroke-width=".5"/><path d="M1058.3 446.2L1045.2 475.1L1045.9 466.3L1059.0 437.6Z" fill="#979388"/><path d="M1059.0 437.6L1045.9 466.3" stroke="#7a4a3a" stroke-width=".8" stroke-opacity=".6"/><path d="M1059.4 432.3L1046.3 460.9M1058.3 446.2L1045.2 475.1M1059.4 432.3L1058.3 446.2M1046.3 460.9L1045.2 475.1" class="e"/><path d="M1059.4 432.3h0M1058.3 446.2h0M1046.3 460.9h0M1045.2 475.1h0" class="d"/><path d="M908.5 366.4L894.6 386.3L905.9 378.6L919.9 358.2Z" fill="#85433c" stroke="#85433c" stroke-width=".5"/><path d="M908.5 366.4L894.6 386.3M919.9 358.2L905.9 378.6M908.5 366.4L919.9 358.2M894.6 386.3L905.9 378.6" class="e"/><path d="M908.5 366.4h0M919.9 358.2h0M894.6 386.3h0M905.9 378.6h0" class="d"/><path d="M880.1 481.1L860.5 502.7L855.2 489.9L874.7 468.8Z" fill="#b5b2ba" stroke="#b5b2ba" stroke-width="0.5"/><path d="M961.2 535.8L940.4 563.0L927.0 559.8L947.5 533.5Z" fill="#b7b3bc" stroke="#b7b3bc" stroke-width="0.5"/><path d="M1023.3 492.0L1006.1 520.9L997.3 528.2L1014.5 499.6Z" fill="#848188" stroke="#848188" stroke-width="0.5"/><path d="M874.7 468.8L855.2 489.9L852.2 477.2L871.8 456.4Z" fill="#aba8b0" stroke="#aba8b0" stroke-width="0.5"/><path d="M890.4 412.8L873.7 433.2L878.5 423.3L895.4 402.7Z" fill="#79777d" stroke="#79777d" stroke-width="0.5"/><path d="M1057.2 417.8L1043.9 445.9L1046.3 460.9L1059.4 432.3Z" fill="#914942" stroke="#914942" stroke-width=".5"/><path d="M1057.2 417.8L1043.9 445.9M1059.4 432.3L1046.3 460.9M1057.2 417.8L1059.4 432.3M1043.9 445.9L1046.3 460.9" class="e"/><path d="M1057.2 417.8h0M1059.4 432.3h0M1043.9 445.9h0M1046.3 460.9h0" class="d"/><path d="M974.4 535.7L953.4 563.7L940.4 563.0L961.2 535.8Z" fill="#ada9b2" stroke="#ada9b2" stroke-width="0.5"/><path d="M919.9 358.2L905.9 378.6L919.6 373.3L933.6 352.5Z" fill="#934a43" stroke="#934a43" stroke-width=".5"/><path d="M921.6 357.5L907.6 377.9" stroke="#7a2a1e" stroke-width="2.2" stroke-opacity=".45"/><path d="M925.4 355.9L911.4 376.5" stroke="#fff" stroke-width="2" stroke-opacity=".08"/><path d="M919.9 358.2L905.9 378.6M933.6 352.5L919.6 373.3M919.9 358.2L933.6 352.5M905.9 378.6L919.6 373.3" class="e"/><path d="M919.9 358.2h0M933.6 352.5h0M905.9 378.6h0M919.6 373.3h0" class="d"/><path d="M1029.8 482.5L1012.5 511.6L1006.1 520.9L1023.3 492.0Z" fill="#6e6c72" stroke="#6e6c72" stroke-width="0.5"/><path d="M888.3 537.7L865.0 561.4L854.3 549.9L877.4 527.0Z" fill="#c8c4ce" stroke="#c8c4ce" stroke-width="0.5"/><path d="M871.8 456.4L852.2 477.2L851.7 465.0L871.4 444.4Z" fill="#9f9ca3" stroke="#9f9ca3" stroke-width="0.5"/><path d="M900.5 546.9L876.8 571.5L865.0 561.4L888.3 537.7Z" fill="#c7c4cd" stroke="#c7c4cd" stroke-width="0.5"/><path d="M877.4 527.0L854.3 549.9L845.1 537.4L868.0 515.2Z" fill="#c5c2cb" stroke="#c5c2cb" stroke-width="0.5"/><path d="M1051.4 403.3L1038.1 430.8L1043.9 445.9L1057.2 417.8Z" fill="#9d4f47" stroke="#9d4f47" stroke-width=".5"/><path d="M1052.1 405.0L1038.8 432.6" stroke="#7a2a1e" stroke-width="2.2" stroke-opacity=".45"/><path d="M1053.7 409.1L1040.4 436.9" stroke="#fff" stroke-width="2" stroke-opacity=".08"/><path d="M1051.4 403.3L1038.1 430.8M1057.2 417.8L1043.9 445.9M1051.4 403.3L1057.2 417.8M1038.1 430.8L1043.9 445.9" class="e"/><path d="M1051.4 403.3h0M1057.2 417.8h0M1038.1 430.8h0M1043.9 445.9h0" class="d"/><path d="M986.6 533.2L965.4 561.8L953.4 563.7L974.4 535.7Z" fill="#a09da5" stroke="#a09da5" stroke-width="0.5"/><path d="M886.1 396.2L869.3 416.2L877.6 406.6L894.6 386.3Z" fill="#6b3630" stroke="#6b3630" stroke-width=".5"/><path d="M886.1 396.2L869.3 416.2M894.6 386.3L877.6 406.6M886.1 396.2L894.6 386.3M869.3 416.2L877.6 406.6" class="e"/><path d="M886.1 396.2h0M894.6 386.3h0M869.3 416.2h0M877.6 406.6h0" class="d"/><path d="M933.6 352.5L919.6 373.3L935.1 370.9L949.2 349.4Z" fill="#9f5048" stroke="#9f5048" stroke-width=".5"/><path d="M933.6 352.5L919.6 373.3M949.2 349.4L935.1 370.9M933.6 352.5L949.2 349.4M919.6 373.3L935.1 370.9" class="e"/><path d="M933.6 352.5h0M949.2 349.4h0M919.6 373.3h0M935.1 370.9h0" class="d"/><path d="M913.5 554.4L889.5 579.9L876.8 571.5L900.5 546.9Z" fill="#c5c1ca" stroke="#c5c1ca" stroke-width="0.5"/><path d="M868.0 515.2L845.1 537.4L837.8 524.3L860.5 502.7Z" fill="#c0bdc6" stroke="#c0bdc6" stroke-width="0.5"/><path d="M927.0 559.8L902.6 586.3L889.5 579.9L913.5 554.4Z" fill="#bfbbc5" stroke="#bfbbc5" stroke-width="0.5"/><path d="M1042.4 389.4L1028.9 416.2L1038.1 430.8L1051.4 403.3Z" fill="#a7544b" stroke="#a7544b" stroke-width=".5"/><path d="M1042.4 389.4L1028.9 416.2M1051.4 403.3L1038.1 430.8M1042.4 389.4L1051.4 403.3M1028.9 416.2L1038.1 430.8" class="e"/><path d="M1042.4 389.4h0M1051.4 403.3h0M1028.9 416.2h0M1038.1 430.8h0" class="d"/><path d="M871.4 444.4L851.7 465.0L853.8 453.8L873.7 433.2Z" fill="#908d94" stroke="#908d94" stroke-width="0.5"/><path d="M860.5 502.7L837.8 524.3L832.5 511.0L855.2 489.9Z" fill="#b9b5be" stroke="#b9b5be" stroke-width="0.5"/><path d="M1045.2 475.1L1027.8 504.9L1023.4 517.7L1040.7 487.9Z" fill="#763c36" stroke="#763c36" stroke-width=".5"/><path d="M1045.2 475.1L1027.8 504.9L1025.1 512.8L1042.4 483.0Z" fill="#8a867b"/><path d="M1042.4 483.0L1025.1 512.8" stroke="#7a4a3a" stroke-width=".8" stroke-opacity=".6"/><path d="M1045.2 475.1L1027.8 504.9M1040.7 487.9L1023.4 517.7M1045.2 475.1L1040.7 487.9M1027.8 504.9L1023.4 517.7" class="e"/><path d="M1045.2 475.1h0M1040.7 487.9h0M1027.8 504.9h0M1023.4 517.7h0" class="d"/><path d="M949.2 349.4L935.1 370.9L951.8 371.5L965.9 349.2Z" fill="#a8544c" stroke="#a8544c" stroke-width=".5"/><path d="M949.2 349.4L935.1 370.9M965.9 349.2L951.8 371.5M949.2 349.4L965.9 349.2M935.1 370.9L951.8 371.5" class="e"/><path d="M949.2 349.4h0M965.9 349.2h0M935.1 370.9h0M951.8 371.5h0" class="d"/><path d="M997.3 528.2L975.9 557.4L965.4 561.8L986.6 533.2Z" fill="#928f96" stroke="#928f96" stroke-width="0.5"/><path d="M894.6 386.3L877.6 406.6L888.7 399.2L905.9 378.6Z" fill="#81413a" stroke="#81413a" stroke-width=".5"/><path d="M894.6 386.3L877.6 406.6M905.9 378.6L888.7 399.2M894.6 386.3L905.9 378.6M877.6 406.6L888.7 399.2" class="e"/><path d="M894.6 386.3h0M905.9 378.6h0M877.6 406.6h0M888.7 399.2h0" class="d"/><path d="M1030.5 376.8L1016.8 402.7L1028.9 416.2L1042.4 389.4Z" fill="#ae574f" stroke="#ae574f" stroke-width=".5"/><path d="M1030.5 376.8L1016.8 402.7M1042.4 389.4L1028.9 416.2M1030.5 376.8L1042.4 389.4M1016.8 402.7L1028.9 416.2" class="e"/><path d="M1030.5 376.8h0M1042.4 389.4h0M1016.8 402.7h0M1028.9 416.2h0" class="d"/><path d="M940.4 563.0L915.7 590.4L902.6 586.3L927.0 559.8Z" fill="#b7b3bc" stroke="#b7b3bc" stroke-width="0.5"/><path d="M965.9 349.2L951.8 371.5L969.1 375.1L983.2 352.0Z" fill="#ae584f" stroke="#ae584f" stroke-width=".5"/><path d="M983.2 352.0L969.1 375.1L958.4 372.9L972.5 350.3Z" fill="#cbc5b5"/><path d="M972.5 350.3L958.4 372.9" stroke="#7a4a3a" stroke-width=".8" stroke-opacity=".6"/><path d="M968.0 349.6L953.9 371.9" stroke="#7a2a1e" stroke-width="2.2" stroke-opacity=".45"/><path d="M972.8 350.3L958.7 372.9" stroke="#fff" stroke-width="2" stroke-opacity=".08"/><path d="M965.9 349.2L951.8 371.5M983.2 352.0L969.1 375.1M965.9 349.2L983.2 352.0M951.8 371.5L969.1 375.1" class="e"/><path d="M965.9 349.2h0M983.2 352.0h0M951.8 371.5h0M969.1 375.1h0" class="d"/><path d="M855.2 489.9L832.5 511.0L829.5 498.0L852.2 477.2Z" fill="#afacb4" stroke="#afacb4" stroke-width="0.5"/><path d="M1016.2 366.1L1002.4 391.1L1016.8 402.7L1030.5 376.8Z" fill="#b25a51" stroke="#b25a51" stroke-width=".5"/><path d="M1018.0 367.4L1004.1 392.5" stroke="#7a2a1e" stroke-width="2.2" stroke-opacity=".45"/><path d="M1022.0 370.4L1008.2 395.7" stroke="#fff" stroke-width="2" stroke-opacity=".08"/><path d="M1016.2 366.1L1002.4 391.1M1030.5 376.8L1016.8 402.7M1016.2 366.1L1030.5 376.8M1002.4 391.1L1016.8 402.7" class="e"/><path d="M1016.2 366.1h0M1030.5 376.8h0M1002.4 391.1h0M1016.8 402.7h0" class="d"/><path d="M983.2 352.0L969.1 375.1L986.2 381.7L1000.2 357.7Z" fill="#b25a51" stroke="#b25a51" stroke-width=".5"/><path d="M983.2 352.0L969.1 375.1L979.7 379.2L993.8 355.5Z" fill="#cfcab9"/><path d="M993.8 355.5L979.7 379.2" stroke="#7a4a3a" stroke-width=".8" stroke-opacity=".6"/><path d="M983.2 352.0L969.1 375.1M1000.2 357.7L986.2 381.7M983.2 352.0L1000.2 357.7M969.1 375.1L986.2 381.7" class="e"/><path d="M983.2 352.0h0M1000.2 357.7h0M969.1 375.1h0M986.2 381.7h0" class="d"/><path d="M1000.2 357.7L986.2 381.7L1002.4 391.1L1016.2 366.1Z" fill="#b35a51" stroke="#b35a51" stroke-width=".5"/><path d="M1000.2 357.7L986.2 381.7M1016.2 366.1L1002.4 391.1M1000.2 357.7L1016.2 366.1M986.2 381.7L1002.4 391.1" class="e"/><path d="M1000.2 357.7h0M1016.2 366.1h0M986.2 381.7h0M1002.4 391.1h0" class="d"/><path d="M873.7 433.2L853.8 453.8L858.4 444.0L878.5 423.3Z" fill="#7f7c82" stroke="#7f7c82" stroke-width="0.5"/><path d="M1046.3 460.9L1028.8 490.5L1027.8 504.9L1045.2 475.1Z" fill="#88443e" stroke="#88443e" stroke-width=".5"/><path d="M1045.2 475.1L1027.8 504.9L1028.5 495.9L1045.9 466.3Z" fill="#9e9a8e"/><path d="M1045.9 466.3L1028.5 495.9" stroke="#7a4a3a" stroke-width=".8" stroke-opacity=".6"/><path d="M1046.3 460.9L1028.8 490.5M1045.2 475.1L1027.8 504.9M1046.3 460.9L1045.2 475.1M1028.8 490.5L1027.8 504.9" class="e"/><path d="M1046.3 460.9h0M1045.2 475.1h0M1028.8 490.5h0M1027.8 504.9h0" class="d"/><path d="M1006.1 520.9L984.5 550.5L975.9 557.4L997.3 528.2Z" fill="#807d83" stroke="#807d83" stroke-width="0.5"/><path d="M953.4 563.7L928.3 591.9L915.7 590.4L940.4 563.0Z" fill="#aca9b1" stroke="#aca9b1" stroke-width="0.5"/><path d="M865.0 561.4L838.1 585.0L827.8 572.6L854.3 549.9Z" fill="#cac6d0" stroke="#cac6d0" stroke-width="0.5"/><path d="M905.9 378.6L888.7 399.2L902.1 394.6L919.6 373.3Z" fill="#914941" stroke="#914941" stroke-width=".5"/><path d="M907.6 377.9L890.3 398.7" stroke="#7a2a1e" stroke-width="2.2" stroke-opacity=".45"/><path d="M911.4 376.5L894.1 397.4" stroke="#fff" stroke-width="2" stroke-opacity=".08"/><path d="M905.9 378.6L888.7 399.2M919.6 373.3L902.1 394.6M905.9 378.6L919.6 373.3M888.7 399.2L902.1 394.6" class="e"/><path d="M905.9 378.6h0M919.6 373.3h0M888.7 399.2h0M902.1 394.6h0" class="d"/><path d="M854.3 549.9L827.8 572.6L819.0 559.4L845.1 537.4Z" fill="#c8c4ce" stroke="#c8c4ce" stroke-width="0.5"/><path d="M852.2 477.2L829.5 498.0L828.9 485.6L851.7 465.0Z" fill="#a3a0a8" stroke="#a3a0a8" stroke-width="0.5"/><path d="M876.8 571.5L849.5 596.0L838.1 585.0L865.0 561.4Z" fill="#c9c6cf" stroke="#c9c6cf" stroke-width="0.5"/><path d="M845.1 537.4L819.0 559.4L811.8 545.7L837.8 524.3Z" fill="#c4c0c9" stroke="#c4c0c9" stroke-width="0.5"/><path d="M889.5 579.9L861.7 605.4L849.5 596.0L876.8 571.5Z" fill="#c6c2cc" stroke="#c6c2cc" stroke-width="0.5"/><path d="M878.5 423.3L858.4 444.0L865.6 436.0L885.9 415.0Z" fill="#6c6a6f" stroke="#6c6a6f" stroke-width="0.5"/><path d="M1043.9 445.9L1026.4 475.0L1028.8 490.5L1046.3 460.9Z" fill="#964c44" stroke="#964c44" stroke-width=".5"/><path d="M1043.9 445.9L1026.4 475.0M1046.3 460.9L1028.8 490.5M1043.9 445.9L1046.3 460.9M1026.4 475.0L1028.8 490.5" class="e"/><path d="M1043.9 445.9h0M1046.3 460.9h0M1026.4 475.0h0M1028.8 490.5h0" class="d"/><path d="M965.4 561.8L939.9 590.8L928.3 591.9L953.4 563.7Z" fill="#9f9ca4" stroke="#9f9ca4" stroke-width="0.5"/><path d="M837.8 524.3L811.8 545.7L806.6 531.9L832.5 511.0Z" fill="#bdb9c2" stroke="#bdb9c2" stroke-width="0.5"/><path d="M1023.4 517.7L1001.6 548.3L994.2 558.8L1015.9 528.4Z" fill="#64322d" stroke="#64322d" stroke-width=".5"/><path d="M1023.4 517.7L1001.6 548.3M1015.9 528.4L994.2 558.8M1023.4 517.7L1015.9 528.4M1001.6 548.3L994.2 558.8" class="e"/><path d="M1023.4 517.7h0M1015.9 528.4h0M1001.6 548.3h0M994.2 558.8h0" class="d"/><path d="M919.6 373.3L902.1 394.6L917.4 392.8L935.1 370.9Z" fill="#9e4f47" stroke="#9e4f47" stroke-width=".5"/><path d="M919.6 373.3L902.1 394.6M935.1 370.9L917.4 392.8M919.6 373.3L935.1 370.9M902.1 394.6L917.4 392.8" class="e"/><path d="M919.6 373.3h0M935.1 370.9h0M902.1 394.6h0M917.4 392.8h0" class="d"/><path d="M902.6 586.3L874.3 612.8L861.7 605.4L889.5 579.9Z" fill="#c0bcc5" stroke="#c0bcc5" stroke-width="0.5"/><path d="M851.7 465.0L828.9 485.6L830.7 474.4L853.8 453.8Z" fill="#959299" stroke="#959299" stroke-width="0.5"/><path d="M1038.1 430.8L1020.4 459.2L1026.4 475.0L1043.9 445.9Z" fill="#a25249" stroke="#a25249" stroke-width=".5"/><path d="M1038.8 432.6L1021.1 461.1" stroke="#7a2a1e" stroke-width="2.2" stroke-opacity=".45"/><path d="M1040.4 436.9L1022.8 465.5" stroke="#fff" stroke-width="2" stroke-opacity=".08"/><path d="M1038.1 430.8L1020.4 459.2M1043.9 445.9L1026.4 475.0M1038.1 430.8L1043.9 445.9M1020.4 459.2L1026.4 475.0" class="e"/><path d="M1038.1 430.8h0M1043.9 445.9h0M1020.4 459.2h0M1026.4 475.0h0" class="d"/><path d="M832.5 511.0L806.6 531.9L803.6 518.6L829.5 498.0Z" fill="#b3b0b8" stroke="#b3b0b8" stroke-width="0.5"/><path d="M915.7 590.4L886.8 617.8L874.3 612.8L902.6 586.3Z" fill="#b7b4bc" stroke="#b7b4bc" stroke-width="0.5"/><path d="M877.6 406.6L857.4 427.0L868.1 420.1L888.7 399.2Z" fill="#7d3f39" stroke="#7d3f39" stroke-width=".5"/><path d="M877.6 406.6L857.4 427.0M888.7 399.2L868.1 420.1M877.6 406.6L888.7 399.2M857.4 427.0L868.1 420.1" class="e"/><path d="M877.6 406.6h0M888.7 399.2h0M857.4 427.0h0M868.1 420.1h0" class="d"/><path d="M935.1 370.9L917.4 392.8L934.0 394.2L951.8 371.5Z" fill="#a8544c" stroke="#a8544c" stroke-width=".5"/><path d="M935.1 370.9L917.4 392.8M951.8 371.5L934.0 394.2M935.1 370.9L951.8 371.5M917.4 392.8L934.0 394.2" class="e"/><path d="M935.1 370.9h0M951.8 371.5h0M917.4 392.8h0M934.0 394.2h0" class="d"/><path d="M975.9 557.4L950.1 587.0L939.9 590.8L965.4 561.8Z" fill="#8f8c93" stroke="#8f8c93" stroke-width="0.5"/><path d="M1027.8 504.9L1005.9 535.5L1001.6 548.3L1023.4 517.7Z" fill="#7c3f38" stroke="#7c3f38" stroke-width=".5"/><path d="M1027.8 504.9L1005.9 535.5L1003.2 543.4L1025.1 512.8Z" fill="#918d81"/><path d="M1025.1 512.8L1003.2 543.4" stroke="#7a4a3a" stroke-width=".8" stroke-opacity=".6"/><path d="M1027.8 504.9L1005.9 535.5M1023.4 517.7L1001.6 548.3M1027.8 504.9L1023.4 517.7M1005.9 535.5L1001.6 548.3" class="e"/><path d="M1027.8 504.9h0M1023.4 517.7h0M1005.9 535.5h0M1001.6 548.3h0" class="d"/><path d="M853.8 453.8L830.7 474.4L835.0 464.7L858.4 444.0Z" fill="#838187" stroke="#838187" stroke-width="0.5"/><path d="M838.1 585.0L807.7 608.2L797.9 595.0L827.8 572.6Z" fill="#ccc9d2" stroke="#ccc9d2" stroke-width="0.5"/><path d="M827.8 572.6L797.9 595.0L789.5 581.0L819.0 559.4Z" fill="#cbc7d1" stroke="#cbc7d1" stroke-width="0.5"/><path d="M1028.9 416.2L1011.1 443.7L1020.4 459.2L1038.1 430.8Z" fill="#ab564d" stroke="#ab564d" stroke-width=".5"/><path d="M1028.9 416.2L1011.1 443.7M1038.1 430.8L1020.4 459.2M1028.9 416.2L1038.1 430.8M1011.1 443.7L1020.4 459.2" class="e"/><path d="M1028.9 416.2h0M1038.1 430.8h0M1011.1 443.7h0M1020.4 459.2h0" class="d"/><path d="M849.5 596.0L818.5 620.2L807.7 608.2L838.1 585.0Z" fill="#cbc7d1" stroke="#cbc7d1" stroke-width="0.5"/><path d="M829.5 498.0L803.6 518.6L802.8 506.1L828.9 485.6Z" fill="#a7a4ac" stroke="#a7a4ac" stroke-width="0.5"/><path d="M951.8 371.5L934.0 394.2L951.2 398.8L969.1 375.1Z" fill="#af584f" stroke="#af584f" stroke-width=".5"/><path d="M969.1 375.1L951.2 398.8L940.5 396.0L958.4 372.9Z" fill="#ccc6b6"/><path d="M958.4 372.9L940.5 396.0" stroke="#7a4a3a" stroke-width=".8" stroke-opacity=".6"/><path d="M953.9 371.9L936.1 394.8" stroke="#7a2a1e" stroke-width="2.2" stroke-opacity=".45"/><path d="M958.7 372.9L940.9 396.1" stroke="#fff" stroke-width="2" stroke-opacity=".08"/><path d="M951.8 371.5L934.0 394.2M969.1 375.1L951.2 398.8M951.8 371.5L969.1 375.1M934.0 394.2L951.2 398.8" class="e"/><path d="M951.8 371.5h0M969.1 375.1h0M934.0 394.2h0M951.2 398.8h0" class="d"/><path d="M819.0 559.4L789.5 581.0L782.6 566.7L811.8 545.7Z" fill="#c7c3cd" stroke="#c7c3cd" stroke-width="0.5"/><path d="M928.3 591.9L898.8 620.3L886.8 617.8L915.7 590.4Z" fill="#aca8b1" stroke="#aca8b1" stroke-width="0.5"/><path d="M1016.8 402.7L999.0 429.4L1011.1 443.7L1028.9 416.2Z" fill="#b15950" stroke="#b15950" stroke-width=".5"/><path d="M1016.8 402.7L999.0 429.4M1028.9 416.2L1011.1 443.7M1016.8 402.7L1028.9 416.2M999.0 429.4L1011.1 443.7" class="e"/><path d="M1016.8 402.7h0M1028.9 416.2h0M999.0 429.4h0M1011.1 443.7h0" class="d"/><path d="M861.7 605.4L830.0 630.5L818.5 620.2L849.5 596.0Z" fill="#c7c4cd" stroke="#c7c4cd" stroke-width="0.5"/><path d="M969.1 375.1L951.2 398.8L968.3 406.4L986.2 381.7Z" fill="#b45b52" stroke="#b45b52" stroke-width=".5"/><path d="M969.1 375.1L951.2 398.8L961.8 403.5L979.7 379.2Z" fill="#d1ccbb"/><path d="M979.7 379.2L961.8 403.5" stroke="#7a4a3a" stroke-width=".8" stroke-opacity=".6"/><path d="M969.1 375.1L951.2 398.8M986.2 381.7L968.3 406.4M969.1 375.1L986.2 381.7M951.2 398.8L968.3 406.4" class="e"/><path d="M969.1 375.1h0M986.2 381.7h0M951.2 398.8h0M968.3 406.4h0" class="d"/><path d="M888.7 399.2L868.1 420.1L881.1 416.1L902.1 394.6Z" fill="#8e4840" stroke="#8e4840" stroke-width=".5"/><path d="M890.3 398.7L869.7 419.6" stroke="#7a2a1e" stroke-width="2.2" stroke-opacity=".45"/><path d="M894.1 397.4L873.3 418.5" stroke="#fff" stroke-width="2" stroke-opacity=".08"/><path d="M888.7 399.2L868.1 420.1M902.1 394.6L881.1 416.1M888.7 399.2L902.1 394.6M868.1 420.1L881.1 416.1" class="e"/><path d="M888.7 399.2h0M902.1 394.6h0M868.1 420.1h0M881.1 416.1h0" class="d"/><path d="M811.8 545.7L782.6 566.7L777.5 552.5L806.6 531.9Z" fill="#c0bcc5" stroke="#c0bcc5" stroke-width="0.5"/><path d="M984.5 550.5L958.4 580.6L950.1 587.0L975.9 557.4Z" fill="#7b797f" stroke="#7b797f" stroke-width="0.5"/><path d="M1002.4 391.1L984.5 416.7L999.0 429.4L1016.8 402.7Z" fill="#b55b52" stroke="#b55b52" stroke-width=".5"/><path d="M1004.1 392.5L986.2 418.2" stroke="#7a2a1e" stroke-width="2.2" stroke-opacity=".45"/><path d="M1008.2 395.7L990.3 421.8" stroke="#fff" stroke-width="2" stroke-opacity=".08"/><path d="M1002.4 391.1L984.5 416.7M1016.8 402.7L999.0 429.4M1002.4 391.1L1016.8 402.7M984.5 416.7L999.0 429.4" class="e"/><path d="M1002.4 391.1h0M1016.8 402.7h0M984.5 416.7h0M999.0 429.4h0" class="d"/><path d="M986.2 381.7L968.3 406.4L984.5 416.7L1002.4 391.1Z" fill="#b65c52" stroke="#b65c52" stroke-width=".5"/><path d="M986.2 381.7L968.3 406.4M1002.4 391.1L984.5 416.7M986.2 381.7L1002.4 391.1M968.3 406.4L984.5 416.7" class="e"/><path d="M986.2 381.7h0M1002.4 391.1h0M968.3 406.4h0M984.5 416.7h0" class="d"/><path d="M858.4 444.0L835.0 464.7L841.8 457.0L865.6 436.0Z" fill="#737076" stroke="#737076" stroke-width="0.5"/><path d="M1028.8 490.5L1006.8 520.8L1005.9 535.5L1027.8 504.9Z" fill="#8d4740" stroke="#8d4740" stroke-width=".5"/><path d="M1027.8 504.9L1005.9 535.5L1006.4 526.3L1028.5 495.9Z" fill="#a4a093"/><path d="M1028.5 495.9L1006.4 526.3" stroke="#7a4a3a" stroke-width=".8" stroke-opacity=".6"/><path d="M1028.8 490.5L1006.8 520.8M1027.8 504.9L1005.9 535.5M1028.8 490.5L1027.8 504.9M1006.8 520.8L1005.9 535.5" class="e"/><path d="M1028.8 490.5h0M1027.8 504.9h0M1006.8 520.8h0M1005.9 535.5h0" class="d"/><path d="M828.9 485.6L802.8 506.1L804.3 494.8L830.7 474.4Z" fill="#99969d" stroke="#99969d" stroke-width="0.5"/><path d="M874.3 612.8L841.9 638.9L830.0 630.5L861.7 605.4Z" fill="#c1bdc6" stroke="#c1bdc6" stroke-width="0.5"/><path d="M806.6 531.9L777.5 552.5L774.4 538.8L803.6 518.6Z" fill="#b7b3bc" stroke="#b7b3bc" stroke-width="0.5"/><path d="M939.9 590.8L909.9 620.0L898.8 620.3L928.3 591.9Z" fill="#9e9aa2" stroke="#9e9aa2" stroke-width="0.5"/><path d="M902.1 394.6L881.1 416.1L896.1 415.1L917.4 392.8Z" fill="#9c4f47" stroke="#9c4f47" stroke-width=".5"/><path d="M902.1 394.6L881.1 416.1M917.4 392.8L896.1 415.1M902.1 394.6L917.4 392.8M881.1 416.1L896.1 415.1" class="e"/><path d="M902.1 394.6h0M917.4 392.8h0M881.1 416.1h0M896.1 415.1h0" class="d"/><path d="M797.9 595.0L764.6 616.8L756.7 602.1L789.5 581.0Z" fill="#cdc9d3" stroke="#cdc9d3" stroke-width="0.5"/><path d="M807.7 608.2L773.8 630.8L764.6 616.8L797.9 595.0Z" fill="#cfcbd5" stroke="#cfcbd5" stroke-width="0.5"/><path d="M1001.6 548.3L975.1 579.4L968.0 589.6L994.2 558.8Z" fill="#6c3731" stroke="#6c3731" stroke-width=".5"/><path d="M1001.6 548.3L975.1 579.4M994.2 558.8L968.0 589.6M1001.6 548.3L994.2 558.8M975.1 579.4L968.0 589.6" class="e"/><path d="M1001.6 548.3h0M994.2 558.8h0M975.1 579.4h0M968.0 589.6h0" class="d"/><path d="M886.8 617.8L853.7 645.0L841.9 638.9L874.3 612.8Z" fill="#b7b4bd" stroke="#b7b4bd" stroke-width="0.5"/><path d="M1026.4 475.0L1004.2 504.8L1006.8 520.8L1028.8 490.5Z" fill="#9b4e46" stroke="#9b4e46" stroke-width=".5"/><path d="M1026.4 475.0L1004.2 504.8M1028.8 490.5L1006.8 520.8M1026.4 475.0L1028.8 490.5M1004.2 504.8L1006.8 520.8" class="e"/><path d="M1026.4 475.0h0M1028.8 490.5h0M1004.2 504.8h0M1006.8 520.8h0" class="d"/><path d="M789.5 581.0L756.7 602.1L750.1 587.2L782.6 566.7Z" fill="#c9c6cf" stroke="#c9c6cf" stroke-width="0.5"/><path d="M818.5 620.2L783.9 643.8L773.8 630.8L807.7 608.2Z" fill="#cdc9d3" stroke="#cdc9d3" stroke-width="0.5"/><path d="M857.4 427.0L833.8 447.4L844.0 441.1L868.1 420.1Z" fill="#793d37" stroke="#793d37" stroke-width=".5"/><path d="M857.4 427.0L833.8 447.4M868.1 420.1L844.0 441.1M857.4 427.0L868.1 420.1M833.8 447.4L844.0 441.1" class="e"/><path d="M857.4 427.0h0M868.1 420.1h0M833.8 447.4h0M844.0 441.1h0" class="d"/><path d="M830.7 474.4L804.3 494.8L808.3 485.3L835.0 464.7Z" fill="#88858c" stroke="#88858c" stroke-width="0.5"/><path d="M803.6 518.6L774.4 538.8L773.4 526.2L802.8 506.1Z" fill="#aba7b0" stroke="#aba7b0" stroke-width="0.5"/><path d="M950.1 587.0L919.6 616.8L909.9 620.0L939.9 590.8Z" fill="#8c8a91" stroke="#8c8a91" stroke-width="0.5"/><path d="M782.6 566.7L750.1 587.2L745.2 572.5L777.5 552.5Z" fill="#c3bfc9" stroke="#c3bfc9" stroke-width="0.5"/><path d="M830.0 630.5L794.6 655.1L783.9 643.8L818.5 620.2Z" fill="#c9c5cf" stroke="#c9c5cf" stroke-width="0.5"/><path d="M917.4 392.8L896.1 415.1L912.4 417.4L934.0 394.2Z" fill="#a8544c" stroke="#a8544c" stroke-width=".5"/><path d="M917.4 392.8L896.1 415.1M934.0 394.2L912.4 417.4M917.4 392.8L934.0 394.2M896.1 415.1L912.4 417.4" class="e"/><path d="M917.4 392.8h0M934.0 394.2h0M896.1 415.1h0M912.4 417.4h0" class="d"/><path d="M1020.4 459.2L998.1 488.3L1004.2 504.8L1026.4 475.0Z" fill="#a7544b" stroke="#a7544b" stroke-width=".5"/><path d="M1021.1 461.1L998.9 490.3" stroke="#7a2a1e" stroke-width="2.2" stroke-opacity=".45"/><path d="M1022.8 465.5L1000.6 494.9" stroke="#fff" stroke-width="2" stroke-opacity=".08"/><path d="M1020.4 459.2L998.1 488.3M1026.4 475.0L1004.2 504.8M1020.4 459.2L1026.4 475.0M998.1 488.3L1004.2 504.8" class="e"/><path d="M1020.4 459.2h0M1026.4 475.0h0M998.1 488.3h0M1004.2 504.8h0" class="d"/><path d="M898.8 620.3L865.0 648.4L853.7 645.0L886.8 617.8Z" fill="#aba8b0" stroke="#aba8b0" stroke-width="0.5"/><path d="M1005.9 535.5L979.1 566.6L975.1 579.4L1001.6 548.3Z" fill="#82413b" stroke="#82413b" stroke-width=".5"/><path d="M1005.9 535.5L979.1 566.6L976.6 574.5L1003.2 543.4Z" fill="#979387"/><path d="M1003.2 543.4L976.6 574.5" stroke="#7a4a3a" stroke-width=".8" stroke-opacity=".6"/><path d="M1005.9 535.5L979.1 566.6M1001.6 548.3L975.1 579.4M1005.9 535.5L1001.6 548.3M979.1 566.6L975.1 579.4" class="e"/><path d="M1005.9 535.5h0M1001.6 548.3h0M979.1 566.6h0M975.1 579.4h0" class="d"/><path d="M777.5 552.5L745.2 572.5L742.1 558.5L774.4 538.8Z" fill="#bab6bf" stroke="#bab6bf" stroke-width="0.5"/><path d="M802.8 506.1L773.4 526.2L774.6 514.9L804.3 494.8Z" fill="#9d99a1" stroke="#9d99a1" stroke-width="0.5"/><path d="M841.9 638.9L805.5 664.5L794.6 655.1L830.0 630.5Z" fill="#c2bec7" stroke="#c2bec7" stroke-width="0.5"/><path d="M764.6 616.8L737.7 632.6L730.3 617.3L756.7 602.1Z" fill="#cfcbd5" stroke="#cfcbd5" stroke-width="0.5"/><path d="M764.6 616.8L737.7 632.6" stroke="#f08020" stroke-width="0.9" fill="none"/><path d="M764.6 616.8L756.7 602.1" stroke="#000" stroke-width="1"/><path d="M764.6 616.8h0" class="d"/><path d="M835.0 464.7L808.3 485.3L814.5 477.9L841.8 457.0Z" fill="#78757b" stroke="#78757b" stroke-width="0.5"/><path d="M934.0 394.2L912.4 417.4L929.3 422.9L951.2 398.8Z" fill="#b05950" stroke="#b05950" stroke-width=".5"/><path d="M951.2 398.8L929.3 422.9L918.8 419.5L940.5 396.0Z" fill="#cdc7b7"/><path d="M940.5 396.0L918.8 419.5" stroke="#7a4a3a" stroke-width=".8" stroke-opacity=".6"/><path d="M936.1 394.8L914.4 418.0" stroke="#7a2a1e" stroke-width="2.2" stroke-opacity=".45"/><path d="M940.9 396.1L919.1 419.6" stroke="#fff" stroke-width="2" stroke-opacity=".08"/><path d="M934.0 394.2L912.4 417.4M951.2 398.8L929.3 422.9M934.0 394.2L951.2 398.8M912.4 417.4L929.3 422.9" class="e"/><path d="M934.0 394.2h0M951.2 398.8h0M912.4 417.4h0M929.3 422.9h0" class="d"/><path d="M773.8 630.8L746.1 647.4L737.7 632.6L764.6 616.8Z" fill="#d0ccd6" stroke="#d0ccd6" stroke-width="0.5"/><path d="M773.8 630.8L746.1 647.4" stroke="#f08020" stroke-width="0.9" fill="none"/><path d="M773.8 630.8L764.6 616.8" stroke="#000" stroke-width="1"/><path d="M773.8 630.8h0" class="d"/><path d="M868.1 420.1L844.0 441.1L856.5 437.6L881.1 416.1Z" fill="#8c473f" stroke="#8c473f" stroke-width=".5"/><path d="M869.7 419.6L845.5 440.6" stroke="#7a2a1e" stroke-width="2.2" stroke-opacity=".45"/><path d="M873.3 418.5L849.0 439.7" stroke="#fff" stroke-width="2" stroke-opacity=".08"/><path d="M868.1 420.1L844.0 441.1M881.1 416.1L856.5 437.6M868.1 420.1L881.1 416.1M844.0 441.1L856.5 437.6" class="e"/><path d="M868.1 420.1h0M881.1 416.1h0M844.0 441.1h0M856.5 437.6h0" class="d"/><path d="M1011.1 443.7L988.8 472.0L998.1 488.3L1020.4 459.2Z" fill="#af584f" stroke="#af584f" stroke-width=".5"/><path d="M1011.1 443.7L988.8 472.0M1020.4 459.2L998.1 488.3M1011.1 443.7L1020.4 459.2M988.8 472.0L998.1 488.3" class="e"/><path d="M1011.1 443.7h0M1020.4 459.2h0M988.8 472.0h0M998.1 488.3h0" class="d"/><path d="M756.7 602.1L730.3 617.3L724.2 601.8L750.1 587.2Z" fill="#ccc8d2" stroke="#ccc8d2" stroke-width="0.5"/><path d="M756.7 602.1L730.3 617.3" stroke="#f08020" stroke-width="0.9" fill="none"/><path d="M756.7 602.1L750.1 587.2" stroke="#000" stroke-width="1"/><path d="M756.7 602.1h0" class="d"/><path d="M783.9 643.8L755.3 661.2L746.1 647.4L773.8 630.8Z" fill="#cecad4" stroke="#cecad4" stroke-width="0.5"/><path d="M783.9 643.8L755.3 661.2" stroke="#f08020" stroke-width="0.9" fill="none"/><path d="M783.9 643.8L773.8 630.8" stroke="#000" stroke-width="1"/><path d="M783.9 643.8h0" class="d"/><path d="M958.4 580.6L927.5 610.8L919.6 616.8L950.1 587.0Z" fill="#76747a" stroke="#76747a" stroke-width="0.5"/><path d="M951.2 398.8L929.3 422.9L946.2 431.5L968.3 406.4Z" fill="#b65c52" stroke="#b65c52" stroke-width=".5"/><path d="M951.2 398.8L929.3 422.9L939.8 428.2L961.8 403.5Z" fill="#d3cebd"/><path d="M961.8 403.5L939.8 428.2" stroke="#7a4a3a" stroke-width=".8" stroke-opacity=".6"/><path d="M951.2 398.8L929.3 422.9M968.3 406.4L946.2 431.5M951.2 398.8L968.3 406.4M929.3 422.9L946.2 431.5" class="e"/><path d="M951.2 398.8h0M968.3 406.4h0M929.3 422.9h0M946.2 431.5h0" class="d"/><path d="M999.0 429.4L976.7 456.6L988.8 472.0L1011.1 443.7Z" fill="#b55b52" stroke="#b55b52" stroke-width=".5"/><path d="M999.0 429.4L976.7 456.6M1011.1 443.7L988.8 472.0M999.0 429.4L1011.1 443.7M976.7 456.6L988.8 472.0" class="e"/><path d="M999.0 429.4h0M1011.1 443.7h0M976.7 456.6h0M988.8 472.0h0" class="d"/><path d="M750.1 587.2L724.2 601.8L719.5 586.7L745.2 572.5Z" fill="#c5c1cb" stroke="#c5c1cb" stroke-width="0.5"/><path d="M750.1 587.2L724.2 601.8" stroke="#f08020" stroke-width="0.9" fill="none"/><path d="M750.1 587.2L745.2 572.5" stroke="#000" stroke-width="1"/><path d="M750.1 587.2h0" class="d"/><path d="M909.9 620.0L875.4 648.9L865.0 648.4L898.8 620.3Z" fill="#9c99a1" stroke="#9c99a1" stroke-width="0.5"/><path d="M774.4 538.8L742.1 558.5L740.9 545.7L773.4 526.2Z" fill="#aeabb3" stroke="#aeabb3" stroke-width="0.5"/><path d="M853.7 645.0L816.4 671.6L805.5 664.5L841.9 638.9Z" fill="#b8b4bd" stroke="#b8b4bd" stroke-width="0.5"/><path d="M794.6 655.1L765.0 673.4L755.3 661.2L783.9 643.8Z" fill="#cac6d0" stroke="#cac6d0" stroke-width="0.5"/><path d="M794.6 655.1L765.0 673.4" stroke="#f08020" stroke-width="0.9" fill="none"/><path d="M794.6 655.1L783.9 643.8" stroke="#000" stroke-width="1"/><path d="M794.6 655.1h0" class="d"/><path d="M968.3 406.4L946.2 431.5L962.2 442.9L984.5 416.7Z" fill="#b85d54" stroke="#b85d54" stroke-width=".5"/><path d="M968.3 406.4L946.2 431.5M984.5 416.7L962.2 442.9M968.3 406.4L984.5 416.7M946.2 431.5L962.2 442.9" class="e"/><path d="M968.3 406.4h0M984.5 416.7h0M946.2 431.5h0M962.2 442.9h0" class="d"/><path d="M984.5 416.7L962.2 442.9L976.7 456.6L999.0 429.4Z" fill="#b85d54" stroke="#b85d54" stroke-width=".5"/><path d="M986.2 418.2L964.0 444.6" stroke="#7a2a1e" stroke-width="2.2" stroke-opacity=".45"/><path d="M990.3 421.8L968.0 448.4" stroke="#fff" stroke-width="2" stroke-opacity=".08"/><path d="M984.5 416.7L962.2 442.9M999.0 429.4L976.7 456.6M984.5 416.7L999.0 429.4M962.2 442.9L976.7 456.6" class="e"/><path d="M984.5 416.7h0M999.0 429.4h0M962.2 442.9h0M976.7 456.6h0" class="d"/><path d="M724.4 640.3L716.0 622.7L730.3 617.3L737.7 632.6Z" fill="#c36255" stroke="#c36255" stroke-width="0.5"/><path d="M724.4 640.3L716.0 622.7M737.7 632.6L730.3 617.3M724.4 640.3L737.7 632.6" stroke="#ff8a18" stroke-width="1" fill="none"/><path d="M724.4 640.3h0M737.7 632.6h0" stroke="#ff8a18" stroke-width="3.2" stroke-linecap="round"/><path d="M733.9 657.2L724.4 640.3L737.7 632.6L746.1 647.4Z" fill="#c36255" stroke="#c36255" stroke-width="0.5"/><path d="M733.9 657.2L724.4 640.3M746.1 647.4L737.7 632.6M733.9 657.2L746.1 647.4" stroke="#ff8a18" stroke-width="1" fill="none"/><path d="M733.9 657.2h0M746.1 647.4h0" stroke="#ff8a18" stroke-width="3.2" stroke-linecap="round"/><path d="M1006.8 520.8L979.8 551.6L979.1 566.6L1005.9 535.5Z" fill="#924a42" stroke="#924a42" stroke-width=".5"/><path d="M1005.9 535.5L979.1 566.6L979.6 557.3L1006.4 526.3Z" fill="#aaa598"/><path d="M1006.4 526.3L979.6 557.3" stroke="#7a4a3a" stroke-width=".8" stroke-opacity=".6"/><path d="M1006.8 520.8L979.8 551.6M1005.9 535.5L979.1 566.6M1006.8 520.8L1005.9 535.5M979.8 551.6L979.1 566.6" class="e"/><path d="M1006.8 520.8h0M1005.9 535.5h0M979.8 551.6h0M979.1 566.6h0" class="d"/><path d="M804.3 494.8L774.6 514.9L778.1 505.6L808.3 485.3Z" fill="#8c8990" stroke="#8c8990" stroke-width="0.5"/><path d="M716.0 622.7L709.0 605.1L724.2 601.8L730.3 617.3Z" fill="#c16154" stroke="#c16154" stroke-width="0.5"/><path d="M716.0 622.7L709.0 605.1M730.3 617.3L724.2 601.8M716.0 622.7L730.3 617.3" stroke="#ff8a18" stroke-width="1" fill="none"/><path d="M716.0 622.7h0M730.3 617.3h0" stroke="#ff8a18" stroke-width="3.2" stroke-linecap="round"/><path d="M881.1 416.1L856.5 437.6L870.9 437.5L896.1 415.1Z" fill="#9b4e46" stroke="#9b4e46" stroke-width=".5"/><path d="M881.1 416.1L856.5 437.6M896.1 415.1L870.9 437.5M881.1 416.1L896.1 415.1M856.5 437.6L870.9 437.5" class="e"/><path d="M881.1 416.1h0M896.1 415.1h0M856.5 437.6h0M870.9 437.5h0" class="d"/><path d="M833.8 447.4L806.8 467.7L816.4 461.9L844.0 441.1Z" fill="#753b35" stroke="#753b35" stroke-width=".5"/><path d="M833.8 447.4L806.8 467.7M844.0 441.1L816.4 461.9M833.8 447.4L844.0 441.1M806.8 467.7L816.4 461.9" class="e"/><path d="M833.8 447.4h0M844.0 441.1h0M806.8 467.7h0M816.4 461.9h0" class="d"/><path d="M744.3 673.1L733.9 657.2L746.1 647.4L755.3 661.2Z" fill="#c26254" stroke="#c26254" stroke-width="0.5"/><path d="M744.3 673.1L733.9 657.2M755.3 661.2L746.1 647.4M744.3 673.1L755.3 661.2" stroke="#ff8a18" stroke-width="1" fill="none"/><path d="M744.3 673.1h0M755.3 661.2h0" stroke="#ff8a18" stroke-width="3.2" stroke-linecap="round"/><path d="M745.2 572.5L719.5 586.7L716.4 572.5L742.1 558.5Z" fill="#bcb9c2" stroke="#bcb9c2" stroke-width="0.5"/><path d="M745.2 572.5L719.5 586.7" stroke="#f08020" stroke-width="0.9" fill="none"/><path d="M745.2 572.5L742.1 558.5" stroke="#000" stroke-width="1"/><path d="M745.2 572.5h0" class="d"/><path d="M805.5 664.5L774.9 683.7L765.0 673.4L794.6 655.1Z" fill="#c2bec8" stroke="#c2bec8" stroke-width="0.5"/><path d="M805.5 664.5L774.9 683.7" stroke="#f08020" stroke-width="0.9" fill="none"/><path d="M805.5 664.5L794.6 655.1" stroke="#000" stroke-width="1"/><path d="M805.5 664.5h0" class="d"/><path d="M709.0 605.1L703.6 587.8L719.5 586.7L724.2 601.8Z" fill="#bc5f52" stroke="#bc5f52" stroke-width="0.5"/><path d="M709.0 605.1L703.6 587.8M724.2 601.8L719.5 586.7M709.0 605.1L724.2 601.8" stroke="#ff8a18" stroke-width="1" fill="none"/><path d="M709.0 605.1h0M724.2 601.8h0" stroke="#ff8a18" stroke-width="3.2" stroke-linecap="round"/><path d="M975.1 579.4L943.5 610.8L936.9 620.7L968.0 589.6Z" fill="#723934" stroke="#723934" stroke-width=".5"/><path d="M975.1 579.4L943.5 610.8M968.0 589.6L936.9 620.7M975.1 579.4L968.0 589.6M943.5 610.8L936.9 620.7" class="e"/><path d="M975.1 579.4h0M968.0 589.6h0M943.5 610.8h0M936.9 620.7h0" class="d"/><path d="M773.4 526.2L740.9 545.7L741.7 534.5L774.6 514.9Z" fill="#a09da5" stroke="#a09da5" stroke-width="0.5"/><path d="M865.0 648.4L826.8 676.0L816.4 671.6L853.7 645.0Z" fill="#aba7b0" stroke="#aba7b0" stroke-width="0.5"/><path d="M755.4 687.3L744.3 673.1L755.3 661.2L765.0 673.4Z" fill="#bf6053" stroke="#bf6053" stroke-width="0.5"/><path d="M755.4 687.3L744.3 673.1M765.0 673.4L755.3 661.2M755.4 687.3L765.0 673.4" stroke="#ff8a18" stroke-width="1" fill="none"/><path d="M755.4 687.3h0M765.0 673.4h0" stroke="#ff8a18" stroke-width="3.2" stroke-linecap="round"/><path d="M919.6 616.8L884.5 646.5L875.4 648.9L909.9 620.0Z" fill="#8a878e" stroke="#8a878e" stroke-width="0.5"/><path d="M1004.2 504.8L977.1 535.2L979.8 551.6L1006.8 520.8Z" fill="#a05148" stroke="#a05148" stroke-width=".5"/><path d="M1004.2 504.8L977.1 535.2M1006.8 520.8L979.8 551.6M1004.2 504.8L1006.8 520.8M977.1 535.2L979.8 551.6" class="e"/><path d="M1004.2 504.8h0M1006.8 520.8h0M977.1 535.2h0M979.8 551.6h0" class="d"/><path d="M742.1 558.5L716.4 572.5L715.1 559.6L740.9 545.7Z" fill="#b1adb6" stroke="#b1adb6" stroke-width="0.5"/><path d="M742.1 558.5L716.4 572.5" stroke="#f08020" stroke-width="0.9" fill="none"/><path d="M742.1 558.5L740.9 545.7" stroke="#000" stroke-width="1"/><path d="M742.1 558.5h0" class="d"/><path d="M896.1 415.1L870.9 437.5L886.7 440.7L912.4 417.4Z" fill="#a8544c" stroke="#a8544c" stroke-width=".5"/><path d="M896.1 415.1L870.9 437.5M912.4 417.4L886.7 440.7M896.1 415.1L912.4 417.4M870.9 437.5L886.7 440.7" class="e"/><path d="M896.1 415.1h0M912.4 417.4h0M870.9 437.5h0M886.7 440.7h0" class="d"/><path d="M808.3 485.3L778.1 505.6L783.7 498.5L814.5 477.9Z" fill="#7c797f" stroke="#7c797f" stroke-width="0.5"/><path d="M703.6 587.8L699.9 571.5L716.4 572.5L719.5 586.7Z" fill="#b75c4f" stroke="#b75c4f" stroke-width="0.5"/><path d="M703.6 587.8L699.9 571.5M719.5 586.7L716.4 572.5M703.6 587.8L719.5 586.7" stroke="#ff8a18" stroke-width="1" fill="none"/><path d="M703.6 587.8h0M719.5 586.7h0" stroke="#ff8a18" stroke-width="3.2" stroke-linecap="round"/><path d="M816.4 671.6L784.7 691.7L774.9 683.7L805.5 664.5Z" fill="#b8b4bd" stroke="#b8b4bd" stroke-width="0.5"/><path d="M816.4 671.6L784.7 691.7" stroke="#f08020" stroke-width="0.9" fill="none"/><path d="M816.4 671.6L805.5 664.5" stroke="#000" stroke-width="1"/><path d="M816.4 671.6h0" class="d"/><path d="M844.0 441.1L816.4 461.9L828.2 459.2L856.5 437.6Z" fill="#8a463f" stroke="#8a463f" stroke-width=".5"/><path d="M845.5 440.6L817.8 461.6" stroke="#7a2a1e" stroke-width="2.2" stroke-opacity=".45"/><path d="M849.0 439.7L821.1 460.8" stroke="#fff" stroke-width="2" stroke-opacity=".08"/><path d="M844.0 441.1L816.4 461.9M856.5 437.6L828.2 459.2M844.0 441.1L856.5 437.6M816.4 461.9L828.2 459.2" class="e"/><path d="M844.0 441.1h0M856.5 437.6h0M816.4 461.9h0M828.2 459.2h0" class="d"/><path d="M766.6 699.3L755.4 687.3L765.0 673.4L774.9 683.7Z" fill="#ba5e51" stroke="#ba5e51" stroke-width="0.5"/><path d="M766.6 699.3L755.4 687.3M774.9 683.7L765.0 673.4M766.6 699.3L774.9 683.7" stroke="#ff8a18" stroke-width="1" fill="none"/><path d="M766.6 699.3h0M774.9 683.7h0" stroke="#ff8a18" stroke-width="3.2" stroke-linecap="round"/><path d="M998.1 488.3L971.0 518.0L977.1 535.2L1004.2 504.8Z" fill="#ab564d" stroke="#ab564d" stroke-width=".5"/><path d="M998.9 490.3L971.7 520.0" stroke="#7a2a1e" stroke-width="2.2" stroke-opacity=".45"/><path d="M1000.6 494.9L973.4 524.9" stroke="#fff" stroke-width="2" stroke-opacity=".08"/><path d="M998.1 488.3L971.0 518.0M1004.2 504.8L977.1 535.2M998.1 488.3L1004.2 504.8M971.0 518.0L977.1 535.2" class="e"/><path d="M998.1 488.3h0M1004.2 504.8h0M971.0 518.0h0M977.1 535.2h0" class="d"/><path d="M979.1 566.6L947.2 598.0L943.5 610.8L975.1 579.4Z" fill="#86443d" stroke="#86443d" stroke-width=".5"/><path d="M979.1 566.6L947.2 598.0L944.9 605.9L976.6 574.5Z" fill="#9c988c"/><path d="M976.6 574.5L944.9 605.9" stroke="#7a4a3a" stroke-width=".8" stroke-opacity=".6"/><path d="M979.1 566.6L947.2 598.0M975.1 579.4L943.5 610.8M979.1 566.6L975.1 579.4M947.2 598.0L943.5 610.8" class="e"/><path d="M979.1 566.6h0M975.1 579.4h0M947.2 598.0h0M943.5 610.8h0" class="d"/><path d="M774.6 514.9L741.7 534.5L744.6 525.3L778.1 505.6Z" fill="#8f8c93" stroke="#8f8c93" stroke-width="0.5"/><path d="M875.4 648.9L836.3 677.4L826.8 676.0L865.0 648.4Z" fill="#9b98a0" stroke="#9b98a0" stroke-width="0.5"/><path d="M912.4 417.4L886.7 440.7L903.2 447.3L929.3 422.9Z" fill="#b15950" stroke="#b15950" stroke-width=".5"/><path d="M929.3 422.9L903.2 447.3L893.0 443.2L918.8 419.5Z" fill="#cec8b8"/><path d="M918.8 419.5L893.0 443.2" stroke="#7a4a3a" stroke-width=".8" stroke-opacity=".6"/><path d="M914.4 418.0L888.7 441.5" stroke="#7a2a1e" stroke-width="2.2" stroke-opacity=".45"/><path d="M919.1 419.6L893.3 443.3" stroke="#fff" stroke-width="2" stroke-opacity=".08"/><path d="M912.4 417.4L886.7 440.7M929.3 422.9L903.2 447.3M912.4 417.4L929.3 422.9M886.7 440.7L903.2 447.3" class="e"/><path d="M912.4 417.4h0M929.3 422.9h0M886.7 440.7h0M903.2 447.3h0" class="d"/><path d="M927.5 610.8L891.8 641.0L884.5 646.5L919.6 616.8Z" fill="#716f74" stroke="#716f74" stroke-width="0.5"/><path d="M699.9 571.5L698.2 556.7L715.1 559.6L716.4 572.5Z" fill="#af584c" stroke="#af584c" stroke-width="0.5"/><path d="M699.9 571.5L698.2 556.7M716.4 572.5L715.1 559.6M699.9 571.5L716.4 572.5" stroke="#ff8a18" stroke-width="1" fill="none"/><path d="M699.9 571.5h0M716.4 572.5h0" stroke="#ff8a18" stroke-width="3.2" stroke-linecap="round"/><path d="M740.9 545.7L715.1 559.6L715.6 548.4L741.7 534.5Z" fill="#a39fa7" stroke="#a39fa7" stroke-width="0.5"/><path d="M740.9 545.7L715.1 559.6" stroke="#f08020" stroke-width="0.9" fill="none"/><path d="M740.9 545.7L741.7 534.5" stroke="#000" stroke-width="1"/><path d="M740.9 545.7h0" class="d"/><path d="M806.8 467.7L776.4 487.7L785.1 482.4L816.4 461.9Z" fill="#703832" stroke="#703832" stroke-width=".5"/><path d="M806.8 467.7L776.4 487.7M816.4 461.9L785.1 482.4M806.8 467.7L816.4 461.9M776.4 487.7L785.1 482.4" class="e"/><path d="M806.8 467.7h0M816.4 461.9h0M776.4 487.7h0M785.1 482.4h0" class="d"/><path d="M988.8 472.0L961.7 500.7L971.0 518.0L998.1 488.3Z" fill="#b35a51" stroke="#b35a51" stroke-width=".5"/><path d="M988.8 472.0L961.7 500.7M998.1 488.3L971.0 518.0M988.8 472.0L998.1 488.3M961.7 500.7L971.0 518.0" class="e"/><path d="M988.8 472.0h0M998.1 488.3h0M961.7 500.7h0M971.0 518.0h0" class="d"/><path d="M826.8 676.0L794.1 697.0L784.7 691.7L816.4 671.6Z" fill="#aaa7af" stroke="#aaa7af" stroke-width="0.5"/><path d="M826.8 676.0L794.1 697.0" stroke="#f08020" stroke-width="0.9" fill="none"/><path d="M826.8 676.0L816.4 671.6" stroke="#000" stroke-width="1"/><path d="M826.8 676.0h0" class="d"/><path d="M929.3 422.9L903.2 447.3L919.7 457.0L946.2 431.5Z" fill="#b75c53" stroke="#b75c53" stroke-width=".5"/><path d="M929.3 422.9L903.2 447.3L913.4 453.3L939.8 428.2Z" fill="#d5d0bf"/><path d="M939.8 428.2L913.4 453.3" stroke="#7a4a3a" stroke-width=".8" stroke-opacity=".6"/><path d="M929.3 422.9L903.2 447.3M946.2 431.5L919.7 457.0M929.3 422.9L946.2 431.5M903.2 447.3L919.7 457.0" class="e"/><path d="M929.3 422.9h0M946.2 431.5h0M903.2 447.3h0M919.7 457.0h0" class="d"/><path d="M777.8 708.7L766.6 699.3L774.9 683.7L784.7 691.7Z" fill="#b35a4e" stroke="#b35a4e" stroke-width="0.5"/><path d="M777.8 708.7L766.6 699.3M784.7 691.7L774.9 683.7M777.8 708.7L784.7 691.7" stroke="#ff8a18" stroke-width="1" fill="none"/><path d="M777.8 708.7h0M784.7 691.7h0" stroke="#ff8a18" stroke-width="3.2" stroke-linecap="round"/><path d="M856.5 437.6L828.2 459.2L841.8 459.9L870.9 437.5Z" fill="#9b4e46" stroke="#9b4e46" stroke-width=".5"/><path d="M856.5 437.6L828.2 459.2M870.9 437.5L841.8 459.9M856.5 437.6L870.9 437.5M828.2 459.2L841.8 459.9" class="e"/><path d="M856.5 437.6h0M870.9 437.5h0M828.2 459.2h0M841.8 459.9h0" class="d"/><path d="M976.7 456.6L949.7 484.3L961.7 500.7L988.8 472.0Z" fill="#b95d54" stroke="#b95d54" stroke-width=".5"/><path d="M976.7 456.6L949.7 484.3M988.8 472.0L961.7 500.7M976.7 456.6L988.8 472.0M949.7 484.3L961.7 500.7" class="e"/><path d="M976.7 456.6h0M988.8 472.0h0M949.7 484.3h0M961.7 500.7h0" class="d"/><path d="M946.2 431.5L919.7 457.0L935.4 469.5L962.2 442.9Z" fill="#bb5e55" stroke="#bb5e55" stroke-width=".5"/><path d="M946.2 431.5L919.7 457.0M962.2 442.9L935.4 469.5M946.2 431.5L962.2 442.9M919.7 457.0L935.4 469.5" class="e"/><path d="M946.2 431.5h0M962.2 442.9h0M919.7 457.0h0M935.4 469.5h0" class="d"/><path d="M962.2 442.9L935.4 469.5L949.7 484.3L976.7 456.6Z" fill="#bb5e55" stroke="#bb5e55" stroke-width=".5"/><path d="M964.0 444.6L937.1 471.3" stroke="#7a2a1e" stroke-width="2.2" stroke-opacity=".45"/><path d="M968.0 448.4L941.1 475.5" stroke="#fff" stroke-width="2" stroke-opacity=".08"/><path d="M962.2 442.9L935.4 469.5M976.7 456.6L949.7 484.3M962.2 442.9L976.7 456.6M935.4 469.5L949.7 484.3" class="e"/><path d="M962.2 442.9h0M976.7 456.6h0M935.4 469.5h0M949.7 484.3h0" class="d"/><path d="M979.8 551.6L947.7 582.8L947.2 598.0L979.1 566.6Z" fill="#974c44" stroke="#974c44" stroke-width=".5"/><path d="M979.1 566.6L947.2 598.0L947.5 588.6L979.6 557.3Z" fill="#afab9d"/><path d="M979.6 557.3L947.5 588.6" stroke="#7a4a3a" stroke-width=".8" stroke-opacity=".6"/><path d="M979.8 551.6L947.7 582.8M979.1 566.6L947.2 598.0M979.8 551.6L979.1 566.6M947.7 582.8L947.2 598.0" class="e"/><path d="M979.8 551.6h0M979.1 566.6h0M947.7 582.8h0M947.2 598.0h0" class="d"/><path d="M778.1 505.6L744.6 525.3L749.5 518.5L783.7 498.5Z" fill="#7f7d83" stroke="#7f7d83" stroke-width="0.5"/><path d="M884.5 646.5L844.5 675.7L836.3 677.4L875.4 648.9Z" fill="#88858c" stroke="#88858c" stroke-width="0.5"/><path d="M698.2 556.7L698.6 543.8L715.6 548.4L715.1 559.6Z" fill="#a75448" stroke="#a75448" stroke-width="0.5"/><path d="M698.2 556.7L698.6 543.8M715.1 559.6L715.6 548.4M698.2 556.7L715.1 559.6" stroke="#ff8a18" stroke-width="1" fill="none"/><path d="M698.2 556.7h0M715.1 559.6h0" stroke="#ff8a18" stroke-width="3.2" stroke-linecap="round"/><path d="M741.7 534.5L715.6 548.4L717.9 539.4L744.6 525.3Z" fill="#928f96" stroke="#928f96" stroke-width="0.5"/><path d="M741.7 534.5L715.6 548.4" stroke="#f08020" stroke-width="0.9" fill="none"/><path d="M741.7 534.5L744.6 525.3" stroke="#000" stroke-width="1"/><path d="M741.7 534.5h0" class="d"/><path d="M943.5 610.8L906.8 642.1L900.7 651.7L936.9 620.7Z" fill="#773c36" stroke="#773c36" stroke-width=".5"/><path d="M943.5 610.8L906.8 642.1M936.9 620.7L900.7 651.7M943.5 610.8L936.9 620.7M906.8 642.1L900.7 651.7" class="e"/><path d="M943.5 610.8h0M936.9 620.7h0M906.8 642.1h0M900.7 651.7h0" class="d"/><path d="M836.3 677.4L802.6 699.2L794.1 697.0L826.8 676.0Z" fill="#9a979e" stroke="#9a979e" stroke-width="0.5"/><path d="M836.3 677.4L802.6 699.2" stroke="#f08020" stroke-width="0.9" fill="none"/><path d="M836.3 677.4L826.8 676.0" stroke="#000" stroke-width="1"/><path d="M836.3 677.4h0" class="d"/><path d="M788.5 715.0L777.8 708.7L784.7 691.7L794.1 697.0Z" fill="#ab564a" stroke="#ab564a" stroke-width="0.5"/><path d="M788.5 715.0L777.8 708.7M794.1 697.0L784.7 691.7M788.5 715.0L794.1 697.0" stroke="#ff8a18" stroke-width="1" fill="none"/><path d="M788.5 715.0h0M794.1 697.0h0" stroke="#ff8a18" stroke-width="3.2" stroke-linecap="round"/><path d="M816.4 461.9L785.1 482.4L796.0 480.4L828.2 459.2Z" fill="#88453e" stroke="#88453e" stroke-width=".5"/><path d="M817.8 461.6L786.4 482.2" stroke="#7a2a1e" stroke-width="2.2" stroke-opacity=".45"/><path d="M821.1 460.8L789.5 481.6" stroke="#fff" stroke-width="2" stroke-opacity=".08"/><path d="M816.4 461.9L785.1 482.4M828.2 459.2L796.0 480.4M816.4 461.9L828.2 459.2M785.1 482.4L796.0 480.4" class="e"/><path d="M816.4 461.9h0M828.2 459.2h0M785.1 482.4h0M796.0 480.4h0" class="d"/><path d="M870.9 437.5L841.8 459.9L856.9 464.0L886.7 440.7Z" fill="#a8544c" stroke="#a8544c" stroke-width=".5"/><path d="M870.9 437.5L841.8 459.9M886.7 440.7L856.9 464.0M870.9 437.5L886.7 440.7M841.8 459.9L856.9 464.0" class="e"/><path d="M870.9 437.5h0M886.7 440.7h0M841.8 459.9h0M856.9 464.0h0" class="d"/><path d="M977.1 535.2L944.9 565.9L947.7 582.8L979.8 551.6Z" fill="#a4534a" stroke="#a4534a" stroke-width=".5"/><path d="M977.1 535.2L944.9 565.9M979.8 551.6L947.7 582.8M977.1 535.2L979.8 551.6M944.9 565.9L947.7 582.8" class="e"/><path d="M977.1 535.2h0M979.8 551.6h0M944.9 565.9h0M947.7 582.8h0" class="d"/><path d="M698.6 543.8L701.0 533.4L717.9 539.4L715.6 548.4Z" fill="#9d4f44" stroke="#9d4f44" stroke-width="0.5"/><path d="M698.6 543.8L701.0 533.4M715.6 548.4L717.9 539.4M698.6 543.8L715.6 548.4" stroke="#ff8a18" stroke-width="1" fill="none"/><path d="M698.6 543.8h0M715.6 548.4h0" stroke="#ff8a18" stroke-width="3.2" stroke-linecap="round"/><path d="M744.6 525.3L717.9 539.4L722.1 532.9L749.5 518.5Z" fill="#828086" stroke="#828086" stroke-width="0.5"/><path d="M744.6 525.3L717.9 539.4" stroke="#f08020" stroke-width="0.9" fill="none"/><path d="M744.6 525.3L749.5 518.5" stroke="#000" stroke-width="1"/><path d="M744.6 525.3h0" class="d"/><path d="M947.2 598.0L910.1 629.4L906.8 642.1L943.5 610.8Z" fill="#8b463f" stroke="#8b463f" stroke-width=".5"/><path d="M947.2 598.0L910.1 629.4L908.1 637.3L944.9 605.9Z" fill="#a19d90"/><path d="M944.9 605.9L908.1 637.3" stroke="#7a4a3a" stroke-width=".8" stroke-opacity=".6"/><path d="M947.2 598.0L910.1 629.4M943.5 610.8L906.8 642.1M947.2 598.0L943.5 610.8M910.1 629.4L906.8 642.1" class="e"/><path d="M947.2 598.0h0M943.5 610.8h0M910.1 629.4h0M906.8 642.1h0" class="d"/><path d="M886.7 440.7L856.9 464.0L872.7 471.7L903.2 447.3Z" fill="#b25a51" stroke="#b25a51" stroke-width=".5"/><path d="M903.2 447.3L872.7 471.7L862.9 466.9L893.0 443.2Z" fill="#cfc9b9"/><path d="M893.0 443.2L862.9 466.9" stroke="#7a4a3a" stroke-width=".8" stroke-opacity=".6"/><path d="M888.7 441.5L858.8 465.0" stroke="#7a2a1e" stroke-width="2.2" stroke-opacity=".45"/><path d="M893.3 443.3L863.2 467.1" stroke="#fff" stroke-width="2" stroke-opacity=".08"/><path d="M886.7 440.7L856.9 464.0M903.2 447.3L872.7 471.7M886.7 440.7L903.2 447.3M856.9 464.0L872.7 471.7" class="e"/><path d="M886.7 440.7h0M903.2 447.3h0M856.9 464.0h0M872.7 471.7h0" class="d"/><path d="M844.5 675.7L809.9 698.1L802.6 699.2L836.3 677.4Z" fill="#858389" stroke="#858389" stroke-width="0.5"/><path d="M844.5 675.7L809.9 698.1" stroke="#f08020" stroke-width="0.9" fill="none"/><path d="M844.5 675.7L836.3 677.4" stroke="#000" stroke-width="1"/><path d="M844.5 675.7h0" class="d"/><path d="M971.0 518.0L938.7 547.9L944.9 565.9L977.1 535.2Z" fill="#af584f" stroke="#af584f" stroke-width=".5"/><path d="M971.7 520.0L939.5 550.1" stroke="#7a2a1e" stroke-width="2.2" stroke-opacity=".45"/><path d="M973.4 524.9L941.2 555.1" stroke="#fff" stroke-width="2" stroke-opacity=".08"/><path d="M971.0 518.0L938.7 547.9M977.1 535.2L944.9 565.9M971.0 518.0L977.1 535.2M938.7 547.9L944.9 565.9" class="e"/><path d="M971.0 518.0h0M977.1 535.2h0M938.7 547.9h0M944.9 565.9h0" class="d"/><path d="M798.2 717.9L788.5 715.0L794.1 697.0L802.6 699.2Z" fill="#a15146" stroke="#a15146" stroke-width="0.5"/><path d="M798.2 717.9L788.5 715.0M802.6 699.2L794.1 697.0M798.2 717.9L802.6 699.2" stroke="#ff8a18" stroke-width="1" fill="none"/><path d="M798.2 717.9h0M802.6 699.2h0" stroke="#ff8a18" stroke-width="3.2" stroke-linecap="round"/><path d="M828.2 459.2L796.0 480.4L808.8 482.0L841.8 459.9Z" fill="#9a4d46" stroke="#9a4d46" stroke-width=".5"/><path d="M828.2 459.2L796.0 480.4M841.8 459.9L808.8 482.0M828.2 459.2L841.8 459.9M796.0 480.4L808.8 482.0" class="e"/><path d="M828.2 459.2h0M841.8 459.9h0M796.0 480.4h0M808.8 482.0h0" class="d"/><path d="M903.2 447.3L872.7 471.7L888.6 482.6L919.7 457.0Z" fill="#b95d54" stroke="#b95d54" stroke-width=".5"/><path d="M903.2 447.3L872.7 471.7L882.6 478.5L913.4 453.3Z" fill="#d7d2c1"/><path d="M913.4 453.3L882.6 478.5" stroke="#7a4a3a" stroke-width=".8" stroke-opacity=".6"/><path d="M903.2 447.3L872.7 471.7M919.7 457.0L888.6 482.6M903.2 447.3L919.7 457.0M872.7 471.7L888.6 482.6" class="e"/><path d="M903.2 447.3h0M919.7 457.0h0M872.7 471.7h0M888.6 482.6h0" class="d"/><path d="M961.7 500.7L929.6 529.8L938.7 547.9L971.0 518.0Z" fill="#b75c53" stroke="#b75c53" stroke-width=".5"/><path d="M961.7 500.7L929.6 529.8M971.0 518.0L938.7 547.9M961.7 500.7L971.0 518.0M929.6 529.8L938.7 547.9" class="e"/><path d="M961.7 500.7h0M971.0 518.0h0M929.6 529.8h0M938.7 547.9h0" class="d"/><path d="M785.1 482.4L750.4 502.4L760.2 501.2L796.0 480.4Z" fill="#86443d" stroke="#86443d" stroke-width=".5"/><path d="M786.4 482.2L751.5 502.3" stroke="#7a2a1e" stroke-width="2.2" stroke-opacity=".45"/><path d="M789.5 481.6L754.3 501.9" stroke="#fff" stroke-width="2" stroke-opacity=".08"/><path d="M785.1 482.4L750.4 502.4M796.0 480.4L760.2 501.2M785.1 482.4L796.0 480.4M750.4 502.4L760.2 501.2" class="e"/><path d="M785.1 482.4h0M796.0 480.4h0M750.4 502.4h0M760.2 501.2h0" class="d"/><path d="M906.8 642.1L864.9 673.1L859.5 682.3L900.7 651.7Z" fill="#7b3e38" stroke="#7b3e38" stroke-width=".5"/><path d="M906.8 642.1L864.9 673.1M900.7 651.7L859.5 682.3M906.8 642.1L900.7 651.7M864.9 673.1L859.5 682.3" class="e"/><path d="M906.8 642.1h0M900.7 651.7h0M864.9 673.1h0M859.5 682.3h0" class="d"/><path d="M701.0 533.4L705.5 525.9L722.1 532.9L717.9 539.4Z" fill="#934a40" stroke="#934a40" stroke-width="0.5"/><path d="M701.0 533.4L705.5 525.9M717.9 539.4L722.1 532.9M701.0 533.4L717.9 539.4" stroke="#ff8a18" stroke-width="1" fill="none"/><path d="M701.0 533.4h0M717.9 539.4h0" stroke="#ff8a18" stroke-width="3.2" stroke-linecap="round"/><path d="M919.7 457.0L888.6 482.6L903.9 496.3L935.4 469.5Z" fill="#bd5f56" stroke="#bd5f56" stroke-width=".5"/><path d="M919.7 457.0L888.6 482.6M935.4 469.5L903.9 496.3M919.7 457.0L935.4 469.5M888.6 482.6L903.9 496.3" class="e"/><path d="M919.7 457.0h0M935.4 469.5h0M888.6 482.6h0M903.9 496.3h0" class="d"/><path d="M749.5 518.5L722.1 532.9L728.0 529.4L756.3 514.6Z" fill="#6c6a6f" stroke="#6c6a6f" stroke-width="0.5"/><path d="M749.5 518.5L722.1 532.9" stroke="#f08020" stroke-width="0.9" fill="none"/><path d="M749.5 518.5L756.3 514.6" stroke="#000" stroke-width="1"/><path d="M749.5 518.5h0" class="d"/><path d="M947.7 582.8L910.3 614.0L910.1 629.4L947.2 598.0Z" fill="#9b4e46" stroke="#9b4e46" stroke-width=".5"/><path d="M947.2 598.0L910.1 629.4L910.2 619.9L947.5 588.6Z" fill="#b4afa1"/><path d="M947.5 588.6L910.2 619.9" stroke="#7a4a3a" stroke-width=".8" stroke-opacity=".6"/><path d="M947.7 582.8L910.3 614.0M947.2 598.0L910.1 629.4M947.7 582.8L947.2 598.0M910.3 614.0L910.1 629.4" class="e"/><path d="M947.7 582.8h0M947.2 598.0h0M910.3 614.0h0M910.1 629.4h0" class="d"/><path d="M949.7 484.3L917.7 512.3L929.6 529.8L961.7 500.7Z" fill="#bc5f55" stroke="#bc5f55" stroke-width=".5"/><path d="M949.7 484.3L917.7 512.3M961.7 500.7L929.6 529.8M949.7 484.3L961.7 500.7M917.7 512.3L929.6 529.8" class="e"/><path d="M949.7 484.3h0M961.7 500.7h0M917.7 512.3h0M929.6 529.8h0" class="d"/><path d="M935.4 469.5L903.9 496.3L917.7 512.3L949.7 484.3Z" fill="#be6056" stroke="#be6056" stroke-width=".5"/><path d="M937.1 471.3L905.5 498.2" stroke="#7a2a1e" stroke-width="2.2" stroke-opacity=".45"/><path d="M941.1 475.5L909.4 502.7" stroke="#fff" stroke-width="2" stroke-opacity=".08"/><path d="M935.4 469.5L903.9 496.3M949.7 484.3L917.7 512.3M935.4 469.5L949.7 484.3M903.9 496.3L917.7 512.3" class="e"/><path d="M935.4 469.5h0M949.7 484.3h0M903.9 496.3h0M917.7 512.3h0" class="d"/><path d="M841.8 459.9L808.8 482.0L822.9 487.2L856.9 464.0Z" fill="#a8544c" stroke="#a8544c" stroke-width=".5"/><path d="M841.8 459.9L808.8 482.0M856.9 464.0L822.9 487.2M841.8 459.9L856.9 464.0M808.8 482.0L822.9 487.2" class="e"/><path d="M841.8 459.9h0M856.9 464.0h0M808.8 482.0h0M822.9 487.2h0" class="d"/><path d="M806.6 717.0L798.2 717.9L802.6 699.2L809.9 698.1Z" fill="#964b41" stroke="#964b41" stroke-width="0.5"/><path d="M806.6 717.0L798.2 717.9M809.9 698.1L802.6 699.2M806.6 717.0L809.9 698.1" stroke="#ff8a18" stroke-width="1" fill="none"/><path d="M806.6 717.0h0M809.9 698.1h0" stroke="#ff8a18" stroke-width="3.2" stroke-linecap="round"/><path d="M859.5 682.3L813.2 712.1L806.6 717.0L851.8 687.8Z" fill="#68342f" stroke="#68342f" stroke-width=".5"/><path d="M859.5 682.3L813.2 712.1M851.8 687.8L806.6 717.0" class="eo"/><path d="M859.5 682.3L851.8 687.8" class="e"/><path d="M813.2 712.1L806.6 717.0" class="eo"/><path d="M859.5 682.3h0M851.8 687.8h0" class="d"/><path d="M813.2 712.1h0M806.6 717.0h0" class="do"/><path d="M944.9 565.9L907.3 596.6L910.3 614.0L947.7 582.8Z" fill="#a8554c" stroke="#a8554c" stroke-width=".5"/><path d="M944.9 565.9L907.3 596.6M947.7 582.8L910.3 614.0M944.9 565.9L947.7 582.8M907.3 596.6L910.3 614.0" class="e"/><path d="M944.9 565.9h0M947.7 582.8h0M907.3 596.6h0M910.3 614.0h0" class="d"/><path d="M796.0 480.4L760.2 501.2L771.7 503.6L808.8 482.0Z" fill="#994d45" stroke="#994d45" stroke-width=".5"/><path d="M796.0 480.4L760.2 501.2M808.8 482.0L771.7 503.6M796.0 480.4L808.8 482.0M760.2 501.2L771.7 503.6" class="e"/><path d="M796.0 480.4h0M808.8 482.0h0M760.2 501.2h0M771.7 503.6h0" class="d"/><path d="M910.1 629.4L867.6 660.5L864.9 673.1L906.8 642.1Z" fill="#8e4840" stroke="#8e4840" stroke-width=".5"/><path d="M910.1 629.4L867.6 660.5L865.9 668.3L908.1 637.3Z" fill="#a5a194"/><path d="M908.1 637.3L865.9 668.3" stroke="#7a4a3a" stroke-width=".8" stroke-opacity=".6"/><path d="M910.1 629.4L867.6 660.5M906.8 642.1L864.9 673.1M910.1 629.4L906.8 642.1M867.6 660.5L864.9 673.1" class="e"/><path d="M910.1 629.4h0M906.8 642.1h0M867.6 660.5h0M864.9 673.1h0" class="d"/><path d="M856.9 464.0L822.9 487.2L837.8 496.0L872.7 471.7Z" fill="#b35a51" stroke="#b35a51" stroke-width=".5"/><path d="M872.7 471.7L837.8 496.0L828.5 490.5L862.9 466.9Z" fill="#d0caba"/><path d="M862.9 466.9L828.5 490.5" stroke="#7a4a3a" stroke-width=".8" stroke-opacity=".6"/><path d="M858.8 465.0L824.7 488.2" stroke="#7a2a1e" stroke-width="2.2" stroke-opacity=".45"/><path d="M863.2 467.1L828.8 490.7" stroke="#fff" stroke-width="2" stroke-opacity=".08"/><path d="M856.9 464.0L822.9 487.2M872.7 471.7L837.8 496.0M856.9 464.0L872.7 471.7M822.9 487.2L837.8 496.0" class="e"/><path d="M856.9 464.0h0M872.7 471.7h0M822.9 487.2h0M837.8 496.0h0" class="d"/><path d="M705.5 525.9L712.1 521.7L728.0 529.4L722.1 532.9Z" fill="#8a453c" stroke="#8a453c" stroke-width="0.5"/><path d="M705.5 525.9L712.1 521.7M722.1 532.9L728.0 529.4M705.5 525.9L722.1 532.9" stroke="#ff8a18" stroke-width="1" fill="none"/><path d="M705.5 525.9h0M722.1 532.9h0" stroke="#ff8a18" stroke-width="3.2" stroke-linecap="round"/><path d="M750.4 502.4L712.1 521.7L720.6 521.2L760.2 501.2Z" fill="#85433c" stroke="#85433c" stroke-width=".5"/><path d="M751.5 502.3L713.1 521.7" stroke="#7a2a1e" stroke-width="2.2" stroke-opacity=".45"/><path d="M754.3 501.9L715.5 521.5" stroke="#fff" stroke-width="2" stroke-opacity=".08"/><path d="M750.4 502.4L712.1 521.7M760.2 501.2L720.6 521.2" class="eo"/><path d="M750.4 502.4L760.2 501.2" class="e"/><path d="M712.1 521.7L720.6 521.2" class="eo"/><path d="M750.4 502.4h0M760.2 501.2h0" class="d"/><path d="M712.1 521.7h0M720.6 521.2h0" class="do"/><path d="M938.7 547.9L901.2 577.9L907.3 596.6L944.9 565.9Z" fill="#b35a51" stroke="#b35a51" stroke-width=".5"/><path d="M939.5 550.1L901.9 580.1" stroke="#7a2a1e" stroke-width="2.2" stroke-opacity=".45"/><path d="M941.2 555.1L903.6 585.4" stroke="#fff" stroke-width="2" stroke-opacity=".08"/><path d="M938.7 547.9L901.2 577.9M944.9 565.9L907.3 596.6M938.7 547.9L944.9 565.9M901.2 577.9L907.3 596.6" class="e"/><path d="M938.7 547.9h0M944.9 565.9h0M901.2 577.9h0M907.3 596.6h0" class="d"/><path d="M813.2 712.1L806.6 717.0L809.9 698.1L815.6 693.6Z" fill="#89453b" stroke="#89453b" stroke-width="0.5"/><path d="M813.2 712.1L806.6 717.0M815.6 693.6L809.9 698.1M813.2 712.1L815.6 693.6" stroke="#ff8a18" stroke-width="1" fill="none"/><path d="M813.2 712.1h0M815.6 693.6h0" stroke="#ff8a18" stroke-width="3.2" stroke-linecap="round"/><path d="M864.9 673.1L817.7 703.4L813.2 712.1L859.5 682.3Z" fill="#7e4039" stroke="#7e4039" stroke-width=".5"/><path d="M864.9 673.1L817.7 703.4M859.5 682.3L813.2 712.1" class="eo"/><path d="M864.9 673.1L859.5 682.3" class="e"/><path d="M817.7 703.4L813.2 712.1" class="eo"/><path d="M864.9 673.1h0M859.5 682.3h0" class="d"/><path d="M817.7 703.4h0M813.2 712.1h0" class="do"/><path d="M872.7 471.7L837.8 496.0L852.9 508.1L888.6 482.6Z" fill="#bb5e55" stroke="#bb5e55" stroke-width=".5"/><path d="M872.7 471.7L837.8 496.0L847.2 503.5L882.6 478.5Z" fill="#d9d3c2"/><path d="M882.6 478.5L847.2 503.5" stroke="#7a4a3a" stroke-width=".8" stroke-opacity=".6"/><path d="M872.7 471.7L837.8 496.0M888.6 482.6L852.9 508.1M872.7 471.7L888.6 482.6M837.8 496.0L852.9 508.1" class="e"/><path d="M872.7 471.7h0M888.6 482.6h0M837.8 496.0h0M852.9 508.1h0" class="d"/><path d="M929.6 529.8L892.2 558.8L901.2 577.9L938.7 547.9Z" fill="#bb5e55" stroke="#bb5e55" stroke-width=".5"/><path d="M929.6 529.8L892.2 558.8M938.7 547.9L901.2 577.9M929.6 529.8L938.7 547.9M892.2 558.8L901.2 577.9" class="e"/><path d="M929.6 529.8h0M938.7 547.9h0M892.2 558.8h0M901.2 577.9h0" class="d"/><path d="M808.8 482.0L771.7 503.6L784.6 509.9L822.9 487.2Z" fill="#a8554c" stroke="#a8554c" stroke-width=".5"/><path d="M808.8 482.0L771.7 503.6M822.9 487.2L784.6 509.9M808.8 482.0L822.9 487.2M771.7 503.6L784.6 509.9" class="e"/><path d="M808.8 482.0h0M822.9 487.2h0M771.7 503.6h0M784.6 509.9h0" class="d"/><path d="M910.3 614.0L867.4 644.9L867.6 660.5L910.1 629.4Z" fill="#9f5048" stroke="#9f5048" stroke-width=".5"/><path d="M910.1 629.4L867.6 660.5L867.5 650.9L910.2 619.9Z" fill="#b8b4a5"/><path d="M910.2 619.9L867.5 650.9" stroke="#7a4a3a" stroke-width=".8" stroke-opacity=".6"/><path d="M910.3 614.0L867.4 644.9M910.1 629.4L867.6 660.5M910.3 614.0L910.1 629.4M867.4 644.9L867.6 660.5" class="e"/><path d="M910.3 614.0h0M910.1 629.4h0M867.4 644.9h0M867.6 660.5h0" class="d"/><path d="M888.6 482.6L852.9 508.1L867.4 523.0L903.9 496.3Z" fill="#c06157" stroke="#c06157" stroke-width=".5"/><path d="M888.6 482.6L852.9 508.1M903.9 496.3L867.4 523.0M888.6 482.6L903.9 496.3M852.9 508.1L867.4 523.0" class="e"/><path d="M888.6 482.6h0M903.9 496.3h0M852.9 508.1h0M867.4 523.0h0" class="d"/><path d="M712.1 521.7L720.6 521.2L735.6 529.1L728.0 529.4Z" fill="#7f4037" stroke="#7f4037" stroke-width="0.5"/><path d="M712.1 521.7L720.6 521.2M728.0 529.4L735.6 529.1M712.1 521.7L728.0 529.4" stroke="#ff8a18" stroke-width="1" fill="none"/><path d="M712.1 521.7h0M728.0 529.4h0" stroke="#ff8a18" stroke-width="3.2" stroke-linecap="round"/><path d="M917.7 512.3L880.8 540.2L892.2 558.8L929.6 529.8Z" fill="#c06157" stroke="#c06157" stroke-width=".5"/><path d="M917.7 512.3L880.8 540.2M929.6 529.8L892.2 558.8M917.7 512.3L929.6 529.8M880.8 540.2L892.2 558.8" class="e"/><path d="M917.7 512.3h0M929.6 529.8h0M880.8 540.2h0M892.2 558.8h0" class="d"/><path d="M903.9 496.3L867.4 523.0L880.8 540.2L917.7 512.3Z" fill="#c16158" stroke="#c16158" stroke-width=".5"/><path d="M905.5 498.2L869.0 525.1" stroke="#7a2a1e" stroke-width="2.2" stroke-opacity=".45"/><path d="M909.4 502.7L872.8 529.9" stroke="#fff" stroke-width="2" stroke-opacity=".08"/><path d="M903.9 496.3L867.4 523.0M917.7 512.3L880.8 540.2M903.9 496.3L917.7 512.3M867.4 523.0L880.8 540.2" class="e"/><path d="M903.9 496.3h0M917.7 512.3h0M867.4 523.0h0M880.8 540.2h0" class="d"/><path d="M760.2 501.2L720.6 521.2L730.8 524.6L771.7 503.6Z" fill="#984d45" stroke="#984d45" stroke-width=".5"/><path d="M760.2 501.2L720.6 521.2M771.7 503.6L730.8 524.6" class="eo"/><path d="M760.2 501.2L771.7 503.6" class="e"/><path d="M720.6 521.2L730.8 524.6" class="eo"/><path d="M760.2 501.2h0M771.7 503.6h0" class="d"/><path d="M720.6 521.2h0M730.8 524.6h0" class="do"/><path d="M817.7 703.4L813.2 712.1L815.6 693.6L819.5 685.9Z" fill="#7b3e35" stroke="#7b3e35" stroke-width="0.5"/><path d="M817.7 703.4L813.2 712.1M819.5 685.9L815.6 693.6M817.7 703.4L819.5 685.9" stroke="#ff8a18" stroke-width="1" fill="none"/><path d="M817.7 703.4h0M819.5 685.9h0" stroke="#ff8a18" stroke-width="3.2" stroke-linecap="round"/><path d="M867.6 660.5L819.7 690.9L817.7 703.4L864.9 673.1Z" fill="#924942" stroke="#924942" stroke-width=".5"/><path d="M867.6 660.5L819.7 690.9L818.4 698.7L865.9 668.3Z" fill="#a9a598"/><path d="M865.9 668.3L818.4 698.7" stroke="#7a4a3a" stroke-width=".8" stroke-opacity=".6"/><path d="M867.6 660.5L819.7 690.9M864.9 673.1L817.7 703.4" class="eo"/><path d="M867.6 660.5L864.9 673.1" class="e"/><path d="M819.7 690.9L817.7 703.4" class="eo"/><path d="M867.6 660.5h0M864.9 673.1h0" class="d"/><path d="M819.7 690.9h0M817.7 703.4h0" class="do"/><path d="M822.9 487.2L784.6 509.9L798.4 519.8L837.8 496.0Z" fill="#b45a51" stroke="#b45a51" stroke-width=".5"/><path d="M837.8 496.0L798.4 519.8L789.9 513.7L828.5 490.5Z" fill="#d1cbbb"/><path d="M828.5 490.5L789.9 513.7" stroke="#7a4a3a" stroke-width=".8" stroke-opacity=".6"/><path d="M824.7 488.2L786.3 511.1" stroke="#7a2a1e" stroke-width="2.2" stroke-opacity=".45"/><path d="M828.8 490.7L790.1 513.9" stroke="#fff" stroke-width="2" stroke-opacity=".08"/><path d="M822.9 487.2L784.6 509.9M837.8 496.0L798.4 519.8M822.9 487.2L837.8 496.0M784.6 509.9L798.4 519.8" class="e"/><path d="M822.9 487.2h0M837.8 496.0h0M784.6 509.9h0M798.4 519.8h0" class="d"/><path d="M907.3 596.6L864.3 627.0L867.4 644.9L910.3 614.0Z" fill="#ac574e" stroke="#ac574e" stroke-width=".5"/><path d="M907.3 596.6L864.3 627.0M910.3 614.0L867.4 644.9M907.3 596.6L910.3 614.0M864.3 627.0L867.4 644.9" class="e"/><path d="M907.3 596.6h0M910.3 614.0h0M864.3 627.0h0M867.4 644.9h0" class="d"/><path d="M720.6 521.2L730.8 524.6L744.5 532.1L735.6 529.1Z" fill="#723931" stroke="#723931" stroke-width="0.5"/><path d="M720.6 521.2L730.8 524.6M735.6 529.1L744.5 532.1M720.6 521.2L735.6 529.1" stroke="#ff8a18" stroke-width="1" fill="none"/><path d="M720.6 521.2h0M735.6 529.1h0" stroke="#ff8a18" stroke-width="3.2" stroke-linecap="round"/><path d="M771.7 503.6L730.8 524.6L742.2 531.9L784.6 509.9Z" fill="#a8554c" stroke="#a8554c" stroke-width=".5"/><path d="M771.7 503.6L730.8 524.6M784.6 509.9L742.2 531.9" class="eo"/><path d="M771.7 503.6L784.6 509.9" class="e"/><path d="M730.8 524.6L742.2 531.9" class="eo"/><path d="M771.7 503.6h0M784.6 509.9h0" class="d"/><path d="M730.8 524.6h0M742.2 531.9h0" class="do"/><path d="M837.8 496.0L798.4 519.8L812.4 533.1L852.9 508.1Z" fill="#bc5f55" stroke="#bc5f55" stroke-width=".5"/><path d="M837.8 496.0L798.4 519.8L807.1 528.1L847.2 503.5Z" fill="#dbd5c4"/><path d="M847.2 503.5L807.1 528.1" stroke="#7a4a3a" stroke-width=".8" stroke-opacity=".6"/><path d="M837.8 496.0L798.4 519.8M852.9 508.1L812.4 533.1M837.8 496.0L852.9 508.1M798.4 519.8L812.4 533.1" class="e"/><path d="M837.8 496.0h0M852.9 508.1h0M798.4 519.8h0M812.4 533.1h0" class="d"/><path d="M901.2 577.9L858.2 607.6L864.3 627.0L907.3 596.6Z" fill="#b75c53" stroke="#b75c53" stroke-width=".5"/><path d="M901.9 580.1L859.0 609.9" stroke="#7a2a1e" stroke-width="2.2" stroke-opacity=".45"/><path d="M903.6 585.4L860.7 615.3" stroke="#fff" stroke-width="2" stroke-opacity=".08"/><path d="M901.2 577.9L858.2 607.6M907.3 596.6L864.3 627.0M901.2 577.9L907.3 596.6M858.2 607.6L864.3 627.0" class="e"/><path d="M901.2 577.9h0M907.3 596.6h0M858.2 607.6h0M864.3 627.0h0" class="d"/><path d="M819.7 690.9L817.7 703.4L819.5 685.9L821.2 675.0Z" fill="#6c362f" stroke="#6c362f" stroke-width="0.5"/><path d="M819.7 690.9L817.7 703.4M821.2 675.0L819.5 685.9M819.7 690.9L821.2 675.0" stroke="#ff8a18" stroke-width="1" fill="none"/><path d="M819.7 690.9h0M821.2 675.0h0" stroke="#ff8a18" stroke-width="3.2" stroke-linecap="round"/><path d="M867.4 644.9L819.1 675.2L819.7 690.9L867.6 660.5Z" fill="#a25249" stroke="#a25249" stroke-width=".5"/><path d="M867.6 660.5L819.7 690.9L819.3 681.2L867.5 650.9Z" fill="#bcb7a8"/><path d="M867.5 650.9L819.3 681.2" stroke="#7a4a3a" stroke-width=".8" stroke-opacity=".6"/><path d="M867.4 644.9L819.1 675.2M867.6 660.5L819.7 690.9" class="eo"/><path d="M867.4 644.9L867.6 660.5" class="e"/><path d="M819.1 675.2L819.7 690.9" class="eo"/><path d="M867.4 644.9h0M867.6 660.5h0" class="d"/><path d="M819.1 675.2h0M819.7 690.9h0" class="do"/><path d="M852.9 508.1L812.4 533.1L826.1 549.4L867.4 523.0Z" fill="#c26258" stroke="#c26258" stroke-width=".5"/><path d="M852.9 508.1L812.4 533.1M867.4 523.0L826.1 549.4M852.9 508.1L867.4 523.0M812.4 533.1L826.1 549.4" class="e"/><path d="M852.9 508.1h0M867.4 523.0h0M812.4 533.1h0M826.1 549.4h0" class="d"/><path d="M892.2 558.8L849.6 587.5L858.2 607.6L901.2 577.9Z" fill="#be6056" stroke="#be6056" stroke-width=".5"/><path d="M892.2 558.8L849.6 587.5M901.2 577.9L858.2 607.6M892.2 558.8L901.2 577.9M849.6 587.5L858.2 607.6" class="e"/><path d="M892.2 558.8h0M901.2 577.9h0M849.6 587.5h0M858.2 607.6h0" class="d"/><path d="M867.4 523.0L826.1 549.4L838.7 567.8L880.8 540.2Z" fill="#c46359" stroke="#c46359" stroke-width=".5"/><path d="M869.0 525.1L827.6 551.6" stroke="#7a2a1e" stroke-width="2.2" stroke-opacity=".45"/><path d="M872.8 529.9L831.1 556.7" stroke="#fff" stroke-width="2" stroke-opacity=".08"/><path d="M867.4 523.0L826.1 549.4M880.8 540.2L838.7 567.8M867.4 523.0L880.8 540.2M826.1 549.4L838.7 567.8" class="e"/><path d="M867.4 523.0h0M880.8 540.2h0M826.1 549.4h0M838.7 567.8h0" class="d"/><path d="M880.8 540.2L838.7 567.8L849.6 587.5L892.2 558.8Z" fill="#c36258" stroke="#c36258" stroke-width=".5"/><path d="M880.8 540.2L838.7 567.8M892.2 558.8L849.6 587.5M880.8 540.2L892.2 558.8M838.7 567.8L849.6 587.5" class="e"/><path d="M880.8 540.2h0M892.2 558.8h0M838.7 567.8h0M849.6 587.5h0" class="d"/><path d="M784.6 509.9L742.2 531.9L754.6 543.0L798.4 519.8Z" fill="#b45b52" stroke="#b45b52" stroke-width=".5"/><path d="M798.4 519.8L754.6 543.0L746.9 536.1L789.9 513.7Z" fill="#d2ccbc"/><path d="M789.9 513.7L746.9 536.1" stroke="#7a4a3a" stroke-width=".8" stroke-opacity=".6"/><path d="M786.3 511.1L743.7 533.2" stroke="#7a2a1e" stroke-width="2.2" stroke-opacity=".45"/><path d="M790.1 513.9L747.2 536.3" stroke="#fff" stroke-width="2" stroke-opacity=".08"/><path d="M784.6 509.9L742.2 531.9M798.4 519.8L754.6 543.0" class="eo"/><path d="M784.6 509.9L798.4 519.8" class="e"/><path d="M742.2 531.9L754.6 543.0" class="eo"/><path d="M784.6 509.9h0M798.4 519.8h0" class="d"/><path d="M742.2 531.9h0M754.6 543.0h0" class="do"/><path d="M864.3 627.0L815.8 656.8L819.1 675.2L867.4 644.9Z" fill="#af584f" stroke="#af584f" stroke-width=".5"/><path d="M864.3 627.0L815.8 656.8M867.4 644.9L819.1 675.2" class="eo"/><path d="M864.3 627.0L867.4 644.9" class="e"/><path d="M815.8 656.8L819.1 675.2" class="eo"/><path d="M864.3 627.0h0M867.4 644.9h0" class="d"/><path d="M815.8 656.8h0M819.1 675.2h0" class="do"/><path d="M798.4 519.8L754.6 543.0L767.3 557.5L812.4 533.1Z" fill="#be6056" stroke="#be6056" stroke-width=".5"/><path d="M798.4 519.8L754.6 543.0L762.5 552.0L807.1 528.1Z" fill="#dcd7c5"/><path d="M807.1 528.1L762.5 552.0" stroke="#7a4a3a" stroke-width=".8" stroke-opacity=".6"/><path d="M798.4 519.8L754.6 543.0M812.4 533.1L767.3 557.5" class="eo"/><path d="M798.4 519.8L812.4 533.1" class="e"/><path d="M754.6 543.0L767.3 557.5" class="eo"/><path d="M798.4 519.8h0M812.4 533.1h0" class="d"/><path d="M754.6 543.0h0M767.3 557.5h0" class="do"/><path d="M858.2 607.6L809.9 636.5L815.8 656.8L864.3 627.0Z" fill="#ba5e54" stroke="#ba5e54" stroke-width=".5"/><path d="M859.0 609.9L810.6 639.0" stroke="#7a2a1e" stroke-width="2.2" stroke-opacity=".45"/><path d="M860.7 615.3L812.2 644.6" stroke="#fff" stroke-width="2" stroke-opacity=".08"/><path d="M858.2 607.6L809.9 636.5M864.3 627.0L815.8 656.8" class="eo"/><path d="M858.2 607.6L864.3 627.0" class="e"/><path d="M809.9 636.5L815.8 656.8" class="eo"/><path d="M858.2 607.6h0M864.3 627.0h0" class="d"/><path d="M809.9 636.5h0M815.8 656.8h0" class="do"/><path d="M812.4 533.1L767.3 557.5L779.8 575.0L826.1 549.4Z" fill="#c46359" stroke="#c46359" stroke-width=".5"/><path d="M812.4 533.1L767.3 557.5M826.1 549.4L779.8 575.0" class="eo"/><path d="M812.4 533.1L826.1 549.4" class="e"/><path d="M767.3 557.5L779.8 575.0" class="eo"/><path d="M812.4 533.1h0M826.1 549.4h0" class="d"/><path d="M767.3 557.5h0M779.8 575.0h0" class="do"/><path d="M849.6 587.5L801.6 615.5L809.9 636.5L858.2 607.6Z" fill="#c16158" stroke="#c16158" stroke-width=".5"/><path d="M849.6 587.5L801.6 615.5M858.2 607.6L809.9 636.5" class="eo"/><path d="M849.6 587.5L858.2 607.6" class="e"/><path d="M801.6 615.5L809.9 636.5" class="eo"/><path d="M849.6 587.5h0M858.2 607.6h0" class="d"/><path d="M801.6 615.5h0M809.9 636.5h0" class="do"/><path d="M826.1 549.4L779.8 575.0L791.4 594.6L838.7 567.8Z" fill="#c6645a" stroke="#c6645a" stroke-width=".5"/><path d="M827.6 551.6L781.2 577.4" stroke="#7a2a1e" stroke-width="2.2" stroke-opacity=".45"/><path d="M831.1 556.7L784.4 582.9" stroke="#fff" stroke-width="2" stroke-opacity=".08"/><path d="M826.1 549.4L779.8 575.0M838.7 567.8L791.4 594.6" class="eo"/><path d="M826.1 549.4L838.7 567.8" class="e"/><path d="M779.8 575.0L791.4 594.6" class="eo"/><path d="M826.1 549.4h0M838.7 567.8h0" class="d"/><path d="M779.8 575.0h0M791.4 594.6h0" class="do"/><path d="M838.7 567.8L791.4 594.6L801.6 615.5L849.6 587.5Z" fill="#c56359" stroke="#c56359" stroke-width=".5"/><path d="M838.7 567.8L791.4 594.6M849.6 587.5L801.6 615.5" class="eo"/><path d="M838.7 567.8L849.6 587.5" class="e"/><path d="M791.4 594.6L801.6 615.5" class="eo"/><path d="M838.7 567.8h0M849.6 587.5h0" class="d"/><path d="M791.4 594.6h0M801.6 615.5h0" class="do"/></g>
<circle cx="759" cy="270.5" r="2.6" fill="#f0a020" stroke="#7a4a10" stroke-width=".6"/>
</g></svg>
<div class="r" style="left:0px;top:24px;width:1507px;height:25px;background:rgba(53,53,53,0.9);border-radius:6px 6px 0 0;border-top:1px solid #474747;"></div>
<div class="r" style="left:0px;top:49px;width:474px;height:23px;background:rgba(53,53,53,0.85);border-radius:0 0 5px 0;"></div>
<div class="r" style="left:1332px;top:49px;width:175px;height:23px;background:rgba(53,53,53,0.85);border-radius:0 0 0 5px;"></div>
<div class="r" style="left:9px;top:27px;width:28px;height:17px;background:#282828;border-radius:4px;border:1px solid #313131;"></div>
<svg style="left:12px;top:27px" width="26" height="17" viewBox="0 0 26 17"><path d="M2 9 H15 M2 13 H15 M5 6 L3 16 M11 6 L9 16" stroke="#d8d8d8" stroke-width="1.2" fill="none"/><circle cx="10.5" cy="4.5" r="3" fill="#e0e0e0"/><path d="M18 7 l2.5 2.5 l2.5 -2.5" stroke="#cfcfcf" fill="none" stroke-width="1.1"/></svg>
<div class="r" style="left:44px;top:27px;width:91px;height:17px;background:#282828;border-radius:4px;border:1px solid #313131;"></div>
<svg style="left:47px;top:27px" width="16" height="17" viewBox="0 0 16 17"><rect x="1" y="3" width="3" height="3" fill="none" stroke="#cfcfcf" stroke-width="0.9"/><rect x="10.5" y="1.5" width="4" height="4" fill="#e8e8e8"/><rect x="1" y="12" width="3" height="3" fill="none" stroke="#cfcfcf" stroke-width="0.9"/><rect x="10.5" y="12" width="3" height="3" fill="none" stroke="#cfcfcf" stroke-width="0.9"/><path d="M4 4.5 H10 M2.5 6 V12 M12 6 V12 M4 13.5 H10.5" stroke="#cfcfcf" stroke-width="0.9"/></svg>
<div class="t" style="left:67px;top:28px;color:#dcdcdc;font-size:11.5px;">Edit Mode</div>
<svg style="left:125px;top:32px" width="8" height="6"><path d="M1 1 l3 3 l3 -3" stroke="#cfcfcf" fill="none" stroke-width="1.1"/></svg>
<div class="r" style="left:142px;top:27px;width:55px;height:17px;background:#3a3a3a;border-radius:4px;"></div>
<div class="r" style="left:142px;top:27px;width:18px;height:17px;background:#4772b3;border-radius:4px 0 0 4px;"></div>
<div class="r" style="left:160px;top:27px;width:1px;height:17px;background:#2a2a2a;"></div>
<div class="r" style="left:178px;top:27px;width:1px;height:17px;background:#2a2a2a;"></div>
<svg style="left:142px;top:27px" width="55" height="17" viewBox="0 0 55 17"><path d="M5 4 H14 V12 L12 14 H4 V5" stroke="#f0f0f0" fill="none" stroke-width="1.1"/><rect x="2.5" y="10" width="3" height="3" fill="#fff"/>
<path d="M23 14 V5 L25 3 H32 V12" stroke="#d8d8d8" fill="none" stroke-width="1.1"/><rect x="26" y="5.5" width="2.2" height="9" fill="#e0e0e0"/>
<path d="M40 6 L42 3 H51 V12 L49 14" stroke="#d8d8d8" fill="none" stroke-width="1.1"/><rect x="39.5" y="5.5" width="10" height="9" fill="#e0e0e0"/></svg>
<div class="t" style="left:209px;top:28px;color:#dcdcdc;font-size:11.5px;">View</div>
<div class="t" style="left:248px;top:28px;color:#dcdcdc;font-size:11.5px;">Select</div>
<div class="t" style="left:293px;top:28px;color:#dcdcdc;font-size:11.5px;">Add</div>
<div class="t" style="left:328px;top:28px;color:#dcdcdc;font-size:11.5px;">Mesh</div>
<div class="t" style="left:370px;top:28px;color:#dcdcdc;font-size:11.5px;">Vertex</div>
<div class="t" style="left:417px;top:28px;color:#dcdcdc;font-size:11.5px;">Edge</div>
<div class="t" style="left:456px;top:28px;color:#dcdcdc;font-size:11.5px;">Face</div>
<div class="t" style="left:495px;top:28px;color:#dcdcdc;font-size:11.5px;">UV</div>
<svg style="left:520px;top:27px" width="14" height="17" viewBox="0 0 14 17"><path d="M2 14 V6 L6 3 H12 V14 Z" stroke="#cfcfcf" fill="none" stroke-width="1" stroke-dasharray="1.5 1.2"/><path d="M2 8 L7 3 L2 3 Z" fill="#e0e0e0"/></svg>
<div class="r" style="left:636px;top:27px;width:72px;height:17px;background:#282828;border-radius:4px;border:1px solid #313131;"></div>
<svg style="left:639px;top:27px" width="16" height="17" viewBox="0 0 16 17"><path d="M3 2 V14 H15 M3 14 L12 6" stroke="#d8d8d8" fill="none" stroke-width="1.1"/><path d="M1 4 L3 1.5 L5 4 M13 12 L15.5 14 L13 16" stroke="#d8d8d8" fill="none" stroke-width="1"/></svg>
<div class="t" style="left:659px;top:28px;color:#dcdcdc;font-size:11.5px;">Global</div>
<svg style="left:697px;top:32px" width="8" height="6"><path d="M1 1 l3 3 l3 -3" stroke="#cfcfcf" fill="none" stroke-width="1.1"/></svg>
<div class="r" style="left:715px;top:27px;width:28px;height:17px;background:#282828;border-radius:4px;border:1px solid #313131;"></div>
<svg style="left:717px;top:27px" width="26" height="17" viewBox="0 0 26 17"><circle cx="6" cy="10" r="3.5" stroke="#d8d8d8" fill="none" stroke-width="1.1"/><circle cx="6" cy="10" r="1.2" fill="#d8d8d8"/><circle cx="11" cy="6" r="3.5" stroke="#d8d8d8" fill="none" stroke-width="1.1"/><path d="M17 7 l2.5 2.5 l2.5 -2.5" stroke="#cfcfcf" fill="none" stroke-width="1.1"/></svg>
<div class="r" style="left:750px;top:27px;width:47px;height:17px;background:#282828;border-radius:4px;border:1px solid #313131;"></div>
<div class="r" style="left:750px;top:27px;width:18px;height:17px;background:#505050;border-radius:4px 0 0 4px;"></div>
<svg style="left:750px;top:27px" width="47" height="17" viewBox="0 0 47 17"><path d="M5 12 A5 5 0 0 1 9 3 A5 5 0 0 1 13 9 M7 13 A3 3 0 0 1 9 6 A3 3 0 0 1 11 10" stroke="#9a9a9a" fill="none" stroke-width="1.3"/><path d="M21 10 H32 M22 8 V13 M25 8 V13 M28 8 V13 M31 8 V13" stroke="#d8d8d8" stroke-width="1"/><rect x="29" y="3" width="3" height="3" fill="#e8e8e8"/><path d="M37 7 l2.5 2.5 l2.5 -2.5" stroke="#cfcfcf" fill="none" stroke-width="1.1"/></svg>
<div class="r" style="left:804px;top:27px;width:47px;height:17px;background:#2a2a2a;border-radius:4px;"></div>
<div class="r" style="left:804px;top:27px;width:18px;height:17px;background:#505050;border-radius:4px 0 0 4px;"></div>
<svg style="left:804px;top:27px" width="47" height="17" viewBox="0 0 47 17"><circle cx="9" cy="8.5" r="5" stroke="#bdbdbd" fill="none" stroke-width="1.1"/><circle cx="9" cy="8.5" r="1.8" fill="#e0e0e0"/><path d="M20 14 C23 14 24 3 26 3 C28 3 29 14 32 14" stroke="#6a6a6a" fill="none" stroke-width="1.1"/><path d="M37 7 l2.5 2.5 l2.5 -2.5" stroke="#5a5a5a" fill="none" stroke-width="1.1"/></svg>
<div class="r" style="left:1234px;top:27px;width:29px;height:17px;background:#282828;border-radius:4px;border:1px solid #313131;"></div>
<svg style="left:1236px;top:27px" width="27" height="17" viewBox="0 0 27 17"><path d="M2 7 C5 3 11 3 14 7 C11 11 5 11 2 7 Z" fill="#d8d8d8"/><circle cx="8" cy="7" r="2" fill="#282828"/><path d="M6 9 L8 16 L10 13 L13 14 Z" fill="#e8e8e8"/><path d="M18 8 l2.5 2.5 l2.5 -2.5" stroke="#cfcfcf" fill="none" stroke-width="1.1"/></svg>
<div class="r" style="left:1269px;top:27px;width:34px;height:17px;background:#282828;border-radius:4px;border:1px solid #313131;"></div>
<div class="r" style="left:1269px;top:27px;width:18px;height:17px;background:#4772b3;border-radius:4px 0 0 4px;"></div>
<svg style="left:1269px;top:27px" width="34" height="17" viewBox="0 0 34 17"><path d="M3 14 L9 6 M5 4 C9 3 13 5 15 9 M13 12 L15 14" stroke="#f2f2f2" fill="none" stroke-width="1.2"/><rect x="2" y="12" width="3" height="3" fill="#fff"/><rect x="12" y="2" width="3" height="3" fill="#fff"/><path d="M24 8 l2.5 2.5 l2.5 -2.5" stroke="#cfcfcf" fill="none" stroke-width="1.1"/></svg>
<div class="r" style="left:1311px;top:27px;width:35px;height:17px;background:#282828;border-radius:4px;border:1px solid #313131;"></div>
<div class="r" style="left:1311px;top:27px;width:18px;height:17px;background:#4772b3;border-radius:4px 0 0 4px;"></div>
<svg style="left:1311px;top:27px" width="35" height="17" viewBox="0 0 35 17"><circle cx="10" cy="7.5" r="4.5" fill="none" stroke="#f2f2f2" stroke-width="1.3"/><circle cx="7" cy="10" r="4.5" fill="#4772b3" stroke="#f2f2f2" stroke-width="1.3"/><path d="M4 10 A3 3 0 0 1 10 10" fill="#f2f2f2"/><path d="M25 8 l2.5 2.5 l2.5 -2.5" stroke="#cfcfcf" fill="none" stroke-width="1.1"/></svg>
<div class="r" style="left:1348px;top:27px;width:30px;height:17px;background:#282828;border-radius:4px;border:1px solid #313131;"></div>
<svg style="left:1350px;top:27px" width="28" height="17" viewBox="0 0 28 17"><rect x="2" y="4" width="10" height="9" stroke="#cfcfcf" fill="none" stroke-width="1" stroke-dasharray="2 1"/><rect x="10" y="1.5" width="3.5" height="3.5" fill="#e8e8e8"/><path d="M18 8 l2.5 2.5 l2.5 -2.5" stroke="#cfcfcf" fill="none" stroke-width="1.1"/></svg>
<div class="r" style="left:1385px;top:27px;width:18px;height:17px;background:#3a3a3a;border-radius:4px;"></div>
<svg style="left:1385px;top:27px" width="18" height="17" viewBox="0 0 18 17"><rect x="3" y="3" width="8" height="8" stroke="#d0d0d0" fill="none" stroke-width="1"/><rect x="6.5" y="6.5" width="8" height="8" stroke="#d0d0d0" fill="none" stroke-width="1"/><rect x="6.5" y="6.5" width="4.5" height="4.5" fill="#d0d0d0" opacity="0.6"/></svg>
<div class="r" style="left:1409px;top:27px;width:91px;height:17px;background:#282828;border-radius:4px;border:1px solid #313131;"></div>
<div class="r" style="left:1409px;top:27px;width:18px;height:17px;background:#505050;border-radius:4px 0 0 4px;"></div>
<div class="r" style="left:1427px;top:27px;width:18px;height:17px;background:#505050;"></div>
<div class="r" style="left:1445px;top:27px;width:18px;height:17px;background:#4772b3;"></div>
<div class="r" style="left:1463px;top:27px;width:18px;height:17px;background:#505050;"></div>
<svg style="left:1409px;top:27px" width="91" height="17" viewBox="0 0 91 17"><circle cx="9" cy="8.5" r="5.5" stroke="#d8d8d8" fill="none" stroke-width="1"/><ellipse cx="9" cy="8.5" rx="2.5" ry="5.5" stroke="#d8d8d8" fill="none" stroke-width="0.9"/><path d="M3.5 8.5 H14.5" stroke="#d8d8d8" stroke-width="0.9"/><circle cx="27" cy="8.5" r="5.8" fill="#c8c8c8"/><circle cx="45" cy="8.5" r="5.8" fill="#fff"/><path d="M45 8.5 V2.7 A5.8 5.8 0 0 1 50.8 8.5 Z" fill="#4772b3"/><path d="M45 8.5 H39.2 A5.8 5.8 0 0 0 45 14.3 Z" fill="#4772b3"/><circle cx="63" cy="8.5" r="5.6" fill="#5a5a5a" stroke="#cfcfcf" stroke-width="1"/><path d="M60 6 A3.5 3.5 0 0 1 63 4.5" stroke="#cfcfcf" fill="none"/><path d="M82 7 l3 3 l3 -3" stroke="#cfcfcf" fill="none" stroke-width="1.1"/></svg>
<div class="r" style="left:7px;top:51px;width:116px;height:18px;background:#545454;border-radius:4px;"></div>
<div class="t" style="left:22px;top:53px;color:#e0e0e0;font-size:11.3px;">Steps</div>
<div class="t" style="left:96px;top:53px;color:#e0e0e0;font-size:11.3px;">12</div>
<div class="r" style="left:129px;top:53px;width:12px;height:13px;background:#545454;border-radius:3px;"></div>
<div class="t" style="left:145px;top:53px;color:#dcdcdc;font-size:11.3px;">Use Duplicates</div>
<div class="r" style="left:242px;top:51px;width:105px;height:18px;background:#545454;border-radius:4px;"></div>
<div class="r" style="left:313px;top:51px;width:34px;height:18px;background:#4772b3;border-radius:0 4px 4px 0;"></div>
<div class="r" style="left:276px;top:51px;width:1px;height:18px;background:#444;"></div>
<div class="r" style="left:312px;top:51px;width:1px;height:18px;background:#444;"></div>
<div class="t" style="left:255px;top:53px;color:#e8e8e8;font-size:11.3px;">X</div>
<div class="t" style="left:290px;top:53px;color:#e8e8e8;font-size:11.3px;">Y</div>
<div class="t" style="left:326px;top:53px;color:#ffffff;font-size:11.3px;">Z</div>
<div class="t" style="left:357px;top:53px;color:#bdbdbd;font-size:11.3px;">Drag:</div>
<div class="r" style="left:393px;top:51px;width:74px;height:18px;background:#282828;border-radius:4px;"></div>
<div class="t" style="left:400px;top:53px;color:#dcdcdc;font-size:11.3px;">Select Box</div>
<svg style="left:457px;top:57px" width="8" height="6"><path d="M1 1 l3 3 l3 -3" stroke="#cfcfcf" fill="none" stroke-width="1.1"/></svg>
<svg style="left:1341px;top:51px" width="18" height="18" viewBox="0 0 18 18"><path d="M9 2 V16" stroke="#cfcfcf" stroke-dasharray="1.5 1.5"/><path d="M7 4 C2 3 2 8 5 9 C2 10 2 15 7 14 Z M11 4 C16 3 16 8 13 9 C16 10 16 15 11 14 Z" stroke="#cfcfcf" fill="none" stroke-width="1"/></svg>
<div class="r" style="left:1360px;top:51px;width:48px;height:18px;background:#3a3a3a;border-radius:4px;"></div>
<div class="r" style="left:1375px;top:51px;width:1px;height:18px;background:#2e2e2e;"></div>
<div class="r" style="left:1391px;top:51px;width:1px;height:18px;background:#2e2e2e;"></div>
<div class="t" style="left:1363px;top:53px;color:#d8d8d8;font-size:11px;">X</div>
<div class="t" style="left:1379px;top:53px;color:#d8d8d8;font-size:11px;">Y</div>
<div class="t" style="left:1395px;top:53px;color:#d8d8d8;font-size:11px;">Z</div>
<div class="r" style="left:1415px;top:51px;width:18px;height:18px;background:#3a3a3a;border-radius:4px;"></div>
<svg style="left:1415px;top:51px" width="18" height="18" viewBox="0 0 18 18"><path d="M4 14 C4 8 8 4 14 4" stroke="#cfcfcf" fill="none" stroke-dasharray="2 1.5"/><rect x="2.5" y="12.5" width="3" height="3" fill="#e0e0e0"/><rect x="12.5" y="2.5" width="3" height="3" fill="#e0e0e0"/></svg>
<div class="r" style="left:1438px;top:51px;width:63px;height:18px;background:#282828;border-radius:4px;"></div>
<div class="t" style="left:1445px;top:53px;color:#dcdcdc;font-size:11.3px;">Options</div>
<svg style="left:1490px;top:57px" width="8" height="6"><path d="M1 1 l3 3 l3 -3" stroke="#cfcfcf" fill="none" stroke-width="1.1"/></svg>
<div class="t" style="left:61px;top:80px;color:#e8e8e8;font-size:11px;text-shadow:0 0 2px #000;">User Perspective</div>
<div class="t" style="left:61px;top:97px;color:#e8e8e8;font-size:11px;text-shadow:0 0 2px #000;">(1) Cylinder</div>
<div class="r" style="left:8px;top:81px;width:36px;height:64px;background:#262626;border-radius:5px;"></div>
<div class="r" style="left:8px;top:112px;width:36px;height:1px;background:#1c1c1c;"></div>
<div class="r" style="left:8px;top:152px;width:36px;height:132px;background:#262626;border-radius:5px;"></div>
<div class="r" style="left:8px;top:185px;width:36px;height:1px;background:#1c1c1c;"></div>
<div class="r" style="left:8px;top:218px;width:36px;height:1px;background:#1c1c1c;"></div>
<div class="r" style="left:8px;top:251px;width:36px;height:1px;background:#1c1c1c;"></div>
<div class="r" style="left:8px;top:290px;width:36px;height:66px;background:#262626;border-radius:5px;"></div>
<div class="r" style="left:8px;top:323px;width:36px;height:1px;background:#1c1c1c;"></div>
<div class="r" style="left:8px;top:361px;width:36px;height:33px;background:#262626;border-radius:5px;"></div>
<div class="r" style="left:8px;top:400px;width:36px;height:397px;background:#262626;border-radius:5px;"></div>
<div class="r" style="left:8px;top:432px;width:36px;height:1px;background:#1c1c1c;"></div>
<div class="r" style="left:8px;top:465px;width:36px;height:1px;background:#1c1c1c;"></div>
<div class="r" style="left:8px;top:497px;width:36px;height:1px;background:#1c1c1c;"></div>
<div class="r" style="left:8px;top:530px;width:36px;height:1px;background:#1c1c1c;"></div>
<div class="r" style="left:8px;top:563px;width:36px;height:1px;background:#1c1c1c;"></div>
<div class="r" style="left:8px;top:597px;width:36px;height:1px;background:#1c1c1c;"></div>
<div class="r" style="left:8px;top:630px;width:36px;height:1px;background:#1c1c1c;"></div>
<div class="r" style="left:8px;top:663px;width:36px;height:1px;background:#1c1c1c;"></div>
<div class="r" style="left:8px;top:697px;width:36px;height:1px;background:#1c1c1c;"></div>
<div class="r" style="left:8px;top:730px;width:36px;height:1px;background:#1c1c1c;"></div>
<div class="r" style="left:8px;top:763px;width:36px;height:1px;background:#1c1c1c;"></div>
<div class="r" style="left:8px;top:597px;width:36px;height:33px;background:#4772b3;"></div>
<svg style="left:12px;top:83px" width="28" height="28" viewBox="0 0 26 26"><rect x="6" y="6" width="14" height="14" stroke="#d9a845" fill="none" stroke-width="1.2" stroke-dasharray="3 2"/><path d="M10 9 L17 13 L13.5 14 L15 18 L13.5 18.5 L12 15 L10 17 Z" fill="#e6e6e6"/></svg>
<svg style="left:12px;top:114px" width="28" height="28" viewBox="0 0 26 26"><circle cx="13" cy="13" r="8" stroke="#e0e0e0" stroke-width="1.6" fill="none" stroke-dasharray="4 2.3"/><circle cx="13" cy="13" r="8" stroke="#c4314a" stroke-width="1.6" fill="none" stroke-dasharray="2.3 4" stroke-dashoffset="-4"/><path d="M13 8 V11 M13 15 V18 M8 13 H11 M15 13 H18" stroke="#bbb" stroke-width="1"/></svg>
<svg style="left:12px;top:154px" width="28" height="28" viewBox="0 0 26 26"><path d="M13 4 V22 M4 13 H22" stroke="#e6e6e6" stroke-width="1.2" stroke-dasharray="2.5 1.5"/><path d="M13 3 L10.5 7 H15.5 Z M13 23 L10.5 19 H15.5 Z M3 13 L7 10.5 V15.5 Z M23 13 L19 10.5 V15.5 Z" fill="#e6e6e6"/></svg>
<svg style="left:12px;top:187px" width="28" height="28" viewBox="0 0 26 26"><path d="M5 11 A8.5 8.5 0 0 1 21 11 M21 15 A8.5 8.5 0 0 1 5 15" stroke="#e6e6e6" stroke-width="1.3" fill="none"/><path d="M13 9.5 L16.5 13 L13 16.5 L9.5 13 Z" fill="#e6e6e6"/><path d="M3 11 L7 11 L5 14 Z M23 15 L19 15 L21 12 Z" fill="#e6e6e6"/></svg>
<svg style="left:12px;top:220px" width="28" height="28" viewBox="0 0 26 26"><rect x="6" y="12" width="8" height="8" fill="#e6e6e6"/><path d="M10 8 V5 H21 V16 H18" stroke="#e6e6e6" stroke-width="1.2" fill="none"/><path d="M13 13 L19 7 M15 7 H19 V11" stroke="#e6e6e6" stroke-width="1.2" fill="none"/></svg>
<svg style="left:12px;top:253px" width="28" height="28" viewBox="0 0 26 26"><circle cx="13" cy="13" r="8.5" stroke="#e6e6e6" stroke-width="1.2" fill="none" stroke-dasharray="6 2"/><rect x="9.5" y="9.5" width="7" height="7" fill="#e6e6e6"/><path d="M13 2.5 L11 5 H15 Z M13 23.5 L11 21 H15 Z M2.5 13 L5 11 V15 Z M23.5 13 L21 11 V15 Z" fill="#e6e6e6"/></svg>
<svg style="left:12px;top:292px" width="28" height="28" viewBox="0 0 26 26"><path d="M6 17 L16 6 L19 9 L9 20 L5 21 Z" stroke="#e6e6e6" stroke-width="1.2" fill="none"/><path d="M4 22 C8 25 12 17 15 19 C18 21 20 20 22 18" stroke="#7fd4a8" stroke-width="1.3" fill="none"/></svg>
<svg style="left:12px;top:325px" width="28" height="28" viewBox="0 0 26 26"><path d="M6 4 V21 H22" stroke="#e6e6e6" stroke-width="1.5" fill="none"/><path d="M8 20 V8 A12 12 0 0 1 20 20 Z" fill="#7fd4a8"/><path d="M6 8 H9 M6 12 H9 M6 16 H9 M10 21 V18 M14 21 V18 M18 21 V18" stroke="#e6e6e6" stroke-width="1"/></svg>
<svg style="left:12px;top:363px" width="28" height="28" viewBox="0 0 26 26"><path d="M9 10 L12 7 H21 V17 L18 20 H9 Z M9 10 H18 V20 M18 10 L21 7" stroke="#7fd4a8" stroke-width="1.2" fill="none"/><path d="M6 3 V9 M3 6 H9" stroke="#7fd4a8" stroke-width="1.5"/></svg>
<svg style="left:12px;top:402px" width="28" height="28" viewBox="0 0 26 26"><path d="M6 12 L9 9 H20 V20 L17 23 H6 Z M6 12 H17 V23 M17 12 L20 9" stroke="#e6e6e6" stroke-width="1.2" fill="none"/><path d="M6 12 L9 9 H20 L17 12 Z" fill="#7fd4a8"/><rect x="6" y="5" width="11" height="7" fill="#7fd4a8"/><path d="M9 2 H20 V9 L17 12" fill="#7fd4a8"/></svg>
<svg style="left:12px;top:434px" width="28" height="28" viewBox="0 0 26 26"><rect x="5" y="7" width="15" height="15" stroke="#e6e6e6" stroke-width="1.2" fill="#7fd4a8"/><path d="M5 7 L8 4 H23 V19 L20 22 M20 7 L23 4" stroke="#e6e6e6" stroke-width="1.2" fill="none"/><rect x="9" y="11" width="7" height="7" stroke="#333" stroke-width="1.2" fill="none"/><path d="M5 7 L9 11 M20 7 L16 11 M5 22 L9 18 M20 22 L16 18" stroke="#333" stroke-width="1"/></svg>
<svg style="left:12px;top:467px" width="28" height="28" viewBox="0 0 26 26"><path d="M6 14 V22 H19 V14 M19 22 L22 19 V11" stroke="#e6e6e6" stroke-width="1.2" fill="none"/><path d="M6 14 L9 9 H16 L22 11 L19 14 Z" fill="#7fd4a8" stroke="#e6e6e6" stroke-width="1"/></svg>
<svg style="left:12px;top:499px" width="28" height="28" viewBox="0 0 26 26"><path d="M6 10 L9 7 H21 V19 L18 22 H6 Z M6 10 H18 V22 M18 10 L21 7" stroke="#e6e6e6" stroke-width="1.2" fill="none"/><path d="M12 10 V22 L15 7" stroke="#7fd4a8" stroke-width="1.5" fill="none"/></svg>
<svg style="left:12px;top:532px" width="28" height="28" viewBox="0 0 26 26"><path d="M6 10 L9 7 H21 V19 L18 22 H6 Z M6 10 H18 V22 M18 10 L21 7" stroke="#e6e6e6" stroke-width="1.2" fill="none"/><path d="M14 5 L10 14 L15 20" stroke="#7fd4a8" stroke-width="1.3" fill="none"/><circle cx="14" cy="5" r="1.6" fill="#7fd4a8"/><circle cx="10" cy="14" r="1.6" fill="#7fd4a8"/><circle cx="15" cy="20" r="1.6" fill="#7fd4a8"/></svg>
<svg style="left:12px;top:565px" width="28" height="28" viewBox="0 0 26 26"><path d="M7 21 L6 11 L13 5 L20 10 L21 21 Z" fill="#7fd4a8"/><circle cx="7" cy="21" r="1.8" fill="#e6e6e6"/><circle cx="6" cy="11" r="1.8" fill="#e6e6e6"/><circle cx="13" cy="5" r="1.8" fill="#e6e6e6"/><circle cx="20" cy="10" r="1.8" fill="#e6e6e6"/><circle cx="21" cy="21" r="1.8" fill="#e6e6e6"/></svg>
<svg style="left:12px;top:599px" width="28" height="28" viewBox="0 0 26 26"><circle cx="12.5" cy="14" r="9" fill="#7fd4a8"/><path d="M12.5 14 L12.5 5 M12.5 14 L20 9.5 M12.5 14 L21 16 M12.5 14 L17 22 M12.5 14 L8 22 M12.5 14 L4 16 M12.5 14 L4 10" stroke="#4772b3" stroke-width="1"/><path d="M15 4 A9 9 0 0 1 22 9 L17 11 Z" fill="#4772b3" stroke="#e6e6e6" stroke-width="1"/></svg>
<svg style="left:12px;top:632px" width="28" height="28" viewBox="0 0 26 26"><circle cx="13" cy="14" r="8.5" fill="#c9b8e6"/><path d="M5 13 C9 16 17 16 21.5 13 M13 5.5 C11 9 11 18 13 22.5" stroke="#4a4a4a" stroke-width="1" fill="none"/></svg>
<svg style="left:12px;top:665px" width="28" height="28" viewBox="0 0 26 26"><path d="M9 11 L12 8 H20 V20 L17 23 H9 Z M9 11 H17 V23 M17 11 L20 8" stroke="#e6e6e6" stroke-width="1.2" fill="none"/><path d="M6 10 V22" stroke="#e6e6e6" stroke-width="1.4"/><path d="M5 4 l2 -2 l2 2 M8 5 V9" stroke="#e6e6e6" stroke-width="1" fill="none"/></svg>
<svg style="left:12px;top:699px" width="28" height="28" viewBox="0 0 26 26"><path d="M13 4 L13 22 M4 13 L22 13" stroke="#c9b8e6" stroke-width="1.2"/><path d="M13 3 L10.5 6.5 H15.5 Z M13 23 L10.5 19.5 H15.5 Z M3 13 L6.5 10.5 V15.5 Z M23 13 L19.5 10.5 V15.5 Z" fill="#c9b8e6"/><rect x="9" y="9" width="8" height="8" stroke="#e6e6e6" fill="none"/><path d="M9 9 L17 17 M17 9 L9 17" stroke="#e6e6e6" stroke-width="1"/></svg>
<svg style="left:12px;top:732px" width="28" height="28" viewBox="0 0 26 26"><path d="M4 14 L12 8 L22 12 L14 19 Z" fill="#c9b8e6" stroke="#e6e6e6" stroke-width="1"/><path d="M4 14 V17 L14 22 V19 M14 22 L22 15 V12" stroke="#e6e6e6" stroke-width="1" fill="none"/><path d="M20 4 V8 M18 6 H22" stroke="#c9b8e6" stroke-width="1.3"/></svg>
<svg style="left:12px;top:765px" width="28" height="28" viewBox="0 0 26 26"><path d="M10 11 L13 8 H21 V18 L18 21 H10 Z M10 11 H18 V21 M18 11 L21 8" stroke="#e6e6e6" stroke-width="1.2" fill="none"/><path d="M4 16 L12 13 L10 19 Z" stroke="#e6e6e6" stroke-width="1.1" fill="none"/><circle cx="4" cy="16" r="1.6" fill="#e6e6e6"/></svg>
<svg style="left:38px;top:104px" width="5" height="5"><path d="M5 0 V5 H0 Z" fill="#9a9a9a"/></svg>
<svg style="left:38px;top:243px" width="5" height="5"><path d="M5 0 V5 H0 Z" fill="#9a9a9a"/></svg>
<svg style="left:38px;top:315px" width="5" height="5"><path d="M5 0 V5 H0 Z" fill="#9a9a9a"/></svg>
<svg style="left:38px;top:386px" width="5" height="5"><path d="M5 0 V5 H0 Z" fill="#9a9a9a"/></svg>
<svg style="left:38px;top:425px" width="5" height="5"><path d="M5 0 V5 H0 Z" fill="#9a9a9a"/></svg>
<svg style="left:38px;top:490px" width="5" height="5"><path d="M5 0 V5 H0 Z" fill="#9a9a9a"/></svg>
<svg style="left:38px;top:522px" width="5" height="5"><path d="M5 0 V5 H0 Z" fill="#9a9a9a"/></svg>
<svg style="left:38px;top:555px" width="5" height="5"><path d="M5 0 V5 H0 Z" fill="#9a9a9a"/></svg>
<svg style="left:38px;top:588px" width="5" height="5"><path d="M5 0 V5 H0 Z" fill="#9a9a9a"/></svg>
<svg style="left:38px;top:655px" width="5" height="5"><path d="M5 0 V5 H0 Z" fill="#9a9a9a"/></svg>
<svg style="left:38px;top:688px" width="5" height="5"><path d="M5 0 V5 H0 Z" fill="#9a9a9a"/></svg>
<svg style="left:38px;top:722px" width="5" height="5"><path d="M5 0 V5 H0 Z" fill="#9a9a9a"/></svg>
<svg style="left:38px;top:755px" width="5" height="5"><path d="M5 0 V5 H0 Z" fill="#9a9a9a"/></svg>
<svg style="left:38px;top:788px" width="5" height="5"><path d="M5 0 V5 H0 Z" fill="#9a9a9a"/></svg>
<svg style="left:52px;top:621px" width="6" height="10"><path d="M5 1 L1 5 L5 9 Z" fill="#bbb"/></svg>
<svg style="left:1415px;top:82px" width="90" height="192" viewBox="1415 82 90 192">
<circle cx="1465" cy="100" r="7.5" fill="none" stroke="#8a3040" stroke-width="1.6"/>
<circle cx="1461" cy="141" r="7.5" fill="none" stroke="#2e5a9a" stroke-width="1.6"/>
<circle cx="1430" cy="116" r="8" fill="#3f5a28" stroke="#6a9a2a" stroke-width="1.5" fill-opacity="0.6"/>
<path d="M1459 118 L1459 96 M1459 118 L1489 123 M1459 118 L1453 138" stroke-width="2.2" fill="none"/>
<path d="M1459 118 L1459 100" stroke="#3a7ed6" stroke-width="2.2"/>
<path d="M1459 118 L1485 122" stroke="#7cbf2a" stroke-width="2.2"/>
<path d="M1459 118 L1454 134" stroke="#e0324f" stroke-width="2.2"/>
<circle cx="1459" cy="96" r="8.5" fill="#3a7ed6"/><text x="1459" y="100" font-size="11" font-weight="bold" fill="#101010" text-anchor="middle" font-family="Liberation Sans">Z</text>
<circle cx="1489" cy="123" r="8.5" fill="#7cbf2a"/><text x="1489" y="127" font-size="11" font-weight="bold" fill="#101010" text-anchor="middle" font-family="Liberation Sans">Y</text>
<circle cx="1453" cy="138" r="8.5" fill="#e0324f"/><text x="1453" y="142" font-size="11" font-weight="bold" fill="#101010" text-anchor="middle" font-family="Liberation Sans">X</text>
<circle cx="1486" cy="171" r="13" fill="#262626" fill-opacity="0.75"/>
<circle cx="1488.5" cy="169" r="5.5" fill="none" stroke="#e8e8e8" stroke-width="1.8"/><path d="M1484.5 173 L1479.5 178" stroke="#e8e8e8" stroke-width="2.2" stroke-linecap="round"/><path d="M1485.5 169 H1491.5 M1488.5 166 V172" stroke="#e8e8e8" stroke-width="1.3"/>
<circle cx="1486" cy="199.5" r="13" fill="#262626" fill-opacity="0.75"/>
<path d="M1481 204 V196.5 C1481 195 1483 195 1483 196.5 V193 C1483 191.5 1485 191.5 1485 193 V192 C1485 190.5 1487 190.5 1487 192 V193 C1487 191.5 1489 191.5 1489 193 V197 C1489 195.5 1491.5 195.5 1491.5 197 V203 C1491.5 207 1488.5 209 1486 209 C1483.5 209 1481.5 207.5 1480 205 L1477.5 200.5 C1477 199 1479 198.5 1480 200 Z" fill="#e8e8e8"/>
<circle cx="1486" cy="228" r="13" fill="#262626" fill-opacity="0.75"/>
<circle cx="1482" cy="223" r="3" fill="none" stroke="#e8e8e8" stroke-width="1.3"/><circle cx="1489" cy="223" r="3" fill="none" stroke="#e8e8e8" stroke-width="1.3"/><rect x="1480" y="227" width="8" height="6" fill="none" stroke="#e8e8e8" stroke-width="1.4"/><path d="M1489 230 L1493 227.5 V232.5 Z" fill="none" stroke="#e8e8e8" stroke-width="1.1"/><path d="M1477 229 H1480 M1477 231 H1480" stroke="#e8e8e8"/>
<circle cx="1486" cy="256.5" r="13" fill="#262626" fill-opacity="0.75"/>
<path d="M1480 250 H1492 L1494 263 H1478 Z M1479 254.5 H1493 M1478.7 258.7 H1493.5 M1484 250 L1483 263 M1488 250 L1489 263" fill="none" stroke="#e8e8e8" stroke-width="1.2"/>
</svg>
<svg style="left:1497px;top:86px" width="10" height="14"><path d="M7 3 L3 7 L7 11" fill="none" stroke="#9a9a9a" stroke-width="1.2"/></svg>
<div class="r" style="left:58px;top:567px;width:265px;height:260px;background:#181818;border-radius:6px;"></div>
<svg style="left:66px;top:575px" width="10" height="8"><path d="M1 2 l3.5 3.5 l3.5 -3.5" stroke="#bdbdbd" fill="none" stroke-width="1.1"/></svg>
<div class="t" style="left:78px;top:572px;color:#cfcfcf;font-size:11.3px;">Spin</div>
<div class="r" style="left:170px;top:599px;width:145px;height:17px;background:#545454;border-radius:4px;"></div>
<div class="t" style="left:42px;width:400px;text-align:center;top:600.5px;color:#e6e6e6;font-size:11.3px;">12</div>
<div class="t" style="right:1665px;top:600.5px;color:#c8c8c8;font-size:11.3px;">Steps</div>
<div class="r" style="left:170px;top:622px;width:12px;height:12px;background:#545454;border-radius:3px;"></div>
<div class="t" style="left:185px;top:621px;color:#bdbdbd;font-size:11.3px;">Use Duplicates</div>
<div class="r" style="left:170px;top:641px;width:145px;height:17px;background:#545454;border-radius:4px;"></div>
<div class="t" style="left:42px;width:400px;text-align:center;top:642.5px;color:#e6e6e6;font-size:11.3px;">45°</div>
<div class="t" style="right:1665px;top:642.5px;color:#c8c8c8;font-size:11.3px;">Angle</div>
<div class="r" style="left:170px;top:664px;width:12px;height:12px;background:#4772b3;border-radius:3px;"></div>
<svg style="left:170px;top:664px" width="12" height="12"><path d="M2.5 6 L5 8.8 L9.5 3" stroke="#fff" fill="none" stroke-width="1.6"/></svg>
<div class="t" style="left:185px;top:663px;color:#e6e6e6;font-size:11.3px;">Auto Merge</div>
<div class="r" style="left:170px;top:685px;width:12px;height:12px;background:#545454;border-radius:3px;"></div>
<div class="t" style="left:185px;top:684px;color:#bdbdbd;font-size:11.3px;">Flip Normals</div>
<div class="r" style="left:170px;top:703px;width:145px;height:18px;background:#545454;border-radius:4px 4px 0 0;"></div>
<div class="t" style="left:42px;width:400px;text-align:center;top:705.0px;color:#e6e6e6;font-size:11.3px;">0 m</div>
<div class="t" style="right:1665px;top:705.0px;color:#c8c8c8;font-size:11.3px;">Center X</div>
<div class="r" style="left:170px;top:722px;width:145px;height:18px;background:#545454;border-radius:0;"></div>
<div class="t" style="left:42px;width:400px;text-align:center;top:724.0px;color:#e6e6e6;font-size:11.3px;">0 m</div>
<div class="t" style="right:1665px;top:724.0px;color:#c8c8c8;font-size:11.3px;">Y</div>
<div class="r" style="left:170px;top:741px;width:145px;height:18px;background:#545454;border-radius:0 0 4px 4px;"></div>
<div class="t" style="left:42px;width:400px;text-align:center;top:743.0px;color:#e6e6e6;font-size:11.3px;">0 m</div>
<div class="t" style="right:1665px;top:743.0px;color:#c8c8c8;font-size:11.3px;">Z</div>
<div class="r" style="left:170px;top:762px;width:145px;height:18px;background:#545454;border-radius:4px 4px 0 0;"></div>
<div class="t" style="left:42px;width:400px;text-align:center;top:764.0px;color:#e6e6e6;font-size:11.3px;">0.000</div>
<div class="t" style="right:1665px;top:764.0px;color:#c8c8c8;font-size:11.3px;">Axis X</div>
<div class="r" style="left:170px;top:781px;width:145px;height:18px;background:#545454;border-radius:0;"></div>
<div class="t" style="left:42px;width:400px;text-align:center;top:783.0px;color:#e6e6e6;font-size:11.3px;">0.000</div>
<div class="t" style="right:1665px;top:783.0px;color:#c8c8c8;font-size:11.3px;">Y</div>
<div class="r" style="left:170px;top:800px;width:145px;height:18px;background:#545454;border-radius:0 0 4px 4px;"></div>
<div class="t" style="left:42px;width:400px;text-align:center;top:802.0px;color:#e6e6e6;font-size:11.3px;">1.000</div>
<div class="t" style="right:1665px;top:802.0px;color:#c8c8c8;font-size:11.3px;">Z</div>
<div class="r" style="left:0px;top:833px;width:1507px;height:24px;background:#303030;border-radius:6px 6px 0 0;border-top:1px solid #3a3a3a;"></div>
<div class="r" style="left:8px;top:837px;width:28px;height:17px;background:#282828;border-radius:4px;border:1px solid #333;"></div>
<svg style="left:10px;top:837px" width="26" height="17" viewBox="0 0 26 17"><path d="M2 15 L6 5 L8 6 L4 16 Z" fill="#e6e6e6"/><rect x="7.5" y="2" width="3" height="14" fill="none" stroke="#e6e6e6" stroke-width="1"/><rect x="11.5" y="4" width="3.5" height="12" fill="#e6e6e6"/><path d="M18 8 l2.5 2.5 l2.5 -2.5" stroke="#cfcfcf" fill="none" stroke-width="1.1"/></svg>
<div class="t" style="left:48px;top:839px;color:#dcdcdc;font-size:11.3px;">View</div>
<div class="t" style="left:88px;top:839px;color:#dcdcdc;font-size:11.3px;">Select</div>
<div class="t" style="left:132px;top:839px;color:#dcdcdc;font-size:11.3px;">Catalog</div>
<div class="t" style="left:186px;top:839px;color:#dcdcdc;font-size:11.3px;">Asset</div>
<div class="r" style="left:675px;top:838px;width:137px;height:17px;background:#282828;border-radius:4px;"></div>
<div class="t" style="left:681px;top:839px;color:#dcdcdc;font-size:11.3px;">Follow Preferences</div>
<svg style="left:802px;top:843px" width="8" height="6"><path d="M1 1 l3 3 l3 -3" stroke="#cfcfcf" fill="none" stroke-width="1.1"/></svg>
<div class="r" style="left:1256px;top:838px;width:31px;height:17px;background:#282828;border-radius:4px;"></div>
<svg style="left:1259px;top:838px" width="28" height="17" viewBox="0 0 28 17"><rect x="1.5" y="2.5" width="5" height="5" fill="none" stroke="#d8d8d8"/><rect x="9.5" y="2.5" width="5" height="5" fill="none" stroke="#d8d8d8"/><rect x="1.5" y="10.5" width="5" height="5" fill="none" stroke="#d8d8d8"/><rect x="9.5" y="10.5" width="5" height="5" fill="none" stroke="#d8d8d8"/><path d="M18 7 l2.5 2.5 l2.5 -2.5" stroke="#cfcfcf" fill="none" stroke-width="1.1"/></svg>
<div class="r" style="left:1292px;top:838px;width:149px;height:17px;background:#1d1d1d;border-radius:4px;"></div>
<svg style="left:1295px;top:838px" width="16" height="17" viewBox="0 0 16 17"><circle cx="9" cy="7" r="4.2" fill="none" stroke="#cfcfcf" stroke-width="1.3"/><path d="M6 10 L2 14" stroke="#cfcfcf" stroke-width="1.5"/></svg>
<div class="t" style="left:1315px;top:839px;color:#777;font-size:11.3px;">Search</div>
<div class="r" style="left:1446px;top:838px;width:32px;height:17px;background:#282828;border-radius:4px;"></div>
<svg style="left:1449px;top:838px" width="30" height="17" viewBox="0 0 30 17"><path d="M2 3 H15 L10 9 V15 L7 13 V9 Z" fill="none" stroke="#d8d8d8" stroke-width="1.2"/><path d="M19 7 l2.5 2.5 l2.5 -2.5" stroke="#cfcfcf" fill="none" stroke-width="1.1"/></svg>
<div class="r" style="left:1482px;top:836px;width:20px;height:20px;background:#545454;border-radius:4px;"></div>
<svg style="left:1484px;top:838px" width="16" height="16" viewBox="0 0 16 16"><path d="M8 1.5 L9.3 3.5 L11.6 2.7 L11.9 5 L14.3 5.4 L13.3 7.6 L15 9.2 L13 10.6 L13.6 13 L11.2 12.9 L10.2 15.1 L8 14 L5.8 15.1 L4.8 12.9 L2.4 13 L3 10.6 L1 9.2 L2.7 7.6 L1.7 5.4 L4.1 5 L4.4 2.7 L6.7 3.5 Z" fill="#f0f0f0"/><circle cx="8" cy="8.3" r="2.6" fill="#545454"/></svg>
<div class="r" style="left:0px;top:857px;width:222px;height:201px;background:#303030;border-radius:0 0 0 6px;"></div>
<div class="r" style="left:9px;top:866px;width:192px;height:17px;background:#282828;border-radius:4px 0 0 4px;border:1px solid #333;"></div>
<div class="t" style="left:14px;top:867px;color:#dcdcdc;font-size:11.3px;">All Libraries</div>
<svg style="left:189px;top:871px" width="8" height="6"><path d="M1 1 l3 3 l3 -3" stroke="#cfcfcf" fill="none" stroke-width="1.1"/></svg>
<div class="r" style="left:201px;top:866px;width:19px;height:17px;background:#505050;border-radius:0 4px 4px 0;"></div>
<svg style="left:202px;top:866px" width="17" height="17" viewBox="0 0 17 17"><path d="M3.5 9 A5 5 0 0 1 12.5 5.5 M13.5 8 A5 5 0 0 1 4.5 11.5" fill="none" stroke="#eee" stroke-width="1.2"/><path d="M13.5 3 V6.5 H10 M3.5 14 V10.5 H7" fill="none" stroke="#eee" stroke-width="1.2"/></svg>
<div class="r" style="left:9px;top:894px;width:212px;height:164px;background:#262626;border-radius:5px 5px 0 0;border:1px solid #303030;border-bottom:none;"></div>
<svg style="left:19px;top:903px" width="10" height="8"><path d="M1 2 l3.5 3.5 l3.5 -3.5" stroke="#d8d8d8" fill="none" stroke-width="1.1"/></svg>
<div class="t" style="left:31px;top:902px;color:#dcdcdc;font-size:11.3px;">All</div>
<svg style="left:178px;top:901px" width="34" height="14" viewBox="0 0 34 14"><path d="M1.5 1.5 H9 L12 4.5 V12.5 H1.5 Z" fill="none" stroke="#888" stroke-width="1"/><rect x="4" y="1.5" width="4" height="3" fill="#888"/><path d="M25.5 2.5 V11.5 M21 7 H30" stroke="#888" stroke-width="1"/></svg>
<div class="r" style="left:23px;top:918px;width:1px;height:140px;background:#3a3a3a;"></div>
<div class="r" style="left:36px;top:1003px;width:1px;height:55px;background:#3a3a3a;"></div>
<svg style="left:34px;top:925px" width="8" height="10"><path d="M2 1 l3.5 3.5 l-3.5 3.5" stroke="#d0d0d0" fill="none" stroke-width="1.1"/></svg>
<div class="t" style="left:44px;top:923px;color:#d0d0d0;font-size:11.3px;">Brushes</div>
<div class="t" style="left:44px;top:944px;color:#d0d0d0;font-size:11.3px;">Geometry Nodes</div>
<svg style="left:34px;top:967px" width="8" height="10"><path d="M2 1 l3.5 3.5 l-3.5 3.5" stroke="#d0d0d0" fill="none" stroke-width="1.1"/></svg>
<div class="t" style="left:44px;top:965px;color:#d0d0d0;font-size:11.3px;">Hair</div>
<svg style="left:32px;top:989px" width="10" height="8"><path d="M1 2 l3.5 3.5 l3.5 -3.5" stroke="#d0d0d0" fill="none" stroke-width="1.1"/></svg>
<div class="t" style="left:44px;top:986px;color:#d0d0d0;font-size:11.3px;">Interiors</div>
<svg style="left:47px;top:1009px" width="8" height="10"><path d="M2 1 l3.5 3.5 l-3.5 3.5" stroke="#d0d0d0" fill="none" stroke-width="1.1"/></svg>
<div class="t" style="left:57px;top:1007px;color:#d0d0d0;font-size:11.3px;">Marble Blast Gold</div>
<svg style="left:47px;top:1030px" width="8" height="10"><path d="M2 1 l3.5 3.5 l-3.5 3.5" stroke="#d0d0d0" fill="none" stroke-width="1.1"/></svg>
<div class="t" style="left:57px;top:1028px;color:#d0d0d0;font-size:11.3px;">Marble Blast Platinum</div>
<svg style="left:47px;top:1050px" width="8" height="10"><path d="M2 1 l3.5 3.5 l-3.5 3.5" stroke="#d0d0d0" fill="none" stroke-width="1.1"/></svg>
<div class="t" style="left:57px;top:1048px;color:#d0d0d0;font-size:11.3px;">Marble Blast Ultra</div>
<div class="r" style="left:222px;top:857px;width:4px;height:201px;background:#2c2c2c;"></div>
<div class="r" style="left:222px;top:862px;width:3px;height:52px;background:#3d3d3d;border-radius:2px;"></div>
<div class="r" style="left:226px;top:857px;width:1281px;height:201px;background:#282828;border-radius:0 0 6px 0;"></div>
<div class="r" style="left:1503px;top:863px;width:3px;height:50px;background:#3a3a3a;border-radius:2px;"></div>
<svg style="left:1500px;top:872px" width="7" height="10"><path d="M5 1 L1.5 5 L5 9" stroke="#777" fill="none" stroke-width="1"/></svg>
<svg style="left:226px;top:857px" width="1281" height="201" viewBox="226 857 1281 201"><defs><linearGradient id="gwood" x1="0" x2="1"><stop offset="0" stop-color="#b08878"/><stop offset=".5" stop-color="#c09888"/><stop offset="1" stop-color="#a88070"/></linearGradient><linearGradient id="gbrick" x1="0" y1="0" x2="0" y2="1"><stop offset="0" stop-color="#d85838"/><stop offset=".5" stop-color="#f08c6c"/><stop offset="1" stop-color="#c84828"/></linearGradient><linearGradient id="gbrick2" x1="0" y1="0" x2="0" y2="1"><stop offset="0" stop-color="#c04420"/><stop offset=".5" stop-color="#e8744c"/><stop offset="1" stop-color="#b03818"/></linearGradient><linearGradient id="gglass" x1="0" y1="0" x2="1" y2="1"><stop offset="0" stop-color="#a8c0e0"/><stop offset="1" stop-color="#8eaad4"/></linearGradient><linearGradient id="gglass2" x1="0" y1="0" x2="1" y2="1"><stop offset="0" stop-color="#98b4da"/><stop offset="1" stop-color="#6a88b8"/></linearGradient><linearGradient id="ggray" x1="0" y1="0" x2="0" y2="1"><stop offset="0" stop-color="#d8d8d8"/><stop offset="1" stop-color="#c4c4c4"/></linearGradient><linearGradient id="ggold" x1="0" x2="1"><stop offset="0" stop-color="#8a6418"/><stop offset=".5" stop-color="#d4a440"/><stop offset="1" stop-color="#8a6418"/></linearGradient><pattern id="pgold" width="11.5" height="92" patternUnits="userSpaceOnUse"><rect width="11.5" height="92" fill="url(#ggold)"/></pattern><linearGradient id="gred3" x1="0" y1="0" x2="0" y2="1"><stop offset="0" stop-color="#a85038"/><stop offset=".15" stop-color="#cc6448"/><stop offset=".9" stop-color="#c85c42"/><stop offset="1" stop-color="#8a3c28"/></linearGradient><linearGradient id="gred4" x1="0" y1="0" x2="0" y2="1"><stop offset="0" stop-color="#983a20"/><stop offset=".15" stop-color="#b84a30"/><stop offset=".9" stop-color="#b04428"/><stop offset="1" stop-color="#7a2818"/></linearGradient><radialGradient id="gyb" cx=".5" cy=".5" r=".5"><stop offset="0" stop-color="#f0eaa8"/><stop offset=".7" stop-color="#e6dc90"/><stop offset="1" stop-color="#c8bc60"/></radialGradient></defs><svg x="235" y="863" width="92" height="92" viewBox="235 863 92 92"><rect x="235" y="863" width="92" height="92" fill="#d8cc90"/><g fill="#e4482c" fill-opacity="1"><path d="M233 875 Q265 869 281 859 Q306 871 329 877 Q295 871 285 869 Q265 873 233 875 Z"/><path d="M233 889 Q265 883 278 873 Q303 885 329 891 Q295 885 282 883 Q265 887 233 889 Z"/><path d="M233 903 Q265 897 278 887 Q303 899 329 905 Q295 899 282 897 Q265 901 233 903 Z"/><path d="M233 918 Q265 912 278 902 Q303 914 329 920 Q295 914 282 912 Q265 916 233 918 Z"/><path d="M233 932 Q265 926 281 916 Q306 928 329 934 Q295 928 285 926 Q265 930 233 932 Z"/><path d="M233 947 Q265 941 278 931 Q303 943 329 949 Q295 943 282 941 Q265 945 233 947 Z"/><path d="M233 961 Q265 955 277 945 Q302 957 329 963 Q295 957 281 955 Q265 959 233 961 Z"/></g><circle cx="245" cy="945" r="7.5" fill="#f2f2f2" fill-opacity=".85" stroke="#555" stroke-opacity=".5" stroke-width="1"/><path d="M245 945 V937.5 A7.5 7.5 0 0 0 237.5 945 Z M245 945 H252.5 A7.5 7.5 0 0 1 245 952.5 Z" fill="#888" fill-opacity=".6"/></svg><svg x="338" y="863" width="92" height="92" viewBox="338 863 92 92"><rect x="338" y="863" width="92" height="92" fill="#98d07c"/><g fill="#d8bc64" fill-opacity="1"><path d="M336 875 Q368 869 384 859 Q409 871 432 877 Q398 871 388 869 Q368 873 336 875 Z"/><path d="M336 889 Q368 883 381 873 Q406 885 432 891 Q398 885 385 883 Q368 887 336 889 Z"/><path d="M336 903 Q368 897 381 887 Q406 899 432 905 Q398 899 385 897 Q368 901 336 903 Z"/><path d="M336 918 Q368 912 381 902 Q406 914 432 920 Q398 914 385 912 Q368 916 336 918 Z"/><path d="M336 932 Q368 926 384 916 Q409 928 432 934 Q398 928 388 926 Q368 930 336 932 Z"/><path d="M336 947 Q368 941 381 931 Q406 943 432 949 Q398 943 385 941 Q368 945 336 947 Z"/><path d="M336 961 Q368 955 380 945 Q405 957 432 963 Q398 957 384 955 Q368 959 336 961 Z"/></g><circle cx="348" cy="945" r="7.5" fill="#f2f2f2" fill-opacity=".85" stroke="#555" stroke-opacity=".5" stroke-width="1"/><path d="M348 945 V937.5 A7.5 7.5 0 0 0 340.5 945 Z M348 945 H355.5 A7.5 7.5 0 0 1 348 952.5 Z" fill="#888" fill-opacity=".6"/></svg><svg x="440" y="863" width="92" height="92" viewBox="440 863 92 92"><rect x="440" y="863" width="92" height="92" fill="#b89084"/><rect x="440" y="863" width="1.2" height="92" fill="#7a5448" opacity=".35"/><rect x="453" y="863" width="1.2" height="92" fill="#7a5448" opacity=".35"/><rect x="466" y="863" width="1.2" height="92" fill="#7a5448" opacity=".35"/><rect x="490" y="863" width="1.2" height="92" fill="#7a5448" opacity=".35"/><rect x="506" y="863" width="1.2" height="92" fill="#7a5448" opacity=".35"/><rect x="520" y="863" width="1.2" height="92" fill="#7a5448" opacity=".35"/><rect x="440" y="923" width="14" height="1.2" fill="#7a5448" opacity=".35"/><rect x="453" y="883" width="14" height="1.2" fill="#7a5448" opacity=".35"/><rect x="466" y="913" width="14" height="1.2" fill="#7a5448" opacity=".35"/><rect x="490" y="873" width="14" height="1.2" fill="#7a5448" opacity=".35"/><rect x="506" y="903" width="14" height="1.2" fill="#7a5448" opacity=".35"/><rect x="520" y="933" width="14" height="1.2" fill="#7a5448" opacity=".35"/><rect x="470" y="863" width="20" height="92" fill="#e0c0b0" opacity=".18"/><circle cx="450" cy="945" r="7.5" fill="#f2f2f2" fill-opacity=".85" stroke="#555" stroke-opacity=".5" stroke-width="1"/><path d="M450 945 V937.5 A7.5 7.5 0 0 0 442.5 945 Z M450 945 H457.5 A7.5 7.5 0 0 1 450 952.5 Z" fill="#888" fill-opacity=".6"/></svg><svg x="543" y="863" width="92" height="92" viewBox="543 863 92 92"><rect x="543" y="863" width="92" height="92" fill="#9a7466"/><rect x="543" y="863" width="1.2" height="92" fill="#5a3a30" opacity=".35"/><rect x="556" y="863" width="1.2" height="92" fill="#5a3a30" opacity=".35"/><rect x="569" y="863" width="1.2" height="92" fill="#5a3a30" opacity=".35"/><rect x="593" y="863" width="1.2" height="92" fill="#5a3a30" opacity=".35"/><rect x="609" y="863" width="1.2" height="92" fill="#5a3a30" opacity=".35"/><rect x="623" y="863" width="1.2" height="92" fill="#5a3a30" opacity=".35"/><rect x="543" y="923" width="14" height="1.2" fill="#5a3a30" opacity=".35"/><rect x="556" y="883" width="14" height="1.2" fill="#5a3a30" opacity=".35"/><rect x="569" y="913" width="14" height="1.2" fill="#5a3a30" opacity=".35"/><rect x="593" y="873" width="14" height="1.2" fill="#5a3a30" opacity=".35"/><rect x="609" y="903" width="14" height="1.2" fill="#5a3a30" opacity=".35"/><rect x="623" y="933" width="14" height="1.2" fill="#5a3a30" opacity=".35"/><rect x="573" y="863" width="20" height="92" fill="#c8a090" opacity=".18"/><circle cx="553" cy="945" r="7.5" fill="#f2f2f2" fill-opacity=".85" stroke="#555" stroke-opacity=".5" stroke-width="1"/><path d="M553 945 V937.5 A7.5 7.5 0 0 0 545.5 945 Z M553 945 H560.5 A7.5 7.5 0 0 1 553 952.5 Z" fill="#888" fill-opacity=".6"/></svg><svg x="646" y="863" width="92" height="92" viewBox="646 863 92 92"><rect x="646" y="863" width="92" height="92" fill="#6088e6"/><g stroke="#d8e4ff" stroke-width="1" fill="none" opacity=".85"><path d="M656 893 H666 V881 H681 V891 H688 L692 918 L681 935 H668 V925 L658 921 Z"/><path d="M694 888 H716 L726 905 L724 935 H706 L696 925 Z"/><path d="M664 903 H676 V915 H666 Z M704 895 H716 V909 H704 Z M730 883 V933 M661 943 H691"/></g><rect x="698" y="866" width="36" height="6" fill="#d8e4ff" opacity=".6"/><rect x="696" y="943" width="36" height="6" fill="#d8e4ff" opacity=".35"/><circle cx="656" cy="945" r="7.5" fill="#f2f2f2" fill-opacity=".85" stroke="#555" stroke-opacity=".5" stroke-width="1"/><path d="M656 945 V937.5 A7.5 7.5 0 0 0 648.5 945 Z M656 945 H663.5 A7.5 7.5 0 0 1 656 952.5 Z" fill="#888" fill-opacity=".6"/></svg><svg x="749" y="863" width="92" height="92" viewBox="749 863 92 92"><rect x="749" y="863" width="92" height="92" fill="#d8d0bc"/><rect x="749" y="863" width="42" height="18" fill="url(#gbrick)"/><rect x="794" y="863" width="47" height="18" fill="url(#gbrick)"/><rect x="749" y="884" width="18" height="20" fill="url(#gbrick)"/><rect x="770" y="884" width="45" height="20" fill="url(#gbrick)"/><rect x="817" y="884" width="24" height="20" fill="url(#gbrick)"/><rect x="749" y="907" width="42" height="20" fill="url(#gbrick)"/><rect x="794" y="907" width="47" height="20" fill="url(#gbrick)"/><rect x="749" y="930" width="18" height="20" fill="url(#gbrick)"/><rect x="770" y="930" width="45" height="20" fill="url(#gbrick)"/><rect x="817" y="930" width="24" height="20" fill="url(#gbrick)"/><circle cx="759" cy="945" r="7.5" fill="#f2f2f2" fill-opacity=".85" stroke="#555" stroke-opacity=".5" stroke-width="1"/><path d="M759 945 V937.5 A7.5 7.5 0 0 0 751.5 945 Z M759 945 H766.5 A7.5 7.5 0 0 1 759 952.5 Z" fill="#888" fill-opacity=".6"/></svg><svg x="851" y="863" width="92" height="92" viewBox="851 863 92 92"><rect x="851" y="863" width="92" height="92" fill="#c8c0ac"/><rect x="851" y="863" width="42" height="18" fill="url(#gbrick2)"/><rect x="896" y="863" width="47" height="18" fill="url(#gbrick2)"/><rect x="851" y="884" width="18" height="20" fill="url(#gbrick2)"/><rect x="872" y="884" width="45" height="20" fill="url(#gbrick2)"/><rect x="919" y="884" width="24" height="20" fill="url(#gbrick2)"/><rect x="851" y="907" width="42" height="20" fill="url(#gbrick2)"/><rect x="896" y="907" width="47" height="20" fill="url(#gbrick2)"/><rect x="851" y="930" width="18" height="20" fill="url(#gbrick2)"/><rect x="872" y="930" width="45" height="20" fill="url(#gbrick2)"/><rect x="919" y="930" width="24" height="20" fill="url(#gbrick2)"/><circle cx="861" cy="945" r="7.5" fill="#f2f2f2" fill-opacity=".85" stroke="#555" stroke-opacity=".5" stroke-width="1"/><path d="M861 945 V937.5 A7.5 7.5 0 0 0 853.5 945 Z M861 945 H868.5 A7.5 7.5 0 0 1 861 952.5 Z" fill="#888" fill-opacity=".6"/></svg><svg x="954" y="863" width="92" height="92" viewBox="954 863 92 92"><rect x="954" y="863" width="92" height="92" fill="#cfcac2"/><rect x="954" y="863" width="92" height="92" fill="#a09888" opacity=".15"/><path d="M1000 863 V955 M954 909 H1046" stroke="#b8b2a8" stroke-width="1"/><circle cx="966" cy="875" r="1.2" fill="#8a847a"/><circle cx="988" cy="875" r="1.2" fill="#8a847a"/><circle cx="1010" cy="875" r="1.2" fill="#8a847a"/><circle cx="1032" cy="875" r="1.2" fill="#8a847a"/><circle cx="966" cy="897" r="1.2" fill="#8a847a"/><circle cx="988" cy="897" r="1.2" fill="#8a847a"/><circle cx="1010" cy="897" r="1.2" fill="#8a847a"/><circle cx="1032" cy="897" r="1.2" fill="#8a847a"/><circle cx="966" cy="919" r="1.2" fill="#8a847a"/><circle cx="988" cy="919" r="1.2" fill="#8a847a"/><circle cx="1010" cy="919" r="1.2" fill="#8a847a"/><circle cx="1032" cy="919" r="1.2" fill="#8a847a"/><circle cx="966" cy="941" r="1.2" fill="#8a847a"/><circle cx="988" cy="941" r="1.2" fill="#8a847a"/><circle cx="1010" cy="941" r="1.2" fill="#8a847a"/><circle cx="1032" cy="941" r="1.2" fill="#8a847a"/><circle cx="964" cy="945" r="7.5" fill="#f2f2f2" fill-opacity=".85" stroke="#555" stroke-opacity=".5" stroke-width="1"/><path d="M964 945 V937.5 A7.5 7.5 0 0 0 956.5 945 Z M964 945 H971.5 A7.5 7.5 0 0 1 964 952.5 Z" fill="#888" fill-opacity=".6"/></svg><svg x="1057" y="863" width="92" height="92" viewBox="1057 863 92 92"><rect x="1057" y="863" width="92" height="92" fill="url(#gglass)"/><path d="M1105 863 V955 M1057 910 C1087 907 1117 913 1149 909" stroke="#b4b4b4" stroke-width="8" fill="none"/><path d="M1105 863 V955 M1057 910 C1087 907 1117 913 1149 909" stroke="#555" stroke-width=".8" fill="none"/><path d="M1100 863 V955 M1110 863 V955 M1057 905 H1149 M1057 915 H1149" stroke="#6a7f99" stroke-width=".8" opacity=".5"/><path d="M1065 863 L1025 955" stroke="#ffffff" stroke-width="1" opacity=".12"/><path d="M1074 863 L1034 955" stroke="#ffffff" stroke-width="1" opacity=".12"/><path d="M1083 863 L1043 955" stroke="#ffffff" stroke-width="1" opacity=".12"/><path d="M1092 863 L1052 955" stroke="#ffffff" stroke-width="1" opacity=".12"/><path d="M1101 863 L1061 955" stroke="#ffffff" stroke-width="1" opacity=".12"/><path d="M1110 863 L1070 955" stroke="#ffffff" stroke-width="1" opacity=".12"/><path d="M1119 863 L1079 955" stroke="#ffffff" stroke-width="1" opacity=".12"/><path d="M1128 863 L1088 955" stroke="#ffffff" stroke-width="1" opacity=".12"/><path d="M1137 863 L1097 955" stroke="#ffffff" stroke-width="1" opacity=".12"/><path d="M1146 863 L1106 955" stroke="#ffffff" stroke-width="1" opacity=".12"/><path d="M1155 863 L1115 955" stroke="#ffffff" stroke-width="1" opacity=".12"/><path d="M1164 863 L1124 955" stroke="#ffffff" stroke-width="1" opacity=".12"/><path d="M1173 863 L1133 955" stroke="#ffffff" stroke-width="1" opacity=".12"/><path d="M1182 863 L1142 955" stroke="#ffffff" stroke-width="1" opacity=".12"/><circle cx="1067" cy="945" r="7.5" fill="#f2f2f2" fill-opacity=".85" stroke="#555" stroke-opacity=".5" stroke-width="1"/><path d="M1067 945 V937.5 A7.5 7.5 0 0 0 1059.5 945 Z M1067 945 H1074.5 A7.5 7.5 0 0 1 1067 952.5 Z" fill="#888" fill-opacity=".6"/></svg><svg x="1159" y="863" width="92" height="92" viewBox="1159 863 92 92"><rect x="1159" y="863" width="92" height="92" fill="url(#gglass2)"/><path d="M1207 863 V955 M1159 910 C1189 907 1219 913 1251 909" stroke="#b4b4b4" stroke-width="8" fill="none"/><path d="M1207 863 V955 M1159 910 C1189 907 1219 913 1251 909" stroke="#555" stroke-width=".8" fill="none"/><path d="M1202 863 V955 M1212 863 V955 M1159 905 H1251 M1159 915 H1251" stroke="#6a7f99" stroke-width=".8" opacity=".5"/><path d="M1167 863 L1127 955" stroke="#ffffff" stroke-width="1" opacity=".12"/><path d="M1176 863 L1136 955" stroke="#ffffff" stroke-width="1" opacity=".12"/><path d="M1185 863 L1145 955" stroke="#ffffff" stroke-width="1" opacity=".12"/><path d="M1194 863 L1154 955" stroke="#ffffff" stroke-width="1" opacity=".12"/><path d="M1203 863 L1163 955" stroke="#ffffff" stroke-width="1" opacity=".12"/><path d="M1212 863 L1172 955" stroke="#ffffff" stroke-width="1" opacity=".12"/><path d="M1221 863 L1181 955" stroke="#ffffff" stroke-width="1" opacity=".12"/><path d="M1230 863 L1190 955" stroke="#ffffff" stroke-width="1" opacity=".12"/><path d="M1239 863 L1199 955" stroke="#ffffff" stroke-width="1" opacity=".12"/><path d="M1248 863 L1208 955" stroke="#ffffff" stroke-width="1" opacity=".12"/><path d="M1257 863 L1217 955" stroke="#ffffff" stroke-width="1" opacity=".12"/><path d="M1266 863 L1226 955" stroke="#ffffff" stroke-width="1" opacity=".12"/><path d="M1275 863 L1235 955" stroke="#ffffff" stroke-width="1" opacity=".12"/><path d="M1284 863 L1244 955" stroke="#ffffff" stroke-width="1" opacity=".12"/><circle cx="1169" cy="945" r="7.5" fill="#f2f2f2" fill-opacity=".85" stroke="#555" stroke-opacity=".5" stroke-width="1"/><path d="M1169 945 V937.5 A7.5 7.5 0 0 0 1161.5 945 Z M1169 945 H1176.5 A7.5 7.5 0 0 1 1169 952.5 Z" fill="#888" fill-opacity=".6"/></svg><svg x="1262" y="863" width="92" height="92" viewBox="1262 863 92 92"><rect x="1262" y="863" width="92" height="92" fill="url(#gglass)"/><path d="M1310 863 V955 M1262 910 C1292 907 1322 913 1354 909" stroke="#b4b4b4" stroke-width="8" fill="none"/><path d="M1310 863 V955 M1262 910 C1292 907 1322 913 1354 909" stroke="#555" stroke-width=".8" fill="none"/><path d="M1305 863 V955 M1315 863 V955 M1262 905 H1354 M1262 915 H1354" stroke="#6a7f99" stroke-width=".8" opacity=".5"/><path d="M1270 863 L1230 955" stroke="#ffffff" stroke-width="1" opacity=".12"/><path d="M1279 863 L1239 955" stroke="#ffffff" stroke-width="1" opacity=".12"/><path d="M1288 863 L1248 955" stroke="#ffffff" stroke-width="1" opacity=".12"/><path d="M1297 863 L1257 955" stroke="#ffffff" stroke-width="1" opacity=".12"/><path d="M1306 863 L1266 955" stroke="#ffffff" stroke-width="1" opacity=".12"/><path d="M1315 863 L1275 955" stroke="#ffffff" stroke-width="1" opacity=".12"/><path d="M1324 863 L1284 955" stroke="#ffffff" stroke-width="1" opacity=".12"/><path d="M1333 863 L1293 955" stroke="#ffffff" stroke-width="1" opacity=".12"/><path d="M1342 863 L1302 955" stroke="#ffffff" stroke-width="1" opacity=".12"/><path d="M1351 863 L1311 955" stroke="#ffffff" stroke-width="1" opacity=".12"/><path d="M1360 863 L1320 955" stroke="#ffffff" stroke-width="1" opacity=".12"/><path d="M1369 863 L1329 955" stroke="#ffffff" stroke-width="1" opacity=".12"/><path d="M1378 863 L1338 955" stroke="#ffffff" stroke-width="1" opacity=".12"/><path d="M1387 863 L1347 955" stroke="#ffffff" stroke-width="1" opacity=".12"/><path d="M1262 884 L1352 874 L1354 920 L1262 927 Z" fill="#dcdcdc"/><path d="M1282 885 H1327 M1270 898 H1350 M1266 905 H1352 M1272 912 H1347" stroke="#555" stroke-width="1.6" stroke-dasharray="2 1" opacity=".7"/><circle cx="1272" cy="945" r="7.5" fill="#f2f2f2" fill-opacity=".85" stroke="#555" stroke-opacity=".5" stroke-width="1"/><path d="M1272 945 V937.5 A7.5 7.5 0 0 0 1264.5 945 Z M1272 945 H1279.5 A7.5 7.5 0 0 1 1272 952.5 Z" fill="#888" fill-opacity=".6"/></svg><svg x="1365" y="863" width="92" height="92" viewBox="1365 863 92 92"><rect x="1365" y="863" width="92" height="92" fill="#caa494"/><rect x="1365" y="863" width="1.2" height="92" fill="#a07868" opacity=".35"/><rect x="1378" y="863" width="1.2" height="92" fill="#a07868" opacity=".35"/><rect x="1391" y="863" width="1.2" height="92" fill="#a07868" opacity=".35"/><rect x="1415" y="863" width="1.2" height="92" fill="#a07868" opacity=".35"/><rect x="1431" y="863" width="1.2" height="92" fill="#a07868" opacity=".35"/><rect x="1445" y="863" width="1.2" height="92" fill="#a07868" opacity=".35"/><rect x="1365" y="923" width="14" height="1.2" fill="#a07868" opacity=".35"/><rect x="1378" y="883" width="14" height="1.2" fill="#a07868" opacity=".35"/><rect x="1391" y="913" width="14" height="1.2" fill="#a07868" opacity=".35"/><rect x="1415" y="873" width="14" height="1.2" fill="#a07868" opacity=".35"/><rect x="1431" y="903" width="14" height="1.2" fill="#a07868" opacity=".35"/><rect x="1445" y="933" width="14" height="1.2" fill="#a07868" opacity=".35"/><rect x="1395" y="863" width="20" height="92" fill="#e8c8b8" opacity=".18"/><circle cx="1375" cy="945" r="7.5" fill="#f2f2f2" fill-opacity=".85" stroke="#555" stroke-opacity=".5" stroke-width="1"/><path d="M1375 945 V937.5 A7.5 7.5 0 0 0 1367.5 945 Z M1375 945 H1382.5 A7.5 7.5 0 0 1 1375 952.5 Z" fill="#888" fill-opacity=".6"/></svg><svg x="235" y="976" width="92" height="92" viewBox="235 976 92 92"><rect x="235" y="976" width="92" height="92" fill="#8a6456"/><rect x="235" y="976" width="1.2" height="92" fill="#5a3a30" opacity=".35"/><rect x="248" y="976" width="1.2" height="92" fill="#5a3a30" opacity=".35"/><rect x="261" y="976" width="1.2" height="92" fill="#5a3a30" opacity=".35"/><rect x="285" y="976" width="1.2" height="92" fill="#5a3a30" opacity=".35"/><rect x="301" y="976" width="1.2" height="92" fill="#5a3a30" opacity=".35"/><rect x="315" y="976" width="1.2" height="92" fill="#5a3a30" opacity=".35"/><rect x="235" y="1036" width="14" height="1.2" fill="#5a3a30" opacity=".35"/><rect x="248" y="996" width="14" height="1.2" fill="#5a3a30" opacity=".35"/><rect x="261" y="1026" width="14" height="1.2" fill="#5a3a30" opacity=".35"/><rect x="285" y="986" width="14" height="1.2" fill="#5a3a30" opacity=".35"/><rect x="301" y="1016" width="14" height="1.2" fill="#5a3a30" opacity=".35"/><rect x="315" y="1046" width="14" height="1.2" fill="#5a3a30" opacity=".35"/><rect x="265" y="976" width="20" height="92" fill="#a88070" opacity=".18"/><circle cx="245" cy="1058" r="7.5" fill="#f2f2f2" fill-opacity=".85" stroke="#555" stroke-opacity=".5" stroke-width="1"/><path d="M245 1058 V1050.5 A7.5 7.5 0 0 0 237.5 1058 Z M245 1058 H252.5 A7.5 7.5 0 0 1 245 1065.5 Z" fill="#888" fill-opacity=".6"/></svg><svg x="338" y="976" width="92" height="92" viewBox="338 976 92 92"><rect x="338" y="976" width="92" height="92" fill="#b89084"/><rect x="338" y="976" width="1.2" height="92" fill="#7a5448" opacity=".35"/><rect x="351" y="976" width="1.2" height="92" fill="#7a5448" opacity=".35"/><rect x="364" y="976" width="1.2" height="92" fill="#7a5448" opacity=".35"/><rect x="388" y="976" width="1.2" height="92" fill="#7a5448" opacity=".35"/><rect x="404" y="976" width="1.2" height="92" fill="#7a5448" opacity=".35"/><rect x="418" y="976" width="1.2" height="92" fill="#7a5448" opacity=".35"/><rect x="338" y="1036" width="14" height="1.2" fill="#7a5448" opacity=".35"/><rect x="351" y="996" width="14" height="1.2" fill="#7a5448" opacity=".35"/><rect x="364" y="1026" width="14" height="1.2" fill="#7a5448" opacity=".35"/><rect x="388" y="986" width="14" height="1.2" fill="#7a5448" opacity=".35"/><rect x="404" y="1016" width="14" height="1.2" fill="#7a5448" opacity=".35"/><rect x="418" y="1046" width="14" height="1.2" fill="#7a5448" opacity=".35"/><rect x="368" y="976" width="20" height="92" fill="#e0c0b0" opacity=".18"/><rect x="338" y="990" width="92" height="46" fill="#dadada"/><path d="M363 1001 H405 M350 1014 H418 M350 1021 H418 M358 1028 H410" stroke="#555" stroke-width="1.5" stroke-dasharray="2 1" opacity=".7"/><circle cx="348" cy="1058" r="7.5" fill="#f2f2f2" fill-opacity=".85" stroke="#555" stroke-opacity=".5" stroke-width="1"/><path d="M348 1058 V1050.5 A7.5 7.5 0 0 0 340.5 1058 Z M348 1058 H355.5 A7.5 7.5 0 0 1 348 1065.5 Z" fill="#888" fill-opacity=".6"/></svg><svg x="440" y="976" width="92" height="92" viewBox="440 976 92 92"><rect x="440" y="976" width="92" height="92" fill="#e2d890"/><path d="M475 976 C475 1006 470 1021 440 1026 M532 1021 C500 1026 490 1046 492 1068" stroke="#c8bc68" stroke-width="9" fill="none"/><path d="M478 976 C478 1008 472 1023 440 1029" stroke="#f4eeb0" stroke-width="1.5" fill="none"/><circle cx="457" cy="998" r="9" fill="#eae2a0" stroke="#b0a450" stroke-width="1.5"/><circle cx="512" cy="998" r="9" fill="#eae2a0" stroke="#b0a450" stroke-width="1.5"/><circle cx="457" cy="1052" r="9" fill="#eae2a0" stroke="#b0a450" stroke-width="1.5"/><circle cx="512" cy="1052" r="9" fill="#eae2a0" stroke="#b0a450" stroke-width="1.5"/><circle cx="450" cy="1058" r="7.5" fill="#f2f2f2" fill-opacity=".85" stroke="#555" stroke-opacity=".5" stroke-width="1"/><path d="M450 1058 V1050.5 A7.5 7.5 0 0 0 442.5 1058 Z M450 1058 H457.5 A7.5 7.5 0 0 1 450 1065.5 Z" fill="#888" fill-opacity=".6"/></svg><svg x="543" y="976" width="92" height="92" viewBox="543 976 92 92"><rect x="543" y="976" width="92" height="92" fill="url(#gyb)"/><circle cx="591" cy="1020" r="20" fill="#d8d080"/><circle cx="589" cy="1017" r="17" fill="#f2eebc"/><path d="M573 1031 A20 20 0 0 0 611 1024" stroke="#a89c48" stroke-width="2" fill="none"/><circle cx="553" cy="1058" r="7.5" fill="#f2f2f2" fill-opacity=".85" stroke="#555" stroke-opacity=".5" stroke-width="1"/><path d="M553 1058 V1050.5 A7.5 7.5 0 0 0 545.5 1058 Z M553 1058 H560.5 A7.5 7.5 0 0 1 553 1065.5 Z" fill="#888" fill-opacity=".6"/></svg><svg x="646" y="976" width="92" height="92" viewBox="646 976 92 92"><rect x="646" y="976" width="92" height="92" fill="url(#pgold)"/><circle cx="656" cy="1058" r="7.5" fill="#f2f2f2" fill-opacity=".85" stroke="#555" stroke-opacity=".5" stroke-width="1"/><path d="M656 1058 V1050.5 A7.5 7.5 0 0 0 648.5 1058 Z M656 1058 H663.5 A7.5 7.5 0 0 1 656 1065.5 Z" fill="#888" fill-opacity=".6"/></svg><svg x="749" y="976" width="92" height="92" viewBox="749 976 92 92"><rect x="749" y="976" width="92" height="92" fill="url(#ggray)"/><rect x="749" y="976" width="92" height="10" fill="#b8b8b8"/><rect x="749" y="986" width="92" height="2" fill="#f0f0f0"/><rect x="749" y="988" width="92" height="2" fill="#8a8a8a"/><rect x="749" y="1058" width="92" height="10" fill="#c8c8c8"/><circle cx="759" cy="1058" r="7.5" fill="#f2f2f2" fill-opacity=".85" stroke="#555" stroke-opacity=".5" stroke-width="1"/><path d="M759 1058 V1050.5 A7.5 7.5 0 0 0 751.5 1058 Z M759 1058 H766.5 A7.5 7.5 0 0 1 759 1065.5 Z" fill="#888" fill-opacity=".6"/></svg><svg x="851" y="976" width="92" height="92" viewBox="851 976 92 92"><rect x="851" y="976" width="92" height="92" fill="url(#ggray)"/><circle cx="861" cy="1058" r="7.5" fill="#f2f2f2" fill-opacity=".85" stroke="#555" stroke-opacity=".5" stroke-width="1"/><path d="M861 1058 V1050.5 A7.5 7.5 0 0 0 853.5 1058 Z M861 1058 H868.5 A7.5 7.5 0 0 1 861 1065.5 Z" fill="#888" fill-opacity=".6"/></svg><svg x="954" y="976" width="92" height="92" viewBox="954 976 92 92"><rect x="954" y="976" width="92" height="92" fill="url(#ggray)"/><rect x="954" y="976" width="92" height="10" fill="#b8b8b8"/><rect x="954" y="986" width="92" height="2" fill="#f0f0f0"/><rect x="954" y="988" width="92" height="2" fill="#8a8a8a"/><rect x="954" y="1058" width="92" height="10" fill="#c8c8c8"/><circle cx="964" cy="1058" r="7.5" fill="#f2f2f2" fill-opacity=".85" stroke="#555" stroke-opacity=".5" stroke-width="1"/><path d="M964 1058 V1050.5 A7.5 7.5 0 0 0 956.5 1058 Z M964 1058 H971.5 A7.5 7.5 0 0 1 964 1065.5 Z" fill="#888" fill-opacity=".6"/></svg><svg x="1057" y="976" width="92" height="92" viewBox="1057 976 92 92"><rect x="1057" y="976" width="92" height="92" fill="url(#ggray)"/><circle cx="1067" cy="1058" r="7.5" fill="#f2f2f2" fill-opacity=".85" stroke="#555" stroke-opacity=".5" stroke-width="1"/><path d="M1067 1058 V1050.5 A7.5 7.5 0 0 0 1059.5 1058 Z M1067 1058 H1074.5 A7.5 7.5 0 0 1 1067 1065.5 Z" fill="#888" fill-opacity=".6"/></svg><svg x="1159" y="976" width="92" height="92" viewBox="1159 976 92 92"><rect x="1159" y="976" width="92" height="92" fill="url(#gred3)"/><rect x="1159" y="988" width="92" height="2" fill="#f0b090" opacity=".6"/><rect x="1159" y="990" width="92" height="2" fill="#702818" opacity=".5"/><circle cx="1171" cy="982" r="3" fill="#c8b8b0" stroke="#5a4a40" stroke-width=".8"/><circle cx="1205" cy="982" r="3" fill="#c8b8b0" stroke="#5a4a40" stroke-width=".8"/><circle cx="1239" cy="982" r="3" fill="#c8b8b0" stroke="#5a4a40" stroke-width=".8"/><circle cx="1169" cy="1058" r="7.5" fill="#f2f2f2" fill-opacity=".85" stroke="#555" stroke-opacity=".5" stroke-width="1"/><path d="M1169 1058 V1050.5 A7.5 7.5 0 0 0 1161.5 1058 Z M1169 1058 H1176.5 A7.5 7.5 0 0 1 1169 1065.5 Z" fill="#888" fill-opacity=".6"/></svg><svg x="1262" y="976" width="92" height="92" viewBox="1262 976 92 92"><rect x="1262" y="976" width="92" height="92" fill="url(#gred4)"/><rect x="1262" y="988" width="92" height="2" fill="#f0b090" opacity=".6"/><rect x="1262" y="990" width="92" height="2" fill="#702818" opacity=".5"/><circle cx="1274" cy="982" r="3" fill="#c8b8b0" stroke="#5a4a40" stroke-width=".8"/><circle cx="1308" cy="982" r="3" fill="#c8b8b0" stroke="#5a4a40" stroke-width=".8"/><circle cx="1342" cy="982" r="3" fill="#c8b8b0" stroke="#5a4a40" stroke-width=".8"/><circle cx="1272" cy="1058" r="7.5" fill="#f2f2f2" fill-opacity=".85" stroke="#555" stroke-opacity=".5" stroke-width="1"/><path d="M1272 1058 V1050.5 A7.5 7.5 0 0 0 1264.5 1058 Z M1272 1058 H1279.5 A7.5 7.5 0 0 1 1272 1065.5 Z" fill="#888" fill-opacity=".6"/></svg><svg x="1365" y="976" width="92" height="92" viewBox="1365 976 92 92"><rect x="1365" y="976" width="92" height="92" fill="#d87058"/><circle cx="1375" cy="1058" r="7.5" fill="#f2f2f2" fill-opacity=".85" stroke="#555" stroke-opacity=".5" stroke-width="1"/><path d="M1375 1058 V1050.5 A7.5 7.5 0 0 0 1367.5 1058 Z M1375 1058 H1382.5 A7.5 7.5 0 0 1 1375 1065.5 Z" fill="#888" fill-opacity=".6"/></svg></svg>
<div class="t" style="left:81px;width:400px;text-align:center;top:958px;color:#dcdcdc;font-size:11.3px;">pq_chevron_hot_1</div>
<div class="t" style="left:184px;width:400px;text-align:center;top:958px;color:#dcdcdc;font-size:11.3px;">pq_chevron_neut...</div>
<div class="t" style="left:286px;width:400px;text-align:center;top:958px;color:#dcdcdc;font-size:11.3px;">custom_woodbox</div>
<div class="t" style="left:389px;width:400px;text-align:center;top:958px;color:#dcdcdc;font-size:11.3px;">custom_woodbo...</div>
<div class="t" style="left:492px;width:400px;text-align:center;top:958px;color:#dcdcdc;font-size:11.3px;">pccblueprint</div>
<div class="t" style="left:595px;width:400px;text-align:center;top:958px;color:#dcdcdc;font-size:11.3px;">pq_construction...</div>
<div class="t" style="left:697px;width:400px;text-align:center;top:958px;color:#dcdcdc;font-size:11.3px;">pq_construction...</div>
<div class="t" style="left:800px;width:400px;text-align:center;top:958px;color:#dcdcdc;font-size:11.3px;">pq_construction...</div>
<div class="t" style="left:903px;width:400px;text-align:center;top:958px;color:#dcdcdc;font-size:11.3px;">pq_construction...</div>
<div class="t" style="left:1005px;width:400px;text-align:center;top:958px;color:#dcdcdc;font-size:11.3px;">pq_construction...</div>
<div class="t" style="left:1108px;width:400px;text-align:center;top:958px;color:#dcdcdc;font-size:11.3px;">pq_construction...</div>
<div class="t" style="left:1211px;width:400px;text-align:center;top:958px;color:#dcdcdc;font-size:11.3px;">pq_construction...</div>
<div class="r" style="left:1510px;top:24px;width:314px;height:24px;background:#282828;border-radius:6px 6px 0 0;"></div>
<div class="r" style="left:1518px;top:27px;width:30px;height:17px;background:#282828;border-radius:4px;border:1px solid #333;"></div>
<svg style="left:1520px;top:27px" width="28" height="17" viewBox="0 0 28 17"><rect x="2" y="2" width="5" height="3" fill="#e0e0e0"/><path d="M4 5 V14 H8 M4 9 H8" stroke="#e0e0e0" fill="none"/><rect x="9" y="7.5" width="7" height="3" fill="#e0e0e0"/><rect x="9" y="12.5" width="7" height="3" fill="#e0e0e0"/><path d="M19 7 l2.5 2.5 l2.5 -2.5" stroke="#cfcfcf" fill="none" stroke-width="1.1"/></svg>
<div class="r" style="left:1553px;top:27px;width:30px;height:17px;background:#282828;border-radius:4px;border:1px solid #333;"></div>
<svg style="left:1555px;top:27px" width="28" height="17" viewBox="0 0 28 17"><rect x="2" y="6" width="9" height="9" fill="none" stroke="#d0d0d0"/><rect x="4" y="4" width="9" height="9" fill="#282828" stroke="#d0d0d0"/><rect x="6" y="2" width="9" height="9" fill="#d0d0d0"/><path d="M7 10 L10 6 L12 8.5 L13.5 7 L15 10 Z" fill="#282828"/><path d="M19 7 l2.5 2.5 l2.5 -2.5" stroke="#cfcfcf" fill="none" stroke-width="1.1"/></svg>
<div class="r" style="left:1601px;top:27px;width:113px;height:17px;background:#1d1d1d;border-radius:4px;border:1px solid #303030;"></div>
<svg style="left:1604px;top:27px" width="16" height="17" viewBox="0 0 16 17"><circle cx="9" cy="7" r="4.2" fill="none" stroke="#cfcfcf" stroke-width="1.3"/><path d="M6 10 L2 14" stroke="#cfcfcf" stroke-width="1.5"/></svg>
<div class="t" style="left:1625px;top:28px;color:#777;font-size:11.3px;">Search</div>
<div class="r" style="left:1764px;top:27px;width:30px;height:17px;background:#282828;border-radius:4px;border:1px solid #333;"></div>
<svg style="left:1766px;top:27px" width="28" height="17" viewBox="0 0 28 17"><path d="M2 3 H15 L10 9 V15 L7 13 V9 Z" fill="none" stroke="#d8d8d8" stroke-width="1.2"/><path d="M18 7 l2.5 2.5 l2.5 -2.5" stroke="#cfcfcf" fill="none" stroke-width="1.1"/></svg>
<div class="r" style="left:1800px;top:27px;width:19px;height:18px;background:#4a4a4a;border-radius:4px;"></div>
<svg style="left:1801px;top:28px" width="17" height="16" viewBox="0 0 17 16"><rect x="2" y="5" width="11" height="9" fill="none" stroke="#bbb"/><rect x="2" y="4" width="11" height="3" fill="#bbb"/><circle cx="13" cy="4" r="3.2" fill="#bbb"/><path d="M13 2 V6 M11 4 H15" stroke="#4a4a4a" stroke-width="1.1"/></svg>
<div class="r" style="left:1510px;top:50px;width:314px;height:19px;background:#282828;"></div>
<div class="r" style="left:1510px;top:68px;width:314px;height:19px;background:#2b2b2b;"></div>
<div class="r" style="left:1510px;top:88px;width:314px;height:19px;background:#282828;"></div>
<div class="r" style="left:1510px;top:106px;width:314px;height:19px;background:#334d80;"></div>
<div class="r" style="left:1510px;top:125px;width:314px;height:19px;background:#282828;"></div>
<div class="r" style="left:1510px;top:144px;width:314px;height:19px;background:#2b2b2b;"></div>
<div class="r" style="left:1510px;top:163px;width:314px;height:19px;background:#282828;"></div>
<div class="r" style="left:1510px;top:182px;width:314px;height:19px;background:#2b2b2b;"></div>
<div class="r" style="left:1510px;top:201px;width:314px;height:19px;background:#282828;"></div>
<div class="r" style="left:1510px;top:220px;width:314px;height:19px;background:#2b2b2b;"></div>
<div class="r" style="left:1510px;top:239px;width:314px;height:19px;background:#282828;"></div>
<div class="r" style="left:1510px;top:258px;width:314px;height:19px;background:#2b2b2b;"></div>
<div class="r" style="left:1510px;top:277px;width:314px;height:19px;background:#282828;"></div>
<div class="r" style="left:1510px;top:296px;width:314px;height:19px;background:#2b2b2b;"></div>
<div class="r" style="left:1510px;top:315px;width:314px;height:19px;background:#282828;"></div>
<div class="r" style="left:1510px;top:334px;width:314px;height:19px;background:#2b2b2b;"></div>
<div class="r" style="left:1510px;top:24px;width:314px;height:331px;background:transparent;border-radius:6px;box-shadow:0 0 0 0 #000;"></div>
<div class="r" style="left:1518px;top:349px;width:252px;height:4px;background:#383838;border-radius:2px;"></div>
<svg style="left:1532px;top:52px" width="14" height="14" viewBox="0 0 14 14"><rect x="1" y="1" width="12" height="3" fill="#e0e0e0"/><rect x="1.5" y="5" width="11" height="8" fill="#e0e0e0"/><rect x="5" y="7" width="4" height="1.5" fill="#282828"/></svg>
<div class="t" style="left:1552px;top:52px;color:#d8d8d8;font-size:11.3px;">Scene Collection</div>
<svg style="left:1535px;top:74px" width="10" height="8"><path d="M1 2 l4 4 l4 -4" stroke="#cfcfcf" fill="none" stroke-width="1.1"/></svg>
<div class="r" style="left:1548px;top:69px;width:19px;height:18px;background:#444;border-radius:4px;"></div>
<svg style="left:1551px;top:71px" width="14" height="14" viewBox="0 0 14 14"><rect x="1" y="1" width="12" height="3" fill="#e0e0e0"/><rect x="1.5" y="5" width="11" height="8" fill="#e0e0e0"/><rect x="5" y="7" width="4" height="1.5" fill="#282828"/></svg>
<div class="t" style="left:1571px;top:71px;color:#e6e6e6;font-size:11.3px;">Collection</div>
<div class="r" style="left:1764px;top:72px;width:12px;height:12px;background:#e8e8e8;border-radius:2px;"></div>
<svg style="left:1764px;top:72px" width="12" height="12"><path d="M2.5 6 L5 8.8 L9.5 3" stroke="#222" fill="none" stroke-width="1.6"/></svg>
<svg style="left:1782px;top:71px" width="17" height="14" viewBox="0 0 17 14"><path d="M1.5 7 C4 2.5 13 2.5 15.5 7 C13 11.5 4 11.5 1.5 7 Z" fill="none" stroke="#e6e6e6" stroke-width="1.4"/><circle cx="8.5" cy="7" r="2.3" fill="#e6e6e6"/></svg>
<svg style="left:1801px;top:71px" width="15" height="14" viewBox="0 0 15 14"><rect x="1" y="3" width="13" height="10" rx="1.5" fill="#e6e6e6"/><rect x="4" y="1" width="6" height="3" fill="#e6e6e6"/><circle cx="7.5" cy="8" r="3.2" fill="#2b2b2b"/><circle cx="7.5" cy="8" r="1.8" fill="#e6e6e6"/></svg>
<svg style="left:1782px;top:90px" width="17" height="14" viewBox="0 0 17 14"><path d="M1.5 7 C4 2.5 13 2.5 15.5 7 C13 11.5 4 11.5 1.5 7 Z" fill="none" stroke="#e6e6e6" stroke-width="1.4"/><circle cx="8.5" cy="7" r="2.3" fill="#e6e6e6"/></svg>
<svg style="left:1801px;top:90px" width="15" height="14" viewBox="0 0 15 14"><rect x="1" y="3" width="13" height="10" rx="1.5" fill="#e6e6e6"/><rect x="4" y="1" width="6" height="3" fill="#e6e6e6"/><circle cx="7.5" cy="8" r="3.2" fill="#282828"/><circle cx="7.5" cy="8" r="1.8" fill="#e6e6e6"/></svg>
<svg style="left:1782px;top:109px" width="17" height="14" viewBox="0 0 17 14"><path d="M1.5 7 C4 2.5 13 2.5 15.5 7 C13 11.5 4 11.5 1.5 7 Z" fill="none" stroke="#e6e6e6" stroke-width="1.4"/><circle cx="8.5" cy="7" r="2.3" fill="#e6e6e6"/></svg>
<svg style="left:1801px;top:109px" width="15" height="14" viewBox="0 0 15 14"><rect x="1" y="3" width="13" height="10" rx="1.5" fill="#e6e6e6"/><rect x="4" y="1" width="6" height="3" fill="#e6e6e6"/><circle cx="7.5" cy="8" r="3.2" fill="#334d80"/><circle cx="7.5" cy="8" r="1.8" fill="#e6e6e6"/></svg>
<svg style="left:1782px;top:128px" width="17" height="14" viewBox="0 0 17 14"><path d="M1.5 7 C4 2.5 13 2.5 15.5 7 C13 11.5 4 11.5 1.5 7 Z" fill="none" stroke="#e6e6e6" stroke-width="1.4"/><circle cx="8.5" cy="7" r="2.3" fill="#e6e6e6"/></svg>
<svg style="left:1801px;top:128px" width="15" height="14" viewBox="0 0 15 14"><rect x="1" y="3" width="13" height="10" rx="1.5" fill="#e6e6e6"/><rect x="4" y="1" width="6" height="3" fill="#e6e6e6"/><circle cx="7.5" cy="8" r="3.2" fill="#282828"/><circle cx="7.5" cy="8" r="1.8" fill="#e6e6e6"/></svg>
<div class="r" style="left:1538px;top:90px;width:1px;height:51px;background:#555;"></div>
<svg style="left:1517px;top:94px" width="5" height="5"><circle cx="2.5" cy="2.5" r="2" fill="#e0e0e0"/></svg>
<svg style="left:1555px;top:92px" width="8" height="10"><path d="M2 1 l3.5 4 l-3.5 4" stroke="#cfcfcf" fill="none" stroke-width="1.1"/></svg>
<svg style="left:1570px;top:90px" width="14" height="14" viewBox="0 0 14 14"><path d="M2 2 H12 L7 12 Z M4.8 4.5 H9.2 L7 9 Z" fill="#e8883a" fill-rule="evenodd"/></svg>
<div class="t" style="left:1590px;top:90px;color:#d8d8d8;font-size:11.3px;">Cube</div>
<svg style="left:1638px;top:89px" width="14" height="14" viewBox="0 0 14 14"><path d="M2.5 3 L11.5 3 L7 11.5 Z" fill="none" stroke="#21b792" stroke-width="1.3"/><circle cx="2.5" cy="3" r="1.6" fill="#21b792"/><circle cx="11.5" cy="3" r="1.6" fill="#21b792"/><circle cx="7" cy="11.5" r="1.6" fill="#21b792"/></svg>
<svg style="left:1513px;top:108px" width="15" height="15" viewBox="0 0 15 15"><rect x="1" y="2" width="3" height="3" fill="none" stroke="#d0d0d0" stroke-width=".9"/><rect x="9" y="1" width="4" height="4" fill="#e8e8e8"/><rect x="1" y="11" width="3" height="3" fill="none" stroke="#d0d0d0" stroke-width=".9"/><rect x="10" y="11" width="3" height="3" fill="none" stroke="#d0d0d0" stroke-width=".9"/><path d="M4 3.5 H9 M2.5 5 V11 M11.5 5 V11 M4 12.5 H10" stroke="#d0d0d0" stroke-width=".9"/></svg>
<svg style="left:1555px;top:111px" width="8" height="10"><path d="M2 1 l3.5 4 l-3.5 4" stroke="#cfcfcf" fill="none" stroke-width="1.1"/></svg>
<div class="r" style="left:1567px;top:107px;width:20px;height:18px;background:#5a6a8a;border-radius:4px;"></div>
<svg style="left:1570px;top:109px" width="14" height="14" viewBox="0 0 14 14"><path d="M2 2 H12 L7 12 Z M4.8 4.5 H9.2 L7 9 Z" fill="#e8883a" fill-rule="evenodd"/></svg>
<div class="t" style="left:1590px;top:109px;color:#f0a048;font-size:11.3px;">Cylinder</div>
<div class="r" style="left:1651px;top:106px;width:19px;height:19px;background:#3a6a7a;border-radius:4px;"></div>
<svg style="left:1654px;top:108px" width="14" height="14" viewBox="0 0 14 14"><path d="M2.5 3 L11.5 3 L7 11.5 Z" fill="none" stroke="#21b792" stroke-width="1.3"/><circle cx="2.5" cy="3" r="1.6" fill="#21b792"/><circle cx="11.5" cy="3" r="1.6" fill="#21b792"/><circle cx="7" cy="11.5" r="1.6" fill="#21b792"/></svg>
<svg style="left:1517px;top:132px" width="5" height="5"><circle cx="2.5" cy="2.5" r="2" fill="#e0e0e0"/></svg>
<svg style="left:1555px;top:130px" width="8" height="10"><path d="M2 1 l3.5 4 l-3.5 4" stroke="#cfcfcf" fill="none" stroke-width="1.1"/></svg>
<svg style="left:1570px;top:128px" width="14" height="14" viewBox="0 0 14 14"><path d="M2 2 H12 L7 12 Z M4.8 4.5 H9.2 L7 9 Z" fill="#e8883a" fill-rule="evenodd"/></svg>
<div class="t" style="left:1590px;top:128px;color:#d8d8d8;font-size:11.3px;">Mesh Edges to Path with Trim</div>
</body></html>
